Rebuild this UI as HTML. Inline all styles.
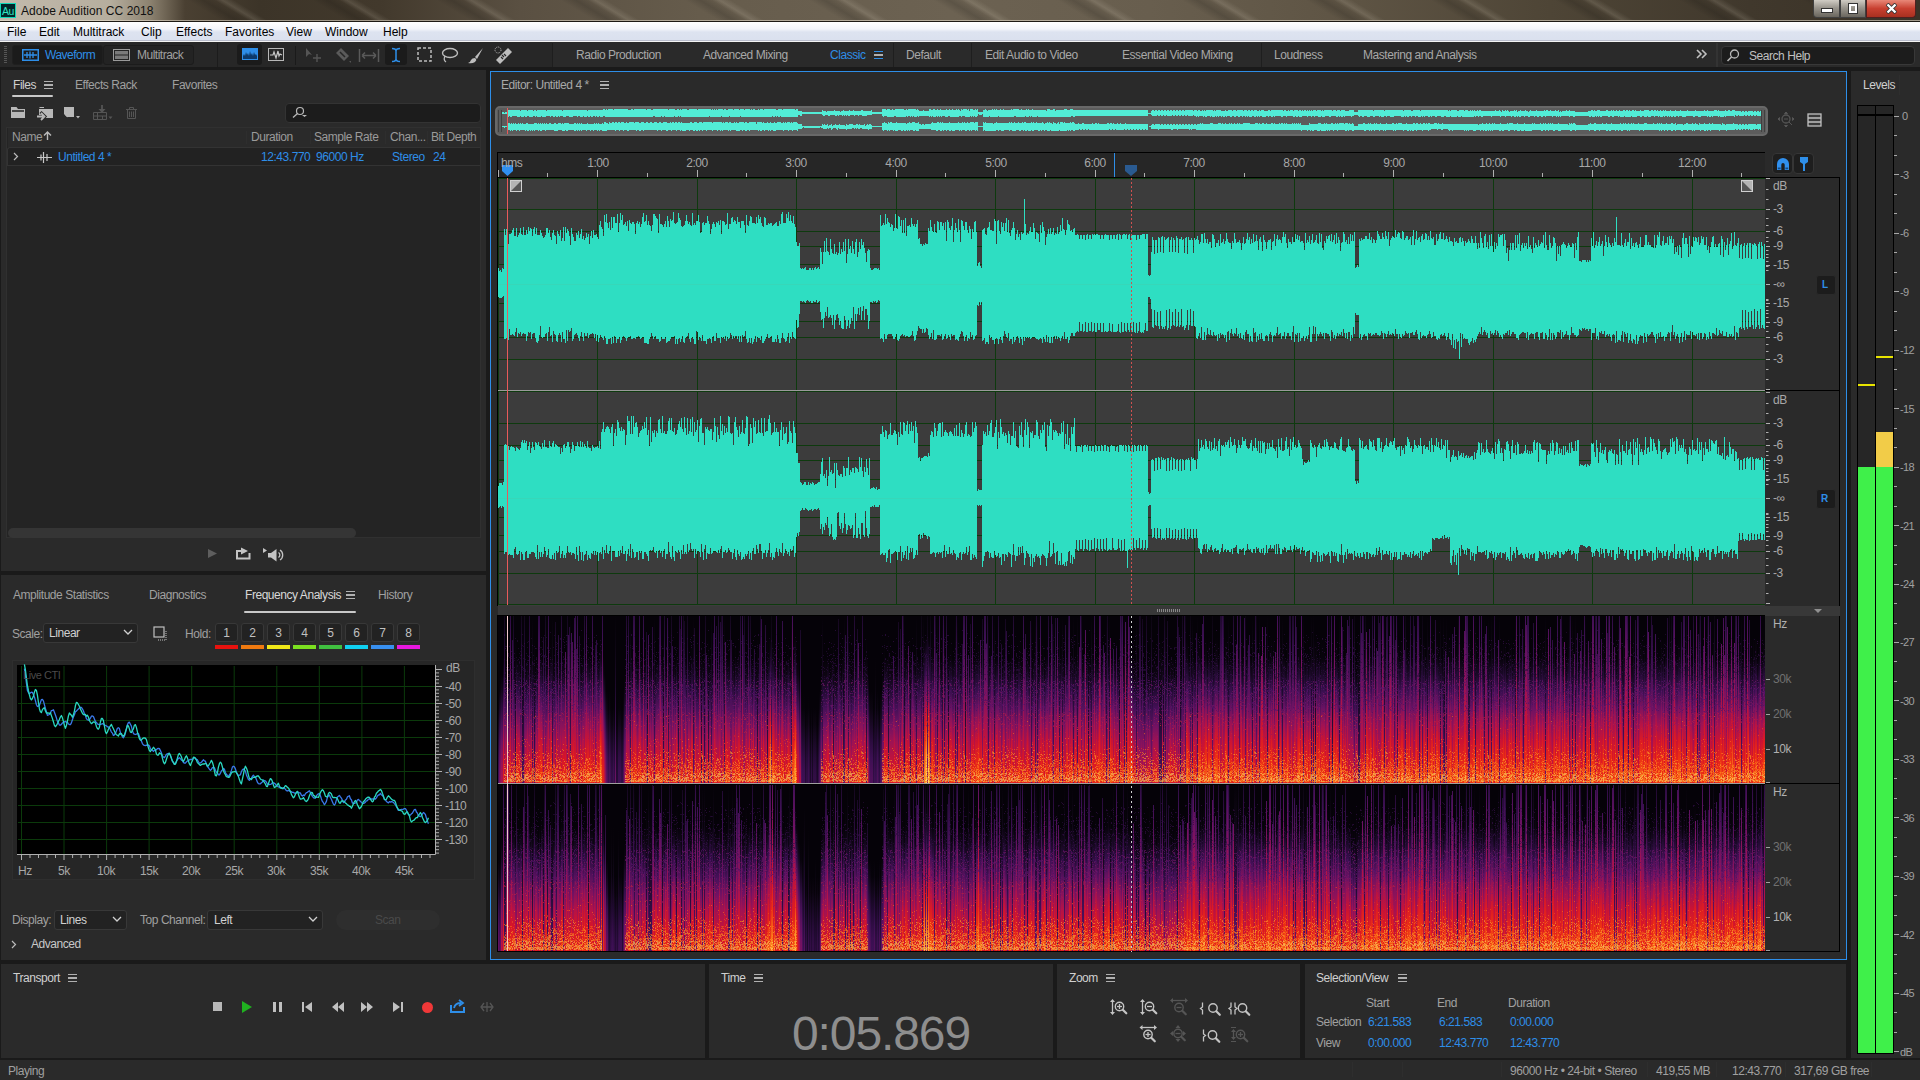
<!DOCTYPE html>
<html><head><meta charset="utf-8">
<style>
*{box-sizing:border-box;margin:0;padding:0}
html,body{width:1920px;height:1080px;overflow:hidden;background:#1a1a1a;font-family:"Liberation Sans",sans-serif;font-size:12px;color:#a8a8a8}
.a{position:absolute}
.t{position:absolute;white-space:nowrap;letter-spacing:-0.45px;line-height:14px}
.pn{position:absolute;background:#2a2a2a}
.blue{color:#2e8ee8}
.hb{position:absolute;width:9px;height:8px;border-top:1.5px solid #b0b0b0;border-bottom:1.5px solid #b0b0b0}
.hb:after{content:"";position:absolute;left:0;right:0;top:2px;height:1.5px;background:#b0b0b0}
</style></head><body>
<!-- TITLE BAR -->
<div class="a" style="left:0;top:0;width:1920px;height:22px;background:linear-gradient(90deg,#c2baac 0px,#b6ae9e 110px,#8c8270 150px,#4a4032 185px,#3c3428 260px,#42392c 380px,#5a5042 520px,#665c4c 700px,#6c6252 950px,#685e4e 1150px,#5e5444 1350px,#4e4536 1550px,#40382c 1750px,#3a3227 1920px)"></div>
<div class="a" style="left:170px;top:0;width:1640px;height:20px;background:repeating-linear-gradient(31deg,transparent 0px,transparent 26px,rgba(0,0,0,0.15) 34px,rgba(0,0,0,0.04) 40px,rgba(255,245,225,0.12) 44px,transparent 50px,transparent 64px)"></div>
<div class="a" style="left:0;top:20px;width:1920px;height:1px;background:rgba(230,222,205,0.6)"></div>
<div class="a" style="left:0;top:21px;width:1920px;height:1px;background:#1e1a14"></div>
<div class="a" style="left:0;top:3px;width:16px;height:15px;background:#00262a;border:1px solid #10d8b8"></div>
<div class="t" style="left:2px;top:4px;font-size:10.5px;color:#30e4c4;letter-spacing:-0.6px">Au</div>
<div class="t" style="left:21px;top:4px;font-size:12px;color:#101010;letter-spacing:0.05px">Adobe Audition CC 2018</div>
<div class="a" style="left:1813px;top:0;width:27px;height:18px;border:1px solid #404040;border-top:none;border-radius:0 0 0 4px;background:linear-gradient(#d0ccc4,#9a968e 45%,#6a665e)"></div>
<div class="a" style="left:1822px;top:9px;width:10px;height:3px;background:#fff;box-shadow:0 0 0 1px #333"></div>
<div class="a" style="left:1840px;top:0;width:26px;height:18px;border:1px solid #404040;border-top:none;background:linear-gradient(#d0ccc4,#9a968e 45%,#6a665e)"></div>
<div class="a" style="left:1849px;top:4px;width:8px;height:9px;border:2px solid #fff;box-shadow:0 0 0 1px #333"></div>
<div class="a" style="left:1866px;top:0;width:50px;height:18px;border:1px solid #502020;border-top:none;border-radius:0 0 4px 0;background:linear-gradient(#e88878,#c84030 50%,#a83020)"></div>
<svg class="a" style="left:1886px;top:3px" width="11" height="11"><path d="M1 1L10 10M10 1L1 10" stroke="#333" stroke-width="4"/><path d="M1.5 1.5L9.5 9.5M9.5 1.5L1.5 9.5" stroke="#fff" stroke-width="2.4"/></svg>
<!-- MENU BAR -->
<div class="a" style="left:0;top:22px;width:1920px;height:20px;background:linear-gradient(#ffffff 0,#f3f5fa 35%,#dde3f0 50%,#dae0ee 100%)"></div>
<div class="a" style="left:0;top:40px;width:1920px;height:1px;background:#b9bdcc"></div><div class="a" style="left:0;top:41px;width:1920px;height:1px;background:#f4f4f4"></div>
<div class="t" style="top:25px;left:7px;color:#000;letter-spacing:0">File</div>
<div class="t" style="top:25px;left:39px;color:#000;letter-spacing:0">Edit</div>
<div class="t" style="top:25px;left:73px;color:#000;letter-spacing:0">Multitrack</div>
<div class="t" style="top:25px;left:141px;color:#000;letter-spacing:0">Clip</div>
<div class="t" style="top:25px;left:176px;color:#000;letter-spacing:0">Effects</div>
<div class="t" style="top:25px;left:225px;color:#000;letter-spacing:0">Favorites</div>
<div class="t" style="top:25px;left:286px;color:#000;letter-spacing:0">View</div>
<div class="t" style="top:25px;left:325px;color:#000;letter-spacing:0">Window</div>
<div class="t" style="top:25px;left:383px;color:#000;letter-spacing:0">Help</div>
<!-- TOOLBAR -->
<div class="a" style="left:0;top:42px;width:1920px;height:25px;background:#2a2a2a"></div><div class="a" style="left:0;top:42px;width:552px;height:25px;background:#272727"></div>
<div class="a" style="left:4px;top:46px;width:3px;height:18px;background:repeating-linear-gradient(#555 0 1px,transparent 1px 2px)"></div>
<div class="a" style="left:12px;top:45px;width:91px;height:20px;background:#1b1b1b;border:1px solid #1f1f1f;border-radius:3px"></div>
<div class="a" style="left:103px;top:45px;width:91px;height:20px;background:#232323;border:1px solid #1c1c1c;border-radius:3px"></div>
<svg class="a" style="left:22px;top:49px" width="17" height="12"><rect x="0.75" y="0.75" width="15.5" height="10.5" fill="none" stroke="#2e8ee8" stroke-width="1.5"/><path d="M2 6H15M5 3V9M8 2.5V9.5M11 3V9" stroke="#2e8ee8" stroke-width="1.3"/></svg>
<div class="t blue" style="left:45px;top:48px;letter-spacing:-0.5px">Waveform</div>
<svg class="a" style="left:113px;top:49px" width="17" height="12"><rect x="0.5" y="0.5" width="16" height="11" fill="none" stroke="#9a9a9a" stroke-width="1"/><rect x="2" y="2" width="13" height="3.5" fill="#7a7a7a"/><rect x="2" y="6.5" width="13" height="3.5" fill="#7a7a7a"/></svg>
<div class="t" style="left:137px;top:48px;color:#a0a0a0;letter-spacing:-0.5px">Multitrack</div>
<div class="a" style="left:217px;top:43px;width:1px;height:24px;background:#1c1c1c"></div>
<div class="a" style="left:237px;top:44px;width:25px;height:21px;background:#1b1b1b;border-radius:3px"></div>
<svg class="a" style="left:242px;top:48px" width="16" height="12"><rect x="0" y="0" width="16" height="12" fill="#2e8ee8"/><path d="M1 11V8L2 6L3 8L4 4L5 7L6 5L7 8L8 3L9 7L10 5L11 8L12 4L13 7L14 6L15 8V11Z" fill="#0d3a6a"/></svg>
<svg class="a" style="left:268px;top:48px" width="16" height="13"><rect x="0.5" y="0.5" width="15" height="12" fill="none" stroke="#b8b8b8"/><path d="M2 7H5L6 4L8 10L10 3L11 8L12 6L14 7" fill="none" stroke="#c8c8c8" stroke-width="1.2"/></svg>
<div class="a" style="left:295px;top:46px;width:1px;height:19px;background:#1a1a1a"></div>
<svg class="a" style="left:305px;top:47px" width="19" height="16"><path d="M1 1V10L4 7L7 8Z" fill="#555"/><path d="M12 7V15M8 11H16" stroke="#555" stroke-width="1.4"/></svg>
<svg class="a" style="left:334px;top:47px" width="19" height="17"><path d="M2 6L7 1L15 9L10 14Z" fill="#5a5a5a"/><path d="M6 5L11 10" stroke="#262626" stroke-width="1.5"/><path d="M15 14L17 14L17 16Z" fill="#555"/></svg>
<svg class="a" style="left:358px;top:48px" width="22" height="15"><path d="M1.5 1V14M20.5 1V14M4 7.5H18M4 7.5L7 4.5M4 7.5L7 10.5M18 7.5L15 4.5M18 7.5L15 10.5" stroke="#5a5a5a" stroke-width="1.5" fill="none"/></svg>
<div class="a" style="left:385px;top:44px;width:22px;height:21px;background:#1b1b1b;border-radius:3px"></div>
<svg class="a" style="left:390px;top:47px" width="12" height="16"><path d="M2 1.5Q6 1.5 6 4V12Q6 14.5 2 14.5M10 1.5Q6 1.5 6 4V12Q6 14.5 10 14.5" stroke="#2e8ee8" stroke-width="1.5" fill="none"/></svg>
<svg class="a" style="left:417px;top:47px" width="15" height="15"><rect x="1" y="1" width="13" height="13" fill="none" stroke="#bdbdbd" stroke-width="1.5" stroke-dasharray="3 2"/></svg>
<svg class="a" style="left:441px;top:47px" width="18" height="16"><ellipse cx="9" cy="6" rx="7.5" ry="4.5" fill="none" stroke="#bdbdbd" stroke-width="1.4"/><path d="M4 9Q2 13 5 15" stroke="#bdbdbd" stroke-width="1.2" fill="none"/></svg>
<svg class="a" style="left:467px;top:47px" width="18" height="17"><path d="M16 1L8 10L10 12Z" fill="#bdbdbd"/><path d="M8 11Q5 11 4 13Q3 16 1 16Q5 17 8 15Q10 13 9 12Z" fill="#bdbdbd"/></svg>
<svg class="a" style="left:494px;top:46px" width="19" height="19"><path d="M14 2L18 6L6 18L2 14Z" fill="#bdbdbd"/><path d="M8 9L10 11M10 8L12 10M7 11L9 13" stroke="#262626" stroke-width="1.2"/><circle cx="4" cy="4" r="3" fill="none" stroke="#bdbdbd" stroke-dasharray="1 1"/></svg>
<div class="a" style="left:552px;top:43px;width:1px;height:24px;background:#1e1e1e"></div>
<div class="t" style="left:576px;top:48px;color:#a8a8a8">Radio Production</div>
<div class="t" style="left:703px;top:48px;color:#a8a8a8">Advanced Mixing</div>
<div class="t blue" style="left:830px;top:48px">Classic</div>
<div class="hb" style="left:874px;top:51px;border-color:#2e8ee8;width:9px"></div>
<div class="a" style="left:893px;top:43px;width:1px;height:24px;background:#1e1e1e"></div>
<div class="t" style="left:906px;top:48px;color:#a8a8a8">Default</div>
<div class="a" style="left:971px;top:43px;width:1px;height:24px;background:#1e1e1e"></div>
<div class="t" style="left:985px;top:48px;color:#a8a8a8">Edit Audio to Video</div>
<div class="t" style="left:1122px;top:48px;color:#a8a8a8">Essential Video Mixing</div>
<div class="a" style="left:1261px;top:43px;width:1px;height:24px;background:#1e1e1e"></div>
<div class="t" style="left:1274px;top:48px;color:#a8a8a8">Loudness</div>
<div class="t" style="left:1363px;top:48px;color:#a8a8a8">Mastering and Analysis</div>
<svg class="a" style="left:1696px;top:49px" width="12" height="10"><path d="M1 1L5 5L1 9M6 1L10 5L6 9" stroke="#c0c0c0" stroke-width="1.6" fill="none"/></svg>
<div class="a" style="left:1716px;top:43px;width:2px;height:24px;background:#333"></div>
<div class="a" style="left:1721px;top:46px;width:194px;height:19px;background:#1c1c1c;border:1px solid #383838;border-radius:4px"></div>
<svg class="a" style="left:1726px;top:49px" width="14" height="14"><circle cx="8.5" cy="5" r="4" fill="none" stroke="#b8b8b8" stroke-width="1.3"/><path d="M5.5 8L1.5 12" stroke="#b8b8b8" stroke-width="1.6"/></svg>
<div class="t" style="left:1749px;top:49px;color:#c0c0c0">Search Help</div>
<!-- FILES PANEL -->
<div class="pn" style="left:1px;top:70px;width:485px;height:501px"></div>
<div class="t" style="left:13px;top:78px;color:#d0d0d0">Files</div>
<div class="hb" style="left:44px;top:81px"></div>
<div class="a" style="left:12px;top:95px;width:41px;height:2px;background:#c8c8c8;border-radius:1px"></div>
<div class="t" style="left:75px;top:78px;color:#a0a0a0">Effects Rack</div>
<div class="t" style="left:172px;top:78px;color:#a0a0a0">Favorites</div>
<svg class="a" style="left:10px;top:104px" width="140" height="18">
<path d="M1 3H6.5L8 5H15V14H1Z" fill="#b8b8b8"/><path d="M2 7H14" stroke="#2a2a2a" stroke-width="1.6"/>
<path d="M29.5 3.5H34" stroke="#b8b8b8" stroke-width="1"/><rect x="29" y="5" width="14" height="9" fill="#b8b8b8"/><path d="M27 12.5H33M30.5 8L35 12.5L30.5 17" stroke="#2a2a2a" stroke-width="3" fill="none"/><path d="M27 12.5H33M31 9L34.5 12.5L31 16" stroke="#b8b8b8" stroke-width="1.8" fill="none"/>
<path d="M54 3H64V13H57L54 10Z" fill="#b8b8b8"/><path d="M54.5 10.5L57.5 13.5V10.5Z" fill="#b8b8b8"/><path d="M66 12H70L68 14.5Z" fill="#b8b8b8"/>
<path d="M83.5 8.5H96.5V15.5H83.5ZM83.5 12H96.5M87.5 8.5V15.5M92.5 12V15.5" fill="none" stroke="#555" stroke-width="1"/><path d="M92 1V6" stroke="#555" stroke-width="1.8"/><path d="M88.5 5L92 9L95.5 5Z" fill="#555"/><path d="M98.5 12.5H102.5L100.5 15Z" fill="#555"/>
<path d="M116 5.5H127M117.5 6V14.5H125.5V6M119.5 7.5V13M121.5 7.5V13M123.5 7.5V13M119.5 5V3.5H123.5V5" stroke="#555" stroke-width="1" fill="none"/>
</svg>
<div class="a" style="left:285px;top:103px;width:196px;height:20px;background:#1c1c1c;border:1px solid #333;border-radius:4px"></div>
<svg class="a" style="left:290px;top:106px" width="20" height="12"><circle cx="10" cy="5" r="3.5" fill="none" stroke="#b8b8b8" stroke-width="1.2"/><path d="M7.5 7.5L3 11.5" stroke="#b8b8b8" stroke-width="1.3"/><path d="M12 9H17L14.5 11Z" fill="#b8b8b8"/></svg>
<div class="a" style="left:6px;top:127px;width:475px;height:411px;border:1px solid #303030;background:#242424"></div>
<div class="a" style="left:8px;top:128px;width:472px;height:19px;background:#2a2a2a"></div><div class="t" style="left:12px;top:130px;color:#9a9a9a">Name</div>
<svg class="a" style="left:43px;top:131px" width="9" height="10"><path d="M4.5 9V1M1 4.5L4.5 1L8 4.5" stroke="#bbb" stroke-width="1.4" fill="none"/></svg>
<div class="a" style="left:246px;top:131px;width:1px;height:13px;background:#2e2e2e"></div>
<div class="a" style="left:310px;top:131px;width:1px;height:13px;background:#2e2e2e"></div>
<div class="a" style="left:385px;top:131px;width:1px;height:13px;background:#2e2e2e"></div>
<div class="a" style="left:427px;top:131px;width:1px;height:13px;background:#2e2e2e"></div>
<div class="t" style="left:251px;top:130px;color:#9a9a9a">Duration</div>
<div class="t" style="left:314px;top:130px;color:#9a9a9a">Sample Rate</div>
<div class="t" style="left:390px;top:130px;color:#9a9a9a">Chan...</div>
<div class="t" style="left:431px;top:130px;color:#9a9a9a">Bit Depth</div>
<div class="a" style="left:7px;top:147px;width:473px;height:19px;background:#222222;border-top:1px solid #333;border-bottom:1px solid #333;border-left:1px solid #333;border-radius:3px 0 0 0"></div>
<svg class="a" style="left:13px;top:152px" width="6" height="9"><path d="M1 1L4.5 4.5L1 8" stroke="#bbb" stroke-width="1.2" fill="none"/></svg>
<svg class="a" style="left:37px;top:151px" width="15" height="12"><path d="M0 6.5H15M4 3.5V9.5M6.5 1V12M10 3V10" stroke="#c8c8c8" stroke-width="1.2"/></svg>
<div class="t blue" style="left:58px;top:150px">Untitled 4 *</div>
<div class="t blue" style="left:261px;top:150px">12:43.770</div>
<div class="t blue" style="left:316px;top:150px">96000 Hz</div>
<div class="t blue" style="left:392px;top:150px">Stereo</div>
<div class="t blue" style="left:433px;top:150px">24</div>
<div class="a" style="left:8px;top:528px;width:348px;height:10px;background:#353535;border-radius:5px"></div>
<svg class="a" style="left:205px;top:545px" width="85" height="20"><path d="M3 4L12 8.5L3 13Z" fill="#5e5e5e"/><path d="M32 5V13.5H44.5V8" fill="none" stroke="#c4c4c4" stroke-width="2"/><path d="M31 6H36" stroke="#c4c4c4" stroke-width="2"/><path d="M36 2.5V9.5L43 6Z" fill="#c4c4c4"/><path d="M58 3V8L62 5.5Z" fill="#c4c4c4"/><path d="M63 8H66L71.5 4V16.5L66 12.5H63Z" fill="#c4c4c4"/><path d="M73.5 7.5A3 3 0 0 1 73.5 12.5M75 5A6 6 0 0 1 75 15" fill="none" stroke="#c4c4c4" stroke-width="1.3"/></svg>
<!-- FREQUENCY ANALYSIS PANEL -->
<div class="pn" style="left:1px;top:575px;width:485px;height:385px"></div>
<div class="t" style="left:13px;top:588px;color:#a0a0a0">Amplitude Statistics</div>
<div class="t" style="left:149px;top:588px;color:#a0a0a0">Diagnostics</div>
<div class="t" style="left:245px;top:588px;color:#d8d8d8">Frequency Analysis</div>
<div class="hb" style="left:346px;top:591px"></div>
<div class="t" style="left:378px;top:588px;color:#a0a0a0">History</div>
<div class="a" style="left:244px;top:611px;width:112px;height:2px;background:#c8c8c8;border-radius:1px"></div>
<div class="t" style="left:12px;top:627px;color:#a0a0a0">Scale:</div>
<div class="a" style="left:43px;top:623px;width:95px;height:20px;background:#222222;border:1px solid #383838;border-radius:3px"></div>
<div class="t" style="left:49px;top:626px;color:#d0d0d0">Linear</div>
<svg class="a" style="left:123px;top:629px" width="10" height="7"><path d="M1 1L5 5L9 1" stroke="#d0d0d0" stroke-width="1.3" fill="none"/></svg>
<svg class="a" style="left:153px;top:626px" width="16" height="16"><rect x="1" y="1" width="10" height="10" fill="none" stroke="#c0c0c0" stroke-width="1.2"/><path d="M13 5V14H4" stroke="#c0c0c0" stroke-dasharray="1 1" fill="none"/></svg>
<div class="t" style="left:185px;top:627px;color:#a0a0a0">Hold:</div>
<div class="a" style="left:215px;top:623px;width:23px;height:19px;background:#222222;border:1px solid #383838;border-radius:3px"></div><div class="t" style="left:215px;top:626px;width:23px;text-align:center;color:#c0c0c0;letter-spacing:0">1</div><div class="a" style="left:215px;top:645px;width:23px;height:4px;background:#e8120e"></div><div class="a" style="left:241px;top:623px;width:23px;height:19px;background:#222222;border:1px solid #383838;border-radius:3px"></div><div class="t" style="left:241px;top:626px;width:23px;text-align:center;color:#c0c0c0;letter-spacing:0">2</div><div class="a" style="left:241px;top:645px;width:23px;height:4px;background:#f07a10"></div><div class="a" style="left:267px;top:623px;width:23px;height:19px;background:#222222;border:1px solid #383838;border-radius:3px"></div><div class="t" style="left:267px;top:626px;width:23px;text-align:center;color:#c0c0c0;letter-spacing:0">3</div><div class="a" style="left:267px;top:645px;width:23px;height:4px;background:#f0e818"></div><div class="a" style="left:293px;top:623px;width:23px;height:19px;background:#222222;border:1px solid #383838;border-radius:3px"></div><div class="t" style="left:293px;top:626px;width:23px;text-align:center;color:#c0c0c0;letter-spacing:0">4</div><div class="a" style="left:293px;top:645px;width:23px;height:4px;background:#7ce020"></div><div class="a" style="left:319px;top:623px;width:23px;height:19px;background:#222222;border:1px solid #383838;border-radius:3px"></div><div class="t" style="left:319px;top:626px;width:23px;text-align:center;color:#c0c0c0;letter-spacing:0">5</div><div class="a" style="left:319px;top:645px;width:23px;height:4px;background:#40c040"></div><div class="a" style="left:345px;top:623px;width:23px;height:19px;background:#222222;border:1px solid #383838;border-radius:3px"></div><div class="t" style="left:345px;top:626px;width:23px;text-align:center;color:#c0c0c0;letter-spacing:0">6</div><div class="a" style="left:345px;top:645px;width:23px;height:4px;background:#10d0f0"></div><div class="a" style="left:371px;top:623px;width:23px;height:19px;background:#222222;border:1px solid #383838;border-radius:3px"></div><div class="t" style="left:371px;top:626px;width:23px;text-align:center;color:#c0c0c0;letter-spacing:0">7</div><div class="a" style="left:371px;top:645px;width:23px;height:4px;background:#3890f0"></div><div class="a" style="left:397px;top:623px;width:23px;height:19px;background:#222222;border:1px solid #383838;border-radius:3px"></div><div class="t" style="left:397px;top:626px;width:23px;text-align:center;color:#c0c0c0;letter-spacing:0">8</div><div class="a" style="left:397px;top:645px;width:23px;height:4px;background:#e818e0"></div>
<div class="a" style="left:12px;top:660px;width:463px;height:220px;border:1px solid #2e2e2e;background:#262626"></div>
<div class="a" style="left:17px;top:665px;width:418px;height:189px;background:#000"></div>
<svg class="a" style="left:0;top:0" width="490" height="960"><path d="M21.5 666V854M64.0 666V854M106.6 666V854M149.1 666V854M191.7 666V854M234.2 666V854M276.8 666V854M319.3 666V854M361.9 666V854M404.4 666V854M18 686.5H435M18 703.5H435M18 720.5H435M18 737.5H435M18 754.5H435M18 771.5H435M18 788.5H435M18 805.5H435M18 822.5H435M18 839.5H435" stroke="#0b3a0b" stroke-width="1" fill="none"/><path d="M435.5 665V854.5H17M435 669.5h7M435 672.9h4M435 676.3h4M435 679.7h4M435 683.1h4M435 686.5h7M435 689.9h4M435 693.3h4M435 696.7h4M435 700.1h4M435 703.5h7M435 706.9h4M435 710.3h4M435 713.7h4M435 717.1h4M435 720.5h7M435 723.9h4M435 727.3h4M435 730.7h4M435 734.1h4M435 737.5h7M435 740.9h4M435 744.3h4M435 747.7h4M435 751.1h4M435 754.5h7M435 757.9h4M435 761.3h4M435 764.7h4M435 768.1h4M435 771.5h7M435 774.9h4M435 778.3h4M435 781.7h4M435 785.1h4M435 788.5h7M435 791.9h4M435 795.3h4M435 798.7h4M435 802.1h4M435 805.5h7M435 808.9h4M435 812.3h4M435 815.7h4M435 819.1h4M435 822.5h7M435 825.9h4M435 829.3h4M435 832.7h4M435 836.1h4M435 839.5h7M435 842.9h4M435 846.3h4M435 849.7h4M435 853.1h4M21.5 854v6M30.0 854v4M38.5 854v4M47.0 854v4M55.5 854v4M64.0 854v6M72.6 854v4M81.1 854v4M89.6 854v4M98.1 854v4M106.6 854v6M115.1 854v4M123.6 854v4M132.1 854v4M140.6 854v4M149.1 854v6M157.7 854v4M166.2 854v4M174.7 854v4M183.2 854v4M191.7 854v6M200.2 854v4M208.7 854v4M217.2 854v4M225.7 854v4M234.2 854v6M242.8 854v4M251.3 854v4M259.8 854v4M268.3 854v4M276.8 854v6M285.3 854v4M293.8 854v4M302.3 854v4M310.8 854v4M319.3 854v6M327.9 854v4M336.4 854v4M344.9 854v4M353.4 854v4M361.9 854v6M370.4 854v4M378.9 854v4M387.4 854v4M395.9 854v4M404.4 854v6M413.0 854v4M421.5 854v4M430.0 854v4" stroke="#b0b0b0" stroke-width="1" fill="none"/><path d="M24.4 668.7L25.4 674.5L26.4 682.9L27.4 690.4L28.4 692.5L29.4 693.9L30.4 692.9L31.4 692.2L32.4 692.4L33.4 694.5L34.4 696.9L35.4 700.5L36.4 704.5L37.4 706.5L38.4 706.2L39.4 705.2L40.4 702.5L41.4 699.6L42.4 699.4L43.4 700.8L44.4 704.6L45.4 708.5L46.4 711.7L47.4 715.4L48.4 714.9L49.4 714.5L50.4 713.3L51.4 710.6L52.4 710.3L53.4 709.8L54.4 712.2L55.4 715.0L56.4 717.8L57.4 721.4L58.4 722.9L59.4 725.0L60.4 725.1L61.4 724.4L62.4 723.0L63.4 722.3L64.4 721.8L65.4 721.3L66.4 722.4L67.4 722.0L68.4 724.0L69.4 724.5L70.4 724.7L71.4 722.9L72.4 719.7L73.4 717.0L74.4 714.8L75.4 711.7L76.4 711.1L77.4 709.9L78.4 709.1L79.4 707.9L80.4 707.4L81.4 707.5L82.4 708.9L83.4 710.7L84.4 713.8L85.4 715.6L86.4 718.6L87.4 719.7L88.4 720.3L89.4 719.5L90.4 718.3L91.4 716.2L92.4 716.0L93.4 716.6L94.4 719.1L95.4 721.5L96.4 722.4L97.4 723.9L98.4 724.5L99.4 724.3L100.4 724.3L101.4 724.1L102.4 723.7L103.4 723.8L104.4 725.0L105.4 725.3L106.4 725.8L107.4 726.8L108.4 726.9L109.4 727.8L110.4 729.7L111.4 732.1L112.4 733.1L113.4 735.5L114.4 734.9L115.4 733.4L116.4 730.9L117.4 728.3L118.4 727.7L119.4 728.6L120.4 732.6L121.4 734.5L122.4 736.7L123.4 737.7L124.4 736.2L125.4 733.2L126.4 728.6L127.4 724.7L128.4 722.6L129.4 722.2L130.4 724.2L131.4 726.1L132.4 730.6L133.4 733.4L134.4 734.2L135.4 734.5L136.4 734.1L137.4 733.6L138.4 733.6L139.4 736.3L140.4 739.0L141.4 741.0L142.4 743.6L143.4 744.9L144.4 745.4L145.4 745.6L146.4 745.0L147.4 745.7L148.4 745.0L149.4 745.8L150.4 748.8L151.4 749.7L152.4 750.3L153.4 751.4L154.4 750.3L155.4 750.2L156.4 749.7L157.4 748.6L158.4 748.3L159.4 748.6L160.4 750.6L161.4 752.7L162.4 755.9L163.4 757.0L164.4 757.7L165.4 756.1L166.4 754.4L167.4 753.8L168.4 753.4L169.4 753.7L170.4 755.5L171.4 758.4L172.4 761.3L173.4 762.6L174.4 764.0L175.4 763.4L176.4 761.4L177.4 759.6L178.4 758.5L179.4 757.7L180.4 758.7L181.4 760.1L182.4 760.5L183.4 762.4L184.4 763.1L185.4 763.1L186.4 761.8L187.4 761.0L188.4 760.5L189.4 759.9L190.4 759.4L191.4 759.5L192.4 759.2L193.4 758.6L194.4 757.7L195.4 758.3L196.4 759.5L197.4 759.7L198.4 761.9L199.4 763.1L200.4 762.9L201.4 762.3L202.4 761.0L203.4 759.8L204.4 760.9L205.4 761.2L206.4 763.9L207.4 766.5L208.4 767.7L209.4 769.1L210.4 770.2L211.4 769.4L212.4 767.7L213.4 767.3L214.4 767.8L215.4 770.3L216.4 772.1L217.4 772.8L218.4 774.8L219.4 774.9L220.4 773.2L221.4 771.0L222.4 769.9L223.4 768.7L224.4 769.2L225.4 772.5L226.4 774.1L227.4 775.5L228.4 776.7L229.4 774.9L230.4 773.3L231.4 770.4L232.4 767.1L233.4 766.2L234.4 766.9L235.4 768.9L236.4 772.2L237.4 774.1L238.4 775.8L239.4 775.1L240.4 774.8L241.4 771.7L242.4 769.7L243.4 768.9L244.4 769.9L245.4 771.2L246.4 774.9L247.4 777.3L248.4 779.5L249.4 780.3L250.4 779.0L251.4 778.4L252.4 776.4L253.4 775.2L254.4 776.7L255.4 777.0L256.4 779.6L257.4 782.2L258.4 783.6L259.4 783.8L260.4 783.8L261.4 782.7L262.4 781.9L263.4 780.0L264.4 780.7L265.4 780.9L266.4 782.2L267.4 784.1L268.4 784.4L269.4 784.5L270.4 784.4L271.4 784.0L272.4 782.7L273.4 782.9L274.4 783.2L275.4 784.1L276.4 785.5L277.4 786.1L278.4 786.9L279.4 787.1L280.4 788.0L281.4 787.6L282.4 788.1L283.4 788.6L284.4 788.1L285.4 789.3L286.4 790.6L287.4 791.0L288.4 790.4L289.4 790.8L290.4 791.8L291.4 791.7L292.4 792.4L293.4 792.3L294.4 793.2L295.4 793.1L296.4 792.9L297.4 791.5L298.4 792.4L299.4 792.8L300.4 793.0L301.4 795.3L302.4 796.1L303.4 795.0L304.4 795.7L305.4 793.8L306.4 792.6L307.4 792.3L308.4 791.5L309.4 790.8L310.4 792.6L311.4 794.7L312.4 796.4L313.4 797.6L314.4 798.2L315.4 798.1L316.4 795.5L317.4 794.8L318.4 793.8L319.4 793.5L320.4 795.7L321.4 798.9L322.4 801.4L323.4 802.7L324.4 804.7L325.4 803.3L326.4 801.4L327.4 797.4L328.4 795.8L329.4 795.0L330.4 797.4L331.4 799.2L332.4 801.7L333.4 804.1L334.4 805.1L335.4 803.5L336.4 799.9L337.4 797.0L338.4 796.3L339.4 795.4L340.4 796.9L341.4 798.1L342.4 800.2L343.4 802.6L344.4 802.1L345.4 800.0L346.4 799.3L347.4 796.9L348.4 796.3L349.4 795.7L350.4 798.7L351.4 799.7L352.4 803.0L353.4 803.5L354.4 803.4L355.4 803.0L356.4 802.3L357.4 800.0L358.4 799.4L359.4 800.5L360.4 801.3L361.4 802.4L362.4 803.4L363.4 803.4L364.4 803.1L365.4 802.2L366.4 800.9L367.4 800.6L368.4 799.1L369.4 799.1L370.4 798.6L371.4 799.1L372.4 798.8L373.4 799.2L374.4 798.6L375.4 799.1L376.4 797.9L377.4 796.0L378.4 795.0L379.4 794.8L380.4 793.4L381.4 794.9L382.4 795.3L383.4 796.8L384.4 799.0L385.4 799.9L386.4 801.3L387.4 802.3L388.4 802.9L389.4 801.6L390.4 802.1L391.4 801.7L392.4 801.9L393.4 802.3L394.4 803.6L395.4 804.8L396.4 806.7L397.4 808.2L398.4 810.4L399.4 810.2L400.4 810.0L401.4 809.3L402.4 809.7L403.4 809.1L404.4 808.7L405.4 808.7L406.4 810.2L407.4 812.3L408.4 814.3L409.4 814.8L410.4 815.2L411.4 813.8L412.4 813.1L413.4 811.3L414.4 809.6L415.4 809.3L416.4 812.0L417.4 813.2L418.4 815.4L419.4 816.1L420.4 816.6L421.4 815.6L422.4 814.0L423.4 812.5L424.4 813.3L425.4 814.5L426.4 818.0L427.4 821.0L428.4 823.7" stroke="#3a78e8" stroke-width="1.3" fill="none" stroke-linejoin="round"/><path d="M24.4 664.4L25.4 669.8L26.4 677.8L27.4 685.5L28.4 690.5L29.4 694.9L30.4 698.7L31.4 699.9L32.4 698.5L33.4 696.3L34.4 692.2L35.4 689.5L36.4 690.5L37.4 695.2L38.4 702.2L39.4 708.7L40.4 711.7L41.4 712.5L42.4 709.6L43.4 708.4L44.4 707.7L45.4 710.7L46.4 713.0L47.4 712.9L48.4 713.0L49.4 713.3L50.4 712.8L51.4 715.6L52.4 718.4L53.4 721.7L54.4 725.3L55.4 726.7L56.4 725.5L57.4 723.6L58.4 721.4L59.4 719.5L60.4 717.0L61.4 715.5L62.4 717.8L63.4 721.4L64.4 725.2L65.4 728.3L66.4 725.5L67.4 721.1L68.4 716.0L69.4 713.0L70.4 714.2L71.4 715.2L72.4 717.2L73.4 714.8L74.4 711.1L75.4 705.8L76.4 702.4L77.4 702.9L78.4 704.5L79.4 706.3L80.4 709.0L81.4 711.1L82.4 713.1L83.4 714.6L84.4 714.7L85.4 714.4L86.4 716.2L87.4 715.3L88.4 717.0L89.4 720.5L90.4 722.3L91.4 723.6L92.4 722.9L93.4 721.8L94.4 722.1L95.4 722.9L96.4 726.4L97.4 728.6L98.4 729.1L99.4 727.2L100.4 722.0L101.4 718.5L102.4 718.5L103.4 720.6L104.4 725.8L105.4 731.6L106.4 733.6L107.4 732.0L108.4 729.3L109.4 727.3L110.4 725.8L111.4 724.4L112.4 726.8L113.4 728.7L114.4 730.9L115.4 733.3L116.4 734.7L117.4 735.3L118.4 736.1L119.4 733.7L120.4 734.1L121.4 733.5L122.4 735.5L123.4 736.1L124.4 734.9L125.4 731.9L126.4 729.0L127.4 725.5L128.4 725.9L129.4 728.9L130.4 732.1L131.4 732.5L132.4 730.4L133.4 728.9L134.4 725.2L135.4 724.6L136.4 727.4L137.4 731.8L138.4 735.5L139.4 738.6L140.4 740.1L141.4 740.2L142.4 738.6L143.4 738.0L144.4 737.9L145.4 738.2L146.4 739.7L147.4 743.5L148.4 747.8L149.4 750.5L150.4 751.5L151.4 750.0L152.4 749.0L153.4 747.2L154.4 748.4L155.4 749.8L156.4 753.8L157.4 755.1L158.4 755.0L159.4 752.9L160.4 753.6L161.4 753.8L162.4 758.1L163.4 761.9L164.4 763.8L165.4 762.5L166.4 759.3L167.4 756.2L168.4 754.3L169.4 753.3L170.4 755.3L171.4 758.2L172.4 760.9L173.4 762.4L174.4 764.4L175.4 764.2L176.4 761.5L177.4 758.1L178.4 754.5L179.4 753.5L180.4 754.8L181.4 756.8L182.4 760.2L183.4 761.4L184.4 759.7L185.4 757.2L186.4 755.8L187.4 757.9L188.4 761.0L189.4 763.9L190.4 765.5L191.4 762.8L192.4 760.8L193.4 757.2L194.4 757.3L195.4 758.3L196.4 759.9L197.4 762.6L198.4 763.6L199.4 764.5L200.4 765.4L201.4 764.6L202.4 764.1L203.4 764.0L204.4 764.0L205.4 763.3L206.4 764.1L207.4 766.2L208.4 765.8L209.4 764.0L210.4 762.5L211.4 760.4L212.4 762.3L213.4 765.6L214.4 771.2L215.4 775.5L216.4 775.9L217.4 772.6L218.4 767.1L219.4 763.7L220.4 762.2L221.4 763.4L222.4 767.0L223.4 770.5L224.4 773.0L225.4 774.6L226.4 776.7L227.4 776.9L228.4 777.3L229.4 777.1L230.4 775.1L231.4 773.0L232.4 772.0L233.4 771.8L234.4 771.6L235.4 771.4L236.4 772.6L237.4 774.3L238.4 776.4L239.4 779.5L240.4 782.4L241.4 783.9L242.4 779.2L243.4 774.7L244.4 769.1L245.4 766.2L246.4 768.1L247.4 770.7L248.4 775.1L249.4 778.5L250.4 778.7L251.4 779.6L252.4 778.0L253.4 777.5L254.4 777.1L255.4 777.5L256.4 776.3L257.4 775.9L258.4 776.0L259.4 777.3L260.4 778.9L261.4 779.7L262.4 779.8L263.4 781.2L264.4 782.3L265.4 784.0L266.4 786.3L267.4 786.6L268.4 783.6L269.4 780.7L270.4 778.6L271.4 779.3L272.4 781.5L273.4 785.0L274.4 787.5L275.4 787.0L276.4 786.1L277.4 784.7L278.4 783.2L279.4 786.0L280.4 787.7L281.4 788.2L282.4 788.7L283.4 787.9L284.4 787.2L285.4 785.7L286.4 786.2L287.4 787.3L288.4 788.0L289.4 789.7L290.4 791.3L291.4 794.4L292.4 796.2L293.4 797.8L294.4 796.8L295.4 794.2L296.4 792.4L297.4 791.4L298.4 794.3L299.4 797.2L300.4 799.2L301.4 799.0L302.4 798.7L303.4 797.6L304.4 799.4L305.4 801.0L306.4 801.5L307.4 800.6L308.4 798.8L309.4 795.8L310.4 793.6L311.4 792.5L312.4 792.7L313.4 795.5L314.4 795.7L315.4 797.6L316.4 796.9L317.4 797.2L318.4 797.4L319.4 795.0L320.4 792.6L321.4 790.8L322.4 789.8L323.4 790.8L324.4 793.0L325.4 796.1L326.4 796.8L327.4 796.9L328.4 793.7L329.4 792.3L330.4 792.8L331.4 794.0L332.4 796.7L333.4 797.7L334.4 797.5L335.4 797.6L336.4 797.6L337.4 798.7L338.4 800.9L339.4 803.0L340.4 803.1L341.4 801.0L342.4 801.0L343.4 801.1L344.4 801.5L345.4 803.0L346.4 803.6L347.4 804.8L348.4 805.3L349.4 806.3L350.4 806.4L351.4 808.2L352.4 806.3L353.4 803.7L354.4 801.8L355.4 800.5L356.4 801.7L357.4 804.7L358.4 806.6L359.4 808.7L360.4 807.8L361.4 806.5L362.4 804.2L363.4 801.6L364.4 800.9L365.4 799.3L366.4 798.3L367.4 797.4L368.4 797.1L369.4 797.4L370.4 799.1L371.4 800.7L372.4 801.8L373.4 800.9L374.4 797.2L375.4 796.0L376.4 793.2L377.4 792.3L378.4 791.0L379.4 790.4L380.4 789.5L381.4 790.5L382.4 793.3L383.4 795.9L384.4 799.6L385.4 799.6L386.4 799.3L387.4 797.1L388.4 795.8L389.4 796.7L390.4 797.9L391.4 799.1L392.4 799.9L393.4 800.3L394.4 800.3L395.4 802.1L396.4 805.4L397.4 808.0L398.4 809.4L399.4 810.4L400.4 810.0L401.4 811.0L402.4 811.3L403.4 813.6L404.4 814.3L405.4 813.9L406.4 812.0L407.4 811.9L408.4 814.2L409.4 815.9L410.4 820.2L411.4 822.0L412.4 821.0L413.4 820.3L414.4 819.9L415.4 818.4L416.4 817.6L417.4 817.7L418.4 815.3L419.4 814.1L420.4 812.5L421.4 814.2L422.4 817.5L423.4 819.5L424.4 821.7L425.4 822.6L426.4 821.8L427.4 820.4L428.4 817.7" stroke="#2ad8c0" stroke-width="1.3" fill="none" stroke-linejoin="round"/></svg><div class="t" style="left:23px;top:668px;color:#4a4a4a;font-size:11px">Live CTI</div><div class="t" style="left:446px;top:661px;color:#a8a8a8">dB</div><div class="t" style="left:445px;top:680px;color:#a8a8a8">-40</div><div class="t" style="left:445px;top:697px;color:#a8a8a8">-50</div><div class="t" style="left:445px;top:714px;color:#a8a8a8">-60</div><div class="t" style="left:445px;top:731px;color:#a8a8a8">-70</div><div class="t" style="left:445px;top:748px;color:#a8a8a8">-80</div><div class="t" style="left:445px;top:765px;color:#a8a8a8">-90</div><div class="t" style="left:445px;top:782px;color:#a8a8a8">-100</div><div class="t" style="left:445px;top:799px;color:#a8a8a8">-110</div><div class="t" style="left:445px;top:816px;color:#a8a8a8">-120</div><div class="t" style="left:445px;top:833px;color:#a8a8a8">-130</div><div class="t" style="left:25px;top:864px;width:40px;margin-left:-20px;text-align:center;color:#a8a8a8">Hz</div><div class="t" style="left:64px;top:864px;width:40px;margin-left:-20px;text-align:center;color:#a8a8a8">5k</div><div class="t" style="left:106px;top:864px;width:40px;margin-left:-20px;text-align:center;color:#a8a8a8">10k</div><div class="t" style="left:149px;top:864px;width:40px;margin-left:-20px;text-align:center;color:#a8a8a8">15k</div><div class="t" style="left:191px;top:864px;width:40px;margin-left:-20px;text-align:center;color:#a8a8a8">20k</div><div class="t" style="left:234px;top:864px;width:40px;margin-left:-20px;text-align:center;color:#a8a8a8">25k</div><div class="t" style="left:276px;top:864px;width:40px;margin-left:-20px;text-align:center;color:#a8a8a8">30k</div><div class="t" style="left:319px;top:864px;width:40px;margin-left:-20px;text-align:center;color:#a8a8a8">35k</div><div class="t" style="left:361px;top:864px;width:40px;margin-left:-20px;text-align:center;color:#a8a8a8">40k</div><div class="t" style="left:404px;top:864px;width:40px;margin-left:-20px;text-align:center;color:#a8a8a8">45k</div>
<div class="t" style="left:12px;top:913px;color:#a0a0a0">Display:</div>
<div class="a" style="left:54px;top:910px;width:73px;height:20px;background:#222222;border:1px solid #383838;border-radius:3px"></div>
<div class="t" style="left:60px;top:913px;color:#d0d0d0">Lines</div>
<svg class="a" style="left:112px;top:916px" width="10" height="7"><path d="M1 1L5 5L9 1" stroke="#d0d0d0" stroke-width="1.3" fill="none"/></svg>
<div class="t" style="left:140px;top:913px;color:#a0a0a0">Top Channel:</div>
<div class="a" style="left:207px;top:910px;width:116px;height:20px;background:#222222;border:1px solid #383838;border-radius:3px"></div>
<div class="t" style="left:214px;top:913px;color:#d0d0d0">Left</div>
<svg class="a" style="left:308px;top:916px" width="10" height="7"><path d="M1 1L5 5L9 1" stroke="#d0d0d0" stroke-width="1.3" fill="none"/></svg>
<div class="a" style="left:336px;top:910px;width:104px;height:20px;background:#2e2e2e;border-radius:10px"></div>
<div class="t" style="left:375px;top:913px;color:#4a4a4a">Scan</div>
<svg class="a" style="left:11px;top:940px" width="6" height="9"><path d="M1 1L4.5 4.5L1 8" stroke="#bbb" stroke-width="1.2" fill="none"/></svg>
<div class="t" style="left:31px;top:937px;color:#c8c8c8">Advanced</div>
<div class="a" style="left:490px;top:71px;width:1357px;height:889px;border:1px solid #2e8ee8;background:#2a2a2a"></div><div class="t" style="left:501px;top:78px;color:#a8a8a8">Editor: Untitled 4 *</div><div class="hb" style="left:600px;top:81px"></div><div class="a" style="left:495px;top:106px;width:1273px;height:30px;background:#5c5c5c;border:2px solid #686868;border-radius:5px"></div><div class="a" style="left:498px;top:110px;width:4px;height:22px;border-left:1px solid #404040;border-right:1px solid #404040"></div><div class="a" style="left:1761px;top:110px;width:4px;height:22px;border-left:1px solid #404040;border-right:1px solid #404040"></div><svg class="a" style="left:0;top:0" width="1920" height="140"><g><path d="M502.5 112.3V114.1M503.5 112.3V114.2M504.5 112.5V114.0M505.5 112.4V114.1M506.5 112.2V114.2M507.5 112.4V114.0M508.5 110.2V116.9M509.5 109.7V115.9M510.5 109.9V116.5M511.5 109.5V116.5M512.5 110.1V116.3M513.5 109.8V116.4M514.5 109.6V116.3M515.5 110.1V116.4M516.5 110.2V116.2M517.5 109.9V116.9M518.5 110.0V116.6M519.5 109.5V116.9M520.5 110.7V116.4M521.5 110.0V116.9M522.5 109.9V116.9M523.5 109.7V116.5M524.5 109.9V116.3M525.5 110.2V116.7M526.5 109.9V116.6M527.5 110.5V116.3M528.5 109.9V116.4M529.5 109.5V116.8M530.5 110.2V116.5M531.5 110.0V116.8M532.5 109.5V116.8M533.5 110.6V116.0M534.5 110.0V116.3M535.5 110.2V116.6M536.5 110.5V116.3M537.5 109.7V116.5M538.5 110.0V116.5M539.5 110.0V116.5M540.5 110.1V116.5M541.5 109.9V116.4M542.5 109.6V116.8M543.5 109.9V116.5M544.5 110.0V116.5M545.5 109.9V116.5M546.5 110.7V116.4M547.5 109.5V116.0M548.5 110.0V116.3M549.5 110.0V116.4M550.5 110.0V116.5M551.5 109.7V116.4M552.5 109.6V116.3M553.5 110.1V116.7M554.5 110.2V116.6M555.5 110.1V116.4M556.5 109.5V116.8M557.5 109.7V116.9M558.5 110.2V116.3M559.5 110.1V116.5M560.5 110.1V116.4M561.5 110.2V116.4M562.5 110.7V116.4M563.5 110.2V116.8M564.5 110.2V116.5M565.5 110.1V116.7M566.5 110.4V115.9M567.5 110.1V116.0M568.5 110.1V116.0M569.5 110.1V116.8M570.5 110.1V116.5M571.5 109.6V116.9M572.5 110.1V116.7M573.5 110.4V116.4M574.5 110.0V116.3M575.5 110.1V116.3M576.5 110.0V116.4M577.5 110.0V116.7M578.5 109.9V116.4M579.5 109.5V116.4M580.5 110.0V116.5M581.5 109.9V116.9M582.5 110.1V116.9M583.5 110.3V116.4M584.5 110.1V116.8M585.5 110.2V116.9M586.5 110.0V116.9M587.5 110.7V116.3M588.5 110.1V116.5M589.5 110.2V116.9M590.5 109.6V116.3M591.5 110.2V116.7M592.5 109.8V116.5M593.5 110.2V116.3M594.5 110.1V116.1M595.5 109.6V116.8M596.5 109.9V116.4M597.5 109.6V116.9M598.5 110.2V116.7M599.5 110.2V116.4M600.5 109.6V116.7M601.5 109.8V116.5M602.5 109.6V116.9M603.5 109.4V116.1M604.5 109.4V116.1M605.5 109.8V116.5M606.5 109.3V116.5M607.5 109.5V116.6M608.5 109.3V116.6M609.5 109.3V116.6M610.5 109.0V116.8M611.5 109.3V116.5M612.5 109.1V116.6M613.5 109.5V116.8M614.5 109.4V116.5M615.5 108.9V116.8M616.5 108.8V117.0M617.5 109.1V116.7M618.5 109.1V116.9M619.5 109.2V116.5M620.5 109.0V116.8M621.5 109.1V116.6M622.5 109.4V116.7M623.5 108.9V116.7M624.5 109.3V116.5M625.5 108.7V116.5M626.5 109.1V116.6M627.5 109.0V116.6M628.5 109.6V116.8M629.5 109.5V116.9M630.5 109.5V117.0M631.5 108.8V116.6M632.5 108.9V116.9M633.5 109.9V116.5M634.5 108.8V116.6M635.5 109.2V116.7M636.5 109.3V116.5M637.5 108.9V117.0M638.5 109.4V116.8M639.5 109.0V116.6M640.5 109.0V116.5M641.5 108.9V116.5M642.5 109.4V116.6M643.5 109.2V116.6M644.5 109.2V116.7M645.5 109.2V117.0M646.5 109.5V116.8M647.5 108.7V116.8M648.5 109.3V116.8M649.5 108.8V116.7M650.5 109.4V116.6M651.5 109.5V116.7M652.5 109.5V116.5M653.5 109.3V116.3M654.5 108.9V116.4M655.5 109.3V116.7M656.5 109.1V116.5M657.5 109.3V117.0M658.5 108.7V116.7M659.5 109.4V116.8M660.5 109.4V116.6M661.5 109.4V116.2M662.5 109.3V116.5M663.5 109.3V116.8M664.5 108.7V116.4M665.5 109.4V116.7M666.5 109.2V116.5M667.5 109.3V116.9M668.5 109.5V116.6M669.5 109.2V116.7M670.5 109.1V116.7M671.5 109.2V116.6M672.5 109.3V116.8M673.5 108.8V116.7M674.5 109.4V116.4M675.5 109.5V116.7M676.5 110.0V116.7M677.5 109.3V116.9M678.5 109.4V116.3M679.5 109.5V116.5M680.5 109.1V116.3M681.5 109.5V116.6M682.5 109.4V116.5M683.5 109.4V116.7M684.5 108.7V116.5M685.5 108.7V116.7M686.5 109.3V116.6M687.5 109.7V116.9M688.5 109.6V116.8M689.5 109.3V116.8M690.5 109.2V116.7M691.5 108.8V116.7M692.5 109.2V116.7M693.5 108.7V116.6M694.5 108.9V116.8M695.5 108.7V117.0M696.5 109.2V116.7M697.5 110.1V116.7M698.5 108.9V116.8M699.5 109.3V116.7M700.5 108.8V116.6M701.5 108.7V116.7M702.5 109.1V116.5M703.5 109.2V116.8M704.5 109.4V116.7M705.5 109.4V116.7M706.5 109.3V116.9M707.5 109.3V116.9M708.5 108.7V116.8M709.5 108.8V116.3M710.5 109.1V116.9M711.5 109.5V116.6M712.5 108.9V116.6M713.5 109.5V117.0M714.5 109.3V116.8M715.5 109.9V116.5M716.5 109.2V116.6M717.5 109.9V116.5M718.5 108.7V116.7M719.5 109.1V116.7M720.5 109.1V117.0M721.5 109.1V116.4M722.5 109.4V116.6M723.5 109.5V116.9M724.5 108.8V116.7M725.5 109.0V116.7M726.5 109.5V117.0M727.5 109.5V116.9M728.5 108.7V116.7M729.5 108.8V116.3M730.5 108.9V116.6M731.5 109.3V116.7M732.5 108.7V116.9M733.5 109.5V116.7M734.5 108.7V116.6M735.5 109.2V116.9M736.5 108.8V116.5M737.5 109.3V116.7M738.5 109.3V116.7M739.5 109.6V116.7M740.5 109.4V116.4M741.5 109.2V116.9M742.5 109.3V116.9M743.5 109.0V116.5M744.5 109.7V117.0M745.5 109.4V116.6M746.5 109.2V116.8M747.5 109.3V116.5M748.5 109.0V116.6M749.5 109.0V116.6M750.5 109.5V116.5M751.5 109.3V116.5M752.5 109.6V116.9M753.5 109.0V116.6M754.5 109.2V116.9M755.5 109.5V116.6M756.5 109.5V116.6M757.5 109.8V116.8M758.5 108.6V116.8M759.5 109.5V116.6M760.5 109.4V116.9M761.5 109.3V116.7M762.5 108.9V116.6M763.5 109.8V116.6M764.5 109.2V116.8M765.5 108.8V116.6M766.5 109.2V116.5M767.5 109.4V116.9M768.5 109.3V117.0M769.5 109.2V116.6M770.5 109.4V116.8M771.5 109.3V116.5M772.5 109.4V116.3M773.5 109.3V116.9M774.5 109.0V116.6M775.5 108.8V116.2M776.5 109.5V116.5M777.5 109.5V116.3M778.5 109.4V116.7M779.5 109.4V116.7M780.5 109.2V116.4M781.5 109.3V116.8M782.5 109.8V116.7M783.5 109.3V116.9M784.5 108.8V116.6M785.5 108.9V116.7M786.5 108.6V116.8M787.5 108.8V116.7M788.5 108.7V116.9M789.5 108.8V116.9M790.5 108.7V116.6M791.5 109.3V116.7M792.5 109.4V116.5M793.5 109.3V116.5M794.5 109.2V116.5M795.5 109.7V116.6M796.5 109.2V116.6M797.5 109.3V116.6M798.5 110.9V115.3M799.5 110.8V115.4M800.5 110.9V115.8M801.5 111.3V115.9M802.5 112.1V114.3M803.5 112.1V114.2M804.5 112.2V114.2M805.5 112.1V114.3M806.5 112.1V114.3M807.5 112.2V114.3M808.5 112.1V114.3M809.5 112.2V114.3M810.5 112.2V114.3M811.5 112.3V114.2M812.5 112.1V114.2M813.5 112.3V114.2M814.5 112.1V114.2M815.5 112.2V114.3M816.5 112.1V114.3M817.5 112.2V114.2M818.5 112.1V114.3M819.5 112.2V114.4M820.5 112.2V114.3M821.5 112.1V114.3M822.5 110.3V115.0M823.5 110.6V115.8M824.5 110.6V115.8M825.5 111.0V115.2M826.5 112.0V115.2M827.5 111.1V115.1M828.5 111.0V115.5M829.5 111.0V115.5M830.5 111.2V115.4M831.5 111.0V115.2M832.5 111.2V115.4M833.5 110.5V115.3M834.5 110.4V115.2M835.5 111.4V115.8M836.5 110.7V115.5M837.5 111.2V115.0M838.5 110.7V115.9M839.5 111.1V115.3M840.5 111.8V115.2M841.5 111.1V115.2M842.5 111.0V115.9M843.5 110.4V115.1M844.5 111.2V115.5M845.5 111.2V115.1M846.5 111.3V115.5M847.5 111.4V115.3M848.5 111.3V115.9M849.5 110.4V115.8M850.5 110.6V114.9M851.5 110.6V115.0M852.5 111.3V115.3M853.5 110.3V115.4M854.5 110.9V115.8M855.5 111.2V115.3M856.5 111.1V115.4M857.5 111.0V115.3M858.5 111.3V115.5M859.5 111.2V115.4M860.5 110.5V115.1M861.5 110.4V115.0M862.5 110.4V116.0M863.5 110.5V115.8M864.5 111.1V115.5M865.5 110.9V115.9M866.5 111.1V116.1M867.5 111.0V114.5M868.5 110.9V115.0M869.5 111.0V115.2M870.5 110.5V114.8M871.5 110.4V115.4M872.5 112.2V114.2M873.5 112.3V114.3M874.5 112.1V114.2M875.5 112.2V114.3M876.5 112.2V114.4M877.5 112.1V114.3M878.5 112.2V114.3M879.5 112.2V114.4M880.5 112.3V114.3M881.5 112.2V114.3M882.5 109.0V116.1M883.5 108.9V116.7M884.5 108.7V116.4M885.5 109.1V116.1M886.5 110.1V116.4M887.5 109.0V116.7M888.5 109.4V116.7M889.5 109.3V116.5M890.5 110.0V116.5M891.5 109.6V116.8M892.5 109.1V116.7M893.5 109.9V116.5M894.5 109.5V116.4M895.5 109.1V116.4M896.5 109.0V116.7M897.5 109.4V116.8M898.5 108.7V116.8M899.5 109.3V116.6M900.5 109.3V116.7M901.5 109.4V116.8M902.5 109.4V116.6M903.5 109.4V116.5M904.5 109.5V116.5M905.5 109.6V116.5M906.5 109.1V116.4M907.5 109.5V116.7M908.5 108.9V116.3M909.5 109.3V116.4M910.5 109.0V116.5M911.5 108.9V116.4M912.5 109.3V116.5M913.5 109.2V116.4M914.5 109.4V116.5M915.5 109.4V116.5M916.5 110.1V116.5M917.5 108.9V116.4M918.5 109.6V116.5M919.5 110.6V116.1M920.5 110.6V115.9M921.5 110.5V116.3M922.5 110.6V116.1M923.5 110.3V116.1M924.5 111.0V116.0M925.5 110.5V115.8M926.5 110.6V116.1M927.5 110.5V116.1M928.5 110.6V116.1M929.5 108.8V116.5M930.5 109.2V116.3M931.5 109.5V116.7M932.5 109.5V116.4M933.5 109.1V116.6M934.5 109.2V116.6M935.5 109.8V116.7M936.5 109.8V116.4M937.5 108.9V116.7M938.5 109.6V116.4M939.5 109.9V116.5M940.5 109.2V116.2M941.5 109.5V116.7M942.5 109.5V116.3M943.5 110.3V116.4M944.5 109.6V116.4M945.5 110.2V116.5M946.5 109.1V116.7M947.5 110.3V116.5M948.5 109.6V116.4M949.5 109.2V116.4M950.5 109.7V116.7M951.5 109.8V116.5M952.5 109.3V116.5M953.5 109.6V116.8M954.5 110.3V116.7M955.5 109.6V116.7M956.5 109.1V116.7M957.5 109.5V116.5M958.5 108.8V116.5M959.5 109.8V116.3M960.5 110.5V116.2M961.5 109.2V116.6M962.5 109.9V116.4M963.5 109.2V116.4M964.5 109.1V116.2M965.5 109.4V116.8M966.5 109.2V116.5M967.5 109.7V116.5M968.5 109.2V116.6M969.5 110.5V116.5M970.5 108.9V116.4M971.5 109.4V116.7M972.5 109.0V116.4M973.5 109.6V116.5M974.5 109.7V116.3M975.5 109.4V116.5M976.5 109.6V116.7M977.5 109.3V116.4M978.5 112.0V114.3M979.5 112.1V114.6M980.5 112.0V114.5M981.5 111.9V114.7M982.5 111.9V114.4M983.5 110.2V116.7M984.5 109.6V116.7M985.5 109.0V117.0M986.5 109.9V116.9M987.5 110.5V116.6M988.5 109.9V116.8M989.5 109.7V116.3M990.5 109.5V116.6M991.5 109.8V116.6M992.5 108.9V116.7M993.5 109.7V116.5M994.5 109.0V116.5M995.5 109.6V116.6M996.5 109.0V117.0M997.5 109.9V117.0M998.5 109.7V116.4M999.5 109.8V116.6M1000.5 109.1V116.7M1001.5 109.8V116.7M1002.5 109.9V116.6M1003.5 109.3V116.7M1004.5 109.8V116.6M1005.5 109.6V116.6M1006.5 110.0V116.7M1007.5 109.9V116.6M1008.5 110.3V116.7M1009.5 110.3V116.5M1010.5 110.0V116.5M1011.5 108.9V116.7M1012.5 109.9V116.8M1013.5 108.9V116.7M1014.5 109.0V116.3M1015.5 109.1V116.3M1016.5 109.3V116.5M1017.5 109.2V116.9M1018.5 109.1V116.6M1019.5 109.8V116.6M1020.5 109.7V116.5M1021.5 108.9V116.5M1022.5 109.7V116.7M1023.5 110.0V116.7M1024.5 109.9V116.7M1025.5 109.9V116.2M1026.5 109.3V116.6M1027.5 109.7V117.0M1028.5 109.3V116.6M1029.5 110.0V116.4M1030.5 110.0V116.8M1031.5 109.6V116.3M1032.5 109.2V116.9M1033.5 109.9V116.6M1034.5 109.9V116.8M1035.5 110.0V116.6M1036.5 109.9V116.7M1037.5 110.2V116.3M1038.5 109.8V116.6M1039.5 109.8V116.7M1040.5 110.0V116.9M1041.5 109.7V116.9M1042.5 109.5V116.7M1043.5 109.5V116.6M1044.5 109.5V116.7M1045.5 109.7V116.7M1046.5 110.7V116.5M1047.5 109.2V116.6M1048.5 109.3V116.8M1049.5 109.0V116.9M1050.5 110.0V116.7M1051.5 109.7V116.6M1052.5 109.8V116.7M1053.5 109.1V116.6M1054.5 109.2V116.6M1055.5 110.5V116.9M1056.5 109.9V116.5M1057.5 109.6V116.7M1058.5 109.7V116.5M1059.5 109.8V116.9M1060.5 109.7V116.6M1061.5 109.7V116.9M1062.5 109.7V116.6M1063.5 109.7V116.6M1064.5 108.9V117.0M1065.5 109.1V116.6M1066.5 108.9V116.8M1067.5 109.8V117.0M1068.5 110.2V116.6M1069.5 110.4V116.7M1070.5 109.2V116.5M1071.5 108.9V116.3M1072.5 109.0V116.2M1073.5 109.8V116.7M1074.5 110.0V117.1M1075.5 110.0V116.3M1076.5 110.1V115.6M1077.5 110.0V116.2M1078.5 110.0V116.3M1079.5 110.3V115.6M1080.5 110.0V116.2M1081.5 110.0V116.3M1082.5 110.3V115.7M1083.5 110.0V116.3M1084.5 110.0V116.1M1085.5 110.3V115.7M1086.5 110.0V116.2M1087.5 110.0V116.2M1088.5 110.3V116.3M1089.5 110.0V116.2M1090.5 110.0V116.2M1091.5 110.3V115.7M1092.5 110.0V116.2M1093.5 110.0V116.3M1094.5 110.3V115.7M1095.5 110.0V116.2M1096.5 110.0V116.3M1097.5 110.3V115.6M1098.5 110.0V116.2M1099.5 110.0V116.3M1100.5 110.3V115.7M1101.5 110.0V116.2M1102.5 110.0V116.2M1103.5 110.3V116.2M1104.5 110.0V116.2M1105.5 110.0V116.3M1106.5 110.3V115.6M1107.5 110.0V116.2M1108.5 110.0V116.3M1109.5 110.3V115.6M1110.5 110.0V116.3M1111.5 110.1V116.2M1112.5 110.3V115.6M1113.5 110.1V116.1M1114.5 110.0V116.3M1115.5 110.3V115.6M1116.5 110.0V116.1M1117.5 110.0V116.3M1118.5 110.0V115.7M1119.5 110.0V116.3M1120.5 110.1V116.3M1121.5 110.3V115.7M1122.5 110.0V116.2M1123.5 110.0V116.2M1124.5 110.3V116.3M1125.5 110.0V116.3M1126.5 110.0V116.2M1127.5 110.3V115.7M1128.5 110.0V116.2M1129.5 110.0V116.3M1130.5 110.0V115.7M1131.5 110.0V116.3M1132.5 110.0V116.2M1133.5 110.3V115.6M1134.5 110.0V116.2M1135.5 110.1V116.2M1136.5 110.3V115.6M1137.5 110.0V116.2M1138.5 110.0V116.3M1139.5 110.3V115.7M1140.5 110.0V116.2M1141.5 110.0V116.2M1142.5 110.3V115.7M1143.5 110.0V116.1M1144.5 110.0V116.2M1145.5 110.3V115.6M1146.5 110.0V116.3M1147.5 110.0V116.2M1148.5 112.6V114.0M1149.5 112.7V114.1M1150.5 112.7V114.0M1151.5 111.1V114.9M1152.5 110.1V116.0M1153.5 110.3V115.9M1154.5 111.1V116.1M1155.5 110.2V115.9M1156.5 110.2V115.9M1157.5 111.2V114.8M1158.5 110.1V116.1M1159.5 110.2V115.9M1160.5 111.2V114.8M1161.5 110.2V115.9M1162.5 110.4V115.9M1163.5 111.2V114.8M1164.5 110.4V116.1M1165.5 110.4V116.1M1166.5 111.2V114.9M1167.5 110.4V116.0M1168.5 110.4V115.9M1169.5 111.1V115.9M1170.5 110.1V115.9M1171.5 110.4V115.9M1172.5 111.2V115.0M1173.5 110.2V115.8M1174.5 110.2V115.9M1175.5 111.1V114.9M1176.5 110.2V116.0M1177.5 110.2V115.8M1178.5 111.2V114.8M1179.5 110.2V115.8M1180.5 110.3V116.1M1181.5 111.2V114.9M1182.5 110.2V115.9M1183.5 110.2V115.9M1184.5 111.2V114.8M1185.5 110.2V115.8M1186.5 110.2V115.9M1187.5 110.3V114.9M1188.5 110.2V116.1M1189.5 110.2V116.1M1190.5 110.3V116.0M1191.5 110.3V115.9M1192.5 110.3V116.1M1193.5 111.2V114.9M1194.5 110.4V116.0M1195.5 110.2V116.0M1196.5 110.3V116.5M1197.5 110.6V116.2M1198.5 110.4V116.5M1199.5 110.4V116.4M1200.5 110.5V116.4M1201.5 110.5V116.4M1202.5 110.3V116.4M1203.5 110.5V116.5M1204.5 110.2V116.3M1205.5 110.5V116.8M1206.5 110.3V116.7M1207.5 110.3V116.3M1208.5 110.4V116.0M1209.5 110.3V116.4M1210.5 110.4V116.7M1211.5 110.4V116.0M1212.5 110.3V116.8M1213.5 110.8V116.6M1214.5 109.9V116.5M1215.5 110.6V116.3M1216.5 110.2V116.7M1217.5 110.4V116.2M1218.5 109.9V116.7M1219.5 110.3V116.0M1220.5 110.1V116.4M1221.5 110.5V116.7M1222.5 110.5V116.3M1223.5 110.5V116.5M1224.5 110.6V116.5M1225.5 110.1V116.4M1226.5 110.6V116.8M1227.5 110.9V116.1M1228.5 110.1V116.3M1229.5 109.9V116.3M1230.5 109.8V116.7M1231.5 110.1V116.7M1232.5 110.6V116.3M1233.5 110.3V116.4M1234.5 109.9V116.8M1235.5 110.3V116.8M1236.5 110.5V116.4M1237.5 110.0V116.4M1238.5 110.4V116.7M1239.5 109.9V116.7M1240.5 110.1V116.3M1241.5 109.9V116.3M1242.5 110.3V116.5M1243.5 110.5V116.3M1244.5 110.3V115.9M1245.5 110.3V116.8M1246.5 109.9V116.3M1247.5 110.9V116.8M1248.5 110.4V116.3M1249.5 110.0V116.8M1250.5 110.5V116.6M1251.5 110.3V116.5M1252.5 110.3V116.3M1253.5 110.7V116.4M1254.5 110.0V116.5M1255.5 110.3V116.9M1256.5 110.3V116.4M1257.5 110.5V116.8M1258.5 110.5V116.4M1259.5 110.3V116.8M1260.5 110.6V116.2M1261.5 110.2V116.2M1262.5 109.9V116.8M1263.5 110.2V116.6M1264.5 110.8V116.6M1265.5 110.5V116.7M1266.5 110.5V116.3M1267.5 110.6V115.9M1268.5 110.4V116.5M1269.5 110.4V116.4M1270.5 110.5V116.3M1271.5 109.9V116.5M1272.5 109.9V116.5M1273.5 110.0V116.3M1274.5 110.1V116.5M1275.5 110.1V116.1M1276.5 109.9V116.4M1277.5 110.3V116.3M1278.5 110.3V116.4M1279.5 110.3V115.9M1280.5 110.3V116.4M1281.5 110.0V116.7M1282.5 110.4V116.5M1283.5 110.8V116.1M1284.5 110.3V116.0M1285.5 110.3V116.4M1286.5 110.6V116.8M1287.5 110.5V116.4M1288.5 110.1V116.4M1289.5 110.6V116.2M1290.5 109.9V116.0M1291.5 110.4V116.4M1292.5 110.4V116.3M1293.5 110.6V116.8M1294.5 109.9V116.7M1295.5 110.0V116.3M1296.5 110.3V116.7M1297.5 110.1V116.9M1298.5 110.6V116.4M1299.5 109.9V116.8M1300.5 110.4V116.6M1301.5 110.5V116.5M1302.5 109.9V116.1M1303.5 110.5V116.3M1304.5 110.0V116.4M1305.5 109.9V116.4M1306.5 110.6V115.9M1307.5 110.0V116.8M1308.5 110.9V116.1M1309.5 110.3V116.1M1310.5 110.6V116.2M1311.5 110.4V116.7M1312.5 110.6V116.3M1313.5 110.4V115.9M1314.5 110.0V116.5M1315.5 110.1V116.3M1316.5 110.8V116.3M1317.5 110.3V116.1M1318.5 110.3V116.6M1319.5 110.3V116.8M1320.5 110.4V116.7M1321.5 110.5V116.0M1322.5 110.0V116.5M1323.5 111.0V116.7M1324.5 109.9V116.8M1325.5 110.4V115.9M1326.5 110.4V116.4M1327.5 110.1V116.4M1328.5 110.3V116.4M1329.5 110.3V116.8M1330.5 110.4V116.6M1331.5 109.9V116.4M1332.5 110.5V116.3M1333.5 110.3V116.3M1334.5 109.9V116.4M1335.5 110.4V116.2M1336.5 110.5V116.7M1337.5 110.3V116.5M1338.5 110.1V116.4M1339.5 110.4V116.8M1340.5 110.6V116.2M1341.5 110.4V116.6M1342.5 110.0V116.5M1343.5 110.0V116.3M1344.5 110.1V116.6M1345.5 110.8V116.4M1346.5 110.5V116.2M1347.5 111.0V116.3M1348.5 110.9V116.4M1349.5 110.3V115.9M1350.5 110.0V116.3M1351.5 110.3V116.7M1352.5 110.3V116.1M1353.5 110.4V116.3M1354.5 112.1V115.0M1355.5 112.1V115.0M1356.5 112.1V115.1M1357.5 112.1V115.1M1358.5 109.7V116.4M1359.5 110.1V116.5M1360.5 110.1V116.4M1361.5 110.3V116.2M1362.5 110.4V116.5M1363.5 110.3V116.7M1364.5 109.9V116.4M1365.5 110.3V116.1M1366.5 110.2V116.4M1367.5 109.9V116.5M1368.5 110.2V116.5M1369.5 110.2V116.6M1370.5 109.7V116.4M1371.5 110.1V116.4M1372.5 110.3V116.3M1373.5 110.6V116.7M1374.5 109.8V116.6M1375.5 110.1V116.4M1376.5 110.3V116.2M1377.5 110.3V116.4M1378.5 110.2V116.3M1379.5 110.2V116.6M1380.5 110.1V116.3M1381.5 110.2V116.5M1382.5 110.2V116.6M1383.5 109.9V116.6M1384.5 110.6V116.4M1385.5 110.1V116.4M1386.5 110.0V116.7M1387.5 109.9V116.4M1388.5 110.1V116.1M1389.5 110.1V116.4M1390.5 110.0V116.6M1391.5 110.3V116.6M1392.5 110.1V116.5M1393.5 109.8V116.7M1394.5 110.3V116.4M1395.5 110.3V116.3M1396.5 109.9V116.4M1397.5 109.9V116.4M1398.5 110.3V116.3M1399.5 109.9V116.4M1400.5 110.3V116.4M1401.5 110.0V116.7M1402.5 110.1V116.7M1403.5 110.5V116.6M1404.5 110.3V116.4M1405.5 110.0V116.6M1406.5 110.1V116.3M1407.5 110.3V116.7M1408.5 110.2V116.5M1409.5 109.8V116.3M1410.5 109.9V116.4M1411.5 110.6V116.5M1412.5 110.5V116.4M1413.5 109.8V116.4M1414.5 110.1V116.4M1415.5 110.1V116.5M1416.5 110.4V116.3M1417.5 110.2V116.4M1418.5 110.3V116.6M1419.5 109.8V116.5M1420.5 110.5V116.7M1421.5 109.9V116.3M1422.5 109.8V116.7M1423.5 110.2V116.3M1424.5 110.2V116.5M1425.5 110.3V116.3M1426.5 110.3V116.4M1427.5 110.2V116.4M1428.5 110.3V116.5M1429.5 110.3V116.7M1430.5 110.2V116.1M1431.5 110.1V116.6M1432.5 110.3V116.4M1433.5 109.8V116.4M1434.5 110.1V116.3M1435.5 110.2V116.6M1436.5 110.3V116.6M1437.5 110.1V116.1M1438.5 110.1V116.4M1439.5 109.8V116.4M1440.5 110.3V116.2M1441.5 110.3V116.5M1442.5 110.2V116.7M1443.5 110.1V116.7M1444.5 110.4V116.4M1445.5 109.9V116.2M1446.5 110.1V116.6M1447.5 110.2V116.7M1448.5 110.5V117.4M1449.5 110.1V116.9M1450.5 110.5V116.4M1451.5 110.4V116.6M1452.5 110.4V117.1M1453.5 110.1V117.3M1454.5 110.4V117.3M1455.5 110.3V116.7M1456.5 110.4V116.8M1457.5 110.5V116.3M1458.5 110.6V116.9M1459.5 110.2V117.2M1460.5 110.3V116.9M1461.5 110.4V116.3M1462.5 110.1V116.7M1463.5 110.1V117.3M1464.5 110.7V116.6M1465.5 110.1V116.7M1466.5 110.3V116.7M1467.5 110.1V116.7M1468.5 110.5V116.8M1469.5 110.5V117.0M1470.5 110.2V116.8M1471.5 110.5V116.6M1472.5 110.4V117.3M1473.5 110.5V116.7M1474.5 110.2V116.4M1475.5 110.8V116.9M1476.5 110.7V116.4M1477.5 109.9V116.4M1478.5 110.8V116.7M1479.5 110.2V116.4M1480.5 110.2V116.3M1481.5 110.9V116.7M1482.5 110.7V116.6M1483.5 110.5V116.1M1484.5 110.9V116.3M1485.5 110.9V116.4M1486.5 110.8V116.2M1487.5 110.8V116.2M1488.5 110.6V116.3M1489.5 111.0V116.3M1490.5 110.9V116.3M1491.5 110.6V116.6M1492.5 110.6V116.2M1493.5 110.8V116.4M1494.5 110.9V116.3M1495.5 110.0V116.3M1496.5 110.5V115.9M1497.5 110.9V116.3M1498.5 110.6V116.3M1499.5 109.8V116.4M1500.5 110.6V116.7M1501.5 111.5V116.4M1502.5 110.0V116.4M1503.5 110.6V116.4M1504.5 110.5V116.3M1505.5 109.9V116.7M1506.5 110.9V116.4M1507.5 110.2V116.4M1508.5 110.5V116.4M1509.5 111.6V116.3M1510.5 110.8V116.3M1511.5 110.9V116.6M1512.5 110.6V116.4M1513.5 110.5V116.3M1514.5 109.9V116.5M1515.5 110.6V116.7M1516.5 110.3V116.2M1517.5 111.7V116.6M1518.5 110.5V116.4M1519.5 110.6V116.7M1520.5 110.0V116.5M1521.5 110.9V116.2M1522.5 110.9V116.4M1523.5 110.7V116.3M1524.5 110.6V116.6M1525.5 110.2V116.4M1526.5 110.5V116.0M1527.5 110.7V116.3M1528.5 111.7V116.5M1529.5 110.6V116.7M1530.5 109.9V116.4M1531.5 110.8V116.4M1532.5 110.7V116.4M1533.5 110.7V116.4M1534.5 110.9V116.6M1535.5 110.9V116.4M1536.5 110.0V116.2M1537.5 110.7V116.5M1538.5 110.6V116.7M1539.5 110.6V116.3M1540.5 110.9V116.4M1541.5 110.6V116.7M1542.5 110.7V116.6M1543.5 110.8V116.3M1544.5 109.9V116.4M1545.5 110.9V116.7M1546.5 110.3V116.3M1547.5 110.2V116.3M1548.5 110.9V116.4M1549.5 110.6V116.2M1550.5 109.9V116.3M1551.5 110.9V116.4M1552.5 111.0V116.7M1553.5 110.8V116.4M1554.5 110.9V116.3M1555.5 110.0V116.3M1556.5 110.8V116.5M1557.5 110.5V116.2M1558.5 109.9V116.7M1559.5 111.5V116.3M1560.5 110.9V116.6M1561.5 111.7V116.2M1562.5 110.8V116.3M1563.5 110.5V116.3M1564.5 111.0V116.2M1565.5 110.8V116.1M1566.5 110.0V116.4M1567.5 110.8V116.3M1568.5 111.0V116.4M1569.5 110.2V116.7M1570.5 110.8V116.0M1571.5 110.8V116.4M1572.5 110.8V116.3M1573.5 110.5V116.6M1574.5 110.6V116.5M1575.5 111.7V116.2M1576.5 111.7V116.1M1577.5 111.8V116.0M1578.5 111.7V116.1M1579.5 111.8V116.0M1580.5 111.8V116.1M1581.5 111.7V116.1M1582.5 111.6V116.2M1583.5 111.7V116.1M1584.5 111.7V116.1M1585.5 111.7V116.0M1586.5 111.7V116.1M1587.5 111.7V116.1M1588.5 110.6V116.3M1589.5 111.3V116.9M1590.5 110.7V116.7M1591.5 110.2V115.8M1592.5 110.4V116.9M1593.5 111.0V117.0M1594.5 110.4V116.9M1595.5 110.5V116.2M1596.5 110.7V116.7M1597.5 110.0V116.3M1598.5 109.9V116.9M1599.5 109.9V116.3M1600.5 110.6V116.7M1601.5 110.9V116.7M1602.5 110.5V116.4M1603.5 110.5V116.1M1604.5 110.5V116.3M1605.5 110.5V116.3M1606.5 110.3V116.4M1607.5 109.9V116.3M1608.5 110.7V116.7M1609.5 110.8V116.7M1610.5 110.6V116.3M1611.5 109.9V116.3M1612.5 110.5V117.0M1613.5 110.1V116.6M1614.5 110.5V116.3M1615.5 110.7V116.3M1616.5 109.8V116.2M1617.5 111.1V116.4M1618.5 110.7V116.8M1619.5 109.9V116.3M1620.5 110.6V116.5M1621.5 110.8V116.5M1622.5 110.5V117.0M1623.5 110.4V116.8M1624.5 110.4V116.3M1625.5 110.6V116.8M1626.5 110.4V116.5M1627.5 109.9V116.7M1628.5 110.8V116.9M1629.5 110.0V116.8M1630.5 110.7V117.0M1631.5 111.2V116.3M1632.5 110.2V116.5M1633.5 110.2V116.8M1634.5 110.5V116.5M1635.5 110.4V116.6M1636.5 110.6V116.7M1637.5 110.5V116.0M1638.5 110.7V116.4M1639.5 111.3V116.4M1640.5 110.4V116.9M1641.5 110.7V116.7M1642.5 110.7V116.3M1643.5 110.6V116.4M1644.5 110.2V116.6M1645.5 110.3V116.6M1646.5 110.4V116.6M1647.5 110.3V116.4M1648.5 109.9V116.7M1649.5 110.5V116.5M1650.5 110.7V116.5M1651.5 109.9V116.0M1652.5 110.2V116.4M1653.5 110.9V116.4M1654.5 109.8V116.6M1655.5 110.0V116.3M1656.5 110.5V116.4M1657.5 110.2V116.4M1658.5 110.8V117.0M1659.5 110.5V116.3M1660.5 110.2V116.7M1661.5 110.5V116.8M1662.5 110.5V116.5M1663.5 110.2V116.4M1664.5 110.5V116.5M1665.5 110.4V116.4M1666.5 110.7V116.4M1667.5 111.0V116.7M1668.5 110.6V116.4M1669.5 110.6V116.8M1670.5 110.1V116.4M1671.5 110.5V116.8M1672.5 111.1V116.5M1673.5 110.5V116.3M1674.5 110.6V116.5M1675.5 110.2V116.8M1676.5 110.7V116.0M1677.5 110.8V116.4M1678.5 110.8V116.5M1679.5 110.6V116.4M1680.5 109.9V116.4M1681.5 110.7V116.2M1682.5 110.5V117.0M1683.5 110.5V116.8M1684.5 110.8V116.8M1685.5 110.5V116.9M1686.5 110.5V116.4M1687.5 110.2V116.3M1688.5 110.7V116.3M1689.5 110.5V116.4M1690.5 110.9V116.3M1691.5 110.8V116.4M1692.5 110.7V115.9M1693.5 110.5V116.5M1694.5 110.7V116.5M1695.5 110.0V116.2M1696.5 111.1V116.1M1697.5 110.6V116.3M1698.5 110.7V116.8M1699.5 110.5V116.8M1700.5 110.8V116.6M1701.5 110.5V116.3M1702.5 110.5V116.3M1703.5 111.4V116.3M1704.5 110.2V116.4M1705.5 111.0V116.3M1706.5 110.5V116.4M1707.5 110.1V116.9M1708.5 110.6V116.3M1709.5 110.8V116.9M1710.5 110.5V116.8M1711.5 110.7V116.4M1712.5 110.5V116.9M1713.5 110.7V116.3M1714.5 110.0V116.3M1715.5 110.0V116.4M1716.5 110.1V116.3M1717.5 110.7V116.4M1718.5 109.9V116.8M1719.5 110.8V116.3M1720.5 111.4V116.7M1721.5 110.5V116.8M1722.5 111.4V116.5M1723.5 111.3V116.6M1724.5 110.6V116.2M1725.5 110.3V117.0M1726.5 110.7V116.4M1727.5 110.7V115.9M1728.5 110.0V116.1M1729.5 110.3V116.4M1730.5 110.5V116.4M1731.5 110.6V116.3M1732.5 110.0V116.2M1733.5 110.1V115.8M1734.5 110.0V116.9M1735.5 110.5V114.8M1736.5 110.7V115.8M1737.5 110.7V115.8M1738.5 110.6V114.9M1739.5 110.6V115.8M1740.5 110.6V115.9M1741.5 111.5V116.0M1742.5 110.6V115.9M1743.5 110.7V116.1M1744.5 111.6V114.9M1745.5 110.5V115.9M1746.5 110.8V116.1M1747.5 111.6V114.8M1748.5 110.5V116.1M1749.5 110.7V115.8M1750.5 110.5V114.8M1751.5 110.7V115.9M1752.5 110.6V116.0M1753.5 111.6V114.9M1754.5 110.6V115.8M1755.5 110.7V115.9M1756.5 111.5V114.9M1757.5 110.7V115.8M1758.5 110.7V115.9M1759.5 111.5V116.0M1760.5 110.7V115.8" stroke="#52ecd6" stroke-width="1" shape-rendering="crispEdges"/><path d="M502.5 125.8V127.3M503.5 125.7V127.4M504.5 125.8V127.5M505.5 125.9V127.4M506.5 125.7V127.3M507.5 125.8V127.4M508.5 123.1V130.3M509.5 123.3V130.3M510.5 123.9V130.7M511.5 123.4V130.0M512.5 123.5V130.5M513.5 123.3V130.3M514.5 123.6V130.3M515.5 123.2V130.2M516.5 123.6V130.8M517.5 123.7V130.2M518.5 123.4V130.3M519.5 123.6V130.8M520.5 123.2V130.3M521.5 123.7V129.8M522.5 123.4V130.4M523.5 123.5V130.4M524.5 123.6V130.3M525.5 123.5V130.6M526.5 123.2V130.3M527.5 123.4V130.7M528.5 123.5V130.7M529.5 123.6V130.3M530.5 123.6V130.5M531.5 123.8V130.3M532.5 123.5V130.5M533.5 123.7V130.2M534.5 123.1V130.8M535.5 123.4V130.2M536.5 123.1V130.3M537.5 123.5V130.3M538.5 123.3V130.7M539.5 123.6V130.2M540.5 123.2V130.5M541.5 123.5V130.8M542.5 123.2V129.8M543.5 123.5V130.4M544.5 123.1V130.0M545.5 123.5V130.7M546.5 123.1V130.1M547.5 123.7V130.3M548.5 123.8V130.2M549.5 123.1V130.3M550.5 123.3V130.2M551.5 123.9V129.9M552.5 123.6V130.2M553.5 123.5V130.2M554.5 123.2V130.7M555.5 123.3V130.7M556.5 123.6V130.7M557.5 123.8V130.6M558.5 123.2V130.4M559.5 123.3V130.3M560.5 123.4V130.4M561.5 123.5V130.3M562.5 123.4V130.7M563.5 123.6V130.8M564.5 123.2V130.6M565.5 123.2V130.3M566.5 123.4V130.7M567.5 123.4V130.7M568.5 123.3V130.2M569.5 123.9V130.4M570.5 123.6V130.3M571.5 123.5V130.3M572.5 123.6V130.4M573.5 123.9V130.4M574.5 123.2V130.6M575.5 123.1V130.8M576.5 123.8V130.2M577.5 123.3V130.5M578.5 123.6V130.3M579.5 123.2V130.8M580.5 123.5V130.4M581.5 123.2V130.8M582.5 123.9V130.2M583.5 123.5V130.3M584.5 123.5V130.4M585.5 123.6V129.9M586.5 123.6V130.6M587.5 123.4V130.2M588.5 123.6V130.4M589.5 123.7V130.2M590.5 124.0V130.5M591.5 123.5V130.3M592.5 124.0V130.4M593.5 123.5V130.6M594.5 123.2V130.2M595.5 123.6V130.4M596.5 123.1V130.2M597.5 123.6V130.5M598.5 123.3V130.4M599.5 123.5V130.7M600.5 123.5V130.4M601.5 123.9V130.1M602.5 123.1V130.8M603.5 123.6V130.8M604.5 122.4V130.8M605.5 122.3V130.7M606.5 122.5V130.7M607.5 122.7V130.1M608.5 123.5V130.2M609.5 122.0V130.3M610.5 123.4V130.2M611.5 122.6V130.4M612.5 122.2V130.1M613.5 122.4V130.1M614.5 122.5V130.1M615.5 122.1V130.6M616.5 122.0V130.3M617.5 122.6V130.3M618.5 121.6V130.1M619.5 121.5V130.6M620.5 122.6V130.1M621.5 122.4V130.3M622.5 121.7V129.8M623.5 122.3V130.6M624.5 123.0V130.2M625.5 123.2V130.1M626.5 121.7V130.3M627.5 122.7V130.6M628.5 122.7V130.5M629.5 121.9V130.3M630.5 122.4V130.2M631.5 122.3V130.1M632.5 122.0V130.4M633.5 121.6V130.4M634.5 122.9V130.1M635.5 121.8V130.1M636.5 122.0V130.5M637.5 121.9V130.2M638.5 122.4V130.2M639.5 122.7V130.5M640.5 122.7V130.6M641.5 122.4V130.3M642.5 121.5V130.2M643.5 122.4V130.7M644.5 123.0V130.2M645.5 123.1V130.3M646.5 122.2V130.3M647.5 122.4V130.1M648.5 122.7V130.3M649.5 122.6V130.4M650.5 121.6V130.2M651.5 122.4V130.4M652.5 122.6V130.4M653.5 122.7V130.1M654.5 122.4V130.2M655.5 122.4V129.7M656.5 121.6V130.4M657.5 122.5V130.8M658.5 122.8V130.1M659.5 122.0V130.3M660.5 122.2V130.1M661.5 122.9V130.6M662.5 123.1V130.2M663.5 122.3V130.2M664.5 121.6V130.2M665.5 121.5V130.4M666.5 122.4V130.8M667.5 122.7V130.7M668.5 122.7V130.0M669.5 122.5V130.3M670.5 122.3V130.1M671.5 122.5V130.7M672.5 122.0V130.1M673.5 121.8V130.3M674.5 122.5V130.4M675.5 122.3V129.8M676.5 121.7V130.6M677.5 122.7V130.1M678.5 121.8V130.3M679.5 122.4V130.2M680.5 122.6V130.8M681.5 122.4V130.2M682.5 122.8V130.7M683.5 122.8V130.6M684.5 123.4V130.6M685.5 122.7V130.8M686.5 123.0V130.1M687.5 122.7V130.3M688.5 123.2V130.0M689.5 122.6V130.8M690.5 121.9V130.1M691.5 122.3V130.3M692.5 122.7V130.4M693.5 122.5V130.5M694.5 121.9V130.8M695.5 122.0V130.2M696.5 121.6V130.6M697.5 122.5V130.8M698.5 122.6V130.2M699.5 122.4V130.8M700.5 121.5V130.2M701.5 121.8V130.3M702.5 122.7V130.8M703.5 121.7V130.3M704.5 121.7V130.1M705.5 121.6V130.3M706.5 122.4V130.5M707.5 121.7V130.4M708.5 122.0V130.4M709.5 121.6V130.3M710.5 121.6V130.3M711.5 121.9V130.2M712.5 122.7V130.7M713.5 122.2V130.2M714.5 122.4V130.4M715.5 121.7V130.2M716.5 121.8V130.4M717.5 122.4V130.8M718.5 122.1V130.1M719.5 122.0V129.9M720.5 122.2V130.5M721.5 121.7V130.2M722.5 122.7V130.6M723.5 122.3V129.6M724.5 123.2V130.1M725.5 122.2V130.2M726.5 122.3V129.7M727.5 122.2V130.1M728.5 123.0V130.6M729.5 122.1V130.2M730.5 121.6V130.6M731.5 122.6V130.1M732.5 122.5V130.2M733.5 123.0V130.2M734.5 122.1V130.3M735.5 122.5V130.1M736.5 121.6V130.6M737.5 122.6V130.5M738.5 122.5V130.5M739.5 121.6V130.6M740.5 121.6V129.9M741.5 122.4V130.3M742.5 122.3V130.5M743.5 122.0V130.0M744.5 122.8V130.3M745.5 122.2V130.7M746.5 121.5V130.6M747.5 122.5V130.1M748.5 122.8V129.7M749.5 122.0V130.5M750.5 121.9V130.2M751.5 121.5V130.2M752.5 122.4V130.4M753.5 122.3V130.1M754.5 122.4V130.3M755.5 122.3V129.9M756.5 123.5V130.1M757.5 122.3V130.1M758.5 121.7V130.7M759.5 122.0V130.3M760.5 121.8V130.6M761.5 122.3V130.5M762.5 122.9V130.3M763.5 122.4V130.4M764.5 123.0V130.6M765.5 122.5V129.9M766.5 123.0V130.3M767.5 122.2V130.2M768.5 122.6V130.6M769.5 122.8V130.3M770.5 122.4V130.7M771.5 123.4V130.2M772.5 122.6V130.1M773.5 122.8V130.7M774.5 122.4V130.7M775.5 123.4V130.8M776.5 122.9V130.1M777.5 121.8V129.7M778.5 121.6V130.3M779.5 122.4V130.3M780.5 122.2V130.4M781.5 122.7V130.4M782.5 122.5V130.2M783.5 121.8V130.6M784.5 122.5V130.3M785.5 122.3V130.3M786.5 122.7V130.2M787.5 122.4V130.1M788.5 122.2V130.7M789.5 122.4V129.6M790.5 122.6V130.1M791.5 122.4V129.9M792.5 122.5V130.8M793.5 121.7V130.3M794.5 122.2V130.1M795.5 122.2V130.2M796.5 122.3V130.1M797.5 122.5V130.7M798.5 124.3V129.1M799.5 124.3V129.0M800.5 123.9V128.9M801.5 124.4V128.9M802.5 125.9V127.5M803.5 125.8V127.4M804.5 125.8V127.5M805.5 125.9V127.5M806.5 125.9V127.5M807.5 126.0V127.5M808.5 125.8V127.6M809.5 126.0V127.6M810.5 125.9V127.5M811.5 125.8V127.6M812.5 125.8V127.5M813.5 125.8V127.6M814.5 125.9V127.5M815.5 125.9V127.6M816.5 125.8V127.6M817.5 125.9V127.6M818.5 125.9V127.5M819.5 125.9V127.5M820.5 125.8V127.4M821.5 125.8V127.5M822.5 124.0V128.4M823.5 125.1V128.5M824.5 124.0V129.0M825.5 125.0V128.9M826.5 125.1V128.9M827.5 124.4V128.1M828.5 126.2V128.7M829.5 124.9V128.4M830.5 124.5V128.4M831.5 124.4V129.5M832.5 125.5V128.7M833.5 124.8V128.4M834.5 124.8V128.2M835.5 124.1V128.4M836.5 125.0V129.3M837.5 125.2V129.5M838.5 124.6V128.4M839.5 124.3V128.8M840.5 124.5V128.6M841.5 124.6V128.7M842.5 124.5V129.2M843.5 125.0V128.7M844.5 125.4V129.0M845.5 125.8V128.5M846.5 124.2V129.5M847.5 125.2V128.7M848.5 125.3V128.7M849.5 124.1V128.5M850.5 124.1V129.4M851.5 124.3V128.5M852.5 124.3V128.4M853.5 125.2V128.4M854.5 124.6V128.7M855.5 125.0V128.1M856.5 124.2V129.1M857.5 124.1V128.4M858.5 124.8V128.9M859.5 124.2V129.2M860.5 125.3V128.4M861.5 125.4V128.4M862.5 125.2V128.7M863.5 125.1V129.4M864.5 124.1V128.5M865.5 126.1V128.5M866.5 124.6V129.1M867.5 124.0V128.9M868.5 125.3V129.6M869.5 124.2V128.5M870.5 124.2V128.6M871.5 124.5V128.5M872.5 126.2V127.4M873.5 126.2V127.3M874.5 126.2V127.4M875.5 126.1V127.3M876.5 126.2V127.3M877.5 126.2V127.3M878.5 126.1V127.4M879.5 126.2V127.4M880.5 126.1V127.3M881.5 126.2V127.4M882.5 122.6V130.2M883.5 122.7V130.5M884.5 122.3V130.3M885.5 123.1V130.3M886.5 122.5V130.4M887.5 123.5V130.5M888.5 122.3V130.4M889.5 122.9V130.9M890.5 121.9V129.8M891.5 122.0V130.2M892.5 122.9V130.1M893.5 122.5V130.5M894.5 122.9V130.3M895.5 122.6V130.8M896.5 122.4V130.5M897.5 122.7V130.8M898.5 122.8V130.3M899.5 122.7V129.9M900.5 122.6V130.3M901.5 122.6V130.7M902.5 123.1V130.9M903.5 123.3V130.3M904.5 122.6V130.7M905.5 122.7V130.5M906.5 123.5V130.4M907.5 122.8V130.7M908.5 122.7V130.2M909.5 121.9V130.5M910.5 122.8V130.3M911.5 122.7V130.4M912.5 121.9V130.2M913.5 122.1V131.0M914.5 122.0V130.8M915.5 122.8V130.3M916.5 122.5V130.7M917.5 122.5V130.7M918.5 121.9V130.5M919.5 124.1V129.1M920.5 124.2V129.1M921.5 124.6V129.4M922.5 124.3V129.4M923.5 124.2V129.2M924.5 124.5V129.1M925.5 124.2V129.3M926.5 124.3V129.4M927.5 123.9V129.1M928.5 124.1V129.3M929.5 124.2V129.1M930.5 124.0V129.1M931.5 122.9V130.3M932.5 122.1V130.3M933.5 122.8V130.3M934.5 123.4V130.4M935.5 123.2V130.2M936.5 122.7V130.8M937.5 122.2V130.8M938.5 121.9V130.3M939.5 122.7V130.4M940.5 122.1V130.6M941.5 122.8V130.8M942.5 122.2V130.4M943.5 122.8V130.8M944.5 122.6V130.1M945.5 122.6V130.2M946.5 122.7V130.5M947.5 122.7V130.4M948.5 122.9V130.3M949.5 122.2V130.6M950.5 122.6V130.7M951.5 122.5V130.3M952.5 122.6V130.7M953.5 122.9V130.6M954.5 122.9V130.8M955.5 123.3V130.3M956.5 122.9V130.4M957.5 122.5V130.4M958.5 122.0V130.4M959.5 123.0V130.7M960.5 122.9V130.4M961.5 123.0V130.6M962.5 122.1V130.3M963.5 122.7V130.2M964.5 122.2V130.3M965.5 123.0V130.6M966.5 122.8V130.8M967.5 122.0V130.4M968.5 122.5V130.2M969.5 122.7V130.5M970.5 122.3V130.3M971.5 122.1V130.8M972.5 122.4V130.4M973.5 122.0V130.3M974.5 122.7V130.3M975.5 122.3V130.7M976.5 122.1V130.4M977.5 122.2V130.5M978.5 126.3V127.2M979.5 126.3V127.3M980.5 126.4V127.3M981.5 126.4V127.3M982.5 126.4V127.3M983.5 122.1V130.8M984.5 122.5V129.9M985.5 121.9V130.6M986.5 122.7V130.9M987.5 123.0V130.8M988.5 123.4V130.5M989.5 122.8V130.5M990.5 122.5V130.9M991.5 122.9V130.5M992.5 122.5V130.9M993.5 123.5V130.5M994.5 123.1V131.1M995.5 122.7V130.5M996.5 122.2V130.4M997.5 122.9V129.9M998.5 122.8V131.2M999.5 122.6V130.4M1000.5 123.3V130.2M1001.5 122.5V130.5M1002.5 122.8V130.7M1003.5 122.9V131.0M1004.5 122.7V130.2M1005.5 122.5V129.7M1006.5 122.5V130.4M1007.5 122.5V130.2M1008.5 122.8V130.2M1009.5 121.8V130.5M1010.5 122.9V130.3M1011.5 121.7V129.7M1012.5 122.5V130.7M1013.5 122.6V130.6M1014.5 122.3V131.1M1015.5 123.0V131.3M1016.5 122.9V130.2M1017.5 122.7V130.3M1018.5 121.9V130.2M1019.5 122.6V131.0M1020.5 122.8V130.6M1021.5 122.7V130.4M1022.5 122.3V130.4M1023.5 122.5V130.8M1024.5 122.3V130.2M1025.5 122.2V130.6M1026.5 123.3V130.6M1027.5 122.5V129.7M1028.5 122.5V130.5M1029.5 123.0V131.1M1030.5 123.0V130.5M1031.5 122.4V130.3M1032.5 122.5V131.1M1033.5 122.2V130.6M1034.5 122.9V130.1M1035.5 122.6V129.9M1036.5 122.0V129.6M1037.5 122.9V130.2M1038.5 122.8V131.1M1039.5 122.6V130.6M1040.5 122.8V129.7M1041.5 122.6V131.0M1042.5 121.9V130.3M1043.5 123.0V129.8M1044.5 123.6V130.5M1045.5 122.9V130.4M1046.5 122.7V130.4M1047.5 122.1V131.0M1048.5 122.7V131.1M1049.5 122.1V130.5M1050.5 122.7V130.4M1051.5 122.7V130.5M1052.5 123.5V131.3M1053.5 122.1V130.7M1054.5 122.5V131.2M1055.5 122.8V130.5M1056.5 123.8V130.9M1057.5 122.6V131.1M1058.5 122.0V130.6M1059.5 123.8V130.3M1060.5 121.7V130.6M1061.5 121.9V130.5M1062.5 122.0V131.1M1063.5 122.5V130.5M1064.5 121.7V131.3M1065.5 122.5V130.6M1066.5 122.6V131.2M1067.5 123.0V130.3M1068.5 122.7V130.6M1069.5 122.8V130.4M1070.5 122.0V131.1M1071.5 122.5V130.4M1072.5 121.9V130.4M1073.5 121.9V130.6M1074.5 122.5V131.1M1075.5 123.5V130.2M1076.5 123.5V129.5M1077.5 123.5V130.1M1078.5 123.4V130.0M1079.5 123.8V129.4M1080.5 123.5V130.1M1081.5 123.5V130.2M1082.5 123.4V129.4M1083.5 123.4V130.0M1084.5 123.5V130.1M1085.5 123.8V129.4M1086.5 123.5V130.2M1087.5 123.5V130.2M1088.5 123.8V129.4M1089.5 123.5V130.0M1090.5 123.5V130.2M1091.5 123.8V130.1M1092.5 123.4V130.1M1093.5 123.5V130.1M1094.5 123.5V129.5M1095.5 123.4V130.1M1096.5 123.4V130.0M1097.5 123.8V130.2M1098.5 123.4V130.1M1099.5 123.5V130.0M1100.5 123.9V130.0M1101.5 123.5V130.1M1102.5 123.5V130.1M1103.5 123.5V130.2M1104.5 123.5V130.1M1105.5 123.5V130.2M1106.5 123.8V130.2M1107.5 123.4V130.1M1108.5 123.4V130.0M1109.5 123.8V129.4M1110.5 123.4V130.1M1111.5 123.4V130.0M1112.5 123.9V129.4M1113.5 123.4V130.0M1114.5 123.5V130.1M1115.5 123.5V129.4M1116.5 123.5V130.2M1117.5 123.4V130.0M1118.5 123.8V129.5M1119.5 123.5V130.2M1120.5 123.4V130.1M1121.5 123.8V129.5M1122.5 123.5V130.2M1123.5 123.5V130.2M1124.5 123.8V129.4M1125.5 123.4V130.1M1126.5 123.5V130.0M1127.5 123.8V129.4M1128.5 123.5V130.0M1129.5 123.5V130.2M1130.5 123.8V129.4M1131.5 123.5V130.0M1132.5 123.5V130.1M1133.5 123.8V129.4M1134.5 123.5V130.1M1135.5 123.5V130.2M1136.5 123.8V129.4M1137.5 123.5V130.1M1138.5 123.5V130.2M1139.5 123.5V129.4M1140.5 123.5V130.1M1141.5 123.5V130.2M1142.5 123.8V129.4M1143.5 123.5V130.0M1144.5 123.5V130.0M1145.5 123.8V129.4M1146.5 123.5V130.1M1147.5 123.5V130.0M1148.5 126.5V127.2M1149.5 126.4V127.2M1150.5 126.4V127.3M1151.5 125.0V128.7M1152.5 124.2V129.3M1153.5 124.4V129.3M1154.5 125.0V128.8M1155.5 124.3V129.4M1156.5 124.4V129.4M1157.5 124.3V128.7M1158.5 124.4V129.5M1159.5 124.2V129.4M1160.5 125.0V128.8M1161.5 124.2V129.4M1162.5 124.4V129.3M1163.5 125.0V128.8M1164.5 124.2V129.3M1165.5 124.3V129.4M1166.5 125.1V128.8M1167.5 124.2V129.4M1168.5 124.3V129.4M1169.5 125.0V129.3M1170.5 124.2V129.3M1171.5 124.2V129.5M1172.5 125.0V129.5M1173.5 124.2V129.4M1174.5 124.3V129.4M1175.5 125.0V128.8M1176.5 124.3V129.3M1177.5 124.3V129.5M1178.5 125.0V128.8M1179.5 124.4V129.4M1180.5 124.4V129.4M1181.5 125.0V128.8M1182.5 124.2V129.4M1183.5 124.4V129.4M1184.5 125.0V128.8M1185.5 124.2V129.4M1186.5 124.2V129.4M1187.5 125.0V128.8M1188.5 124.3V129.4M1189.5 124.2V129.5M1190.5 125.0V129.4M1191.5 124.3V129.5M1192.5 124.3V129.4M1193.5 125.0V128.8M1194.5 124.4V129.4M1195.5 124.4V129.4M1196.5 125.1V129.5M1197.5 124.2V129.5M1198.5 123.6V130.0M1199.5 124.1V130.4M1200.5 123.1V130.1M1201.5 123.5V130.4M1202.5 123.1V130.0M1203.5 123.8V130.0M1204.5 123.7V130.2M1205.5 124.0V129.9M1206.5 124.0V130.0M1207.5 123.5V130.3M1208.5 124.0V130.4M1209.5 123.5V129.9M1210.5 122.9V130.4M1211.5 123.2V130.0M1212.5 123.2V130.3M1213.5 124.0V129.7M1214.5 123.6V130.1M1215.5 124.3V130.0M1216.5 123.6V130.1M1217.5 123.6V130.3M1218.5 123.2V130.3M1219.5 123.4V129.9M1220.5 123.2V130.1M1221.5 123.5V130.1M1222.5 123.4V129.9M1223.5 123.9V130.0M1224.5 123.6V130.1M1225.5 123.2V130.1M1226.5 123.5V130.1M1227.5 123.5V129.9M1228.5 123.8V130.0M1229.5 123.3V130.4M1230.5 123.5V130.0M1231.5 122.9V130.1M1232.5 123.8V130.0M1233.5 123.8V130.1M1234.5 123.2V130.3M1235.5 123.8V129.8M1236.5 123.5V130.3M1237.5 123.0V130.0M1238.5 123.7V130.3M1239.5 123.0V130.0M1240.5 123.5V130.0M1241.5 123.6V129.9M1242.5 123.7V130.1M1243.5 123.3V130.0M1244.5 123.0V130.1M1245.5 122.9V130.1M1246.5 123.0V130.1M1247.5 122.9V129.9M1248.5 123.2V130.1M1249.5 123.1V130.1M1250.5 123.6V130.1M1251.5 123.6V129.9M1252.5 123.7V130.1M1253.5 123.6V130.0M1254.5 123.5V130.0M1255.5 123.1V130.4M1256.5 123.4V130.0M1257.5 123.4V130.1M1258.5 123.7V130.1M1259.5 123.4V130.3M1260.5 123.5V130.3M1261.5 123.7V130.1M1262.5 123.2V129.9M1263.5 123.4V130.1M1264.5 123.7V130.1M1265.5 123.8V130.1M1266.5 123.1V129.8M1267.5 124.2V130.1M1268.5 123.7V130.1M1269.5 123.8V129.9M1270.5 123.7V129.8M1271.5 123.0V130.4M1272.5 123.2V130.4M1273.5 123.6V130.2M1274.5 123.1V130.1M1275.5 123.7V130.1M1276.5 123.7V130.4M1277.5 123.6V130.3M1278.5 123.5V130.3M1279.5 123.2V129.6M1280.5 124.1V129.9M1281.5 123.4V129.8M1282.5 123.4V130.0M1283.5 123.7V130.3M1284.5 123.2V130.1M1285.5 124.3V130.4M1286.5 123.0V129.7M1287.5 124.0V130.2M1288.5 123.5V130.3M1289.5 123.8V130.0M1290.5 123.6V130.1M1291.5 123.6V129.9M1292.5 123.2V130.0M1293.5 123.9V130.4M1294.5 123.2V130.3M1295.5 123.6V130.0M1296.5 122.9V130.1M1297.5 123.8V130.4M1298.5 122.9V130.3M1299.5 123.7V130.4M1300.5 122.9V130.0M1301.5 124.5V130.5M1302.5 124.5V130.1M1303.5 124.5V130.3M1304.5 124.5V130.1M1305.5 124.5V130.4M1306.5 124.6V130.1M1307.5 124.5V130.5M1308.5 124.5V130.4M1309.5 123.0V130.3M1310.5 123.5V130.5M1311.5 123.5V130.4M1312.5 123.7V130.8M1313.5 123.5V130.8M1314.5 124.0V130.3M1315.5 123.6V130.4M1316.5 123.6V130.4M1317.5 123.5V130.8M1318.5 122.9V130.6M1319.5 122.9V130.5M1320.5 123.0V130.3M1321.5 124.0V130.9M1322.5 123.5V130.5M1323.5 124.1V130.9M1324.5 123.0V130.8M1325.5 123.5V130.9M1326.5 123.3V130.3M1327.5 123.7V130.5M1328.5 123.5V129.8M1329.5 123.8V130.5M1330.5 123.5V130.3M1331.5 123.1V130.3M1332.5 123.1V130.4M1333.5 123.8V130.7M1334.5 123.7V130.2M1335.5 123.3V130.3M1336.5 123.7V130.3M1337.5 123.3V130.5M1338.5 123.5V130.4M1339.5 123.4V130.4M1340.5 122.9V130.4M1341.5 123.1V130.2M1342.5 123.1V130.2M1343.5 123.0V130.4M1344.5 123.5V130.3M1345.5 123.3V130.7M1346.5 123.0V130.8M1347.5 123.4V130.4M1348.5 123.8V130.7M1349.5 123.1V130.3M1350.5 123.5V130.0M1351.5 123.6V130.2M1352.5 123.2V130.9M1353.5 123.8V130.6M1354.5 125.8V130.3M1355.5 125.8V130.2M1356.5 125.9V130.2M1357.5 125.7V130.2M1358.5 124.2V130.2M1359.5 124.1V130.4M1360.5 123.6V130.3M1361.5 123.7V130.4M1362.5 123.5V130.4M1363.5 123.4V129.9M1364.5 123.0V130.7M1365.5 123.5V130.7M1366.5 123.6V130.3M1367.5 123.7V130.3M1368.5 123.4V130.4M1369.5 123.6V130.7M1370.5 123.4V130.4M1371.5 123.5V130.6M1372.5 123.6V130.4M1373.5 123.7V130.4M1374.5 123.1V130.5M1375.5 123.7V129.9M1376.5 122.9V130.4M1377.5 123.5V130.3M1378.5 124.2V130.3M1379.5 124.2V130.7M1380.5 123.0V130.3M1381.5 123.7V130.3M1382.5 123.7V130.4M1383.5 123.8V130.8M1384.5 123.6V130.2M1385.5 124.0V130.7M1386.5 123.4V130.3M1387.5 123.6V130.4M1388.5 123.6V129.9M1389.5 123.9V130.2M1390.5 123.7V130.1M1391.5 123.5V130.4M1392.5 123.4V130.4M1393.5 123.4V130.8M1394.5 123.6V130.2M1395.5 123.6V130.7M1396.5 123.0V130.0M1397.5 123.6V130.4M1398.5 123.4V130.4M1399.5 123.4V130.3M1400.5 123.4V130.4M1401.5 122.9V130.4M1402.5 123.5V130.3M1403.5 123.6V130.8M1404.5 123.7V130.2M1405.5 123.5V130.3M1406.5 123.4V130.4M1407.5 123.5V130.5M1408.5 123.5V130.7M1409.5 123.6V130.4M1410.5 123.6V130.5M1411.5 124.0V130.2M1412.5 123.6V130.5M1413.5 123.4V130.7M1414.5 123.4V130.4M1415.5 123.7V129.9M1416.5 123.4V130.6M1417.5 123.2V130.4M1418.5 123.7V130.2M1419.5 124.0V130.2M1420.5 123.4V130.3M1421.5 123.5V130.3M1422.5 123.6V130.5M1423.5 122.9V130.3M1424.5 123.4V130.4M1425.5 124.2V130.2M1426.5 123.1V130.2M1427.5 123.5V130.2M1428.5 123.4V130.5M1429.5 123.4V130.3M1430.5 123.5V129.5M1431.5 124.0V129.3M1432.5 123.7V129.3M1433.5 123.8V129.3M1434.5 123.1V129.4M1435.5 123.0V129.4M1436.5 123.0V129.4M1437.5 123.7V129.5M1438.5 123.2V129.3M1439.5 123.5V129.4M1440.5 123.9V129.3M1441.5 123.6V129.5M1442.5 123.4V129.5M1443.5 123.6V129.4M1444.5 123.5V129.3M1445.5 123.6V129.4M1446.5 123.6V129.3M1447.5 123.5V129.3M1448.5 124.4V130.4M1449.5 124.2V130.5M1450.5 124.2V130.1M1451.5 124.0V130.1M1452.5 124.3V130.5M1453.5 123.7V130.4M1454.5 124.2V129.7M1455.5 123.8V129.9M1456.5 124.2V130.4M1457.5 124.4V130.1M1458.5 123.8V130.1M1459.5 124.1V130.3M1460.5 124.1V130.2M1461.5 124.0V130.4M1462.5 123.8V130.3M1463.5 124.1V130.2M1464.5 123.7V130.6M1465.5 123.9V130.2M1466.5 124.1V131.0M1467.5 123.7V130.2M1468.5 124.2V130.7M1469.5 124.1V130.2M1470.5 123.7V130.4M1471.5 124.1V130.1M1472.5 123.7V130.4M1473.5 124.0V130.5M1474.5 124.4V130.8M1475.5 124.0V131.0M1476.5 123.8V130.4M1477.5 123.6V130.3M1478.5 124.5V130.4M1479.5 123.7V130.2M1480.5 123.8V130.7M1481.5 123.7V130.0M1482.5 123.4V130.4M1483.5 123.7V130.5M1484.5 123.6V130.1M1485.5 123.7V130.6M1486.5 123.1V130.8M1487.5 123.7V130.4M1488.5 123.5V130.6M1489.5 123.4V130.3M1490.5 123.8V130.6M1491.5 123.8V130.2M1492.5 123.1V130.5M1493.5 124.0V130.4M1494.5 123.4V129.9M1495.5 123.6V130.1M1496.5 123.8V130.2M1497.5 123.8V130.4M1498.5 123.7V130.2M1499.5 123.9V130.8M1500.5 123.0V130.6M1501.5 123.9V130.3M1502.5 123.8V130.6M1503.5 124.0V130.5M1504.5 124.0V130.2M1505.5 123.9V130.2M1506.5 124.0V130.3M1507.5 123.3V130.2M1508.5 123.8V130.7M1509.5 123.0V130.6M1510.5 123.4V130.3M1511.5 123.1V130.4M1512.5 123.4V130.3M1513.5 123.9V130.3M1514.5 123.7V130.8M1515.5 124.0V130.2M1516.5 124.0V129.9M1517.5 123.2V130.6M1518.5 124.0V130.5M1519.5 123.8V130.6M1520.5 124.0V130.3M1521.5 123.7V130.6M1522.5 123.8V130.6M1523.5 123.7V130.6M1524.5 123.1V130.3M1525.5 123.7V130.5M1526.5 123.7V130.6M1527.5 123.7V130.6M1528.5 123.8V130.8M1529.5 123.9V130.5M1530.5 123.7V130.8M1531.5 123.7V130.7M1532.5 123.3V130.2M1533.5 123.9V130.2M1534.5 123.3V130.4M1535.5 124.0V130.2M1536.5 123.9V130.4M1537.5 123.6V130.3M1538.5 124.1V130.3M1539.5 123.9V130.4M1540.5 123.4V130.2M1541.5 123.8V130.7M1542.5 123.9V130.6M1543.5 123.1V130.2M1544.5 124.0V130.4M1545.5 123.1V130.7M1546.5 123.9V130.3M1547.5 123.7V130.3M1548.5 123.3V130.6M1549.5 123.9V130.3M1550.5 123.1V130.2M1551.5 124.0V130.3M1552.5 123.2V130.4M1553.5 123.6V130.7M1554.5 123.7V130.6M1555.5 123.9V130.3M1556.5 123.7V130.4M1557.5 123.9V130.3M1558.5 123.4V130.5M1559.5 124.0V130.8M1560.5 123.9V130.7M1561.5 123.7V130.4M1562.5 123.6V130.2M1563.5 123.9V130.3M1564.5 124.0V130.4M1565.5 123.9V130.3M1566.5 123.5V130.3M1567.5 123.9V130.0M1568.5 124.5V130.0M1569.5 123.2V130.4M1570.5 123.8V130.7M1571.5 123.4V130.7M1572.5 123.8V130.2M1573.5 123.1V130.1M1574.5 123.2V130.2M1575.5 123.8V130.7M1576.5 124.8V129.9M1577.5 124.8V129.9M1578.5 124.7V129.9M1579.5 124.7V130.0M1580.5 124.6V129.8M1581.5 124.8V129.9M1582.5 124.6V130.0M1583.5 124.7V129.9M1584.5 124.7V129.9M1585.5 124.6V129.8M1586.5 124.6V129.8M1587.5 124.7V129.8M1588.5 124.0V130.4M1589.5 123.8V130.5M1590.5 123.3V130.2M1591.5 123.9V130.4M1592.5 123.7V130.3M1593.5 123.6V130.3M1594.5 123.0V130.7M1595.5 123.2V130.8M1596.5 124.4V130.2M1597.5 123.8V130.1M1598.5 124.0V130.4M1599.5 124.0V130.7M1600.5 123.9V130.2M1601.5 123.8V130.1M1602.5 123.3V130.4M1603.5 124.2V130.3M1604.5 123.6V129.6M1605.5 123.8V130.1M1606.5 123.2V130.5M1607.5 123.9V130.7M1608.5 123.5V130.3M1609.5 123.9V130.8M1610.5 123.9V130.8M1611.5 123.2V130.2M1612.5 123.8V130.3M1613.5 123.7V130.3M1614.5 123.5V130.3M1615.5 123.9V130.5M1616.5 124.0V130.2M1617.5 123.8V130.4M1618.5 123.7V130.5M1619.5 123.6V130.1M1620.5 123.4V130.3M1621.5 123.6V130.8M1622.5 123.9V130.6M1623.5 123.3V130.3M1624.5 123.8V130.2M1625.5 123.4V130.3M1626.5 123.8V130.4M1627.5 123.8V130.7M1628.5 123.3V130.3M1629.5 123.7V130.8M1630.5 123.6V129.6M1631.5 123.4V130.3M1632.5 124.1V130.1M1633.5 123.4V130.4M1634.5 123.6V130.4M1635.5 123.9V130.1M1636.5 123.7V130.3M1637.5 123.8V130.3M1638.5 123.1V130.4M1639.5 123.8V130.6M1640.5 123.7V129.8M1641.5 123.9V130.1M1642.5 124.0V130.2M1643.5 123.9V130.6M1644.5 123.1V129.6M1645.5 123.0V130.2M1646.5 123.4V130.4M1647.5 123.9V130.4M1648.5 123.7V130.4M1649.5 123.9V130.3M1650.5 123.7V130.4M1651.5 123.8V129.6M1652.5 123.9V130.1M1653.5 122.9V130.1M1654.5 124.1V129.9M1655.5 123.7V130.1M1656.5 123.8V130.2M1657.5 123.1V130.2M1658.5 123.6V130.3M1659.5 123.0V130.7M1660.5 123.8V130.1M1661.5 123.1V130.6M1662.5 123.9V130.2M1663.5 123.7V130.2M1664.5 123.6V130.8M1665.5 124.2V130.2M1666.5 123.1V129.8M1667.5 124.0V130.7M1668.5 123.9V130.1M1669.5 123.6V130.4M1670.5 124.0V130.3M1671.5 123.4V130.7M1672.5 123.1V130.7M1673.5 123.7V130.4M1674.5 123.6V130.4M1675.5 123.2V130.8M1676.5 124.6V130.3M1677.5 123.8V130.3M1678.5 123.7V129.9M1679.5 123.8V130.4M1680.5 123.8V130.2M1681.5 123.7V130.5M1682.5 123.6V130.5M1683.5 124.6V130.3M1684.5 123.5V130.3M1685.5 123.5V130.3M1686.5 123.3V130.2M1687.5 123.2V130.5M1688.5 123.7V130.4M1689.5 123.9V130.3M1690.5 123.9V129.9M1691.5 123.9V130.2M1692.5 123.1V130.8M1693.5 123.8V130.2M1694.5 124.0V130.5M1695.5 123.0V130.2M1696.5 124.0V130.3M1697.5 123.6V130.2M1698.5 124.5V130.3M1699.5 123.1V130.1M1700.5 123.9V130.5M1701.5 124.0V130.1M1702.5 124.0V130.3M1703.5 124.3V130.3M1704.5 123.2V130.7M1705.5 123.7V130.7M1706.5 123.9V130.2M1707.5 124.0V130.6M1708.5 123.7V130.1M1709.5 123.1V130.2M1710.5 123.5V130.6M1711.5 123.9V130.3M1712.5 123.3V130.1M1713.5 124.0V130.2M1714.5 123.8V130.0M1715.5 123.8V130.1M1716.5 123.9V130.3M1717.5 123.7V130.3M1718.5 124.4V130.2M1719.5 123.7V130.7M1720.5 124.0V130.1M1721.5 124.6V130.2M1722.5 123.1V129.9M1723.5 123.7V130.1M1724.5 124.0V130.2M1725.5 124.7V130.3M1726.5 123.8V130.8M1727.5 123.7V130.4M1728.5 124.3V130.3M1729.5 123.9V130.4M1730.5 123.8V130.2M1731.5 124.3V130.3M1732.5 124.3V130.1M1733.5 123.3V130.3M1734.5 124.3V129.5M1735.5 124.4V129.1M1736.5 124.3V129.5M1737.5 124.2V129.5M1738.5 125.0V129.1M1739.5 124.2V129.5M1740.5 124.3V129.5M1741.5 124.9V129.1M1742.5 124.3V129.5M1743.5 124.2V129.4M1744.5 125.0V129.1M1745.5 124.4V129.5M1746.5 124.2V129.4M1747.5 125.1V129.1M1748.5 124.3V129.5M1749.5 124.2V129.4M1750.5 124.2V129.5M1751.5 124.2V129.5M1752.5 124.3V129.6M1753.5 124.2V129.1M1754.5 124.2V129.5M1755.5 124.3V129.4M1756.5 125.0V129.1M1757.5 124.4V129.4M1758.5 124.3V129.5M1759.5 124.2V129.1M1760.5 124.3V129.5" stroke="#52ecd6" stroke-width="1" shape-rendering="crispEdges"/></g><path d="M507.5 108V134" stroke="#e85858" stroke-width="1"/></svg><svg class="a" style="left:1777px;top:111px" width="20" height="18"><circle cx="9" cy="8" r="4" fill="none" stroke="#555" stroke-width="1.3"/><path d="M7 8H11M12 11L15 14M9 1L7.5 2.5H10.5ZM9 16L7.5 14.5H10.5ZM1 8L2.5 6.5V9.5ZM17 8L15.5 6.5V9.5Z" stroke="#555" fill="#555"/></svg><svg class="a" style="left:1807px;top:113px" width="16" height="15"><rect x="1" y="1" width="13" height="12" fill="#3a3a3a" stroke="#c0c0c0" stroke-width="1.3"/><path d="M1 5H14M1 9H14" stroke="#c0c0c0" stroke-width="1.3"/></svg><div class="a" style="left:497px;top:152px;width:1268px;height:26px;background:#262626;border-top:1px solid #000;border-left:1px solid #000"></div><svg class="a" style="left:0;top:0" width="1920" height="180"><path d="M498.5 170V177M547.5 173V177M597.5 170V177M647.5 173V177M697.5 170V177M746.5 173V177M796.5 170V177M846.5 173V177M896.5 170V177M945.5 173V177M995.5 170V177M1045.5 173V177M1095.5 170V177M1144.5 173V177M1194.5 170V177M1244.5 173V177M1294.5 170V177M1343.5 173V177M1393.5 170V177M1443.5 173V177M1493.5 170V177M1542.5 173V177M1592.5 170V177M1642.5 173V177M1692.5 170V177M1741.5 173V177" stroke="#b0b0b0" stroke-width="1"/><path d="M1114.5 153V177" stroke="#2e8ee8"/><path d="M502 165H513V171L507.5 176L502 171Z" fill="#3090f0"/><path d="M1125 165H1137V171L1131 176L1125 171Z" fill="#2a5a90"/></svg><div class="t" style="left:501px;top:156px;color:#a8a8a8">hms</div><div class="t" style="left:598px;top:156px;width:40px;margin-left:-20px;text-align:center;color:#a8a8a8">1:00</div><div class="t" style="left:697px;top:156px;width:40px;margin-left:-20px;text-align:center;color:#a8a8a8">2:00</div><div class="t" style="left:796px;top:156px;width:40px;margin-left:-20px;text-align:center;color:#a8a8a8">3:00</div><div class="t" style="left:896px;top:156px;width:40px;margin-left:-20px;text-align:center;color:#a8a8a8">4:00</div><div class="t" style="left:996px;top:156px;width:40px;margin-left:-20px;text-align:center;color:#a8a8a8">5:00</div><div class="t" style="left:1095px;top:156px;width:40px;margin-left:-20px;text-align:center;color:#a8a8a8">6:00</div><div class="t" style="left:1194px;top:156px;width:40px;margin-left:-20px;text-align:center;color:#a8a8a8">7:00</div><div class="t" style="left:1294px;top:156px;width:40px;margin-left:-20px;text-align:center;color:#a8a8a8">8:00</div><div class="t" style="left:1394px;top:156px;width:40px;margin-left:-20px;text-align:center;color:#a8a8a8">9:00</div><div class="t" style="left:1493px;top:156px;width:40px;margin-left:-20px;text-align:center;color:#a8a8a8">10:00</div><div class="t" style="left:1592px;top:156px;width:40px;margin-left:-20px;text-align:center;color:#a8a8a8">11:00</div><div class="t" style="left:1692px;top:156px;width:40px;margin-left:-20px;text-align:center;color:#a8a8a8">12:00</div><div class="a" style="left:1772px;top:153px;width:21px;height:21px;background:#1e1e1e;border:1px solid #353535;border-radius:4px"></div><div class="a" style="left:1793px;top:153px;width:21px;height:21px;background:#1e1e1e;border:1px solid #353535;border-radius:4px"></div><svg class="a" style="left:1776px;top:157px" width="14" height="14"><path d="M1 13V7A6 6 0 0 1 13 7V13H8.7V7.8A1.7 1.7 0 0 0 5.3 7.8V13Z" fill="#3090ee"/><path d="M1.8 10.5H4.6V12.3H1.8ZM9.4 10.5H12.2V12.3H9.4Z" fill="#164a80"/></svg><svg class="a" style="left:1798px;top:156px" width="12" height="16"><path d="M2 1H10V6L7 8V15H5V8L2 6Z" fill="#2e8ee8"/></svg><div class="a" style="left:497px;top:177px;width:1269px;height:429px;background:#3c3c3c;border-top:1px solid #000;border-left:1px solid #000;border-right:1px solid #000"></div><svg class="a" style="left:0;top:0" width="1920" height="620"><path d="M498 209.5H1765M498 231.5H1765M498 246.5H1765M498 264.5H1765M498 303.5H1765M498 321.5H1765M498 337.5H1765M498 359.5H1765M498 391.5H1765M498 423.5H1765M498 445.5H1765M498 460.5H1765M498 479.5H1765M498 517.5H1765M498 535.5H1765M498 551.5H1765M498 573.5H1765M498 604.5H1765M498 178.5H1765M498.5 178V605M597.5 178V605M697.5 178V605M796.5 178V605M896.5 178V605M995.5 178V605M1095.5 178V605M1194.5 178V605M1294.5 178V605M1393.5 178V605M1493.5 178V605M1592.5 178V605M1692.5 178V605" stroke="#0e3a0e" stroke-width="1" fill="none"/><path d="M498.5 268V297M499.5 271V298M500.5 270V298M501.5 272V298M502.5 268V297M503.5 269V296M504.5 229V339M505.5 235V339M506.5 229V338M507.5 235V333M508.5 244V340M509.5 234V329M510.5 234V335M511.5 233V335M512.5 230V334M513.5 228V335M514.5 236V336M515.5 236V332M516.5 228V328M517.5 237V337M518.5 235V333M519.5 233V334M520.5 228V332M521.5 234V336M522.5 235V334M523.5 227V333M524.5 235V334M525.5 235V334M526.5 230V341M527.5 234V336M528.5 227V332M529.5 231V333M530.5 228V332M531.5 229V339M532.5 236V334M533.5 229V333M534.5 227V333M535.5 234V338M536.5 228V342M537.5 235V343M538.5 235V341M539.5 235V335M540.5 230V326M541.5 233V337M542.5 236V338M543.5 238V337M544.5 237V337M545.5 235V334M546.5 228V333M547.5 228V341M548.5 233V332M549.5 230V327M550.5 237V336M551.5 240V335M552.5 233V342M553.5 230V331M554.5 235V334M555.5 236V335M556.5 244V341M557.5 231V342M558.5 234V335M559.5 236V333M560.5 230V335M561.5 241V342M562.5 238V332M563.5 227V339M564.5 241V339M565.5 227V343M566.5 233V330M567.5 229V341M568.5 231V330M569.5 236V332M570.5 245V331M571.5 228V328M572.5 234V341M573.5 237V339M574.5 241V335M575.5 241V334M576.5 233V333M577.5 235V335M578.5 231V338M579.5 238V341M580.5 234V336M581.5 229V332M582.5 239V337M583.5 236V341M584.5 240V333M585.5 238V336M586.5 233V336M587.5 237V333M588.5 234V338M589.5 244V335M590.5 236V334M591.5 231V334M592.5 238V333M593.5 230V334M594.5 235V338M595.5 235V334M596.5 234V341M597.5 237V335M598.5 239V342M599.5 225V338M600.5 221V335M601.5 227V337M602.5 229V338M603.5 236V340M604.5 215V336M605.5 222V338M606.5 214V344M607.5 223V344M608.5 228V339M609.5 222V339M610.5 230V338M611.5 217V344M612.5 228V337M613.5 217V343M614.5 217V336M615.5 223V337M616.5 223V343M617.5 214V339M618.5 232V339M619.5 223V337M620.5 213V343M621.5 220V340M622.5 215V337M623.5 225V336M624.5 224V337M625.5 222V338M626.5 226V341M627.5 221V338M628.5 231V337M629.5 220V337M630.5 223V336M631.5 224V339M632.5 222V339M633.5 222V338M634.5 224V338M635.5 234V339M636.5 223V337M637.5 221V337M638.5 224V336M639.5 222V337M640.5 227V339M641.5 224V338M642.5 217V337M643.5 213V337M644.5 222V343M645.5 221V343M646.5 215V343M647.5 225V344M648.5 221V344M649.5 225V339M650.5 226V337M651.5 231V333M652.5 225V336M653.5 214V339M654.5 214V337M655.5 216V336M656.5 218V339M657.5 219V339M658.5 233V339M659.5 214V342M660.5 224V341M661.5 224V337M662.5 225V339M663.5 227V339M664.5 224V339M665.5 221V337M666.5 227V343M667.5 216V342M668.5 221V341M669.5 227V341M670.5 219V339M671.5 221V337M672.5 220V337M673.5 212V337M674.5 223V336M675.5 224V344M676.5 223V339M677.5 222V344M678.5 213V339M679.5 218V338M680.5 220V342M681.5 226V339M682.5 227V336M683.5 226V342M684.5 225V343M685.5 221V338M686.5 215V337M687.5 221V336M688.5 224V333M689.5 222V339M690.5 225V342M691.5 226V338M692.5 213V337M693.5 225V339M694.5 223V344M695.5 225V344M696.5 221V331M697.5 221V332M698.5 215V340M699.5 222V337M700.5 233V338M701.5 232V341M702.5 223V335M703.5 222V341M704.5 225V341M705.5 223V341M706.5 223V344M707.5 216V339M708.5 221V339M709.5 224V338M710.5 234V339M711.5 229V343M712.5 224V337M713.5 222V336M714.5 224V341M715.5 227V341M716.5 222V333M717.5 223V338M718.5 221V338M719.5 225V338M720.5 220V343M721.5 234V337M722.5 221V338M723.5 221V337M724.5 222V339M725.5 225V336M726.5 224V341M727.5 213V337M728.5 229V339M729.5 224V338M730.5 224V333M731.5 218V335M732.5 217V339M733.5 222V336M734.5 220V338M735.5 221V336M736.5 224V336M737.5 217V339M738.5 222V336M739.5 222V342M740.5 228V336M741.5 221V342M742.5 221V335M743.5 221V337M744.5 225V336M745.5 233V331M746.5 215V339M747.5 225V343M748.5 226V342M749.5 221V338M750.5 216V343M751.5 217V338M752.5 223V344M753.5 223V342M754.5 223V339M755.5 224V336M756.5 217V342M757.5 223V337M758.5 215V338M759.5 219V338M760.5 217V340M761.5 223V336M762.5 226V343M763.5 227V343M764.5 217V341M765.5 218V339M766.5 225V337M767.5 225V334M768.5 223V338M769.5 224V338M770.5 223V337M771.5 223V336M772.5 226V342M773.5 225V342M774.5 224V342M775.5 223V339M776.5 222V342M777.5 226V335M778.5 226V339M779.5 221V343M780.5 224V343M781.5 214V338M782.5 212V333M783.5 223V338M784.5 223V339M785.5 223V342M786.5 214V341M787.5 218V337M788.5 212V333M789.5 221V343M790.5 215V337M791.5 221V339M792.5 223V332M793.5 216V337M794.5 224V338M795.5 227V339M796.5 242V320M797.5 246V328M798.5 246V327M799.5 243V314M800.5 268V301M801.5 269V301M802.5 268V302M803.5 269V301M804.5 268V302M805.5 267V303M806.5 270V301M807.5 270V300M808.5 270V301M809.5 268V302M810.5 268V301M811.5 270V303M812.5 268V303M813.5 270V301M814.5 268V302M815.5 267V302M816.5 269V300M817.5 268V303M818.5 267V302M819.5 269V301M820.5 248V312M821.5 252V320M822.5 264V319M823.5 252V328M824.5 241V318M825.5 252V312M826.5 238V316M827.5 251V307M828.5 252V318M829.5 255V317M830.5 239V315M831.5 249V318M832.5 253V325M833.5 254V315M834.5 244V329M835.5 254V320M836.5 252V315M837.5 255V314M838.5 253V318M839.5 242V325M840.5 254V321M841.5 249V328M842.5 252V329M843.5 242V329M844.5 251V316M845.5 239V320M846.5 263V329M847.5 254V326M848.5 239V320M849.5 249V328M850.5 246V324M851.5 253V318M852.5 241V321M853.5 249V307M854.5 254V329M855.5 242V314M856.5 239V321M857.5 257V314M858.5 252V308M859.5 242V315M860.5 249V307M861.5 239V320M862.5 245V311M863.5 242V306M864.5 248V320M865.5 253V309M866.5 262V309M867.5 251V315M868.5 249V329M869.5 250V321M870.5 268V302M871.5 270V302M872.5 270V303M873.5 269V301M874.5 268V302M875.5 268V301M876.5 268V303M877.5 269V302M878.5 268V300M879.5 270V301M880.5 215V339M881.5 226V338M882.5 225V339M883.5 223V342M884.5 225V334M885.5 214V339M886.5 224V339M887.5 218V335M888.5 222V334M889.5 223V334M890.5 227V334M891.5 224V334M892.5 225V336M893.5 231V339M894.5 228V339M895.5 214V337M896.5 228V334M897.5 229V340M898.5 216V341M899.5 217V339M900.5 226V336M901.5 220V335M902.5 233V334M903.5 220V336M904.5 233V335M905.5 218V337M906.5 236V336M907.5 226V336M908.5 226V337M909.5 225V337M910.5 227V336M911.5 218V335M912.5 224V331M913.5 226V336M914.5 224V341M915.5 227V340M916.5 224V335M917.5 220V331M918.5 239V326M919.5 238V328M920.5 244V329M921.5 244V329M922.5 246V333M923.5 244V329M924.5 245V333M925.5 243V332M926.5 244V328M927.5 244V329M928.5 228V335M929.5 231V339M930.5 220V337M931.5 227V333M932.5 231V339M933.5 232V330M934.5 224V340M935.5 232V340M936.5 233V339M937.5 221V335M938.5 222V335M939.5 230V335M940.5 222V336M941.5 222V334M942.5 226V340M943.5 223V339M944.5 230V336M945.5 222V334M946.5 241V339M947.5 220V338M948.5 222V335M949.5 228V337M950.5 230V340M951.5 226V334M952.5 218V336M953.5 242V335M954.5 230V335M955.5 223V340M956.5 228V339M957.5 232V340M958.5 219V341M959.5 230V337M960.5 242V334M961.5 220V331M962.5 221V332M963.5 226V336M964.5 230V341M965.5 222V337M966.5 222V335M967.5 230V341M968.5 233V338M969.5 226V339M970.5 229V332M971.5 239V337M972.5 229V335M973.5 232V340M974.5 222V339M975.5 221V336M976.5 232V335M977.5 266V305M978.5 263V306M979.5 262V302M980.5 266V305M981.5 268V302M982.5 230V341M983.5 229V340M984.5 228V338M985.5 234V344M986.5 235V342M987.5 228V342M988.5 227V344M989.5 222V335M990.5 230V338M991.5 230V337M992.5 231V340M993.5 231V340M994.5 219V344M995.5 221V339M996.5 244V338M997.5 221V339M998.5 220V344M999.5 231V339M1000.5 234V337M1001.5 222V340M1002.5 227V343M1003.5 223V336M1004.5 231V331M1005.5 223V334M1006.5 218V337M1007.5 232V338M1008.5 220V333M1009.5 233V341M1010.5 236V339M1011.5 230V339M1012.5 228V344M1013.5 222V337M1014.5 228V342M1015.5 240V340M1016.5 234V337M1017.5 230V336M1018.5 237V338M1019.5 234V343M1020.5 240V337M1021.5 232V339M1022.5 234V345M1023.5 233V337M1024.5 199V341M1025.5 224V337M1026.5 235V338M1027.5 233V337M1028.5 234V338M1029.5 231V337M1030.5 227V339M1031.5 232V338M1032.5 232V337M1033.5 223V337M1034.5 228V337M1035.5 239V338M1036.5 232V339M1037.5 233V339M1038.5 234V340M1039.5 242V339M1040.5 225V338M1041.5 233V339M1042.5 222V343M1043.5 227V337M1044.5 231V339M1045.5 245V342M1046.5 237V335M1047.5 234V342M1048.5 229V337M1049.5 234V343M1050.5 228V343M1051.5 234V337M1052.5 232V343M1053.5 228V337M1054.5 235V336M1055.5 233V339M1056.5 234V336M1057.5 227V339M1058.5 234V337M1059.5 232V338M1060.5 225V341M1061.5 231V338M1062.5 218V336M1063.5 229V339M1064.5 230V332M1065.5 235V339M1066.5 230V339M1067.5 220V337M1068.5 224V343M1069.5 225V340M1070.5 231V336M1071.5 230V333M1072.5 232V333M1073.5 229V336M1074.5 228V336M1075.5 235V333M1076.5 235V332M1077.5 234V331M1078.5 235V332M1079.5 239V322M1080.5 235V331M1081.5 235V331M1082.5 239V324M1083.5 235V332M1084.5 235V331M1085.5 240V322M1086.5 235V332M1087.5 234V332M1088.5 239V323M1089.5 235V331M1090.5 235V331M1091.5 239V322M1092.5 234V332M1093.5 235V331M1094.5 234V323M1095.5 235V332M1096.5 234V332M1097.5 234V323M1098.5 235V330M1099.5 235V330M1100.5 239V323M1101.5 235V332M1102.5 235V332M1103.5 239V323M1104.5 235V332M1105.5 234V331M1106.5 235V332M1107.5 235V332M1108.5 235V331M1109.5 240V323M1110.5 235V331M1111.5 235V332M1112.5 239V324M1113.5 235V332M1114.5 235V332M1115.5 239V332M1116.5 235V332M1117.5 234V331M1118.5 240V324M1119.5 234V332M1120.5 235V333M1121.5 239V322M1122.5 235V332M1123.5 234V332M1124.5 234V323M1125.5 235V331M1126.5 234V332M1127.5 239V323M1128.5 235V330M1129.5 234V332M1130.5 240V323M1131.5 234V332M1132.5 235V332M1133.5 235V322M1134.5 235V332M1135.5 235V333M1136.5 240V323M1137.5 235V333M1138.5 235V331M1139.5 239V322M1140.5 235V332M1141.5 235V333M1142.5 234V332M1143.5 234V333M1144.5 234V330M1145.5 239V323M1146.5 234V331M1147.5 234V331M1148.5 275V297M1149.5 276V297M1150.5 275V299M1151.5 252V309M1152.5 237V327M1153.5 240V328M1154.5 254V310M1155.5 240V325M1156.5 240V326M1157.5 253V312M1158.5 237V326M1159.5 238V329M1160.5 252V311M1161.5 237V326M1162.5 236V329M1163.5 253V327M1164.5 237V329M1165.5 240V326M1166.5 239V310M1167.5 238V330M1168.5 237V328M1169.5 252V309M1170.5 240V329M1171.5 237V326M1172.5 252V312M1173.5 238V325M1174.5 240V326M1175.5 252V309M1176.5 236V327M1177.5 238V326M1178.5 253V312M1179.5 239V327M1180.5 239V325M1181.5 237V309M1182.5 240V327M1183.5 239V326M1184.5 253V330M1185.5 238V328M1186.5 237V325M1187.5 254V310M1188.5 237V330M1189.5 240V325M1190.5 240V309M1191.5 238V326M1192.5 240V326M1193.5 253V311M1194.5 238V326M1195.5 240V327M1196.5 239V338M1197.5 236V339M1198.5 240V336M1199.5 244V333M1200.5 242V338M1201.5 234V327M1202.5 234V340M1203.5 243V340M1204.5 233V332M1205.5 239V340M1206.5 243V335M1207.5 239V328M1208.5 244V334M1209.5 242V335M1210.5 242V330M1211.5 248V335M1212.5 234V336M1213.5 235V332M1214.5 239V335M1215.5 247V336M1216.5 243V335M1217.5 243V341M1218.5 240V334M1219.5 246V338M1220.5 234V333M1221.5 243V335M1222.5 242V334M1223.5 239V335M1224.5 244V338M1225.5 241V335M1226.5 233V342M1227.5 239V332M1228.5 242V331M1229.5 243V340M1230.5 243V333M1231.5 249V329M1232.5 241V334M1233.5 243V336M1234.5 233V333M1235.5 239V334M1236.5 243V328M1237.5 242V336M1238.5 242V334M1239.5 240V338M1240.5 243V333M1241.5 250V338M1242.5 243V339M1243.5 237V335M1244.5 244V340M1245.5 243V332M1246.5 239V330M1247.5 233V334M1248.5 240V334M1249.5 237V342M1250.5 244V336M1251.5 239V341M1252.5 243V342M1253.5 234V328M1254.5 242V333M1255.5 241V332M1256.5 235V342M1257.5 241V336M1258.5 250V340M1259.5 239V334M1260.5 237V339M1261.5 242V333M1262.5 251V339M1263.5 235V341M1264.5 240V341M1265.5 242V336M1266.5 249V335M1267.5 242V336M1268.5 240V341M1269.5 240V334M1270.5 239V332M1271.5 250V335M1272.5 242V342M1273.5 241V336M1274.5 234V335M1275.5 246V336M1276.5 239V333M1277.5 235V327M1278.5 240V335M1279.5 239V334M1280.5 240V333M1281.5 243V339M1282.5 237V336M1283.5 232V336M1284.5 237V332M1285.5 234V339M1286.5 243V336M1287.5 248V333M1288.5 239V333M1289.5 242V336M1290.5 242V336M1291.5 244V340M1292.5 237V332M1293.5 242V326M1294.5 242V342M1295.5 234V334M1296.5 239V335M1297.5 235V333M1298.5 240V342M1299.5 236V333M1300.5 242V341M1301.5 241V338M1302.5 241V338M1303.5 243V336M1304.5 250V341M1305.5 233V338M1306.5 243V336M1307.5 240V339M1308.5 242V335M1309.5 236V327M1310.5 244V342M1311.5 240V342M1312.5 234V334M1313.5 243V326M1314.5 242V334M1315.5 240V327M1316.5 235V341M1317.5 243V334M1318.5 244V336M1319.5 233V334M1320.5 242V332M1321.5 234V334M1322.5 248V336M1323.5 250V333M1324.5 241V339M1325.5 243V333M1326.5 236V333M1327.5 239V334M1328.5 236V334M1329.5 235V336M1330.5 241V341M1331.5 234V330M1332.5 242V332M1333.5 240V338M1334.5 235V335M1335.5 244V339M1336.5 233V336M1337.5 243V333M1338.5 237V336M1339.5 240V334M1340.5 251V335M1341.5 243V332M1342.5 242V336M1343.5 232V329M1344.5 234V333M1345.5 242V338M1346.5 240V333M1347.5 244V339M1348.5 237V332M1349.5 244V332M1350.5 234V341M1351.5 241V335M1352.5 235V338M1353.5 241V327M1354.5 232V334M1355.5 268V313M1356.5 267V315M1357.5 265V315M1358.5 267V315M1359.5 239V338M1360.5 241V334M1361.5 238V340M1362.5 240V337M1363.5 239V335M1364.5 239V334M1365.5 236V336M1366.5 236V336M1367.5 239V340M1368.5 239V333M1369.5 233V334M1370.5 240V333M1371.5 237V336M1372.5 243V335M1373.5 239V334M1374.5 240V335M1375.5 243V333M1376.5 240V333M1377.5 231V335M1378.5 234V335M1379.5 236V336M1380.5 239V335M1381.5 239V331M1382.5 233V333M1383.5 237V339M1384.5 239V333M1385.5 231V334M1386.5 236V337M1387.5 239V334M1388.5 232V331M1389.5 246V335M1390.5 240V334M1391.5 238V335M1392.5 236V333M1393.5 237V334M1394.5 238V336M1395.5 230V329M1396.5 237V334M1397.5 234V334M1398.5 232V339M1399.5 233V334M1400.5 238V337M1401.5 239V338M1402.5 231V334M1403.5 232V336M1404.5 240V335M1405.5 238V331M1406.5 236V333M1407.5 236V334M1408.5 240V333M1409.5 239V338M1410.5 237V333M1411.5 245V333M1412.5 236V332M1413.5 230V335M1414.5 245V335M1415.5 239V332M1416.5 231V330M1417.5 240V334M1418.5 238V339M1419.5 237V340M1420.5 242V332M1421.5 236V338M1422.5 234V336M1423.5 240V335M1424.5 239V336M1425.5 233V336M1426.5 234V338M1427.5 240V335M1428.5 236V334M1429.5 240V331M1430.5 231V334M1431.5 238V338M1432.5 239V337M1433.5 237V332M1434.5 245V336M1435.5 245V336M1436.5 234V339M1437.5 241V340M1438.5 239V338M1439.5 234V339M1440.5 232V335M1441.5 239V334M1442.5 239V336M1443.5 233V335M1444.5 240V333M1445.5 239V336M1446.5 236V340M1447.5 239V337M1448.5 242V333M1449.5 237V339M1450.5 241V340M1451.5 241V345M1452.5 242V334M1453.5 246V348M1454.5 238V340M1455.5 242V349M1456.5 241V339M1457.5 243V342M1458.5 243V341M1459.5 238V359M1460.5 237V333M1461.5 242V347M1462.5 238V334M1463.5 241V339M1464.5 246V338M1465.5 241V339M1466.5 243V339M1467.5 242V339M1468.5 239V343M1469.5 241V345M1470.5 243V342M1471.5 236V341M1472.5 239V338M1473.5 243V343M1474.5 243V340M1475.5 236V342M1476.5 243V339M1477.5 249V336M1478.5 243V334M1479.5 248V332M1480.5 232V334M1481.5 238V327M1482.5 243V335M1483.5 248V332M1484.5 236V330M1485.5 234V332M1486.5 247V335M1487.5 242V333M1488.5 249V338M1489.5 235V338M1490.5 246V331M1491.5 234V334M1492.5 246V333M1493.5 252V335M1494.5 242V333M1495.5 249V330M1496.5 243V335M1497.5 246V331M1498.5 234V333M1499.5 237V337M1500.5 235V335M1501.5 235V337M1502.5 234V339M1503.5 246V334M1504.5 234V335M1505.5 240V333M1506.5 253V333M1507.5 248V331M1508.5 261V335M1509.5 250V330M1510.5 243V336M1511.5 250V334M1512.5 243V332M1513.5 243V332M1514.5 250V334M1515.5 235V334M1516.5 248V338M1517.5 235V338M1518.5 244V340M1519.5 233V335M1520.5 251V334M1521.5 245V333M1522.5 243V332M1523.5 248V332M1524.5 243V333M1525.5 246V333M1526.5 243V338M1527.5 249V332M1528.5 236V340M1529.5 247V335M1530.5 245V334M1531.5 249V333M1532.5 253V334M1533.5 237V334M1534.5 248V339M1535.5 243V333M1536.5 245V332M1537.5 247V332M1538.5 240V337M1539.5 246V340M1540.5 244V333M1541.5 242V333M1542.5 243V332M1543.5 235V339M1544.5 248V339M1545.5 232V333M1546.5 245V335M1547.5 250V340M1548.5 250V337M1549.5 235V329M1550.5 243V340M1551.5 248V333M1552.5 246V340M1553.5 237V333M1554.5 238V335M1555.5 243V339M1556.5 261V337M1557.5 246V332M1558.5 254V332M1559.5 246V333M1560.5 256V330M1561.5 245V339M1562.5 244V332M1563.5 242V337M1564.5 244V335M1565.5 245V334M1566.5 248V331M1567.5 246V335M1568.5 243V335M1569.5 245V340M1570.5 247V335M1571.5 247V327M1572.5 243V333M1573.5 244V333M1574.5 258V335M1575.5 243V335M1576.5 250V337M1577.5 237V336M1578.5 232V335M1579.5 261V329M1580.5 261V330M1581.5 262V331M1582.5 260V328M1583.5 260V329M1584.5 260V328M1585.5 260V330M1586.5 262V329M1587.5 260V329M1588.5 262V331M1589.5 260V329M1590.5 261V329M1591.5 238V340M1592.5 246V333M1593.5 232V333M1594.5 248V333M1595.5 245V328M1596.5 241V339M1597.5 246V336M1598.5 242V340M1599.5 237V332M1600.5 246V333M1601.5 244V331M1602.5 241V334M1603.5 256V334M1604.5 246V331M1605.5 235V337M1606.5 242V335M1607.5 247V334M1608.5 237V336M1609.5 243V334M1610.5 245V337M1611.5 247V341M1612.5 243V335M1613.5 246V334M1614.5 238V335M1615.5 242V343M1616.5 217V331M1617.5 245V342M1618.5 245V340M1619.5 245V340M1620.5 246V341M1621.5 233V335M1622.5 245V331M1623.5 247V342M1624.5 243V332M1625.5 239V334M1626.5 246V337M1627.5 242V333M1628.5 242V343M1629.5 233V340M1630.5 249V334M1631.5 238V341M1632.5 246V343M1633.5 243V339M1634.5 247V340M1635.5 243V344M1636.5 242V335M1637.5 245V344M1638.5 248V341M1639.5 244V337M1640.5 237V335M1641.5 247V336M1642.5 247V336M1643.5 247V343M1644.5 245V333M1645.5 235V337M1646.5 235V342M1647.5 245V334M1648.5 242V336M1649.5 245V335M1650.5 245V334M1651.5 247V332M1652.5 247V332M1653.5 248V335M1654.5 235V337M1655.5 248V343M1656.5 245V334M1657.5 235V339M1658.5 237V333M1659.5 232V337M1660.5 245V332M1661.5 246V337M1662.5 241V337M1663.5 236V336M1664.5 245V341M1665.5 243V337M1666.5 243V337M1667.5 237V334M1668.5 245V332M1669.5 236V333M1670.5 239V341M1671.5 236V332M1672.5 243V325M1673.5 239V335M1674.5 254V332M1675.5 247V339M1676.5 252V336M1677.5 246V334M1678.5 255V337M1679.5 245V343M1680.5 247V337M1681.5 258V333M1682.5 238V342M1683.5 233V337M1684.5 244V331M1685.5 238V340M1686.5 238V334M1687.5 244V335M1688.5 257V335M1689.5 236V335M1690.5 254V331M1691.5 246V339M1692.5 247V332M1693.5 237V335M1694.5 241V335M1695.5 237V336M1696.5 238V334M1697.5 242V339M1698.5 237V333M1699.5 245V340M1700.5 243V333M1701.5 236V333M1702.5 239V339M1703.5 237V337M1704.5 245V333M1705.5 245V334M1706.5 237V340M1707.5 250V337M1708.5 246V339M1709.5 253V332M1710.5 247V336M1711.5 242V339M1712.5 237V333M1713.5 236V333M1714.5 247V334M1715.5 244V335M1716.5 247V328M1717.5 247V336M1718.5 244V335M1719.5 243V330M1720.5 255V333M1721.5 236V334M1722.5 239V331M1723.5 257V336M1724.5 242V336M1725.5 250V336M1726.5 245V332M1727.5 238V337M1728.5 255V337M1729.5 244V334M1730.5 241V336M1731.5 233V334M1732.5 249V337M1733.5 246V336M1734.5 232V326M1735.5 245V340M1736.5 246V332M1737.5 243V333M1738.5 238V337M1739.5 258V328M1740.5 245V327M1741.5 244V329M1742.5 259V310M1743.5 246V328M1744.5 243V330M1745.5 258V310M1746.5 245V327M1747.5 243V329M1748.5 258V312M1749.5 243V327M1750.5 243V327M1751.5 259V311M1752.5 244V325M1753.5 245V329M1754.5 243V309M1755.5 244V329M1756.5 246V327M1757.5 259V311M1758.5 244V325M1759.5 242V329M1760.5 258V309M1761.5 242V328M1762.5 246V325M1763.5 259V328M1764.5 244V329" stroke="#2edec2" stroke-width="1" shape-rendering="crispEdges"/><path d="M498.5 486V508M499.5 483V507M500.5 483V506M501.5 483V508M502.5 485V506M503.5 482V507M504.5 445V554M505.5 444V552M506.5 445V552M507.5 446V555M508.5 446V555M509.5 450V554M510.5 447V555M511.5 446V555M512.5 447V555M513.5 447V558M514.5 448V549M515.5 451V547M516.5 447V554M517.5 448V555M518.5 449V554M519.5 450V551M520.5 448V560M521.5 442V552M522.5 440V554M523.5 443V560M524.5 440V560M525.5 443V552M526.5 441V551M527.5 450V558M528.5 446V558M529.5 442V554M530.5 453V554M531.5 448V552M532.5 442V552M533.5 447V552M534.5 450V553M535.5 442V557M536.5 443V559M537.5 445V545M538.5 442V559M539.5 446V552M540.5 447V557M541.5 449V552M542.5 443V557M543.5 447V554M544.5 440V547M545.5 447V551M546.5 447V557M547.5 448V555M548.5 448V549M549.5 441V558M550.5 446V559M551.5 447V559M552.5 443V555M553.5 441V559M554.5 447V553M555.5 444V560M556.5 445V551M557.5 446V553M558.5 447V552M559.5 447V546M560.5 454V558M561.5 448V554M562.5 452V551M563.5 445V558M564.5 444V555M565.5 448V558M566.5 446V553M567.5 442V546M568.5 442V552M569.5 447V553M570.5 453V552M571.5 449V555M572.5 442V553M573.5 445V553M574.5 451V554M575.5 446V559M576.5 446V547M577.5 442V555M578.5 446V561M579.5 447V546M580.5 441V552M581.5 447V560M582.5 442V552M583.5 447V561M584.5 444V555M585.5 446V554M586.5 448V551M587.5 441V560M588.5 447V555M589.5 448V558M590.5 448V559M591.5 451V553M592.5 445V554M593.5 447V551M594.5 448V555M595.5 447V551M596.5 447V555M597.5 446V552M598.5 448V561M599.5 441V553M600.5 449V552M601.5 432V554M602.5 429V547M603.5 422V559M604.5 432V550M605.5 429V553M606.5 427V545M607.5 426V553M608.5 427V554M609.5 429V551M610.5 433V546M611.5 427V561M612.5 424V551M613.5 446V551M614.5 433V551M615.5 429V557M616.5 436V557M617.5 420V557M618.5 422V551M619.5 428V556M620.5 431V550M621.5 427V553M622.5 431V546M623.5 429V554M624.5 430V554M625.5 445V551M626.5 435V561M627.5 416V554M628.5 421V549M629.5 421V556M630.5 434V544M631.5 416V558M632.5 434V549M633.5 416V552M634.5 427V558M635.5 423V557M636.5 422V552M637.5 427V552M638.5 437V560M639.5 433V551M640.5 431V553M641.5 430V551M642.5 426V559M643.5 429V559M644.5 422V552M645.5 428V552M646.5 417V554M647.5 435V556M648.5 430V561M649.5 446V551M650.5 417V550M651.5 442V551M652.5 431V550M653.5 433V547M654.5 430V552M655.5 437V553M656.5 431V551M657.5 433V558M658.5 420V551M659.5 419V550M660.5 429V553M661.5 433V551M662.5 416V557M663.5 433V551M664.5 431V549M665.5 434V559M666.5 434V554M667.5 431V554M668.5 421V542M669.5 418V552M670.5 430V557M671.5 418V559M672.5 431V546M673.5 432V557M674.5 428V561M675.5 435V551M676.5 434V552M677.5 430V553M678.5 424V550M679.5 421V552M680.5 427V559M681.5 418V550M682.5 429V554M683.5 432V545M684.5 417V554M685.5 428V552M686.5 435V554M687.5 418V544M688.5 434V552M689.5 431V550M690.5 419V543M691.5 432V549M692.5 417V551M693.5 436V549M694.5 422V558M695.5 432V549M696.5 430V554M697.5 420V551M698.5 442V551M699.5 426V552M700.5 419V557M701.5 418V544M702.5 433V552M703.5 433V560M704.5 445V549M705.5 427V545M706.5 429V559M707.5 427V553M708.5 430V554M709.5 431V554M710.5 429V548M711.5 429V554M712.5 440V553M713.5 432V551M714.5 418V551M715.5 426V551M716.5 442V552M717.5 427V553M718.5 435V550M719.5 439V553M720.5 416V549M721.5 431V546M722.5 424V558M723.5 435V552M724.5 426V552M725.5 433V550M726.5 428V553M727.5 432V552M728.5 416V548M729.5 417V550M730.5 433V552M731.5 434V552M732.5 433V559M733.5 445V553M734.5 422V549M735.5 417V557M736.5 427V560M737.5 430V550M738.5 437V554M739.5 426V556M740.5 434V552M741.5 432V560M742.5 420V559M743.5 433V557M744.5 434V559M745.5 428V554M746.5 416V556M747.5 417V554M748.5 446V551M749.5 444V559M750.5 424V553M751.5 428V560M752.5 443V551M753.5 418V548M754.5 427V554M755.5 421V554M756.5 434V545M757.5 433V549M758.5 420V553M759.5 432V544M760.5 433V544M761.5 418V551M762.5 433V559M763.5 436V553M764.5 418V553M765.5 432V550M766.5 431V557M767.5 431V553M768.5 419V550M769.5 415V543M770.5 423V557M771.5 435V553M772.5 433V560M773.5 432V557M774.5 422V558M775.5 432V552M776.5 428V548M777.5 432V552M778.5 432V556M779.5 446V549M780.5 430V552M781.5 422V553M782.5 440V543M783.5 427V556M784.5 434V553M785.5 433V549M786.5 427V551M787.5 444V554M788.5 442V552M789.5 421V556M790.5 431V549M791.5 433V551M792.5 443V550M793.5 421V546M794.5 427V557M795.5 433V553M796.5 453V537M797.5 453V533M798.5 463V536M799.5 463V532M800.5 482V511M801.5 483V510M802.5 485V508M803.5 484V510M804.5 482V510M805.5 482V508M806.5 485V509M807.5 485V510M808.5 482V511M809.5 485V510M810.5 483V510M811.5 484V509M812.5 482V511M813.5 483V510M814.5 485V509M815.5 484V509M816.5 484V510M817.5 483V509M818.5 482V508M819.5 482V510M820.5 474V529M821.5 462V524M822.5 458V534M823.5 476V527M824.5 474V530M825.5 478V523M826.5 470V525M827.5 486V517M828.5 476V528M829.5 457V536M830.5 472V534M831.5 470V524M832.5 474V537M833.5 473V540M834.5 463V539M835.5 488V540M836.5 463V537M837.5 470V513M838.5 475V512M839.5 476V526M840.5 474V529M841.5 474V523M842.5 477V533M843.5 466V528M844.5 468V513M845.5 476V524M846.5 468V534M847.5 468V530M848.5 457V525M849.5 475V526M850.5 470V529M851.5 472V528M852.5 468V525M853.5 468V538M854.5 473V535M855.5 467V513M856.5 468V538M857.5 469V538M858.5 472V528M859.5 457V534M860.5 467V539M861.5 458V523M862.5 471V523M863.5 477V535M864.5 467V537M865.5 472V511M866.5 459V528M867.5 468V536M868.5 475V538M869.5 458V534M870.5 489V507M871.5 488V507M872.5 488V506M873.5 487V507M874.5 488V505M875.5 489V507M876.5 487V507M877.5 490V507M878.5 489V507M879.5 489V505M880.5 434V555M881.5 434V554M882.5 426V553M883.5 432V555M884.5 437V555M885.5 430V553M886.5 431V562M887.5 439V558M888.5 435V550M889.5 434V549M890.5 423V563M891.5 435V554M892.5 435V554M893.5 433V553M894.5 430V552M895.5 431V551M896.5 434V552M897.5 445V560M898.5 432V552M899.5 437V552M900.5 422V546M901.5 434V561M902.5 435V552M903.5 422V558M904.5 423V555M905.5 431V551M906.5 425V559M907.5 421V546M908.5 434V560M909.5 424V553M910.5 431V548M911.5 422V552M912.5 431V548M913.5 426V559M914.5 443V558M915.5 421V555M916.5 427V550M917.5 433V555M918.5 458V535M919.5 457V534M920.5 461V539M921.5 458V535M922.5 458V538M923.5 457V533M924.5 456V535M925.5 456V535M926.5 456V536M927.5 457V539M928.5 453V536M929.5 456V537M930.5 435V554M931.5 431V554M932.5 432V553M933.5 437V552M934.5 423V553M935.5 428V557M936.5 436V553M937.5 431V552M938.5 424V554M939.5 423V552M940.5 423V553M941.5 437V552M942.5 422V558M943.5 436V551M944.5 432V545M945.5 430V557M946.5 432V551M947.5 433V554M948.5 436V554M949.5 432V547M950.5 431V554M951.5 432V553M952.5 434V555M953.5 436V550M954.5 428V553M955.5 436V554M956.5 425V560M957.5 436V557M958.5 436V558M959.5 423V553M960.5 437V552M961.5 430V560M962.5 433V554M963.5 437V552M964.5 434V554M965.5 425V553M966.5 422V547M967.5 436V555M968.5 434V552M969.5 435V546M970.5 437V560M971.5 436V560M972.5 422V554M973.5 432V558M974.5 428V555M975.5 422V557M976.5 426V559M977.5 491V505M978.5 489V506M979.5 490V505M980.5 490V506M981.5 490V505M982.5 445V567M983.5 431V561M984.5 434V556M985.5 432V552M986.5 436V552M987.5 425V551M988.5 435V552M989.5 431V558M990.5 423V553M991.5 420V557M992.5 437V558M993.5 437V558M994.5 433V551M995.5 427V555M996.5 420V557M997.5 449V556M998.5 432V553M999.5 438V558M1000.5 419V557M1001.5 427V565M1002.5 434V554M1003.5 432V554M1004.5 436V561M1005.5 433V554M1006.5 435V555M1007.5 443V557M1008.5 431V552M1009.5 434V553M1010.5 445V554M1011.5 436V567M1012.5 436V555M1013.5 422V544M1014.5 438V555M1015.5 431V561M1016.5 446V556M1017.5 447V556M1018.5 448V547M1019.5 426V555M1020.5 435V547M1021.5 422V553M1022.5 437V546M1023.5 447V553M1024.5 430V565M1025.5 419V558M1026.5 435V551M1027.5 422V553M1028.5 427V554M1029.5 448V557M1030.5 432V566M1031.5 433V554M1032.5 431V567M1033.5 438V558M1034.5 435V562M1035.5 435V556M1036.5 420V554M1037.5 422V557M1038.5 436V556M1039.5 439V558M1040.5 430V565M1041.5 433V556M1042.5 425V554M1043.5 430V555M1044.5 422V556M1045.5 447V558M1046.5 451V566M1047.5 425V558M1048.5 436V553M1049.5 426V541M1050.5 419V557M1051.5 422V556M1052.5 440V554M1053.5 430V543M1054.5 432V553M1055.5 430V564M1056.5 431V552M1057.5 433V551M1058.5 436V565M1059.5 433V561M1060.5 434V565M1061.5 423V553M1062.5 432V565M1063.5 421V564M1064.5 449V566M1065.5 434V562M1066.5 444V566M1067.5 424V561M1068.5 445V552M1069.5 438V551M1070.5 451V563M1071.5 427V555M1072.5 434V564M1073.5 427V557M1074.5 418V559M1075.5 446V549M1076.5 452V540M1077.5 446V550M1078.5 446V551M1079.5 446V540M1080.5 447V549M1081.5 445V549M1082.5 452V540M1083.5 446V551M1084.5 445V549M1085.5 445V539M1086.5 447V549M1087.5 445V550M1088.5 451V540M1089.5 446V551M1090.5 446V550M1091.5 451V540M1092.5 446V549M1093.5 446V549M1094.5 452V538M1095.5 445V551M1096.5 446V548M1097.5 451V539M1098.5 446V549M1099.5 446V551M1100.5 451V539M1101.5 445V549M1102.5 446V551M1103.5 451V539M1104.5 445V549M1105.5 445V550M1106.5 451V538M1107.5 446V551M1108.5 447V550M1109.5 452V549M1110.5 446V550M1111.5 445V550M1112.5 446V538M1113.5 446V548M1114.5 446V550M1115.5 451V550M1116.5 447V550M1117.5 446V549M1118.5 452V539M1119.5 445V548M1120.5 445V551M1121.5 445V540M1122.5 446V551M1123.5 445V550M1124.5 451V539M1125.5 445V551M1126.5 446V551M1127.5 452V568M1128.5 445V550M1129.5 446V549M1130.5 451V550M1131.5 446V549M1132.5 445V550M1133.5 452V538M1134.5 445V548M1135.5 446V550M1136.5 451V540M1137.5 446V548M1138.5 445V548M1139.5 451V538M1140.5 445V549M1141.5 446V548M1142.5 451V540M1143.5 446V550M1144.5 445V548M1145.5 451V540M1146.5 445V550M1147.5 446V548M1148.5 492V506M1149.5 494V505M1150.5 493V505M1151.5 460V529M1152.5 459V538M1153.5 460V537M1154.5 471V528M1155.5 458V538M1156.5 458V539M1157.5 470V528M1158.5 457V538M1159.5 458V538M1160.5 469V529M1161.5 457V540M1162.5 460V538M1163.5 458V539M1164.5 460V538M1165.5 459V540M1166.5 471V528M1167.5 458V538M1168.5 458V538M1169.5 471V528M1170.5 460V539M1171.5 457V538M1172.5 470V530M1173.5 458V539M1174.5 459V538M1175.5 469V529M1176.5 460V540M1177.5 459V538M1178.5 471V530M1179.5 460V540M1180.5 459V538M1181.5 471V529M1182.5 459V539M1183.5 460V539M1184.5 470V528M1185.5 460V539M1186.5 459V540M1187.5 460V529M1188.5 458V539M1189.5 460V537M1190.5 471V529M1191.5 457V538M1192.5 459V539M1193.5 458V529M1194.5 460V538M1195.5 460V538M1196.5 469V529M1197.5 459V538M1198.5 439V548M1199.5 451V549M1200.5 448V553M1201.5 440V554M1202.5 447V549M1203.5 445V545M1204.5 449V544M1205.5 439V549M1206.5 441V544M1207.5 447V552M1208.5 449V549M1209.5 441V550M1210.5 451V547M1211.5 442V545M1212.5 450V550M1213.5 448V552M1214.5 438V549M1215.5 449V548M1216.5 446V551M1217.5 451V550M1218.5 441V550M1219.5 439V554M1220.5 456V552M1221.5 445V548M1222.5 446V544M1223.5 445V552M1224.5 447V550M1225.5 442V549M1226.5 445V552M1227.5 442V550M1228.5 440V550M1229.5 448V552M1230.5 437V552M1231.5 442V549M1232.5 446V554M1233.5 445V548M1234.5 439V548M1235.5 445V547M1236.5 453V545M1237.5 448V553M1238.5 440V554M1239.5 445V549M1240.5 448V549M1241.5 445V550M1242.5 437V549M1243.5 441V548M1244.5 441V555M1245.5 439V551M1246.5 446V550M1247.5 448V544M1248.5 449V549M1249.5 448V550M1250.5 443V549M1251.5 440V552M1252.5 451V553M1253.5 446V549M1254.5 448V549M1255.5 438V553M1256.5 448V547M1257.5 451V549M1258.5 441V548M1259.5 453V552M1260.5 441V553M1261.5 453V549M1262.5 441V553M1263.5 443V548M1264.5 442V555M1265.5 454V553M1266.5 449V545M1267.5 443V553M1268.5 449V549M1269.5 443V548M1270.5 447V545M1271.5 447V549M1272.5 440V548M1273.5 448V549M1274.5 449V545M1275.5 451V554M1276.5 447V544M1277.5 458V554M1278.5 439V544M1279.5 447V548M1280.5 450V554M1281.5 438V554M1282.5 451V549M1283.5 451V550M1284.5 450V547M1285.5 441V548M1286.5 437V552M1287.5 449V550M1288.5 447V550M1289.5 456V550M1290.5 439V546M1291.5 450V550M1292.5 442V552M1293.5 437V549M1294.5 447V545M1295.5 445V550M1296.5 448V547M1297.5 447V549M1298.5 440V549M1299.5 443V548M1300.5 446V554M1301.5 448V550M1302.5 459V547M1303.5 465V551M1304.5 462V550M1305.5 463V556M1306.5 463V552M1307.5 462V551M1308.5 460V551M1309.5 462V550M1310.5 440V562M1311.5 443V559M1312.5 447V552M1313.5 448V553M1314.5 445V555M1315.5 447V555M1316.5 457V551M1317.5 447V562M1318.5 445V552M1319.5 443V556M1320.5 448V562M1321.5 449V555M1322.5 446V561M1323.5 447V553M1324.5 440V554M1325.5 447V556M1326.5 439V555M1327.5 442V554M1328.5 446V552M1329.5 450V556M1330.5 447V563M1331.5 446V551M1332.5 448V552M1333.5 448V556M1334.5 442V552M1335.5 443V556M1336.5 448V553M1337.5 449V561M1338.5 450V562M1339.5 446V554M1340.5 439V555M1341.5 437V544M1342.5 450V555M1343.5 451V563M1344.5 451V555M1345.5 452V552M1346.5 448V559M1347.5 447V549M1348.5 439V554M1349.5 446V553M1350.5 447V554M1351.5 450V553M1352.5 451V554M1353.5 449V560M1354.5 450V551M1355.5 481V556M1356.5 484V557M1357.5 481V553M1358.5 483V556M1359.5 438V558M1360.5 440V553M1361.5 448V557M1362.5 441V557M1363.5 449V552M1364.5 447V554M1365.5 446V559M1366.5 445V552M1367.5 449V552M1368.5 450V559M1369.5 439V553M1370.5 441V554M1371.5 442V557M1372.5 447V555M1373.5 440V554M1374.5 446V557M1375.5 450V555M1376.5 451V548M1377.5 438V555M1378.5 438V551M1379.5 438V547M1380.5 448V553M1381.5 442V560M1382.5 452V550M1383.5 449V555M1384.5 446V554M1385.5 445V554M1386.5 438V551M1387.5 446V554M1388.5 447V555M1389.5 443V551M1390.5 441V560M1391.5 442V553M1392.5 445V560M1393.5 441V557M1394.5 438V552M1395.5 448V557M1396.5 450V552M1397.5 447V560M1398.5 447V559M1399.5 446V559M1400.5 456V552M1401.5 446V560M1402.5 450V555M1403.5 448V555M1404.5 454V552M1405.5 445V554M1406.5 446V554M1407.5 437V557M1408.5 439V555M1409.5 442V557M1410.5 448V552M1411.5 446V558M1412.5 452V554M1413.5 449V551M1414.5 440V556M1415.5 445V555M1416.5 446V554M1417.5 448V556M1418.5 445V553M1419.5 446V558M1420.5 438V551M1421.5 446V560M1422.5 454V551M1423.5 446V556M1424.5 445V553M1425.5 449V552M1426.5 447V553M1427.5 447V554M1428.5 450V552M1429.5 441V552M1430.5 452V549M1431.5 438V551M1432.5 445V538M1433.5 452V539M1434.5 445V540M1435.5 446V538M1436.5 438V538M1437.5 447V538M1438.5 442V539M1439.5 448V539M1440.5 450V538M1441.5 439V538M1442.5 449V536M1443.5 445V539M1444.5 446V535M1445.5 440V538M1446.5 458V538M1447.5 440V537M1448.5 450V539M1449.5 450V537M1450.5 462V563M1451.5 457V565M1452.5 455V556M1453.5 450V550M1454.5 457V562M1455.5 456V555M1456.5 457V565M1457.5 460V553M1458.5 451V575M1459.5 456V548M1460.5 455V556M1461.5 453V545M1462.5 457V549M1463.5 453V550M1464.5 458V554M1465.5 456V550M1466.5 455V555M1467.5 458V548M1468.5 456V549M1469.5 458V549M1470.5 457V560M1471.5 456V552M1472.5 456V556M1473.5 460V553M1474.5 452V561M1475.5 459V554M1476.5 453V554M1477.5 450V546M1478.5 442V552M1479.5 443V552M1480.5 455V552M1481.5 443V553M1482.5 452V552M1483.5 449V552M1484.5 453V551M1485.5 452V555M1486.5 440V550M1487.5 449V559M1488.5 452V558M1489.5 453V552M1490.5 454V553M1491.5 451V551M1492.5 448V554M1493.5 453V558M1494.5 459V552M1495.5 442V560M1496.5 454V557M1497.5 444V553M1498.5 439V555M1499.5 441V553M1500.5 453V552M1501.5 448V558M1502.5 453V553M1503.5 461V553M1504.5 449V554M1505.5 450V552M1506.5 442V560M1507.5 441V557M1508.5 444V559M1509.5 451V561M1510.5 459V547M1511.5 446V561M1512.5 440V555M1513.5 453V551M1514.5 453V553M1515.5 445V558M1516.5 455V547M1517.5 442V550M1518.5 444V555M1519.5 454V555M1520.5 454V554M1521.5 453V553M1522.5 454V555M1523.5 453V558M1524.5 451V559M1525.5 445V554M1526.5 453V557M1527.5 450V558M1528.5 454V553M1529.5 451V559M1530.5 454V555M1531.5 451V554M1532.5 453V558M1533.5 442V554M1534.5 440V553M1535.5 450V561M1536.5 443V561M1537.5 442V561M1538.5 462V558M1539.5 443V551M1540.5 444V552M1541.5 449V553M1542.5 450V555M1543.5 450V552M1544.5 450V554M1545.5 450V559M1546.5 464V551M1547.5 455V554M1548.5 451V559M1549.5 454V552M1550.5 443V558M1551.5 451V555M1552.5 440V555M1553.5 443V553M1554.5 455V557M1555.5 451V554M1556.5 442V555M1557.5 443V551M1558.5 454V552M1559.5 448V558M1560.5 453V558M1561.5 449V552M1562.5 455V554M1563.5 446V555M1564.5 455V554M1565.5 446V551M1566.5 452V552M1567.5 450V551M1568.5 453V549M1569.5 443V551M1570.5 453V550M1571.5 442V555M1572.5 448V554M1573.5 451V551M1574.5 451V553M1575.5 441V559M1576.5 451V554M1577.5 440V561M1578.5 440V553M1579.5 466V547M1580.5 464V545M1581.5 465V545M1582.5 465V545M1583.5 466V546M1584.5 465V546M1585.5 464V547M1586.5 467V548M1587.5 464V547M1588.5 465V546M1589.5 466V546M1590.5 464V547M1591.5 443V552M1592.5 444V557M1593.5 443V553M1594.5 452V556M1595.5 457V551M1596.5 440V549M1597.5 448V551M1598.5 463V552M1599.5 452V557M1600.5 443V548M1601.5 453V554M1602.5 450V549M1603.5 454V553M1604.5 450V558M1605.5 447V549M1606.5 460V549M1607.5 463V553M1608.5 452V556M1609.5 450V553M1610.5 451V550M1611.5 449V557M1612.5 453V550M1613.5 454V550M1614.5 450V560M1615.5 465V560M1616.5 454V554M1617.5 455V558M1618.5 464V547M1619.5 439V554M1620.5 452V549M1621.5 465V550M1622.5 445V549M1623.5 451V551M1624.5 451V556M1625.5 453V553M1626.5 441V550M1627.5 455V559M1628.5 450V560M1629.5 449V550M1630.5 442V554M1631.5 454V554M1632.5 465V551M1633.5 439V551M1634.5 455V559M1635.5 442V561M1636.5 448V550M1637.5 438V550M1638.5 465V560M1639.5 444V559M1640.5 452V550M1641.5 449V556M1642.5 452V556M1643.5 455V549M1644.5 450V550M1645.5 437V550M1646.5 454V553M1647.5 448V556M1648.5 447V552M1649.5 452V553M1650.5 437V551M1651.5 439V551M1652.5 451V561M1653.5 439V553M1654.5 443V560M1655.5 447V560M1656.5 450V547M1657.5 454V558M1658.5 439V550M1659.5 441V553M1660.5 451V551M1661.5 459V553M1662.5 452V558M1663.5 450V551M1664.5 449V556M1665.5 448V556M1666.5 452V552M1667.5 455V550M1668.5 453V560M1669.5 452V556M1670.5 439V553M1671.5 447V551M1672.5 438V552M1673.5 442V558M1674.5 441V544M1675.5 454V559M1676.5 437V559M1677.5 439V554M1678.5 451V551M1679.5 445V558M1680.5 448V554M1681.5 445V551M1682.5 448V553M1683.5 439V560M1684.5 452V554M1685.5 449V548M1686.5 454V557M1687.5 464V561M1688.5 455V551M1689.5 447V557M1690.5 449V560M1691.5 455V546M1692.5 440V551M1693.5 450V552M1694.5 449V561M1695.5 451V557M1696.5 450V560M1697.5 438V561M1698.5 454V557M1699.5 442V549M1700.5 450V553M1701.5 442V551M1702.5 461V550M1703.5 448V553M1704.5 455V548M1705.5 442V552M1706.5 449V557M1707.5 449V550M1708.5 452V550M1709.5 439V560M1710.5 451V560M1711.5 440V552M1712.5 441V549M1713.5 443V549M1714.5 444V554M1715.5 441V557M1716.5 440V554M1717.5 454V546M1718.5 447V553M1719.5 455V553M1720.5 455V551M1721.5 456V551M1722.5 453V559M1723.5 459V551M1724.5 437V554M1725.5 460V552M1726.5 456V554M1727.5 455V552M1728.5 457V557M1729.5 442V552M1730.5 447V550M1731.5 454V549M1732.5 449V558M1733.5 449V551M1734.5 461V550M1735.5 451V554M1736.5 452V554M1737.5 459V559M1738.5 458V541M1739.5 470V533M1740.5 460V540M1741.5 460V540M1742.5 470V533M1743.5 459V539M1744.5 458V541M1745.5 469V539M1746.5 458V540M1747.5 457V540M1748.5 459V534M1749.5 458V541M1750.5 457V540M1751.5 470V533M1752.5 457V540M1753.5 459V540M1754.5 470V534M1755.5 459V540M1756.5 458V540M1757.5 459V534M1758.5 458V539M1759.5 460V539M1760.5 460V533M1761.5 457V540M1762.5 458V540M1763.5 470V534M1764.5 458V540" stroke="#2edec2" stroke-width="1" shape-rendering="crispEdges"/><path d="M498 284.5H1765M498 498.5H1765" stroke="#3ad6b8" stroke-width="1" opacity="0.8"/><path d="M498 390.5H1765" stroke="#9a9a9a" stroke-width="1"/><path d="M507.5 178V605" stroke="#e85a5a" stroke-width="1"/><path d="M1131.5 178V605" stroke="#d05050" stroke-width="1" stroke-dasharray="2 2"/></svg><svg class="a" style="left:510px;top:180px" width="12" height="12"><rect x="0.5" y="0.5" width="11" height="11" fill="#b4b4b4" stroke="#d0d0d0"/><path d="M1 11L11 1V11Z" fill="#555"/></svg><svg class="a" style="left:1741px;top:180px" width="12" height="12"><rect x="0.5" y="0.5" width="11" height="11" fill="#b4b4b4" stroke="#d0d0d0"/><path d="M1 1L11 11H1Z" fill="#555"/></svg><div class="a" style="left:1765px;top:177px;width:75px;height:429px;background:#2a2a2a;border:1px solid #000;border-left:none;border-bottom:none"></div><div class="a" style="left:1765px;top:390px;width:75px;height:1px;background:#000"></div><div class="t" style="left:1773px;top:179px;color:#a8a8a8">dB</div><div class="t" style="left:1773px;top:202px;color:#a8a8a8">-3</div><div class="t" style="left:1773px;top:224px;color:#a8a8a8">-6</div><div class="t" style="left:1773px;top:239px;color:#a8a8a8">-9</div><div class="t" style="left:1773px;top:258px;color:#a8a8a8">-15</div><div class="t" style="left:1773px;top:277px;color:#a8a8a8">-∞</div><div class="t" style="left:1773px;top:296px;color:#a8a8a8">-15</div><div class="t" style="left:1773px;top:315px;color:#a8a8a8">-9</div><div class="t" style="left:1773px;top:330px;color:#a8a8a8">-6</div><div class="t" style="left:1773px;top:352px;color:#a8a8a8">-3</div><div class="t" style="left:1773px;top:393px;color:#a8a8a8">dB</div><div class="t" style="left:1773px;top:416px;color:#a8a8a8">-3</div><div class="t" style="left:1773px;top:438px;color:#a8a8a8">-6</div><div class="t" style="left:1773px;top:453px;color:#a8a8a8">-9</div><div class="t" style="left:1773px;top:472px;color:#a8a8a8">-15</div><div class="t" style="left:1773px;top:491px;color:#a8a8a8">-∞</div><div class="t" style="left:1773px;top:510px;color:#a8a8a8">-15</div><div class="t" style="left:1773px;top:529px;color:#a8a8a8">-9</div><div class="t" style="left:1773px;top:544px;color:#a8a8a8">-6</div><div class="t" style="left:1773px;top:566px;color:#a8a8a8">-3</div><svg class="a" style="left:0;top:0" width="1920" height="960"><path d="M1766 209.5h4M1766 231.5h4M1766 246.5h4M1766 265.5h4M1766 284.5h4M1766 303.5h4M1766 322.5h4M1766 337.5h4M1766 359.5h4M1766 423.5h4M1766 445.5h4M1766 460.5h4M1766 479.5h4M1766 498.5h4M1766 517.5h4M1766 536.5h4M1766 551.5h4M1766 573.5h4M1766 189.5h2.5M1766 199.5h2.5M1766 218.5h2.5M1766 225.5h2.5M1766 237.5h2.5M1766 241.5h2.5M1766 250.5h2.5M1766 254.5h2.5M1766 257.5h2.5M1766 261.5h2.5M1766 266.5h2.5M1766 270.5h2.5M1766 299.5h2.5M1766 300.5h2.5M1766 306.5h2.5M1766 310.5h2.5M1766 313.5h2.5M1766 317.5h2.5M1766 326.5h2.5M1766 331.5h2.5M1766 344.5h2.5M1766 351.5h2.5M1766 369.5h2.5M1766 379.5h2.5M1766 178.5h4M1766 389.5h4M1766 403.5h2.5M1766 413.5h2.5M1766 432.5h2.5M1766 439.5h2.5M1766 451.5h2.5M1766 455.5h2.5M1766 464.5h2.5M1766 468.5h2.5M1766 471.5h2.5M1766 475.5h2.5M1766 480.5h2.5M1766 484.5h2.5M1766 513.5h2.5M1766 514.5h2.5M1766 520.5h2.5M1766 524.5h2.5M1766 527.5h2.5M1766 531.5h2.5M1766 540.5h2.5M1766 545.5h2.5M1766 558.5h2.5M1766 565.5h2.5M1766 583.5h2.5M1766 593.5h2.5M1766 392.5h4M1766 603.5h4" stroke="#b0b0b0" stroke-width="1"/></svg><div class="a" style="left:1816px;top:275px;width:20px;height:20px;background:#1c1c1c;border:1px solid #2a2a2a;border-radius:3px"></div><div class="t blue" style="left:1822px;top:278px;font-size:10px;font-weight:bold;letter-spacing:0">L</div><div class="a" style="left:1816px;top:489px;width:20px;height:20px;background:#1c1c1c;border:1px solid #2a2a2a;border-radius:3px"></div><div class="t blue" style="left:1821px;top:492px;font-size:10px;font-weight:bold;letter-spacing:0">R</div><div class="a" style="left:498px;top:606px;width:1342px;height:10px;background:#383838"></div><div class="a" style="left:1157px;top:609px;width:23px;height:3px;background:repeating-linear-gradient(90deg,#888 0 1px,transparent 1px 2px)"></div><svg class="a" style="left:1814px;top:609px" width="8" height="5"><path d="M0 0H8L4 4Z" fill="#909090"/></svg><svg class="a" style="left:0;top:0" width="1920" height="960" shape-rendering="crispEdges"><defs><linearGradient id="gah0" gradientUnits="userSpaceOnUse" x1="0" y1="783" x2="0" y2="616"><stop offset="0.00" stop-color="#1d092b"/><stop offset="0.03" stop-color="#1c092a"/><stop offset="0.08" stop-color="#1a0927"/><stop offset="0.15" stop-color="#15081f"/><stop offset="0.25" stop-color="#0c0511"/><stop offset="0.35" stop-color="#050208"/><stop offset="0.45" stop-color="#050208"/><stop offset="0.55" stop-color="#050208"/><stop offset="0.65" stop-color="#050208"/><stop offset="0.75" stop-color="#050208"/><stop offset="0.87" stop-color="#050208"/><stop offset="1.00" stop-color="#050208"/></linearGradient><linearGradient id="gah1" gradientUnits="userSpaceOnUse" x1="0" y1="783" x2="0" y2="616"><stop offset="0.00" stop-color="#270b38"/><stop offset="0.03" stop-color="#260b37"/><stop offset="0.08" stop-color="#220a33"/><stop offset="0.15" stop-color="#1c092a"/><stop offset="0.25" stop-color="#110719"/><stop offset="0.35" stop-color="#08030b"/><stop offset="0.45" stop-color="#050208"/><stop offset="0.55" stop-color="#050208"/><stop offset="0.65" stop-color="#050208"/><stop offset="0.75" stop-color="#050208"/><stop offset="0.87" stop-color="#050208"/><stop offset="1.00" stop-color="#050208"/></linearGradient><linearGradient id="gah2" gradientUnits="userSpaceOnUse" x1="0" y1="783" x2="0" y2="616"><stop offset="0.00" stop-color="#320e46"/><stop offset="0.03" stop-color="#320e45"/><stop offset="0.08" stop-color="#2e0d41"/><stop offset="0.15" stop-color="#260b37"/><stop offset="0.25" stop-color="#190825"/><stop offset="0.35" stop-color="#0c0511"/><stop offset="0.45" stop-color="#050208"/><stop offset="0.55" stop-color="#050208"/><stop offset="0.65" stop-color="#050208"/><stop offset="0.75" stop-color="#050208"/><stop offset="0.87" stop-color="#050208"/><stop offset="1.00" stop-color="#050208"/></linearGradient><linearGradient id="gah3" gradientUnits="userSpaceOnUse" x1="0" y1="783" x2="0" y2="616"><stop offset="0.00" stop-color="#3e1054"/><stop offset="0.03" stop-color="#3d1053"/><stop offset="0.08" stop-color="#3a0f4f"/><stop offset="0.15" stop-color="#310d45"/><stop offset="0.25" stop-color="#210a31"/><stop offset="0.35" stop-color="#12071b"/><stop offset="0.45" stop-color="#06030a"/><stop offset="0.55" stop-color="#050208"/><stop offset="0.65" stop-color="#050208"/><stop offset="0.75" stop-color="#050208"/><stop offset="0.87" stop-color="#050208"/><stop offset="1.00" stop-color="#050208"/></linearGradient><linearGradient id="gah4" gradientUnits="userSpaceOnUse" x1="0" y1="783" x2="0" y2="616"><stop offset="0.00" stop-color="#50115a"/><stop offset="0.03" stop-color="#4f115a"/><stop offset="0.08" stop-color="#491058"/><stop offset="0.15" stop-color="#3d1053"/><stop offset="0.25" stop-color="#2c0c3f"/><stop offset="0.35" stop-color="#1a0926"/><stop offset="0.45" stop-color="#0b0510"/><stop offset="0.55" stop-color="#050208"/><stop offset="0.65" stop-color="#050208"/><stop offset="0.75" stop-color="#050208"/><stop offset="0.87" stop-color="#050208"/><stop offset="1.00" stop-color="#050208"/></linearGradient><linearGradient id="gah5" gradientUnits="userSpaceOnUse" x1="0" y1="783" x2="0" y2="616"><stop offset="0.00" stop-color="#631260"/><stop offset="0.03" stop-color="#621160"/><stop offset="0.08" stop-color="#5c115e"/><stop offset="0.15" stop-color="#4f115a"/><stop offset="0.25" stop-color="#380f4d"/><stop offset="0.35" stop-color="#220a32"/><stop offset="0.45" stop-color="#100718"/><stop offset="0.55" stop-color="#050208"/><stop offset="0.65" stop-color="#050208"/><stop offset="0.75" stop-color="#050208"/><stop offset="0.87" stop-color="#050208"/><stop offset="1.00" stop-color="#050208"/></linearGradient><linearGradient id="gah6" gradientUnits="userSpaceOnUse" x1="0" y1="783" x2="0" y2="616"><stop offset="0.00" stop-color="#781261"/><stop offset="0.03" stop-color="#761261"/><stop offset="0.08" stop-color="#6e1264"/><stop offset="0.15" stop-color="#611160"/><stop offset="0.25" stop-color="#471057"/><stop offset="0.35" stop-color="#2e0d40"/><stop offset="0.45" stop-color="#180823"/><stop offset="0.55" stop-color="#08030c"/><stop offset="0.65" stop-color="#050208"/><stop offset="0.75" stop-color="#050208"/><stop offset="0.87" stop-color="#050208"/><stop offset="1.00" stop-color="#050208"/></linearGradient><linearGradient id="gah7" gradientUnits="userSpaceOnUse" x1="0" y1="783" x2="0" y2="616"><stop offset="0.00" stop-color="#911258"/><stop offset="0.03" stop-color="#8f1259"/><stop offset="0.08" stop-color="#87125c"/><stop offset="0.15" stop-color="#761261"/><stop offset="0.25" stop-color="#59115d"/><stop offset="0.35" stop-color="#390f4e"/><stop offset="0.45" stop-color="#1f0a2f"/><stop offset="0.55" stop-color="#0d0512"/><stop offset="0.65" stop-color="#050208"/><stop offset="0.75" stop-color="#050208"/><stop offset="0.87" stop-color="#050208"/><stop offset="1.00" stop-color="#050208"/></linearGradient><linearGradient id="gah8" gradientUnits="userSpaceOnUse" x1="0" y1="783" x2="0" y2="616"><stop offset="0.00" stop-color="#aa1250"/><stop offset="0.03" stop-color="#a81251"/><stop offset="0.08" stop-color="#a01253"/><stop offset="0.15" stop-color="#8f1259"/><stop offset="0.25" stop-color="#6b1263"/><stop offset="0.35" stop-color="#491058"/><stop offset="0.45" stop-color="#2a0c3d"/><stop offset="0.55" stop-color="#13071c"/><stop offset="0.65" stop-color="#050208"/><stop offset="0.75" stop-color="#050208"/><stop offset="0.87" stop-color="#050208"/><stop offset="1.00" stop-color="#050208"/></linearGradient><linearGradient id="gah9" gradientUnits="userSpaceOnUse" x1="0" y1="783" x2="0" y2="616"><stop offset="0.00" stop-color="#c1133c"/><stop offset="0.03" stop-color="#bf133e"/><stop offset="0.08" stop-color="#b81344"/><stop offset="0.15" stop-color="#a81251"/><stop offset="0.25" stop-color="#84125d"/><stop offset="0.35" stop-color="#5b115e"/><stop offset="0.45" stop-color="#360e4a"/><stop offset="0.55" stop-color="#1b0928"/><stop offset="0.65" stop-color="#08030c"/><stop offset="0.75" stop-color="#050208"/><stop offset="0.87" stop-color="#050208"/><stop offset="1.00" stop-color="#050208"/></linearGradient><linearGradient id="gah10" gradientUnits="userSpaceOnUse" x1="0" y1="783" x2="0" y2="616"><stop offset="0.00" stop-color="#d71428"/><stop offset="0.03" stop-color="#d5142a"/><stop offset="0.08" stop-color="#ce1430"/><stop offset="0.15" stop-color="#be133e"/><stop offset="0.25" stop-color="#9d1254"/><stop offset="0.35" stop-color="#6e1264"/><stop offset="0.45" stop-color="#441056"/><stop offset="0.55" stop-color="#230b34"/><stop offset="0.65" stop-color="#0d0512"/><stop offset="0.75" stop-color="#050208"/><stop offset="0.87" stop-color="#050208"/><stop offset="1.00" stop-color="#050208"/></linearGradient><linearGradient id="gah11" gradientUnits="userSpaceOnUse" x1="0" y1="783" x2="0" y2="616"><stop offset="0.00" stop-color="#e2231d"/><stop offset="0.03" stop-color="#e2221e"/><stop offset="0.08" stop-color="#de1d21"/><stop offset="0.15" stop-color="#d5142a"/><stop offset="0.25" stop-color="#b41247"/><stop offset="0.35" stop-color="#86125c"/><stop offset="0.45" stop-color="#56115c"/><stop offset="0.55" stop-color="#2f0d42"/><stop offset="0.65" stop-color="#13071c"/><stop offset="0.75" stop-color="#050208"/><stop offset="0.87" stop-color="#050208"/><stop offset="1.00" stop-color="#050208"/></linearGradient><linearGradient id="gah12" gradientUnits="userSpaceOnUse" x1="0" y1="783" x2="0" y2="616"><stop offset="0.00" stop-color="#ee3212"/><stop offset="0.03" stop-color="#ed3113"/><stop offset="0.08" stop-color="#ea2c16"/><stop offset="0.15" stop-color="#e1221e"/><stop offset="0.25" stop-color="#cb1333"/><stop offset="0.35" stop-color="#9f1254"/><stop offset="0.45" stop-color="#691262"/><stop offset="0.55" stop-color="#3a0f50"/><stop offset="0.65" stop-color="#1b0928"/><stop offset="0.75" stop-color="#07030b"/><stop offset="0.87" stop-color="#050208"/><stop offset="1.00" stop-color="#050208"/></linearGradient><linearGradient id="gah13" gradientUnits="userSpaceOnUse" x1="0" y1="783" x2="0" y2="616"><stop offset="0.00" stop-color="#f55a18"/><stop offset="0.03" stop-color="#f45718"/><stop offset="0.08" stop-color="#f24b16"/><stop offset="0.15" stop-color="#ed3113"/><stop offset="0.25" stop-color="#dc1b23"/><stop offset="0.35" stop-color="#b71344"/><stop offset="0.45" stop-color="#80125e"/><stop offset="0.55" stop-color="#4b1158"/><stop offset="0.65" stop-color="#240b34"/><stop offset="0.75" stop-color="#0c0511"/><stop offset="0.87" stop-color="#050208"/><stop offset="1.00" stop-color="#050208"/></linearGradient><linearGradient id="gah14" gradientUnits="userSpaceOnUse" x1="0" y1="783" x2="0" y2="616"><stop offset="0.00" stop-color="#fc821e"/><stop offset="0.03" stop-color="#fb7f1e"/><stop offset="0.08" stop-color="#f9731c"/><stop offset="0.15" stop-color="#f45617"/><stop offset="0.25" stop-color="#e82a18"/><stop offset="0.35" stop-color="#cd1430"/><stop offset="0.45" stop-color="#991256"/><stop offset="0.55" stop-color="#5d115e"/><stop offset="0.65" stop-color="#2f0d42"/><stop offset="0.75" stop-color="#110719"/><stop offset="0.87" stop-color="#050208"/><stop offset="1.00" stop-color="#050208"/></linearGradient><linearGradient id="gah15" gradientUnits="userSpaceOnUse" x1="0" y1="783" x2="0" y2="616"><stop offset="0.00" stop-color="#feaf41"/><stop offset="0.03" stop-color="#fdac3e"/><stop offset="0.08" stop-color="#fd9e33"/><stop offset="0.15" stop-color="#fb7e1d"/><stop offset="0.25" stop-color="#f14415"/><stop offset="0.35" stop-color="#de1d22"/><stop offset="0.45" stop-color="#b1124a"/><stop offset="0.55" stop-color="#701263"/><stop offset="0.65" stop-color="#3b0f50"/><stop offset="0.75" stop-color="#190825"/><stop offset="0.87" stop-color="#050208"/><stop offset="1.00" stop-color="#050208"/></linearGradient><linearGradient id="gah16" gradientUnits="userSpaceOnUse" x1="0" y1="783" x2="0" y2="616"><stop offset="0.00" stop-color="#ffdc64"/><stop offset="0.03" stop-color="#ffd961"/><stop offset="0.08" stop-color="#fecb56"/><stop offset="0.15" stop-color="#fdab3e"/><stop offset="0.25" stop-color="#f86c1b"/><stop offset="0.35" stop-color="#e92c17"/><stop offset="0.45" stop-color="#c71336"/><stop offset="0.55" stop-color="#89125b"/><stop offset="0.65" stop-color="#4b1158"/><stop offset="0.75" stop-color="#210a31"/><stop offset="0.87" stop-color="#060209"/><stop offset="1.00" stop-color="#050208"/></linearGradient><linearGradient id="gah17" gradientUnits="userSpaceOnUse" x1="0" y1="783" x2="0" y2="616"><stop offset="0.00" stop-color="#ffdc64"/><stop offset="0.03" stop-color="#ffdc64"/><stop offset="0.08" stop-color="#ffdc64"/><stop offset="0.15" stop-color="#ffd861"/><stop offset="0.25" stop-color="#fd972e"/><stop offset="0.35" stop-color="#f24915"/><stop offset="0.45" stop-color="#db1925"/><stop offset="0.55" stop-color="#a21253"/><stop offset="0.65" stop-color="#5e115f"/><stop offset="0.75" stop-color="#2c0c3f"/><stop offset="0.87" stop-color="#0a040f"/><stop offset="1.00" stop-color="#050208"/></linearGradient><linearGradient id="gas0" gradientUnits="userSpaceOnUse" x1="0" y1="783" x2="0" y2="616"><stop offset="0.00" stop-color="#1d092b"/><stop offset="0.03" stop-color="#1b0928"/><stop offset="0.08" stop-color="#170822"/><stop offset="0.15" stop-color="#12071a"/><stop offset="0.25" stop-color="#0c0511"/><stop offset="0.35" stop-color="#07030b"/><stop offset="0.45" stop-color="#050208"/><stop offset="0.55" stop-color="#050208"/><stop offset="0.65" stop-color="#050208"/><stop offset="0.75" stop-color="#050208"/><stop offset="0.87" stop-color="#050208"/><stop offset="1.00" stop-color="#050208"/></linearGradient><linearGradient id="gas1" gradientUnits="userSpaceOnUse" x1="0" y1="783" x2="0" y2="616"><stop offset="0.00" stop-color="#2c0c3f"/><stop offset="0.03" stop-color="#290c3a"/><stop offset="0.08" stop-color="#230b34"/><stop offset="0.15" stop-color="#1d092b"/><stop offset="0.25" stop-color="#15081f"/><stop offset="0.35" stop-color="#0e0614"/><stop offset="0.45" stop-color="#09040e"/><stop offset="0.55" stop-color="#050208"/><stop offset="0.65" stop-color="#050208"/><stop offset="0.75" stop-color="#050208"/><stop offset="0.87" stop-color="#050208"/><stop offset="1.00" stop-color="#050208"/></linearGradient><linearGradient id="gas2" gradientUnits="userSpaceOnUse" x1="0" y1="783" x2="0" y2="616"><stop offset="0.00" stop-color="#3d1053"/><stop offset="0.03" stop-color="#390f4f"/><stop offset="0.08" stop-color="#340e48"/><stop offset="0.15" stop-color="#2c0c3e"/><stop offset="0.25" stop-color="#200a30"/><stop offset="0.35" stop-color="#190824"/><stop offset="0.45" stop-color="#110719"/><stop offset="0.55" stop-color="#0b0510"/><stop offset="0.65" stop-color="#07030a"/><stop offset="0.75" stop-color="#050208"/><stop offset="0.87" stop-color="#050208"/><stop offset="1.00" stop-color="#050208"/></linearGradient><linearGradient id="gas3" gradientUnits="userSpaceOnUse" x1="0" y1="783" x2="0" y2="616"><stop offset="0.00" stop-color="#57115c"/><stop offset="0.03" stop-color="#52115b"/><stop offset="0.08" stop-color="#481057"/><stop offset="0.15" stop-color="#3c1052"/><stop offset="0.25" stop-color="#310d44"/><stop offset="0.35" stop-color="#250b36"/><stop offset="0.45" stop-color="#1c092a"/><stop offset="0.55" stop-color="#14071e"/><stop offset="0.65" stop-color="#0d0613"/><stop offset="0.75" stop-color="#09040d"/><stop offset="0.87" stop-color="#050208"/><stop offset="1.00" stop-color="#050208"/></linearGradient><linearGradient id="gas4" gradientUnits="userSpaceOnUse" x1="0" y1="783" x2="0" y2="616"><stop offset="0.00" stop-color="#731262"/><stop offset="0.03" stop-color="#6c1263"/><stop offset="0.08" stop-color="#631260"/><stop offset="0.15" stop-color="#56115c"/><stop offset="0.25" stop-color="#441056"/><stop offset="0.35" stop-color="#360e4b"/><stop offset="0.45" stop-color="#2b0c3d"/><stop offset="0.55" stop-color="#1f0a2f"/><stop offset="0.65" stop-color="#180823"/><stop offset="0.75" stop-color="#100718"/><stop offset="0.87" stop-color="#0a040f"/><stop offset="1.00" stop-color="#050208"/></linearGradient><linearGradient id="gas5" gradientUnits="userSpaceOnUse" x1="0" y1="783" x2="0" y2="616"><stop offset="0.00" stop-color="#981256"/><stop offset="0.03" stop-color="#901259"/><stop offset="0.08" stop-color="#84125d"/><stop offset="0.15" stop-color="#721263"/><stop offset="0.25" stop-color="#5f115f"/><stop offset="0.35" stop-color="#4c1159"/><stop offset="0.45" stop-color="#3b0f51"/><stop offset="0.55" stop-color="#300d43"/><stop offset="0.65" stop-color="#240b35"/><stop offset="0.75" stop-color="#1b0929"/><stop offset="0.87" stop-color="#12071b"/><stop offset="1.00" stop-color="#0b0510"/></linearGradient><linearGradient id="gas6" gradientUnits="userSpaceOnUse" x1="0" y1="783" x2="0" y2="616"><stop offset="0.00" stop-color="#ba1341"/><stop offset="0.03" stop-color="#b41247"/><stop offset="0.08" stop-color="#a81251"/><stop offset="0.15" stop-color="#971256"/><stop offset="0.25" stop-color="#7e125f"/><stop offset="0.35" stop-color="#671262"/><stop offset="0.45" stop-color="#55115c"/><stop offset="0.55" stop-color="#421055"/><stop offset="0.65" stop-color="#350e49"/><stop offset="0.75" stop-color="#2a0c3b"/><stop offset="0.87" stop-color="#1d092c"/><stop offset="1.00" stop-color="#13071c"/></linearGradient><linearGradient id="gas7" gradientUnits="userSpaceOnUse" x1="0" y1="783" x2="0" y2="616"><stop offset="0.00" stop-color="#d91726"/><stop offset="0.03" stop-color="#d4142a"/><stop offset="0.08" stop-color="#c91334"/><stop offset="0.15" stop-color="#b91342"/><stop offset="0.25" stop-color="#a21253"/><stop offset="0.35" stop-color="#89125b"/><stop offset="0.45" stop-color="#701263"/><stop offset="0.55" stop-color="#5d115e"/><stop offset="0.65" stop-color="#4b1158"/><stop offset="0.75" stop-color="#3a0f50"/><stop offset="0.87" stop-color="#2c0c3f"/><stop offset="1.00" stop-color="#1e0a2d"/></linearGradient><linearGradient id="gas8" gradientUnits="userSpaceOnUse" x1="0" y1="783" x2="0" y2="616"><stop offset="0.00" stop-color="#ea2d16"/><stop offset="0.03" stop-color="#e62819"/><stop offset="0.08" stop-color="#e1211f"/><stop offset="0.15" stop-color="#d91626"/><stop offset="0.25" stop-color="#c41339"/><stop offset="0.35" stop-color="#ad124d"/><stop offset="0.45" stop-color="#941257"/><stop offset="0.55" stop-color="#7b1260"/><stop offset="0.65" stop-color="#651261"/><stop offset="0.75" stop-color="#53115b"/><stop offset="0.87" stop-color="#3d1053"/><stop offset="1.00" stop-color="#2e0d41"/></linearGradient><linearGradient id="gas9" gradientUnits="userSpaceOnUse" x1="0" y1="783" x2="0" y2="616"><stop offset="0.00" stop-color="#f65e19"/><stop offset="0.03" stop-color="#f45217"/><stop offset="0.08" stop-color="#f03e14"/><stop offset="0.15" stop-color="#e92c17"/><stop offset="0.25" stop-color="#de1d22"/><stop offset="0.35" stop-color="#ce1430"/><stop offset="0.45" stop-color="#b71344"/><stop offset="0.55" stop-color="#a01253"/><stop offset="0.65" stop-color="#87125c"/><stop offset="0.75" stop-color="#6e1264"/><stop offset="0.87" stop-color="#58115d"/><stop offset="1.00" stop-color="#401055"/></linearGradient><linearGradient id="gas10" gradientUnits="userSpaceOnUse" x1="0" y1="783" x2="0" y2="616"><stop offset="0.00" stop-color="#fd9b31"/><stop offset="0.03" stop-color="#fc8d27"/><stop offset="0.08" stop-color="#fa781c"/><stop offset="0.15" stop-color="#f55c18"/><stop offset="0.25" stop-color="#ee3412"/><stop offset="0.35" stop-color="#e3241d"/><stop offset="0.45" stop-color="#d81527"/><stop offset="0.55" stop-color="#c2133b"/><stop offset="0.65" stop-color="#ab124f"/><stop offset="0.75" stop-color="#921258"/><stop offset="0.87" stop-color="#741262"/><stop offset="1.00" stop-color="#5b115e"/></linearGradient><linearGradient id="gas11" gradientUnits="userSpaceOnUse" x1="0" y1="783" x2="0" y2="616"><stop offset="0.00" stop-color="#ffdc64"/><stop offset="0.03" stop-color="#ffce5a"/><stop offset="0.08" stop-color="#feb848"/><stop offset="0.15" stop-color="#fd9930"/><stop offset="0.25" stop-color="#f86e1b"/><stop offset="0.35" stop-color="#f24615"/><stop offset="0.45" stop-color="#e82a18"/><stop offset="0.55" stop-color="#dd1c22"/><stop offset="0.65" stop-color="#cc1432"/><stop offset="0.75" stop-color="#b51246"/><stop offset="0.87" stop-color="#981256"/><stop offset="1.00" stop-color="#781261"/></linearGradient><linearGradient id="gbh0" gradientUnits="userSpaceOnUse" x1="0" y1="951" x2="0" y2="785"><stop offset="0.00" stop-color="#1d092b"/><stop offset="0.03" stop-color="#1c092a"/><stop offset="0.08" stop-color="#1a0927"/><stop offset="0.15" stop-color="#15081f"/><stop offset="0.25" stop-color="#0c0511"/><stop offset="0.35" stop-color="#050208"/><stop offset="0.45" stop-color="#050208"/><stop offset="0.55" stop-color="#050208"/><stop offset="0.65" stop-color="#050208"/><stop offset="0.75" stop-color="#050208"/><stop offset="0.87" stop-color="#050208"/><stop offset="1.00" stop-color="#050208"/></linearGradient><linearGradient id="gbh1" gradientUnits="userSpaceOnUse" x1="0" y1="951" x2="0" y2="785"><stop offset="0.00" stop-color="#270b38"/><stop offset="0.03" stop-color="#260b37"/><stop offset="0.08" stop-color="#220a33"/><stop offset="0.15" stop-color="#1c092a"/><stop offset="0.25" stop-color="#110719"/><stop offset="0.35" stop-color="#08030b"/><stop offset="0.45" stop-color="#050208"/><stop offset="0.55" stop-color="#050208"/><stop offset="0.65" stop-color="#050208"/><stop offset="0.75" stop-color="#050208"/><stop offset="0.87" stop-color="#050208"/><stop offset="1.00" stop-color="#050208"/></linearGradient><linearGradient id="gbh2" gradientUnits="userSpaceOnUse" x1="0" y1="951" x2="0" y2="785"><stop offset="0.00" stop-color="#320e46"/><stop offset="0.03" stop-color="#320e45"/><stop offset="0.08" stop-color="#2e0d41"/><stop offset="0.15" stop-color="#260b37"/><stop offset="0.25" stop-color="#190825"/><stop offset="0.35" stop-color="#0c0511"/><stop offset="0.45" stop-color="#050208"/><stop offset="0.55" stop-color="#050208"/><stop offset="0.65" stop-color="#050208"/><stop offset="0.75" stop-color="#050208"/><stop offset="0.87" stop-color="#050208"/><stop offset="1.00" stop-color="#050208"/></linearGradient><linearGradient id="gbh3" gradientUnits="userSpaceOnUse" x1="0" y1="951" x2="0" y2="785"><stop offset="0.00" stop-color="#3e1054"/><stop offset="0.03" stop-color="#3d1053"/><stop offset="0.08" stop-color="#3a0f4f"/><stop offset="0.15" stop-color="#310d45"/><stop offset="0.25" stop-color="#210a31"/><stop offset="0.35" stop-color="#12071b"/><stop offset="0.45" stop-color="#06030a"/><stop offset="0.55" stop-color="#050208"/><stop offset="0.65" stop-color="#050208"/><stop offset="0.75" stop-color="#050208"/><stop offset="0.87" stop-color="#050208"/><stop offset="1.00" stop-color="#050208"/></linearGradient><linearGradient id="gbh4" gradientUnits="userSpaceOnUse" x1="0" y1="951" x2="0" y2="785"><stop offset="0.00" stop-color="#50115a"/><stop offset="0.03" stop-color="#4f115a"/><stop offset="0.08" stop-color="#491058"/><stop offset="0.15" stop-color="#3d1053"/><stop offset="0.25" stop-color="#2c0c3f"/><stop offset="0.35" stop-color="#1a0926"/><stop offset="0.45" stop-color="#0b0510"/><stop offset="0.55" stop-color="#050208"/><stop offset="0.65" stop-color="#050208"/><stop offset="0.75" stop-color="#050208"/><stop offset="0.87" stop-color="#050208"/><stop offset="1.00" stop-color="#050208"/></linearGradient><linearGradient id="gbh5" gradientUnits="userSpaceOnUse" x1="0" y1="951" x2="0" y2="785"><stop offset="0.00" stop-color="#631260"/><stop offset="0.03" stop-color="#621160"/><stop offset="0.08" stop-color="#5c115e"/><stop offset="0.15" stop-color="#4f115a"/><stop offset="0.25" stop-color="#380f4d"/><stop offset="0.35" stop-color="#220a32"/><stop offset="0.45" stop-color="#100718"/><stop offset="0.55" stop-color="#050208"/><stop offset="0.65" stop-color="#050208"/><stop offset="0.75" stop-color="#050208"/><stop offset="0.87" stop-color="#050208"/><stop offset="1.00" stop-color="#050208"/></linearGradient><linearGradient id="gbh6" gradientUnits="userSpaceOnUse" x1="0" y1="951" x2="0" y2="785"><stop offset="0.00" stop-color="#781261"/><stop offset="0.03" stop-color="#761261"/><stop offset="0.08" stop-color="#6e1264"/><stop offset="0.15" stop-color="#611160"/><stop offset="0.25" stop-color="#471057"/><stop offset="0.35" stop-color="#2e0d40"/><stop offset="0.45" stop-color="#180823"/><stop offset="0.55" stop-color="#08030c"/><stop offset="0.65" stop-color="#050208"/><stop offset="0.75" stop-color="#050208"/><stop offset="0.87" stop-color="#050208"/><stop offset="1.00" stop-color="#050208"/></linearGradient><linearGradient id="gbh7" gradientUnits="userSpaceOnUse" x1="0" y1="951" x2="0" y2="785"><stop offset="0.00" stop-color="#911258"/><stop offset="0.03" stop-color="#8f1259"/><stop offset="0.08" stop-color="#87125c"/><stop offset="0.15" stop-color="#761261"/><stop offset="0.25" stop-color="#59115d"/><stop offset="0.35" stop-color="#390f4e"/><stop offset="0.45" stop-color="#1f0a2f"/><stop offset="0.55" stop-color="#0d0512"/><stop offset="0.65" stop-color="#050208"/><stop offset="0.75" stop-color="#050208"/><stop offset="0.87" stop-color="#050208"/><stop offset="1.00" stop-color="#050208"/></linearGradient><linearGradient id="gbh8" gradientUnits="userSpaceOnUse" x1="0" y1="951" x2="0" y2="785"><stop offset="0.00" stop-color="#aa1250"/><stop offset="0.03" stop-color="#a81251"/><stop offset="0.08" stop-color="#a01253"/><stop offset="0.15" stop-color="#8f1259"/><stop offset="0.25" stop-color="#6b1263"/><stop offset="0.35" stop-color="#491058"/><stop offset="0.45" stop-color="#2a0c3d"/><stop offset="0.55" stop-color="#13071c"/><stop offset="0.65" stop-color="#050208"/><stop offset="0.75" stop-color="#050208"/><stop offset="0.87" stop-color="#050208"/><stop offset="1.00" stop-color="#050208"/></linearGradient><linearGradient id="gbh9" gradientUnits="userSpaceOnUse" x1="0" y1="951" x2="0" y2="785"><stop offset="0.00" stop-color="#c1133c"/><stop offset="0.03" stop-color="#bf133e"/><stop offset="0.08" stop-color="#b81344"/><stop offset="0.15" stop-color="#a81251"/><stop offset="0.25" stop-color="#84125d"/><stop offset="0.35" stop-color="#5b115e"/><stop offset="0.45" stop-color="#360e4a"/><stop offset="0.55" stop-color="#1b0928"/><stop offset="0.65" stop-color="#08030c"/><stop offset="0.75" stop-color="#050208"/><stop offset="0.87" stop-color="#050208"/><stop offset="1.00" stop-color="#050208"/></linearGradient><linearGradient id="gbh10" gradientUnits="userSpaceOnUse" x1="0" y1="951" x2="0" y2="785"><stop offset="0.00" stop-color="#d71428"/><stop offset="0.03" stop-color="#d5142a"/><stop offset="0.08" stop-color="#ce1430"/><stop offset="0.15" stop-color="#be133e"/><stop offset="0.25" stop-color="#9d1254"/><stop offset="0.35" stop-color="#6e1264"/><stop offset="0.45" stop-color="#441056"/><stop offset="0.55" stop-color="#230b34"/><stop offset="0.65" stop-color="#0d0512"/><stop offset="0.75" stop-color="#050208"/><stop offset="0.87" stop-color="#050208"/><stop offset="1.00" stop-color="#050208"/></linearGradient><linearGradient id="gbh11" gradientUnits="userSpaceOnUse" x1="0" y1="951" x2="0" y2="785"><stop offset="0.00" stop-color="#e2231d"/><stop offset="0.03" stop-color="#e2221e"/><stop offset="0.08" stop-color="#de1d21"/><stop offset="0.15" stop-color="#d5142a"/><stop offset="0.25" stop-color="#b41247"/><stop offset="0.35" stop-color="#86125c"/><stop offset="0.45" stop-color="#56115c"/><stop offset="0.55" stop-color="#2f0d42"/><stop offset="0.65" stop-color="#13071c"/><stop offset="0.75" stop-color="#050208"/><stop offset="0.87" stop-color="#050208"/><stop offset="1.00" stop-color="#050208"/></linearGradient><linearGradient id="gbh12" gradientUnits="userSpaceOnUse" x1="0" y1="951" x2="0" y2="785"><stop offset="0.00" stop-color="#ee3212"/><stop offset="0.03" stop-color="#ed3113"/><stop offset="0.08" stop-color="#ea2c16"/><stop offset="0.15" stop-color="#e1221e"/><stop offset="0.25" stop-color="#cb1333"/><stop offset="0.35" stop-color="#9f1254"/><stop offset="0.45" stop-color="#691262"/><stop offset="0.55" stop-color="#3a0f50"/><stop offset="0.65" stop-color="#1b0928"/><stop offset="0.75" stop-color="#07030b"/><stop offset="0.87" stop-color="#050208"/><stop offset="1.00" stop-color="#050208"/></linearGradient><linearGradient id="gbh13" gradientUnits="userSpaceOnUse" x1="0" y1="951" x2="0" y2="785"><stop offset="0.00" stop-color="#f55a18"/><stop offset="0.03" stop-color="#f45718"/><stop offset="0.08" stop-color="#f24b16"/><stop offset="0.15" stop-color="#ed3113"/><stop offset="0.25" stop-color="#dc1b23"/><stop offset="0.35" stop-color="#b71344"/><stop offset="0.45" stop-color="#80125e"/><stop offset="0.55" stop-color="#4b1158"/><stop offset="0.65" stop-color="#240b34"/><stop offset="0.75" stop-color="#0c0511"/><stop offset="0.87" stop-color="#050208"/><stop offset="1.00" stop-color="#050208"/></linearGradient><linearGradient id="gbh14" gradientUnits="userSpaceOnUse" x1="0" y1="951" x2="0" y2="785"><stop offset="0.00" stop-color="#fc821e"/><stop offset="0.03" stop-color="#fb7f1e"/><stop offset="0.08" stop-color="#f9731c"/><stop offset="0.15" stop-color="#f45617"/><stop offset="0.25" stop-color="#e82a18"/><stop offset="0.35" stop-color="#cd1430"/><stop offset="0.45" stop-color="#991256"/><stop offset="0.55" stop-color="#5d115e"/><stop offset="0.65" stop-color="#2f0d42"/><stop offset="0.75" stop-color="#110719"/><stop offset="0.87" stop-color="#050208"/><stop offset="1.00" stop-color="#050208"/></linearGradient><linearGradient id="gbh15" gradientUnits="userSpaceOnUse" x1="0" y1="951" x2="0" y2="785"><stop offset="0.00" stop-color="#feaf41"/><stop offset="0.03" stop-color="#fdac3e"/><stop offset="0.08" stop-color="#fd9e33"/><stop offset="0.15" stop-color="#fb7e1d"/><stop offset="0.25" stop-color="#f14415"/><stop offset="0.35" stop-color="#de1d22"/><stop offset="0.45" stop-color="#b1124a"/><stop offset="0.55" stop-color="#701263"/><stop offset="0.65" stop-color="#3b0f50"/><stop offset="0.75" stop-color="#190825"/><stop offset="0.87" stop-color="#050208"/><stop offset="1.00" stop-color="#050208"/></linearGradient><linearGradient id="gbh16" gradientUnits="userSpaceOnUse" x1="0" y1="951" x2="0" y2="785"><stop offset="0.00" stop-color="#ffdc64"/><stop offset="0.03" stop-color="#ffd961"/><stop offset="0.08" stop-color="#fecb56"/><stop offset="0.15" stop-color="#fdab3e"/><stop offset="0.25" stop-color="#f86c1b"/><stop offset="0.35" stop-color="#e92c17"/><stop offset="0.45" stop-color="#c71336"/><stop offset="0.55" stop-color="#89125b"/><stop offset="0.65" stop-color="#4b1158"/><stop offset="0.75" stop-color="#210a31"/><stop offset="0.87" stop-color="#060209"/><stop offset="1.00" stop-color="#050208"/></linearGradient><linearGradient id="gbh17" gradientUnits="userSpaceOnUse" x1="0" y1="951" x2="0" y2="785"><stop offset="0.00" stop-color="#ffdc64"/><stop offset="0.03" stop-color="#ffdc64"/><stop offset="0.08" stop-color="#ffdc64"/><stop offset="0.15" stop-color="#ffd861"/><stop offset="0.25" stop-color="#fd972e"/><stop offset="0.35" stop-color="#f24915"/><stop offset="0.45" stop-color="#db1925"/><stop offset="0.55" stop-color="#a21253"/><stop offset="0.65" stop-color="#5e115f"/><stop offset="0.75" stop-color="#2c0c3f"/><stop offset="0.87" stop-color="#0a040f"/><stop offset="1.00" stop-color="#050208"/></linearGradient><linearGradient id="gbs0" gradientUnits="userSpaceOnUse" x1="0" y1="951" x2="0" y2="785"><stop offset="0.00" stop-color="#1d092b"/><stop offset="0.03" stop-color="#1b0928"/><stop offset="0.08" stop-color="#170822"/><stop offset="0.15" stop-color="#12071a"/><stop offset="0.25" stop-color="#0c0511"/><stop offset="0.35" stop-color="#07030b"/><stop offset="0.45" stop-color="#050208"/><stop offset="0.55" stop-color="#050208"/><stop offset="0.65" stop-color="#050208"/><stop offset="0.75" stop-color="#050208"/><stop offset="0.87" stop-color="#050208"/><stop offset="1.00" stop-color="#050208"/></linearGradient><linearGradient id="gbs1" gradientUnits="userSpaceOnUse" x1="0" y1="951" x2="0" y2="785"><stop offset="0.00" stop-color="#2c0c3f"/><stop offset="0.03" stop-color="#290c3a"/><stop offset="0.08" stop-color="#230b34"/><stop offset="0.15" stop-color="#1d092b"/><stop offset="0.25" stop-color="#15081f"/><stop offset="0.35" stop-color="#0e0614"/><stop offset="0.45" stop-color="#09040e"/><stop offset="0.55" stop-color="#050208"/><stop offset="0.65" stop-color="#050208"/><stop offset="0.75" stop-color="#050208"/><stop offset="0.87" stop-color="#050208"/><stop offset="1.00" stop-color="#050208"/></linearGradient><linearGradient id="gbs2" gradientUnits="userSpaceOnUse" x1="0" y1="951" x2="0" y2="785"><stop offset="0.00" stop-color="#3d1053"/><stop offset="0.03" stop-color="#390f4f"/><stop offset="0.08" stop-color="#340e48"/><stop offset="0.15" stop-color="#2c0c3e"/><stop offset="0.25" stop-color="#200a30"/><stop offset="0.35" stop-color="#190824"/><stop offset="0.45" stop-color="#110719"/><stop offset="0.55" stop-color="#0b0510"/><stop offset="0.65" stop-color="#07030a"/><stop offset="0.75" stop-color="#050208"/><stop offset="0.87" stop-color="#050208"/><stop offset="1.00" stop-color="#050208"/></linearGradient><linearGradient id="gbs3" gradientUnits="userSpaceOnUse" x1="0" y1="951" x2="0" y2="785"><stop offset="0.00" stop-color="#57115c"/><stop offset="0.03" stop-color="#52115b"/><stop offset="0.08" stop-color="#481057"/><stop offset="0.15" stop-color="#3c1052"/><stop offset="0.25" stop-color="#310d44"/><stop offset="0.35" stop-color="#250b36"/><stop offset="0.45" stop-color="#1c092a"/><stop offset="0.55" stop-color="#14071e"/><stop offset="0.65" stop-color="#0d0613"/><stop offset="0.75" stop-color="#09040d"/><stop offset="0.87" stop-color="#050208"/><stop offset="1.00" stop-color="#050208"/></linearGradient><linearGradient id="gbs4" gradientUnits="userSpaceOnUse" x1="0" y1="951" x2="0" y2="785"><stop offset="0.00" stop-color="#731262"/><stop offset="0.03" stop-color="#6c1263"/><stop offset="0.08" stop-color="#631260"/><stop offset="0.15" stop-color="#56115c"/><stop offset="0.25" stop-color="#441056"/><stop offset="0.35" stop-color="#360e4b"/><stop offset="0.45" stop-color="#2b0c3d"/><stop offset="0.55" stop-color="#1f0a2f"/><stop offset="0.65" stop-color="#180823"/><stop offset="0.75" stop-color="#100718"/><stop offset="0.87" stop-color="#0a040f"/><stop offset="1.00" stop-color="#050208"/></linearGradient><linearGradient id="gbs5" gradientUnits="userSpaceOnUse" x1="0" y1="951" x2="0" y2="785"><stop offset="0.00" stop-color="#981256"/><stop offset="0.03" stop-color="#901259"/><stop offset="0.08" stop-color="#84125d"/><stop offset="0.15" stop-color="#721263"/><stop offset="0.25" stop-color="#5f115f"/><stop offset="0.35" stop-color="#4c1159"/><stop offset="0.45" stop-color="#3b0f51"/><stop offset="0.55" stop-color="#300d43"/><stop offset="0.65" stop-color="#240b35"/><stop offset="0.75" stop-color="#1b0929"/><stop offset="0.87" stop-color="#12071b"/><stop offset="1.00" stop-color="#0b0510"/></linearGradient><linearGradient id="gbs6" gradientUnits="userSpaceOnUse" x1="0" y1="951" x2="0" y2="785"><stop offset="0.00" stop-color="#ba1341"/><stop offset="0.03" stop-color="#b41247"/><stop offset="0.08" stop-color="#a81251"/><stop offset="0.15" stop-color="#971256"/><stop offset="0.25" stop-color="#7e125f"/><stop offset="0.35" stop-color="#671262"/><stop offset="0.45" stop-color="#55115c"/><stop offset="0.55" stop-color="#421055"/><stop offset="0.65" stop-color="#350e49"/><stop offset="0.75" stop-color="#2a0c3b"/><stop offset="0.87" stop-color="#1d092c"/><stop offset="1.00" stop-color="#13071c"/></linearGradient><linearGradient id="gbs7" gradientUnits="userSpaceOnUse" x1="0" y1="951" x2="0" y2="785"><stop offset="0.00" stop-color="#d91726"/><stop offset="0.03" stop-color="#d4142a"/><stop offset="0.08" stop-color="#c91334"/><stop offset="0.15" stop-color="#b91342"/><stop offset="0.25" stop-color="#a21253"/><stop offset="0.35" stop-color="#89125b"/><stop offset="0.45" stop-color="#701263"/><stop offset="0.55" stop-color="#5d115e"/><stop offset="0.65" stop-color="#4b1158"/><stop offset="0.75" stop-color="#3a0f50"/><stop offset="0.87" stop-color="#2c0c3f"/><stop offset="1.00" stop-color="#1e0a2d"/></linearGradient><linearGradient id="gbs8" gradientUnits="userSpaceOnUse" x1="0" y1="951" x2="0" y2="785"><stop offset="0.00" stop-color="#ea2d16"/><stop offset="0.03" stop-color="#e62819"/><stop offset="0.08" stop-color="#e1211f"/><stop offset="0.15" stop-color="#d91626"/><stop offset="0.25" stop-color="#c41339"/><stop offset="0.35" stop-color="#ad124d"/><stop offset="0.45" stop-color="#941257"/><stop offset="0.55" stop-color="#7b1260"/><stop offset="0.65" stop-color="#651261"/><stop offset="0.75" stop-color="#53115b"/><stop offset="0.87" stop-color="#3d1053"/><stop offset="1.00" stop-color="#2e0d41"/></linearGradient><linearGradient id="gbs9" gradientUnits="userSpaceOnUse" x1="0" y1="951" x2="0" y2="785"><stop offset="0.00" stop-color="#f65e19"/><stop offset="0.03" stop-color="#f45217"/><stop offset="0.08" stop-color="#f03e14"/><stop offset="0.15" stop-color="#e92c17"/><stop offset="0.25" stop-color="#de1d22"/><stop offset="0.35" stop-color="#ce1430"/><stop offset="0.45" stop-color="#b71344"/><stop offset="0.55" stop-color="#a01253"/><stop offset="0.65" stop-color="#87125c"/><stop offset="0.75" stop-color="#6e1264"/><stop offset="0.87" stop-color="#58115d"/><stop offset="1.00" stop-color="#401055"/></linearGradient><linearGradient id="gbs10" gradientUnits="userSpaceOnUse" x1="0" y1="951" x2="0" y2="785"><stop offset="0.00" stop-color="#fd9b31"/><stop offset="0.03" stop-color="#fc8d27"/><stop offset="0.08" stop-color="#fa781c"/><stop offset="0.15" stop-color="#f55c18"/><stop offset="0.25" stop-color="#ee3412"/><stop offset="0.35" stop-color="#e3241d"/><stop offset="0.45" stop-color="#d81527"/><stop offset="0.55" stop-color="#c2133b"/><stop offset="0.65" stop-color="#ab124f"/><stop offset="0.75" stop-color="#921258"/><stop offset="0.87" stop-color="#741262"/><stop offset="1.00" stop-color="#5b115e"/></linearGradient><linearGradient id="gbs11" gradientUnits="userSpaceOnUse" x1="0" y1="951" x2="0" y2="785"><stop offset="0.00" stop-color="#ffdc64"/><stop offset="0.03" stop-color="#ffce5a"/><stop offset="0.08" stop-color="#feb848"/><stop offset="0.15" stop-color="#fd9930"/><stop offset="0.25" stop-color="#f86e1b"/><stop offset="0.35" stop-color="#f24615"/><stop offset="0.45" stop-color="#e82a18"/><stop offset="0.55" stop-color="#dd1c22"/><stop offset="0.65" stop-color="#cc1432"/><stop offset="0.75" stop-color="#b51246"/><stop offset="0.87" stop-color="#981256"/><stop offset="1.00" stop-color="#781261"/></linearGradient><pattern id="spa" patternUnits="userSpaceOnUse" x="498" y="693" width="131" height="90"><path fill="#f05020" d="M3 79h1v1h-1zM15 67h1v1h-1zM55 71h1v1h-1zM75 76h1v1h-1zM118 75h1v1h-1zM123 68h1v1h-1zM66 75h1v1h-1zM15 75h1v1h-1zM104 72h1v1h-1zM36 61h1v1h-1zM121 79h1v1h-1zM79 73h1v1h-1zM25 50h1v1h-1zM18 77h1v1h-1zM83 72h1v1h-1zM120 78h1v1h-1zM7 32h1v1h-1zM101 74h1v1h-1zM100 70h1v1h-1zM102 56h1v1h-1zM114 65h1v1h-1zM11 75h1v1h-1zM39 73h1v1h-1zM127 72h1v1h-1zM50 63h1v1h-1zM65 76h1v1h-1zM100 54h1v1h-1zM55 78h1v1h-1zM98 63h1v1h-1zM47 79h1v1h-1zM88 71h1v1h-1zM47 77h1v1h-1zM111 52h1v1h-1zM4 75h1v1h-1zM3 79h1v1h-1zM5 71h1v1h-1zM16 46h1v1h-1zM60 64h1v1h-1zM48 58h1v1h-1zM85 75h1v1h-1zM34 79h1v1h-1zM31 52h1v1h-1zM65 79h1v1h-1zM39 76h1v1h-1zM11 73h1v1h-1zM106 71h1v1h-1zM74 75h1v1h-1zM18 73h1v1h-1zM78 71h1v1h-1zM7 65h1v1h-1zM119 74h1v1h-1zM98 73h1v1h-1zM101 78h1v1h-1zM33 43h1v1h-1zM86 70h1v1h-1zM16 76h1v1h-1zM30 71h1v1h-1zM83 71h1v1h-1zM108 75h1v1h-1zM77 75h1v1h-1zM99 71h1v1h-1zM51 75h1v1h-1zM46 76h1v1h-1zM80 68h1v1h-1zM130 69h1v1h-1zM3 62h1v1h-1zM98 49h1v1h-1zM53 65h1v1h-1zM77 79h1v1h-1zM22 72h1v1h-1zM113 76h1v1h-1zM72 61h1v1h-1zM15 70h1v1h-1zM6 71h1v1h-1zM98 64h1v1h-1zM5 69h1v1h-1zM98 79h1v1h-1zM39 63h1v1h-1zM91 78h1v1h-1zM72 61h1v1h-1zM128 66h1v1h-1zM61 70h1v1h-1zM11 78h1v1h-1zM85 35h1v1h-1zM51 74h1v1h-1zM7 78h1v1h-1zM81 68h1v1h-1zM17 75h1v1h-1zM55 74h1v1h-1zM90 69h1v1h-1zM33 40h1v1h-1zM20 74h1v1h-1zM15 66h1v1h-1zM121 75h1v1h-1zM41 52h1v1h-1zM27 48h1v1h-1zM51 73h1v1h-1zM79 69h1v1h-1zM130 73h1v1h-1zM111 69h1v1h-1zM50 78h1v1h-1zM68 52h1v1h-1zM95 74h1v1h-1zM69 78h1v1h-1zM20 71h1v1h-1zM38 77h1v1h-1zM38 78h1v1h-1zM79 77h1v1h-1zM121 68h1v1h-1zM121 56h1v1h-1zM103 79h1v1h-1zM3 75h1v1h-1zM93 67h1v1h-1zM53 74h1v1h-1zM89 67h1v1h-1zM81 79h1v1h-1zM82 71h1v1h-1zM89 72h1v1h-1zM99 77h1v1h-1zM76 76h1v1h-1zM94 79h1v1h-1zM107 54h1v1h-1zM113 47h1v1h-1zM105 78h1v1h-1zM34 68h1v1h-1zM85 56h1v1h-1zM56 52h1v1h-1zM0 76h1v1h-1zM17 78h1v1h-1zM40 74h1v1h-1zM80 79h1v1h-1zM81 42h1v1h-1zM46 79h1v1h-1zM82 78h1v1h-1zM7 71h1v1h-1zM33 72h1v1h-1zM68 68h1v1h-1zM26 78h1v1h-1zM96 69h1v1h-1zM12 69h1v1h-1zM125 79h1v1h-1zM9 78h1v1h-1zM125 56h1v1h-1zM51 64h1v1h-1zM19 78h1v1h-1zM70 72h1v1h-1zM116 75h1v1h-1zM121 78h1v1h-1zM18 66h1v1h-1zM78 74h1v1h-1zM105 75h1v1h-1zM106 77h1v1h-1zM114 66h1v1h-1zM45 67h1v1h-1zM15 79h1v1h-1zM63 69h1v1h-1zM115 64h1v1h-1zM114 74h1v1h-1zM55 78h1v1h-1zM107 66h1v1h-1zM60 79h1v1h-1zM116 55h1v1h-1zM103 76h1v1h-1zM65 76h1v1h-1zM70 79h1v1h-1zM124 75h1v1h-1zM10 72h1v1h-1zM80 65h1v1h-1zM57 75h1v1h-1zM50 72h1v1h-1zM68 76h1v1h-1zM41 57h1v1h-1zM53 79h1v1h-1zM36 77h1v1h-1zM23 72h1v1h-1zM36 76h1v1h-1zM24 78h1v1h-1zM3 65h1v1h-1zM55 79h1v1h-1zM27 72h1v1h-1zM84 62h1v1h-1zM16 74h1v1h-1zM54 59h1v1h-1zM112 69h1v1h-1zM33 66h1v1h-1zM122 79h1v1h-1zM119 79h1v1h-1zM80 77h1v1h-1zM43 69h1v1h-1zM91 70h1v1h-1zM107 78h1v1h-1zM119 62h1v1h-1zM129 67h1v1h-1zM17 74h1v1h-1zM98 75h1v1h-1zM68 79h1v1h-1zM98 57h1v1h-1zM55 77h1v1h-1zM80 72h1v1h-1zM66 77h1v1h-1zM5 65h1v1h-1zM21 52h1v1h-1zM105 68h1v1h-1zM54 72h1v1h-1zM101 77h1v1h-1zM86 77h1v1h-1zM81 74h1v1h-1zM52 79h1v1h-1zM115 61h1v1h-1zM92 62h1v1h-1zM106 77h1v1h-1zM108 66h1v1h-1zM9 79h1v1h-1zM85 69h1v1h-1zM125 56h1v1h-1zM20 50h1v1h-1zM72 63h1v1h-1zM31 59h1v1h-1zM62 73h1v1h-1zM36 77h1v1h-1zM63 65h1v1h-1zM85 70h1v1h-1zM129 76h1v1h-1zM15 60h1v1h-1zM81 66h1v1h-1zM68 79h1v1h-1zM60 69h1v1h-1zM51 78h1v1h-1zM123 75h1v1h-1zM10 77h1v1h-1zM25 61h1v1h-1zM45 63h1v1h-1zM101 70h1v1h-1zM40 74h1v1h-1zM17 77h1v1h-1zM9 72h1v1h-1zM5 68h1v1h-1zM118 75h1v1h-1zM101 60h1v1h-1zM4 75h1v1h-1zM56 71h1v1h-1zM55 70h1v1h-1zM74 68h1v1h-1zM128 70h1v1h-1zM120 72h1v1h-1zM46 62h1v1h-1zM106 75h1v1h-1zM21 58h1v1h-1zM109 43h1v1h-1zM25 65h1v1h-1zM66 73h1v1h-1zM89 78h1v1h-1zM53 54h1v1h-1zM100 78h1v1h-1zM128 62h1v1h-1zM101 77h1v1h-1zM48 71h1v1h-1zM107 65h1v1h-1zM113 54h1v1h-1zM100 76h1v1h-1zM66 73h1v1h-1zM11 73h1v1h-1zM128 74h1v1h-1zM35 74h1v1h-1zM35 77h1v1h-1zM86 72h1v1h-1zM31 71h1v1h-1zM121 78h1v1h-1zM50 65h1v1h-1zM26 75h1v1h-1zM94 79h1v1h-1zM11 75h1v1h-1zM19 78h1v1h-1zM38 76h1v1h-1zM33 70h1v1h-1zM121 72h1v1h-1zM86 59h1v1h-1zM40 64h1v1h-1zM37 72h1v1h-1zM108 76h1v1h-1zM20 67h1v1h-1zM5 60h1v1h-1zM99 62h1v1h-1zM104 69h1v1h-1zM18 54h1v1h-1zM106 79h1v1h-1zM64 61h1v1h-1zM118 72h1v1h-1zM76 73h1v1h-1zM93 76h1v1h-1zM32 74h1v1h-1zM63 61h1v1h-1z"/><path fill="#ffb030" d="M36 84h1v1h-1zM28 81h1v1h-1zM87 70h1v1h-1zM15 88h1v1h-1zM102 74h1v1h-1zM45 88h1v1h-1zM12 88h1v1h-1zM97 82h1v1h-1zM97 87h1v1h-1zM61 71h1v1h-1zM127 79h1v1h-1zM97 74h1v1h-1zM76 87h1v1h-1zM62 88h1v1h-1zM115 85h1v1h-1zM81 78h1v1h-1zM78 87h1v1h-1zM58 74h1v1h-1zM66 86h1v1h-1zM124 80h1v1h-1zM45 73h1v1h-1zM19 83h1v1h-1zM38 84h1v1h-1zM121 88h1v1h-1zM3 80h1v1h-1zM89 82h1v1h-1zM24 78h1v1h-1zM73 79h1v1h-1zM59 74h1v1h-1zM4 79h1v1h-1zM58 66h1v1h-1zM98 85h1v1h-1zM34 75h1v1h-1zM83 66h1v1h-1zM63 83h1v1h-1zM95 62h1v1h-1zM123 76h1v1h-1zM98 81h1v1h-1zM71 78h1v1h-1zM95 71h1v1h-1zM36 88h1v1h-1zM81 61h1v1h-1zM111 83h1v1h-1zM58 83h1v1h-1zM61 78h1v1h-1zM130 86h1v1h-1zM130 76h1v1h-1zM77 80h1v1h-1zM49 72h1v1h-1zM17 82h1v1h-1zM28 87h1v1h-1zM75 82h1v1h-1zM33 84h1v1h-1zM89 78h1v1h-1zM91 88h1v1h-1zM57 87h1v1h-1zM98 86h1v1h-1zM123 70h1v1h-1zM20 85h1v1h-1zM30 87h1v1h-1zM1 70h1v1h-1zM87 78h1v1h-1zM34 76h1v1h-1zM28 84h1v1h-1zM68 88h1v1h-1zM5 73h1v1h-1zM30 83h1v1h-1zM54 76h1v1h-1zM123 85h1v1h-1zM61 75h1v1h-1zM109 75h1v1h-1zM15 77h1v1h-1zM35 84h1v1h-1zM79 82h1v1h-1zM46 85h1v1h-1zM36 78h1v1h-1zM29 85h1v1h-1zM121 74h1v1h-1zM56 78h1v1h-1zM86 81h1v1h-1zM0 85h1v1h-1zM18 84h1v1h-1zM51 88h1v1h-1zM31 67h1v1h-1zM49 74h1v1h-1zM47 71h1v1h-1zM123 65h1v1h-1zM69 77h1v1h-1zM98 83h1v1h-1zM65 72h1v1h-1zM47 86h1v1h-1zM103 72h1v1h-1zM88 83h1v1h-1zM81 87h1v1h-1zM115 81h1v1h-1zM106 79h1v1h-1zM67 86h1v1h-1zM93 87h1v1h-1zM79 73h1v1h-1zM5 87h1v1h-1zM105 87h1v1h-1zM38 67h1v1h-1zM87 86h1v1h-1zM74 84h1v1h-1zM61 81h1v1h-1zM18 67h1v1h-1zM85 80h1v1h-1zM22 75h1v1h-1zM21 86h1v1h-1zM52 86h1v1h-1zM20 65h1v1h-1zM58 87h1v1h-1zM101 85h1v1h-1zM58 67h1v1h-1zM1 81h1v1h-1zM39 76h1v1h-1zM0 88h1v1h-1zM106 69h1v1h-1zM116 64h1v1h-1zM68 87h1v1h-1zM73 63h1v1h-1zM123 86h1v1h-1zM84 82h1v1h-1zM16 66h1v1h-1zM34 84h1v1h-1zM46 72h1v1h-1zM31 76h1v1h-1zM130 70h1v1h-1zM32 85h1v1h-1zM38 88h1v1h-1zM34 78h1v1h-1zM116 87h1v1h-1zM13 73h1v1h-1zM122 75h1v1h-1zM127 68h1v1h-1zM66 68h1v1h-1zM39 77h1v1h-1zM102 60h1v1h-1zM110 72h1v1h-1zM52 74h1v1h-1zM92 76h1v1h-1zM32 88h1v1h-1zM6 75h1v1h-1zM128 88h1v1h-1zM43 72h1v1h-1zM11 82h1v1h-1zM10 84h1v1h-1zM112 73h1v1h-1zM83 61h1v1h-1zM86 87h1v1h-1zM27 85h1v1h-1zM68 81h1v1h-1zM119 85h1v1h-1zM20 87h1v1h-1zM125 63h1v1h-1zM123 76h1v1h-1zM65 82h1v1h-1zM26 64h1v1h-1zM129 86h1v1h-1zM19 77h1v1h-1zM88 66h1v1h-1zM54 79h1v1h-1zM76 68h1v1h-1zM71 78h1v1h-1zM127 70h1v1h-1zM8 88h1v1h-1zM27 73h1v1h-1zM126 80h1v1h-1zM2 80h1v1h-1zM70 81h1v1h-1zM87 69h1v1h-1zM54 80h1v1h-1zM48 73h1v1h-1zM76 66h1v1h-1zM116 83h1v1h-1zM88 81h1v1h-1zM113 82h1v1h-1zM122 65h1v1h-1zM96 78h1v1h-1zM27 85h1v1h-1zM120 86h1v1h-1zM27 86h1v1h-1zM86 76h1v1h-1zM96 79h1v1h-1zM13 82h1v1h-1zM104 74h1v1h-1zM48 85h1v1h-1zM0 77h1v1h-1zM63 81h1v1h-1zM39 85h1v1h-1zM78 79h1v1h-1zM85 83h1v1h-1zM95 74h1v1h-1zM49 73h1v1h-1zM77 88h1v1h-1zM97 80h1v1h-1zM9 74h1v1h-1zM52 86h1v1h-1zM125 85h1v1h-1zM70 65h1v1h-1zM48 79h1v1h-1zM115 62h1v1h-1zM22 84h1v1h-1zM105 77h1v1h-1zM115 79h1v1h-1zM120 78h1v1h-1zM115 76h1v1h-1zM12 76h1v1h-1zM22 61h1v1h-1zM57 79h1v1h-1zM19 80h1v1h-1zM49 87h1v1h-1zM80 88h1v1h-1zM57 88h1v1h-1zM127 70h1v1h-1zM123 85h1v1h-1zM76 86h1v1h-1zM42 88h1v1h-1zM128 68h1v1h-1zM15 80h1v1h-1zM89 82h1v1h-1zM11 76h1v1h-1zM9 69h1v1h-1zM37 80h1v1h-1zM123 86h1v1h-1zM113 87h1v1h-1zM45 86h1v1h-1zM38 75h1v1h-1zM94 82h1v1h-1zM74 67h1v1h-1zM83 88h1v1h-1zM42 67h1v1h-1zM104 84h1v1h-1zM87 80h1v1h-1zM101 63h1v1h-1zM27 66h1v1h-1zM76 70h1v1h-1zM115 87h1v1h-1zM73 65h1v1h-1zM106 78h1v1h-1zM102 65h1v1h-1zM114 76h1v1h-1zM62 85h1v1h-1zM11 80h1v1h-1zM29 73h1v1h-1zM8 82h1v1h-1zM62 79h1v1h-1zM114 81h1v1h-1zM46 79h1v1h-1zM89 66h1v1h-1zM104 77h1v1h-1zM7 82h1v1h-1zM31 69h1v1h-1zM48 81h1v1h-1zM110 70h1v1h-1zM24 85h1v1h-1zM99 82h1v1h-1zM108 74h1v1h-1zM10 68h1v1h-1zM73 74h1v1h-1zM3 72h1v1h-1zM41 76h1v1h-1zM22 75h1v1h-1zM22 77h1v1h-1zM11 85h1v1h-1zM61 75h1v1h-1zM121 86h1v1h-1zM18 81h1v1h-1zM51 88h1v1h-1zM1 77h1v1h-1zM77 87h1v1h-1zM101 80h1v1h-1zM19 73h1v1h-1zM36 85h1v1h-1zM95 82h1v1h-1zM58 77h1v1h-1zM68 76h1v1h-1zM33 79h1v1h-1zM9 65h1v1h-1zM61 74h1v1h-1zM42 85h1v1h-1zM59 73h1v1h-1zM126 84h1v1h-1zM35 85h1v1h-1zM46 67h1v1h-1zM16 72h1v1h-1zM38 83h1v1h-1zM62 58h1v1h-1zM46 87h1v1h-1zM102 77h1v1h-1zM113 74h1v1h-1zM78 60h1v1h-1zM83 79h1v1h-1zM36 75h1v1h-1zM10 59h1v1h-1zM82 79h1v1h-1zM96 86h1v1h-1zM114 82h1v1h-1zM39 72h1v1h-1zM98 74h1v1h-1zM7 84h1v1h-1zM60 77h1v1h-1zM57 81h1v1h-1zM77 80h1v1h-1zM87 78h1v1h-1zM4 85h1v1h-1zM68 86h1v1h-1zM98 82h1v1h-1zM27 83h1v1h-1zM27 81h1v1h-1zM122 61h1v1h-1zM116 73h1v1h-1zM91 65h1v1h-1zM58 77h1v1h-1zM45 79h1v1h-1zM90 68h1v1h-1zM124 86h1v1h-1zM61 78h1v1h-1zM92 75h1v1h-1zM89 84h1v1h-1zM114 71h1v1h-1zM21 84h1v1h-1zM18 72h1v1h-1zM107 88h1v1h-1zM92 88h1v1h-1zM15 85h1v1h-1zM84 65h1v1h-1zM114 85h1v1h-1zM29 85h1v1h-1zM65 82h1v1h-1zM96 88h1v1h-1zM85 78h1v1h-1zM93 78h1v1h-1zM129 67h1v1h-1zM108 85h1v1h-1zM9 86h1v1h-1zM69 77h1v1h-1zM108 59h1v1h-1zM12 83h1v1h-1zM86 73h1v1h-1zM113 65h1v1h-1zM110 80h1v1h-1zM118 67h1v1h-1zM6 81h1v1h-1zM16 80h1v1h-1zM50 88h1v1h-1zM118 70h1v1h-1zM8 77h1v1h-1zM15 73h1v1h-1zM98 79h1v1h-1zM94 86h1v1h-1zM73 64h1v1h-1zM18 63h1v1h-1zM107 72h1v1h-1zM10 79h1v1h-1zM85 83h1v1h-1zM85 81h1v1h-1zM14 85h1v1h-1zM100 80h1v1h-1zM66 80h1v1h-1zM43 80h1v1h-1zM9 68h1v1h-1zM124 78h1v1h-1zM60 69h1v1h-1zM4 88h1v1h-1zM94 82h1v1h-1zM40 85h1v1h-1zM90 74h1v1h-1zM89 76h1v1h-1zM14 84h1v1h-1zM47 88h1v1h-1zM29 88h1v1h-1zM116 77h1v1h-1zM28 77h1v1h-1zM102 78h1v1h-1zM125 77h1v1h-1zM59 67h1v1h-1zM99 75h1v1h-1zM75 87h1v1h-1zM59 61h1v1h-1zM45 64h1v1h-1zM82 87h1v1h-1zM98 72h1v1h-1zM34 79h1v1h-1zM78 81h1v1h-1zM110 74h1v1h-1zM10 85h1v1h-1zM14 88h1v1h-1zM39 85h1v1h-1zM99 75h1v1h-1zM74 73h1v1h-1zM99 79h1v1h-1zM107 87h1v1h-1zM57 78h1v1h-1zM61 68h1v1h-1zM21 88h1v1h-1zM68 70h1v1h-1zM26 84h1v1h-1zM89 78h1v1h-1zM3 81h1v1h-1zM9 88h1v1h-1zM98 62h1v1h-1zM103 87h1v1h-1zM6 88h1v1h-1zM18 88h1v1h-1zM90 79h1v1h-1zM56 84h1v1h-1zM92 76h1v1h-1zM123 87h1v1h-1zM106 77h1v1h-1zM101 77h1v1h-1zM47 74h1v1h-1zM29 78h1v1h-1zM0 79h1v1h-1zM11 72h1v1h-1zM50 60h1v1h-1zM98 68h1v1h-1zM81 87h1v1h-1zM9 85h1v1h-1zM120 83h1v1h-1zM3 75h1v1h-1zM19 88h1v1h-1zM100 84h1v1h-1zM51 83h1v1h-1zM36 85h1v1h-1zM89 87h1v1h-1zM129 70h1v1h-1zM103 64h1v1h-1zM80 72h1v1h-1zM55 83h1v1h-1zM8 87h1v1h-1zM35 76h1v1h-1zM49 62h1v1h-1zM87 70h1v1h-1zM40 78h1v1h-1zM70 84h1v1h-1zM102 59h1v1h-1zM57 87h1v1h-1zM36 77h1v1h-1zM99 70h1v1h-1zM123 73h1v1h-1zM24 64h1v1h-1zM16 81h1v1h-1zM123 77h1v1h-1zM119 77h1v1h-1zM37 80h1v1h-1zM11 66h1v1h-1zM66 74h1v1h-1zM20 78h1v1h-1zM99 88h1v1h-1zM114 84h1v1h-1zM23 75h1v1h-1zM97 74h1v1h-1zM6 88h1v1h-1zM44 88h1v1h-1zM53 70h1v1h-1zM90 86h1v1h-1zM80 88h1v1h-1zM42 81h1v1h-1zM9 81h1v1h-1zM46 87h1v1h-1zM87 76h1v1h-1zM52 70h1v1h-1zM10 87h1v1h-1zM82 82h1v1h-1zM19 61h1v1h-1zM15 87h1v1h-1zM14 80h1v1h-1zM113 88h1v1h-1zM16 74h1v1h-1zM64 86h1v1h-1zM50 79h1v1h-1zM33 86h1v1h-1zM48 77h1v1h-1zM3 77h1v1h-1zM32 79h1v1h-1zM68 70h1v1h-1zM49 69h1v1h-1zM38 65h1v1h-1zM10 71h1v1h-1zM78 83h1v1h-1zM27 61h1v1h-1zM69 60h1v1h-1zM16 86h1v1h-1zM115 78h1v1h-1zM100 77h1v1h-1zM21 71h1v1h-1zM124 63h1v1h-1zM128 68h1v1h-1zM57 78h1v1h-1zM20 87h1v1h-1zM26 76h1v1h-1zM99 84h1v1h-1zM93 88h1v1h-1zM130 74h1v1h-1zM56 74h1v1h-1zM49 88h1v1h-1zM95 88h1v1h-1zM19 75h1v1h-1zM31 73h1v1h-1zM23 82h1v1h-1zM122 82h1v1h-1zM55 85h1v1h-1zM58 83h1v1h-1zM5 83h1v1h-1zM6 88h1v1h-1zM129 73h1v1h-1zM42 82h1v1h-1zM54 85h1v1h-1zM37 70h1v1h-1zM2 76h1v1h-1zM91 82h1v1h-1zM15 83h1v1h-1zM125 85h1v1h-1zM90 78h1v1h-1zM31 62h1v1h-1zM75 75h1v1h-1zM128 78h1v1h-1zM128 83h1v1h-1zM106 87h1v1h-1zM32 85h1v1h-1zM75 76h1v1h-1zM24 86h1v1h-1zM83 82h1v1h-1zM47 86h1v1h-1zM104 70h1v1h-1zM25 78h1v1h-1zM70 76h1v1h-1zM78 87h1v1h-1zM77 79h1v1h-1zM104 88h1v1h-1zM69 72h1v1h-1zM27 72h1v1h-1zM67 87h1v1h-1zM118 75h1v1h-1zM108 87h1v1h-1zM77 87h1v1h-1zM7 75h1v1h-1zM110 70h1v1h-1zM68 73h1v1h-1zM115 86h1v1h-1zM5 87h1v1h-1zM114 59h1v1h-1zM38 78h1v1h-1zM71 83h1v1h-1zM48 84h1v1h-1zM49 66h1v1h-1zM91 71h1v1h-1zM93 80h1v1h-1z"/><path fill="#ffd050" d="M37 88h1v1h-1zM54 88h1v1h-1zM95 84h1v1h-1zM125 83h1v1h-1zM127 88h1v1h-1zM10 87h1v1h-1zM28 85h1v1h-1zM56 85h1v1h-1zM122 84h1v1h-1zM119 87h1v1h-1zM29 85h1v1h-1zM111 80h1v1h-1zM34 86h1v1h-1zM74 86h1v1h-1zM102 86h1v1h-1zM73 87h1v1h-1zM42 88h1v1h-1zM97 81h1v1h-1zM58 82h1v1h-1zM101 80h1v1h-1zM118 84h1v1h-1zM27 82h1v1h-1zM70 81h1v1h-1zM107 84h1v1h-1zM127 84h1v1h-1zM104 84h1v1h-1zM99 88h1v1h-1zM61 83h1v1h-1zM126 85h1v1h-1zM79 80h1v1h-1zM118 87h1v1h-1zM50 86h1v1h-1zM124 86h1v1h-1zM121 85h1v1h-1zM94 84h1v1h-1zM3 87h1v1h-1zM21 82h1v1h-1zM128 80h1v1h-1zM117 85h1v1h-1zM47 87h1v1h-1zM90 80h1v1h-1zM73 87h1v1h-1zM12 85h1v1h-1zM72 87h1v1h-1zM0 82h1v1h-1zM78 81h1v1h-1zM29 82h1v1h-1zM85 88h1v1h-1zM77 81h1v1h-1zM90 81h1v1h-1zM60 81h1v1h-1zM32 87h1v1h-1zM85 84h1v1h-1zM107 83h1v1h-1zM110 85h1v1h-1zM7 82h1v1h-1zM57 82h1v1h-1zM105 81h1v1h-1zM5 85h1v1h-1zM104 83h1v1h-1zM73 85h1v1h-1zM110 88h1v1h-1zM117 86h1v1h-1zM130 84h1v1h-1zM62 81h1v1h-1zM71 87h1v1h-1zM34 83h1v1h-1zM19 85h1v1h-1zM130 81h1v1h-1zM57 88h1v1h-1zM77 80h1v1h-1zM83 81h1v1h-1zM56 85h1v1h-1zM82 85h1v1h-1zM93 80h1v1h-1zM0 88h1v1h-1zM73 84h1v1h-1zM47 86h1v1h-1zM127 88h1v1h-1zM92 86h1v1h-1zM121 83h1v1h-1zM2 84h1v1h-1zM55 81h1v1h-1zM0 80h1v1h-1zM36 86h1v1h-1zM54 85h1v1h-1zM9 87h1v1h-1zM119 80h1v1h-1zM7 87h1v1h-1zM31 86h1v1h-1zM5 82h1v1h-1zM5 86h1v1h-1zM89 81h1v1h-1zM100 84h1v1h-1zM3 88h1v1h-1zM83 82h1v1h-1zM3 85h1v1h-1zM13 81h1v1h-1zM14 86h1v1h-1zM14 82h1v1h-1zM90 82h1v1h-1zM16 88h1v1h-1zM76 85h1v1h-1zM23 80h1v1h-1zM111 87h1v1h-1zM94 85h1v1h-1zM43 85h1v1h-1zM119 83h1v1h-1zM73 85h1v1h-1zM108 86h1v1h-1zM29 86h1v1h-1zM54 88h1v1h-1zM118 85h1v1h-1zM89 83h1v1h-1zM86 83h1v1h-1zM23 80h1v1h-1zM126 85h1v1h-1zM10 87h1v1h-1zM72 81h1v1h-1zM95 83h1v1h-1zM63 88h1v1h-1zM123 84h1v1h-1zM20 86h1v1h-1zM112 85h1v1h-1zM2 81h1v1h-1zM121 81h1v1h-1zM79 87h1v1h-1zM129 87h1v1h-1zM123 83h1v1h-1zM48 83h1v1h-1zM27 86h1v1h-1zM103 86h1v1h-1zM61 81h1v1h-1zM114 87h1v1h-1zM73 88h1v1h-1zM32 87h1v1h-1zM53 81h1v1h-1zM38 82h1v1h-1zM38 88h1v1h-1zM56 86h1v1h-1zM126 83h1v1h-1zM42 84h1v1h-1zM61 85h1v1h-1zM117 81h1v1h-1zM98 87h1v1h-1zM35 87h1v1h-1zM24 87h1v1h-1zM82 83h1v1h-1zM17 86h1v1h-1zM118 81h1v1h-1zM108 87h1v1h-1zM52 87h1v1h-1zM6 81h1v1h-1zM125 86h1v1h-1zM126 81h1v1h-1zM49 88h1v1h-1zM122 88h1v1h-1zM2 86h1v1h-1zM58 86h1v1h-1zM44 83h1v1h-1zM53 88h1v1h-1zM18 88h1v1h-1zM77 84h1v1h-1zM111 84h1v1h-1zM11 86h1v1h-1zM121 87h1v1h-1zM109 86h1v1h-1zM15 85h1v1h-1zM84 86h1v1h-1zM29 82h1v1h-1zM104 87h1v1h-1zM89 82h1v1h-1zM41 82h1v1h-1zM126 88h1v1h-1zM57 84h1v1h-1zM39 82h1v1h-1zM81 83h1v1h-1zM105 80h1v1h-1zM121 85h1v1h-1zM69 82h1v1h-1zM96 83h1v1h-1zM76 84h1v1h-1zM32 83h1v1h-1zM37 83h1v1h-1zM127 83h1v1h-1zM81 87h1v1h-1zM112 87h1v1h-1zM10 88h1v1h-1zM62 84h1v1h-1zM93 87h1v1h-1zM29 81h1v1h-1zM18 80h1v1h-1zM90 83h1v1h-1zM23 84h1v1h-1zM98 81h1v1h-1zM39 88h1v1h-1zM14 88h1v1h-1zM21 87h1v1h-1zM124 87h1v1h-1zM106 87h1v1h-1zM40 88h1v1h-1zM37 81h1v1h-1zM123 88h1v1h-1zM111 85h1v1h-1zM22 88h1v1h-1zM14 88h1v1h-1zM65 84h1v1h-1zM80 87h1v1h-1zM27 82h1v1h-1zM59 87h1v1h-1zM0 83h1v1h-1zM130 88h1v1h-1zM2 82h1v1h-1zM70 82h1v1h-1zM109 88h1v1h-1zM54 87h1v1h-1zM94 80h1v1h-1zM95 88h1v1h-1zM103 85h1v1h-1zM92 85h1v1h-1zM5 86h1v1h-1zM98 87h1v1h-1zM127 88h1v1h-1zM128 86h1v1h-1zM107 80h1v1h-1zM40 82h1v1h-1zM43 85h1v1h-1zM31 87h1v1h-1zM18 82h1v1h-1zM86 82h1v1h-1zM117 83h1v1h-1zM75 86h1v1h-1zM30 86h1v1h-1zM53 88h1v1h-1zM23 83h1v1h-1zM91 87h1v1h-1zM81 84h1v1h-1zM91 80h1v1h-1zM6 85h1v1h-1zM68 88h1v1h-1zM119 82h1v1h-1zM12 85h1v1h-1zM86 83h1v1h-1zM8 80h1v1h-1zM8 88h1v1h-1zM119 83h1v1h-1zM10 86h1v1h-1zM90 80h1v1h-1zM47 84h1v1h-1zM76 83h1v1h-1zM73 82h1v1h-1zM81 87h1v1h-1zM39 80h1v1h-1zM69 83h1v1h-1zM31 88h1v1h-1zM82 85h1v1h-1zM41 83h1v1h-1zM123 87h1v1h-1zM61 87h1v1h-1zM89 87h1v1h-1zM11 88h1v1h-1zM120 85h1v1h-1zM54 85h1v1h-1zM26 86h1v1h-1zM49 84h1v1h-1zM89 86h1v1h-1zM57 82h1v1h-1zM91 82h1v1h-1zM112 86h1v1h-1zM70 80h1v1h-1zM75 80h1v1h-1zM24 87h1v1h-1zM64 83h1v1h-1zM114 88h1v1h-1zM120 83h1v1h-1zM7 86h1v1h-1zM104 80h1v1h-1zM54 84h1v1h-1zM111 88h1v1h-1zM46 83h1v1h-1zM119 86h1v1h-1zM77 81h1v1h-1zM106 86h1v1h-1zM127 86h1v1h-1zM111 86h1v1h-1z"/><path fill="#ff9020" d="M105 71h1v1h-1zM123 83h1v1h-1zM85 79h1v1h-1zM30 73h1v1h-1zM89 72h1v1h-1zM49 88h1v1h-1zM83 66h1v1h-1zM88 85h1v1h-1zM108 87h1v1h-1zM62 87h1v1h-1zM93 71h1v1h-1zM76 84h1v1h-1zM46 78h1v1h-1zM1 88h1v1h-1zM82 74h1v1h-1zM109 67h1v1h-1zM79 75h1v1h-1zM86 72h1v1h-1zM100 87h1v1h-1zM107 85h1v1h-1zM110 70h1v1h-1zM65 82h1v1h-1zM78 81h1v1h-1zM81 87h1v1h-1zM51 86h1v1h-1zM34 80h1v1h-1zM41 71h1v1h-1zM118 82h1v1h-1zM76 81h1v1h-1zM41 83h1v1h-1zM4 67h1v1h-1zM51 79h1v1h-1zM100 88h1v1h-1zM30 68h1v1h-1zM55 73h1v1h-1zM20 62h1v1h-1zM14 84h1v1h-1zM48 84h1v1h-1zM4 86h1v1h-1zM81 87h1v1h-1zM86 82h1v1h-1zM83 77h1v1h-1zM21 82h1v1h-1zM4 85h1v1h-1zM92 83h1v1h-1zM73 70h1v1h-1zM46 86h1v1h-1zM73 80h1v1h-1zM68 86h1v1h-1zM72 86h1v1h-1zM129 87h1v1h-1zM12 79h1v1h-1zM23 76h1v1h-1zM125 79h1v1h-1zM18 81h1v1h-1zM114 85h1v1h-1zM89 87h1v1h-1zM20 81h1v1h-1zM0 86h1v1h-1zM112 81h1v1h-1zM113 80h1v1h-1zM0 78h1v1h-1zM11 76h1v1h-1zM59 85h1v1h-1zM33 85h1v1h-1zM18 65h1v1h-1zM62 86h1v1h-1zM72 60h1v1h-1zM48 80h1v1h-1zM43 79h1v1h-1zM120 78h1v1h-1zM85 76h1v1h-1zM60 81h1v1h-1zM88 77h1v1h-1zM5 79h1v1h-1zM73 78h1v1h-1zM71 79h1v1h-1zM33 85h1v1h-1zM57 60h1v1h-1zM89 88h1v1h-1zM112 80h1v1h-1zM43 79h1v1h-1zM67 80h1v1h-1zM130 84h1v1h-1zM34 66h1v1h-1zM129 88h1v1h-1zM63 84h1v1h-1zM2 81h1v1h-1zM117 87h1v1h-1zM6 82h1v1h-1zM51 80h1v1h-1zM108 76h1v1h-1zM7 88h1v1h-1zM105 88h1v1h-1zM26 82h1v1h-1zM67 82h1v1h-1zM45 60h1v1h-1zM50 76h1v1h-1zM56 78h1v1h-1zM32 67h1v1h-1zM13 86h1v1h-1zM20 81h1v1h-1zM69 88h1v1h-1zM76 66h1v1h-1zM51 77h1v1h-1zM93 78h1v1h-1zM95 62h1v1h-1zM129 82h1v1h-1zM78 86h1v1h-1zM69 86h1v1h-1zM99 75h1v1h-1zM11 85h1v1h-1zM68 70h1v1h-1zM82 88h1v1h-1zM72 80h1v1h-1zM115 69h1v1h-1zM103 87h1v1h-1zM128 83h1v1h-1zM21 67h1v1h-1zM28 78h1v1h-1zM47 80h1v1h-1zM100 82h1v1h-1zM78 85h1v1h-1zM16 76h1v1h-1zM10 63h1v1h-1zM74 80h1v1h-1zM50 86h1v1h-1zM109 72h1v1h-1zM45 86h1v1h-1zM98 86h1v1h-1zM41 88h1v1h-1zM69 88h1v1h-1zM79 78h1v1h-1zM54 85h1v1h-1zM100 86h1v1h-1zM123 86h1v1h-1zM114 86h1v1h-1zM48 83h1v1h-1zM99 82h1v1h-1zM107 83h1v1h-1zM92 77h1v1h-1zM27 86h1v1h-1zM70 75h1v1h-1zM51 85h1v1h-1zM49 86h1v1h-1zM86 85h1v1h-1zM121 67h1v1h-1zM47 61h1v1h-1zM52 83h1v1h-1zM10 84h1v1h-1zM45 81h1v1h-1zM80 76h1v1h-1zM126 80h1v1h-1zM37 69h1v1h-1zM114 69h1v1h-1zM43 74h1v1h-1zM24 88h1v1h-1zM38 85h1v1h-1zM30 88h1v1h-1zM72 84h1v1h-1zM122 67h1v1h-1zM31 61h1v1h-1zM0 79h1v1h-1zM113 77h1v1h-1zM122 80h1v1h-1zM77 84h1v1h-1zM79 86h1v1h-1zM93 75h1v1h-1zM40 80h1v1h-1zM105 85h1v1h-1zM110 80h1v1h-1zM34 78h1v1h-1zM25 87h1v1h-1zM109 78h1v1h-1zM97 72h1v1h-1zM14 80h1v1h-1zM69 71h1v1h-1zM126 80h1v1h-1zM44 83h1v1h-1zM123 81h1v1h-1zM117 84h1v1h-1zM62 74h1v1h-1zM76 79h1v1h-1zM26 81h1v1h-1zM39 88h1v1h-1zM1 85h1v1h-1zM59 86h1v1h-1zM59 72h1v1h-1zM65 88h1v1h-1zM120 75h1v1h-1zM98 81h1v1h-1zM111 85h1v1h-1zM58 86h1v1h-1zM123 60h1v1h-1zM49 81h1v1h-1zM23 70h1v1h-1zM57 77h1v1h-1zM101 59h1v1h-1zM68 80h1v1h-1zM9 88h1v1h-1zM111 66h1v1h-1zM82 80h1v1h-1zM17 87h1v1h-1zM54 77h1v1h-1zM118 76h1v1h-1zM66 84h1v1h-1zM128 75h1v1h-1zM99 77h1v1h-1zM68 73h1v1h-1zM39 63h1v1h-1zM68 83h1v1h-1zM75 76h1v1h-1zM54 88h1v1h-1zM72 83h1v1h-1zM87 79h1v1h-1zM48 85h1v1h-1zM111 81h1v1h-1zM17 59h1v1h-1zM34 77h1v1h-1zM31 73h1v1h-1zM36 88h1v1h-1zM23 72h1v1h-1zM78 84h1v1h-1zM122 73h1v1h-1zM14 86h1v1h-1zM17 84h1v1h-1zM68 83h1v1h-1zM63 75h1v1h-1zM22 65h1v1h-1zM64 83h1v1h-1zM20 82h1v1h-1zM23 84h1v1h-1zM91 75h1v1h-1zM79 80h1v1h-1zM78 86h1v1h-1zM11 84h1v1h-1zM85 85h1v1h-1zM11 87h1v1h-1zM50 78h1v1h-1zM99 80h1v1h-1zM85 84h1v1h-1zM34 84h1v1h-1zM62 88h1v1h-1zM68 85h1v1h-1zM30 85h1v1h-1zM58 85h1v1h-1zM28 75h1v1h-1zM54 88h1v1h-1zM0 67h1v1h-1zM2 84h1v1h-1zM63 81h1v1h-1zM100 86h1v1h-1zM21 69h1v1h-1zM5 86h1v1h-1zM89 69h1v1h-1zM121 60h1v1h-1zM23 81h1v1h-1zM119 86h1v1h-1zM2 82h1v1h-1zM34 87h1v1h-1zM109 85h1v1h-1zM15 78h1v1h-1zM69 87h1v1h-1zM58 83h1v1h-1zM34 80h1v1h-1zM63 81h1v1h-1zM25 86h1v1h-1zM54 76h1v1h-1zM39 59h1v1h-1zM95 81h1v1h-1zM40 76h1v1h-1zM28 80h1v1h-1zM120 75h1v1h-1zM65 88h1v1h-1zM74 79h1v1h-1zM49 79h1v1h-1zM28 70h1v1h-1zM109 82h1v1h-1zM78 86h1v1h-1zM50 80h1v1h-1zM102 74h1v1h-1zM107 82h1v1h-1zM94 88h1v1h-1zM94 83h1v1h-1zM35 82h1v1h-1zM52 75h1v1h-1zM39 76h1v1h-1zM70 87h1v1h-1zM16 61h1v1h-1zM15 79h1v1h-1zM80 79h1v1h-1zM105 81h1v1h-1zM45 64h1v1h-1zM107 74h1v1h-1zM41 88h1v1h-1zM78 74h1v1h-1zM53 87h1v1h-1zM35 58h1v1h-1zM68 78h1v1h-1zM45 82h1v1h-1zM120 59h1v1h-1zM110 72h1v1h-1zM41 85h1v1h-1zM89 82h1v1h-1zM14 70h1v1h-1zM56 87h1v1h-1zM47 78h1v1h-1zM10 79h1v1h-1zM127 73h1v1h-1zM106 85h1v1h-1zM49 79h1v1h-1zM122 68h1v1h-1zM120 61h1v1h-1zM36 64h1v1h-1zM51 69h1v1h-1zM11 57h1v1h-1zM43 88h1v1h-1zM88 87h1v1h-1zM61 66h1v1h-1zM110 77h1v1h-1zM124 81h1v1h-1zM89 86h1v1h-1zM99 77h1v1h-1zM13 70h1v1h-1zM105 82h1v1h-1zM108 76h1v1h-1zM63 78h1v1h-1zM116 73h1v1h-1zM48 83h1v1h-1zM72 70h1v1h-1zM34 83h1v1h-1zM43 84h1v1h-1zM49 75h1v1h-1zM85 85h1v1h-1zM6 71h1v1h-1zM126 73h1v1h-1zM50 88h1v1h-1zM52 66h1v1h-1zM98 87h1v1h-1zM64 88h1v1h-1zM43 86h1v1h-1zM15 84h1v1h-1zM121 64h1v1h-1zM32 70h1v1h-1zM116 63h1v1h-1zM5 87h1v1h-1zM26 83h1v1h-1zM96 81h1v1h-1zM130 71h1v1h-1zM101 80h1v1h-1zM130 81h1v1h-1zM16 70h1v1h-1zM103 81h1v1h-1zM24 85h1v1h-1zM76 88h1v1h-1zM17 85h1v1h-1zM91 81h1v1h-1zM122 84h1v1h-1zM44 84h1v1h-1zM118 87h1v1h-1zM35 68h1v1h-1zM109 88h1v1h-1zM84 74h1v1h-1zM125 88h1v1h-1zM46 72h1v1h-1zM98 73h1v1h-1zM88 65h1v1h-1zM83 72h1v1h-1zM79 70h1v1h-1zM129 76h1v1h-1zM91 83h1v1h-1zM21 73h1v1h-1zM62 75h1v1h-1zM72 58h1v1h-1zM26 74h1v1h-1zM126 65h1v1h-1zM20 82h1v1h-1zM26 83h1v1h-1zM100 85h1v1h-1zM36 82h1v1h-1zM126 81h1v1h-1zM5 80h1v1h-1zM22 86h1v1h-1zM71 87h1v1h-1zM31 70h1v1h-1zM25 81h1v1h-1zM103 65h1v1h-1zM85 77h1v1h-1zM31 75h1v1h-1zM57 65h1v1h-1zM56 72h1v1h-1zM98 88h1v1h-1zM15 87h1v1h-1zM104 77h1v1h-1zM74 73h1v1h-1zM53 87h1v1h-1zM104 80h1v1h-1zM33 78h1v1h-1zM50 69h1v1h-1zM6 61h1v1h-1zM33 81h1v1h-1zM10 80h1v1h-1zM6 66h1v1h-1zM99 83h1v1h-1zM24 85h1v1h-1zM18 82h1v1h-1zM112 78h1v1h-1zM119 88h1v1h-1zM69 70h1v1h-1zM37 59h1v1h-1zM16 82h1v1h-1zM103 86h1v1h-1zM29 70h1v1h-1zM33 88h1v1h-1zM97 86h1v1h-1zM5 83h1v1h-1zM27 82h1v1h-1zM43 71h1v1h-1zM81 86h1v1h-1zM97 75h1v1h-1zM51 86h1v1h-1zM32 87h1v1h-1zM13 86h1v1h-1zM63 82h1v1h-1zM125 85h1v1h-1zM42 84h1v1h-1zM107 87h1v1h-1zM59 69h1v1h-1zM94 79h1v1h-1zM81 88h1v1h-1zM15 60h1v1h-1zM118 85h1v1h-1zM34 81h1v1h-1zM118 72h1v1h-1zM80 77h1v1h-1zM112 87h1v1h-1zM7 79h1v1h-1zM108 87h1v1h-1zM14 76h1v1h-1zM103 60h1v1h-1zM66 75h1v1h-1zM104 77h1v1h-1zM124 85h1v1h-1zM10 68h1v1h-1zM34 78h1v1h-1zM41 88h1v1h-1zM123 86h1v1h-1zM107 85h1v1h-1zM110 77h1v1h-1zM126 81h1v1h-1zM65 57h1v1h-1zM59 85h1v1h-1zM88 67h1v1h-1zM83 64h1v1h-1zM127 82h1v1h-1zM26 85h1v1h-1zM51 77h1v1h-1zM38 60h1v1h-1zM20 74h1v1h-1zM105 77h1v1h-1zM73 62h1v1h-1zM22 88h1v1h-1zM115 84h1v1h-1zM5 82h1v1h-1zM98 77h1v1h-1zM66 86h1v1h-1zM43 74h1v1h-1zM66 81h1v1h-1zM87 87h1v1h-1zM53 83h1v1h-1zM2 77h1v1h-1zM113 78h1v1h-1zM87 86h1v1h-1zM119 78h1v1h-1zM93 86h1v1h-1zM63 75h1v1h-1zM39 83h1v1h-1zM30 72h1v1h-1zM59 78h1v1h-1zM66 76h1v1h-1zM77 78h1v1h-1zM118 88h1v1h-1zM29 79h1v1h-1zM37 81h1v1h-1zM129 84h1v1h-1zM121 82h1v1h-1zM24 67h1v1h-1zM53 83h1v1h-1zM65 80h1v1h-1zM42 73h1v1h-1zM117 76h1v1h-1zM46 78h1v1h-1zM128 75h1v1h-1zM6 73h1v1h-1zM80 69h1v1h-1zM96 67h1v1h-1zM69 84h1v1h-1zM3 84h1v1h-1zM39 70h1v1h-1zM69 87h1v1h-1zM130 88h1v1h-1zM27 83h1v1h-1zM30 78h1v1h-1zM12 79h1v1h-1zM30 71h1v1h-1zM73 86h1v1h-1zM121 84h1v1h-1zM111 88h1v1h-1zM78 83h1v1h-1zM5 64h1v1h-1zM103 81h1v1h-1zM37 79h1v1h-1zM75 69h1v1h-1zM117 87h1v1h-1zM41 85h1v1h-1zM87 86h1v1h-1zM15 66h1v1h-1zM31 87h1v1h-1zM29 80h1v1h-1zM60 88h1v1h-1zM47 75h1v1h-1zM0 82h1v1h-1zM127 79h1v1h-1zM10 88h1v1h-1zM20 80h1v1h-1zM84 78h1v1h-1zM119 73h1v1h-1zM126 83h1v1h-1zM106 84h1v1h-1zM7 84h1v1h-1zM13 81h1v1h-1zM17 64h1v1h-1zM55 88h1v1h-1zM115 86h1v1h-1zM102 86h1v1h-1zM103 72h1v1h-1zM69 77h1v1h-1zM120 83h1v1h-1zM41 84h1v1h-1zM116 83h1v1h-1zM19 85h1v1h-1zM53 88h1v1h-1zM99 87h1v1h-1zM16 85h1v1h-1zM39 76h1v1h-1zM68 86h1v1h-1zM15 66h1v1h-1zM98 62h1v1h-1z"/><path fill="#d02030" d="M30 51h1v1h-1zM96 54h1v1h-1zM48 51h1v1h-1zM26 52h1v1h-1zM117 46h1v1h-1zM34 47h1v1h-1zM10 50h1v1h-1zM69 56h1v1h-1zM50 54h1v1h-1zM123 48h1v1h-1zM85 46h1v1h-1zM84 56h1v1h-1zM115 39h1v1h-1zM121 36h1v1h-1zM12 44h1v1h-1zM23 53h1v1h-1zM30 57h1v1h-1zM36 40h1v1h-1zM48 54h1v1h-1zM100 50h1v1h-1zM92 53h1v1h-1zM71 53h1v1h-1zM76 48h1v1h-1zM37 43h1v1h-1zM111 52h1v1h-1zM22 48h1v1h-1zM60 52h1v1h-1zM20 45h1v1h-1zM105 43h1v1h-1zM105 42h1v1h-1zM47 43h1v1h-1zM99 56h1v1h-1zM69 57h1v1h-1zM66 37h1v1h-1zM51 46h1v1h-1z"/><path fill="#ff7018" d="M100 77h1v1h-1zM91 66h1v1h-1zM94 70h1v1h-1zM123 56h1v1h-1zM78 87h1v1h-1zM75 63h1v1h-1zM7 87h1v1h-1zM50 65h1v1h-1zM49 70h1v1h-1zM71 87h1v1h-1zM28 80h1v1h-1zM31 82h1v1h-1zM47 81h1v1h-1zM128 78h1v1h-1zM108 71h1v1h-1zM9 54h1v1h-1zM113 77h1v1h-1zM78 78h1v1h-1zM61 82h1v1h-1zM81 86h1v1h-1zM78 84h1v1h-1zM101 84h1v1h-1zM99 70h1v1h-1zM23 79h1v1h-1zM87 60h1v1h-1zM85 86h1v1h-1zM30 84h1v1h-1zM58 81h1v1h-1zM99 82h1v1h-1zM109 79h1v1h-1zM44 79h1v1h-1zM61 88h1v1h-1zM57 76h1v1h-1zM125 81h1v1h-1zM62 68h1v1h-1zM87 55h1v1h-1zM18 76h1v1h-1zM73 77h1v1h-1zM14 79h1v1h-1zM63 65h1v1h-1zM51 84h1v1h-1zM76 87h1v1h-1zM2 83h1v1h-1zM54 88h1v1h-1zM130 74h1v1h-1zM42 79h1v1h-1zM128 78h1v1h-1zM122 40h1v1h-1zM126 54h1v1h-1zM25 72h1v1h-1zM5 77h1v1h-1zM69 77h1v1h-1zM13 74h1v1h-1zM45 80h1v1h-1zM66 85h1v1h-1zM125 76h1v1h-1zM68 81h1v1h-1zM89 85h1v1h-1zM71 66h1v1h-1zM12 87h1v1h-1zM11 64h1v1h-1zM46 85h1v1h-1zM65 51h1v1h-1zM7 81h1v1h-1zM92 80h1v1h-1zM41 63h1v1h-1zM80 81h1v1h-1zM112 61h1v1h-1zM2 84h1v1h-1zM35 88h1v1h-1zM10 51h1v1h-1zM31 72h1v1h-1zM118 79h1v1h-1zM108 71h1v1h-1zM30 84h1v1h-1zM27 53h1v1h-1zM33 68h1v1h-1zM78 66h1v1h-1zM129 67h1v1h-1zM4 74h1v1h-1zM87 67h1v1h-1zM14 69h1v1h-1zM108 83h1v1h-1zM21 87h1v1h-1zM11 88h1v1h-1zM87 74h1v1h-1zM126 69h1v1h-1zM124 87h1v1h-1zM77 80h1v1h-1zM86 74h1v1h-1zM15 87h1v1h-1zM103 74h1v1h-1zM101 71h1v1h-1zM130 67h1v1h-1zM88 80h1v1h-1zM58 78h1v1h-1zM38 83h1v1h-1zM110 69h1v1h-1zM55 83h1v1h-1zM39 85h1v1h-1zM123 79h1v1h-1zM2 80h1v1h-1zM124 78h1v1h-1zM130 77h1v1h-1zM110 72h1v1h-1zM12 80h1v1h-1zM80 84h1v1h-1zM108 80h1v1h-1zM36 64h1v1h-1zM117 63h1v1h-1zM5 28h1v1h-1zM16 73h1v1h-1zM86 82h1v1h-1zM40 81h1v1h-1zM70 68h1v1h-1zM67 70h1v1h-1zM98 88h1v1h-1zM7 86h1v1h-1zM99 86h1v1h-1zM91 88h1v1h-1zM100 75h1v1h-1zM128 76h1v1h-1zM124 85h1v1h-1zM2 88h1v1h-1zM30 82h1v1h-1zM95 69h1v1h-1zM23 88h1v1h-1zM42 83h1v1h-1zM81 76h1v1h-1zM1 87h1v1h-1zM98 86h1v1h-1zM94 83h1v1h-1zM112 79h1v1h-1zM29 65h1v1h-1zM95 87h1v1h-1zM55 36h1v1h-1zM22 58h1v1h-1zM15 86h1v1h-1zM79 86h1v1h-1zM106 81h1v1h-1zM112 74h1v1h-1zM63 87h1v1h-1zM48 79h1v1h-1zM15 74h1v1h-1zM121 73h1v1h-1zM112 77h1v1h-1zM37 67h1v1h-1zM102 86h1v1h-1zM34 83h1v1h-1zM107 82h1v1h-1zM60 79h1v1h-1zM106 78h1v1h-1zM1 80h1v1h-1zM118 79h1v1h-1zM43 86h1v1h-1zM62 80h1v1h-1zM46 73h1v1h-1zM68 82h1v1h-1zM47 77h1v1h-1zM119 76h1v1h-1zM75 71h1v1h-1zM85 85h1v1h-1zM111 76h1v1h-1zM119 82h1v1h-1zM35 71h1v1h-1zM103 80h1v1h-1zM96 57h1v1h-1zM123 67h1v1h-1zM49 63h1v1h-1zM22 85h1v1h-1zM78 87h1v1h-1zM125 84h1v1h-1zM91 70h1v1h-1zM101 58h1v1h-1zM78 77h1v1h-1zM17 80h1v1h-1zM58 81h1v1h-1zM102 76h1v1h-1zM77 88h1v1h-1zM25 86h1v1h-1zM12 74h1v1h-1zM1 74h1v1h-1zM4 59h1v1h-1zM56 73h1v1h-1zM98 84h1v1h-1zM58 78h1v1h-1zM122 73h1v1h-1zM65 78h1v1h-1zM62 82h1v1h-1zM116 83h1v1h-1zM95 50h1v1h-1zM2 79h1v1h-1zM85 85h1v1h-1zM115 78h1v1h-1zM40 85h1v1h-1zM36 62h1v1h-1zM113 86h1v1h-1zM33 82h1v1h-1zM71 84h1v1h-1zM23 80h1v1h-1zM126 77h1v1h-1zM3 76h1v1h-1zM109 81h1v1h-1zM44 84h1v1h-1zM2 88h1v1h-1zM81 84h1v1h-1zM23 78h1v1h-1zM49 82h1v1h-1zM43 45h1v1h-1zM44 60h1v1h-1zM102 65h1v1h-1zM75 85h1v1h-1zM28 77h1v1h-1zM96 85h1v1h-1zM83 76h1v1h-1zM124 79h1v1h-1zM107 78h1v1h-1zM35 77h1v1h-1zM54 75h1v1h-1zM9 88h1v1h-1zM5 88h1v1h-1zM12 57h1v1h-1zM108 78h1v1h-1zM35 83h1v1h-1zM42 84h1v1h-1zM119 85h1v1h-1zM125 87h1v1h-1zM26 66h1v1h-1zM53 55h1v1h-1zM93 79h1v1h-1zM53 48h1v1h-1zM87 76h1v1h-1zM16 74h1v1h-1zM64 85h1v1h-1zM79 80h1v1h-1zM1 87h1v1h-1zM120 64h1v1h-1zM127 68h1v1h-1zM15 83h1v1h-1zM84 86h1v1h-1zM90 88h1v1h-1zM118 59h1v1h-1zM69 84h1v1h-1zM85 88h1v1h-1zM22 76h1v1h-1zM121 85h1v1h-1zM128 60h1v1h-1zM38 80h1v1h-1zM12 82h1v1h-1zM93 79h1v1h-1zM117 79h1v1h-1zM117 87h1v1h-1zM117 61h1v1h-1zM64 85h1v1h-1zM79 72h1v1h-1zM14 87h1v1h-1zM7 79h1v1h-1zM44 51h1v1h-1zM95 60h1v1h-1zM18 61h1v1h-1zM30 85h1v1h-1zM118 86h1v1h-1zM105 73h1v1h-1zM6 82h1v1h-1zM59 46h1v1h-1zM112 84h1v1h-1zM40 73h1v1h-1zM55 72h1v1h-1zM91 83h1v1h-1zM1 76h1v1h-1zM27 88h1v1h-1zM26 76h1v1h-1zM43 80h1v1h-1zM2 57h1v1h-1zM105 59h1v1h-1zM118 75h1v1h-1zM37 86h1v1h-1zM41 71h1v1h-1zM124 76h1v1h-1zM39 85h1v1h-1zM55 84h1v1h-1zM94 58h1v1h-1zM37 69h1v1h-1zM10 85h1v1h-1zM76 67h1v1h-1zM65 88h1v1h-1zM89 86h1v1h-1zM2 71h1v1h-1zM17 73h1v1h-1zM123 88h1v1h-1zM28 66h1v1h-1zM14 74h1v1h-1zM49 67h1v1h-1zM53 88h1v1h-1zM58 81h1v1h-1zM113 74h1v1h-1zM79 74h1v1h-1zM104 69h1v1h-1zM75 63h1v1h-1zM105 76h1v1h-1zM36 77h1v1h-1zM87 73h1v1h-1zM54 82h1v1h-1zM26 46h1v1h-1zM89 80h1v1h-1zM44 85h1v1h-1zM68 77h1v1h-1zM23 66h1v1h-1zM66 80h1v1h-1zM83 88h1v1h-1zM110 58h1v1h-1zM46 78h1v1h-1zM55 83h1v1h-1zM113 77h1v1h-1zM80 61h1v1h-1zM60 88h1v1h-1zM103 75h1v1h-1zM122 84h1v1h-1zM47 88h1v1h-1zM67 44h1v1h-1zM90 82h1v1h-1zM2 73h1v1h-1zM99 69h1v1h-1zM96 86h1v1h-1zM28 63h1v1h-1zM34 88h1v1h-1zM7 78h1v1h-1zM15 61h1v1h-1zM110 87h1v1h-1zM130 67h1v1h-1zM3 86h1v1h-1zM62 78h1v1h-1zM34 56h1v1h-1zM31 77h1v1h-1zM17 88h1v1h-1zM73 69h1v1h-1zM9 63h1v1h-1zM126 88h1v1h-1zM93 79h1v1h-1zM62 84h1v1h-1zM36 80h1v1h-1zM117 67h1v1h-1zM49 79h1v1h-1zM36 75h1v1h-1zM10 84h1v1h-1zM69 79h1v1h-1zM38 83h1v1h-1zM103 86h1v1h-1zM116 83h1v1h-1zM59 77h1v1h-1zM121 83h1v1h-1zM65 88h1v1h-1zM59 57h1v1h-1zM108 78h1v1h-1zM29 62h1v1h-1zM117 79h1v1h-1zM77 82h1v1h-1zM111 62h1v1h-1zM58 66h1v1h-1zM74 80h1v1h-1zM103 76h1v1h-1zM29 65h1v1h-1zM46 81h1v1h-1zM31 81h1v1h-1zM124 88h1v1h-1zM34 85h1v1h-1zM83 75h1v1h-1zM106 76h1v1h-1zM126 85h1v1h-1zM23 72h1v1h-1zM92 77h1v1h-1zM17 67h1v1h-1zM82 70h1v1h-1zM100 82h1v1h-1zM39 72h1v1h-1zM129 64h1v1h-1zM63 87h1v1h-1zM47 71h1v1h-1zM24 85h1v1h-1zM87 86h1v1h-1zM37 23h1v1h-1zM16 79h1v1h-1zM107 74h1v1h-1zM19 83h1v1h-1zM101 87h1v1h-1zM65 66h1v1h-1zM2 85h1v1h-1zM63 75h1v1h-1zM115 68h1v1h-1zM86 79h1v1h-1zM34 86h1v1h-1zM48 85h1v1h-1zM17 73h1v1h-1zM80 86h1v1h-1zM31 81h1v1h-1zM3 76h1v1h-1zM9 79h1v1h-1zM23 74h1v1h-1zM15 88h1v1h-1zM64 80h1v1h-1zM8 77h1v1h-1zM37 85h1v1h-1zM37 74h1v1h-1zM58 56h1v1h-1zM25 87h1v1h-1zM72 62h1v1h-1zM46 76h1v1h-1zM46 45h1v1h-1zM114 88h1v1h-1zM105 82h1v1h-1zM49 81h1v1h-1zM104 88h1v1h-1zM39 80h1v1h-1zM90 71h1v1h-1zM2 82h1v1h-1zM117 87h1v1h-1zM37 88h1v1h-1zM66 88h1v1h-1zM129 81h1v1h-1zM51 79h1v1h-1zM12 79h1v1h-1zM75 85h1v1h-1zM1 79h1v1h-1zM69 85h1v1h-1zM119 84h1v1h-1zM75 73h1v1h-1zM102 76h1v1h-1zM102 62h1v1h-1zM126 80h1v1h-1zM60 71h1v1h-1zM73 83h1v1h-1zM63 79h1v1h-1zM51 62h1v1h-1zM128 88h1v1h-1zM22 69h1v1h-1zM56 86h1v1h-1zM26 87h1v1h-1zM85 83h1v1h-1zM28 88h1v1h-1zM119 86h1v1h-1zM117 88h1v1h-1zM129 83h1v1h-1zM54 85h1v1h-1zM83 66h1v1h-1zM111 65h1v1h-1zM82 56h1v1h-1zM73 83h1v1h-1zM110 76h1v1h-1zM20 84h1v1h-1zM75 70h1v1h-1zM39 88h1v1h-1zM6 87h1v1h-1zM27 79h1v1h-1zM73 84h1v1h-1zM98 85h1v1h-1zM97 56h1v1h-1zM19 88h1v1h-1zM53 68h1v1h-1zM98 87h1v1h-1zM39 87h1v1h-1zM32 79h1v1h-1zM26 71h1v1h-1zM92 88h1v1h-1zM114 85h1v1h-1zM35 79h1v1h-1zM56 76h1v1h-1zM126 79h1v1h-1zM80 82h1v1h-1zM87 79h1v1h-1zM47 67h1v1h-1zM15 88h1v1h-1zM77 70h1v1h-1zM72 77h1v1h-1zM28 71h1v1h-1zM31 83h1v1h-1zM37 80h1v1h-1zM111 85h1v1h-1zM57 82h1v1h-1zM78 60h1v1h-1zM121 72h1v1h-1zM20 81h1v1h-1zM65 85h1v1h-1zM37 82h1v1h-1zM81 64h1v1h-1zM105 85h1v1h-1zM78 69h1v1h-1zM115 53h1v1h-1zM88 81h1v1h-1zM114 81h1v1h-1zM41 80h1v1h-1zM93 85h1v1h-1zM61 73h1v1h-1zM81 70h1v1h-1zM53 69h1v1h-1zM110 82h1v1h-1zM116 62h1v1h-1zM97 84h1v1h-1zM85 82h1v1h-1zM1 75h1v1h-1zM21 68h1v1h-1zM9 73h1v1h-1zM101 79h1v1h-1zM35 79h1v1h-1zM112 81h1v1h-1zM107 70h1v1h-1zM86 87h1v1h-1zM128 84h1v1h-1zM8 76h1v1h-1zM0 86h1v1h-1zM9 87h1v1h-1zM64 82h1v1h-1zM62 79h1v1h-1zM117 57h1v1h-1zM25 77h1v1h-1zM109 68h1v1h-1zM70 88h1v1h-1zM35 87h1v1h-1zM104 86h1v1h-1zM70 87h1v1h-1zM36 75h1v1h-1zM34 59h1v1h-1zM97 85h1v1h-1zM86 73h1v1h-1zM28 78h1v1h-1zM11 74h1v1h-1zM128 82h1v1h-1zM100 75h1v1h-1zM71 75h1v1h-1zM84 87h1v1h-1zM63 81h1v1h-1zM3 82h1v1h-1zM39 87h1v1h-1zM21 74h1v1h-1zM104 74h1v1h-1zM124 75h1v1h-1zM15 74h1v1h-1zM100 77h1v1h-1zM113 75h1v1h-1zM62 86h1v1h-1zM82 78h1v1h-1zM17 81h1v1h-1zM74 83h1v1h-1zM120 82h1v1h-1zM77 75h1v1h-1zM126 75h1v1h-1zM5 82h1v1h-1zM72 51h1v1h-1zM64 56h1v1h-1zM68 80h1v1h-1zM102 53h1v1h-1zM51 82h1v1h-1zM41 76h1v1h-1zM33 79h1v1h-1zM109 81h1v1h-1zM57 75h1v1h-1zM100 81h1v1h-1zM51 62h1v1h-1zM119 71h1v1h-1zM33 87h1v1h-1zM82 77h1v1h-1zM45 65h1v1h-1zM44 82h1v1h-1zM31 61h1v1h-1zM46 79h1v1h-1zM17 87h1v1h-1zM1 55h1v1h-1zM30 73h1v1h-1zM99 83h1v1h-1zM44 73h1v1h-1zM22 85h1v1h-1zM70 82h1v1h-1zM114 62h1v1h-1zM92 86h1v1h-1zM95 78h1v1h-1zM112 86h1v1h-1zM57 81h1v1h-1zM97 79h1v1h-1zM10 80h1v1h-1zM118 79h1v1h-1zM52 70h1v1h-1zM76 86h1v1h-1zM11 80h1v1h-1zM81 88h1v1h-1zM44 87h1v1h-1z"/><path fill="#ffe070" d="M53 85h1v1h-1zM38 80h1v1h-1zM65 80h1v1h-1zM96 82h1v1h-1zM66 81h1v1h-1zM63 87h1v1h-1zM12 86h1v1h-1zM14 84h1v1h-1zM9 87h1v1h-1zM32 83h1v1h-1zM112 86h1v1h-1zM91 86h1v1h-1zM19 81h1v1h-1zM91 81h1v1h-1zM71 83h1v1h-1zM68 88h1v1h-1zM87 84h1v1h-1zM17 84h1v1h-1zM12 87h1v1h-1zM28 84h1v1h-1zM25 86h1v1h-1zM5 83h1v1h-1zM118 86h1v1h-1zM90 81h1v1h-1zM91 85h1v1h-1zM2 88h1v1h-1zM13 84h1v1h-1zM77 85h1v1h-1zM13 86h1v1h-1zM46 88h1v1h-1zM126 86h1v1h-1zM44 87h1v1h-1zM52 86h1v1h-1zM50 85h1v1h-1zM13 87h1v1h-1zM69 82h1v1h-1zM110 86h1v1h-1zM122 84h1v1h-1zM83 86h1v1h-1zM50 86h1v1h-1zM102 80h1v1h-1zM46 86h1v1h-1zM48 87h1v1h-1zM3 83h1v1h-1zM42 86h1v1h-1zM65 83h1v1h-1zM123 84h1v1h-1zM120 85h1v1h-1zM126 86h1v1h-1zM109 86h1v1h-1zM115 84h1v1h-1zM110 86h1v1h-1zM85 82h1v1h-1zM73 87h1v1h-1zM114 87h1v1h-1zM23 81h1v1h-1zM57 82h1v1h-1zM57 82h1v1h-1zM122 87h1v1h-1zM114 87h1v1h-1zM89 86h1v1h-1zM17 81h1v1h-1zM34 87h1v1h-1zM32 87h1v1h-1zM62 82h1v1h-1zM17 85h1v1h-1zM60 87h1v1h-1zM63 87h1v1h-1zM66 84h1v1h-1zM86 83h1v1h-1zM29 84h1v1h-1zM53 83h1v1h-1zM30 84h1v1h-1zM68 88h1v1h-1zM91 87h1v1h-1zM70 80h1v1h-1zM46 85h1v1h-1zM11 82h1v1h-1zM44 85h1v1h-1zM19 87h1v1h-1zM51 88h1v1h-1zM90 87h1v1h-1zM92 80h1v1h-1zM98 83h1v1h-1zM81 84h1v1h-1zM23 87h1v1h-1zM123 84h1v1h-1zM21 87h1v1h-1zM0 80h1v1h-1zM123 83h1v1h-1zM92 80h1v1h-1zM103 83h1v1h-1zM23 85h1v1h-1zM89 80h1v1h-1zM89 83h1v1h-1zM57 86h1v1h-1zM113 88h1v1h-1zM30 80h1v1h-1zM80 87h1v1h-1zM50 84h1v1h-1zM51 87h1v1h-1zM14 83h1v1h-1zM4 87h1v1h-1zM105 81h1v1h-1zM58 82h1v1h-1zM96 85h1v1h-1zM83 88h1v1h-1zM78 84h1v1h-1zM123 84h1v1h-1zM104 81h1v1h-1zM1 87h1v1h-1zM77 88h1v1h-1zM13 83h1v1h-1zM86 88h1v1h-1zM66 87h1v1h-1zM59 84h1v1h-1zM76 84h1v1h-1zM82 88h1v1h-1zM83 82h1v1h-1zM110 83h1v1h-1zM62 85h1v1h-1zM99 84h1v1h-1zM128 88h1v1h-1zM122 87h1v1h-1zM91 81h1v1h-1zM27 82h1v1h-1zM76 80h1v1h-1zM95 86h1v1h-1zM116 87h1v1h-1zM35 87h1v1h-1zM9 88h1v1h-1zM45 85h1v1h-1zM7 88h1v1h-1zM74 84h1v1h-1zM69 83h1v1h-1zM72 82h1v1h-1zM57 87h1v1h-1zM13 80h1v1h-1zM19 84h1v1h-1zM12 86h1v1h-1zM110 81h1v1h-1zM114 86h1v1h-1zM66 88h1v1h-1zM92 88h1v1h-1zM26 85h1v1h-1zM93 85h1v1h-1zM122 80h1v1h-1zM87 88h1v1h-1zM46 86h1v1h-1zM50 80h1v1h-1zM118 88h1v1h-1zM100 84h1v1h-1zM114 80h1v1h-1zM39 85h1v1h-1zM59 80h1v1h-1zM28 82h1v1h-1zM18 81h1v1h-1zM2 87h1v1h-1zM102 84h1v1h-1zM120 86h1v1h-1zM126 87h1v1h-1zM94 80h1v1h-1zM9 82h1v1h-1zM60 87h1v1h-1zM29 84h1v1h-1zM109 81h1v1h-1zM124 81h1v1h-1zM121 85h1v1h-1zM97 88h1v1h-1zM109 88h1v1h-1zM13 88h1v1h-1zM57 84h1v1h-1zM124 84h1v1h-1zM21 83h1v1h-1zM119 88h1v1h-1zM66 83h1v1h-1zM15 83h1v1h-1zM37 87h1v1h-1zM23 82h1v1h-1zM105 88h1v1h-1zM105 83h1v1h-1zM20 86h1v1h-1zM27 84h1v1h-1zM47 85h1v1h-1zM105 83h1v1h-1zM42 83h1v1h-1zM113 84h1v1h-1zM19 88h1v1h-1zM76 87h1v1h-1zM79 80h1v1h-1zM31 83h1v1h-1zM49 86h1v1h-1zM73 83h1v1h-1zM119 80h1v1h-1zM26 87h1v1h-1zM53 86h1v1h-1zM104 88h1v1h-1zM105 83h1v1h-1zM57 85h1v1h-1zM113 87h1v1h-1zM50 82h1v1h-1zM39 88h1v1h-1zM48 87h1v1h-1zM27 83h1v1h-1zM48 87h1v1h-1zM64 82h1v1h-1zM37 88h1v1h-1zM47 80h1v1h-1zM39 81h1v1h-1zM55 87h1v1h-1zM85 88h1v1h-1zM93 83h1v1h-1zM58 84h1v1h-1zM4 88h1v1h-1zM5 83h1v1h-1zM77 88h1v1h-1zM55 86h1v1h-1zM115 80h1v1h-1zM79 80h1v1h-1zM124 87h1v1h-1zM73 86h1v1h-1zM127 82h1v1h-1zM88 82h1v1h-1zM120 87h1v1h-1zM125 88h1v1h-1zM6 87h1v1h-1zM57 85h1v1h-1zM114 82h1v1h-1zM67 88h1v1h-1zM114 86h1v1h-1zM130 86h1v1h-1zM54 88h1v1h-1zM53 86h1v1h-1zM83 80h1v1h-1zM104 87h1v1h-1zM102 87h1v1h-1zM15 87h1v1h-1zM58 81h1v1h-1zM31 88h1v1h-1zM121 81h1v1h-1zM100 88h1v1h-1zM94 84h1v1h-1zM85 88h1v1h-1zM44 84h1v1h-1zM32 82h1v1h-1zM24 86h1v1h-1zM99 82h1v1h-1zM100 85h1v1h-1zM14 82h1v1h-1zM116 88h1v1h-1zM121 82h1v1h-1zM19 80h1v1h-1zM110 87h1v1h-1zM94 85h1v1h-1zM50 83h1v1h-1zM73 88h1v1h-1zM103 88h1v1h-1zM80 87h1v1h-1zM20 80h1v1h-1zM32 83h1v1h-1zM23 87h1v1h-1zM87 83h1v1h-1zM72 80h1v1h-1zM126 85h1v1h-1zM46 82h1v1h-1zM72 84h1v1h-1zM57 88h1v1h-1zM118 85h1v1h-1zM86 87h1v1h-1zM127 86h1v1h-1zM126 87h1v1h-1zM55 85h1v1h-1zM108 80h1v1h-1zM93 86h1v1h-1zM118 80h1v1h-1z"/><path fill="#e83020" d="M11 54h1v1h-1zM92 36h1v1h-1zM82 52h1v1h-1zM10 49h1v1h-1zM68 56h1v1h-1zM29 49h1v1h-1zM60 53h1v1h-1zM126 56h1v1h-1zM18 41h1v1h-1zM40 49h1v1h-1zM119 55h1v1h-1zM113 50h1v1h-1zM94 47h1v1h-1zM101 47h1v1h-1zM34 33h1v1h-1zM94 56h1v1h-1zM130 47h1v1h-1zM104 48h1v1h-1zM28 46h1v1h-1zM86 55h1v1h-1zM111 53h1v1h-1zM24 47h1v1h-1zM112 56h1v1h-1zM121 46h1v1h-1zM18 57h1v1h-1z"/></pattern><pattern id="spb" patternUnits="userSpaceOnUse" x="498" y="861" width="131" height="90"><path fill="#ff7018" d="M23 88h1v1h-1zM93 83h1v1h-1zM8 86h1v1h-1zM2 44h1v1h-1zM6 75h1v1h-1zM79 84h1v1h-1zM16 82h1v1h-1zM114 75h1v1h-1zM10 86h1v1h-1zM1 88h1v1h-1zM17 87h1v1h-1zM42 83h1v1h-1zM80 88h1v1h-1zM75 72h1v1h-1zM68 88h1v1h-1zM7 79h1v1h-1zM116 79h1v1h-1zM41 65h1v1h-1zM85 68h1v1h-1zM34 87h1v1h-1zM125 86h1v1h-1zM125 83h1v1h-1zM91 83h1v1h-1zM103 77h1v1h-1zM13 56h1v1h-1zM96 76h1v1h-1zM90 83h1v1h-1zM91 60h1v1h-1zM39 77h1v1h-1zM40 81h1v1h-1zM128 86h1v1h-1zM94 86h1v1h-1zM29 79h1v1h-1zM30 86h1v1h-1zM57 84h1v1h-1zM103 58h1v1h-1zM83 86h1v1h-1zM74 87h1v1h-1zM35 84h1v1h-1zM128 85h1v1h-1zM96 75h1v1h-1zM103 88h1v1h-1zM96 86h1v1h-1zM20 72h1v1h-1zM107 88h1v1h-1zM24 79h1v1h-1zM70 65h1v1h-1zM35 86h1v1h-1zM24 84h1v1h-1zM23 88h1v1h-1zM1 57h1v1h-1zM110 82h1v1h-1zM118 80h1v1h-1zM109 56h1v1h-1zM103 65h1v1h-1zM130 88h1v1h-1zM26 69h1v1h-1zM26 75h1v1h-1zM58 69h1v1h-1zM95 79h1v1h-1zM8 88h1v1h-1zM86 65h1v1h-1zM58 81h1v1h-1zM111 87h1v1h-1zM129 77h1v1h-1zM75 88h1v1h-1zM41 66h1v1h-1zM112 60h1v1h-1zM127 74h1v1h-1zM57 83h1v1h-1zM65 86h1v1h-1zM77 61h1v1h-1zM46 74h1v1h-1zM130 85h1v1h-1zM32 88h1v1h-1zM53 86h1v1h-1zM67 77h1v1h-1zM26 78h1v1h-1zM61 79h1v1h-1zM103 88h1v1h-1zM32 77h1v1h-1zM129 73h1v1h-1zM58 84h1v1h-1zM12 73h1v1h-1zM51 84h1v1h-1zM29 87h1v1h-1zM81 70h1v1h-1zM32 63h1v1h-1zM49 60h1v1h-1zM71 73h1v1h-1zM109 88h1v1h-1zM33 71h1v1h-1zM38 87h1v1h-1zM46 69h1v1h-1zM34 70h1v1h-1zM9 60h1v1h-1zM32 63h1v1h-1zM34 73h1v1h-1zM129 69h1v1h-1zM84 69h1v1h-1zM73 84h1v1h-1zM74 66h1v1h-1zM54 77h1v1h-1zM92 75h1v1h-1zM75 64h1v1h-1zM38 86h1v1h-1zM98 73h1v1h-1zM19 61h1v1h-1zM89 87h1v1h-1zM91 80h1v1h-1zM76 69h1v1h-1zM74 86h1v1h-1zM49 73h1v1h-1zM29 75h1v1h-1zM50 86h1v1h-1zM116 85h1v1h-1zM121 60h1v1h-1zM92 77h1v1h-1zM121 80h1v1h-1zM18 77h1v1h-1zM23 65h1v1h-1zM28 56h1v1h-1zM103 84h1v1h-1zM39 87h1v1h-1zM22 76h1v1h-1zM129 58h1v1h-1zM89 49h1v1h-1zM81 65h1v1h-1zM3 82h1v1h-1zM25 69h1v1h-1zM118 75h1v1h-1zM56 73h1v1h-1zM123 71h1v1h-1zM117 85h1v1h-1zM20 82h1v1h-1zM130 66h1v1h-1zM87 84h1v1h-1zM130 56h1v1h-1zM19 88h1v1h-1zM57 69h1v1h-1zM75 83h1v1h-1zM94 51h1v1h-1zM56 88h1v1h-1zM4 74h1v1h-1zM57 81h1v1h-1zM128 86h1v1h-1zM38 82h1v1h-1zM64 82h1v1h-1zM45 78h1v1h-1zM108 74h1v1h-1zM13 88h1v1h-1zM71 57h1v1h-1zM45 85h1v1h-1zM80 81h1v1h-1zM71 79h1v1h-1zM83 56h1v1h-1zM36 69h1v1h-1zM106 84h1v1h-1zM98 76h1v1h-1zM126 73h1v1h-1zM102 73h1v1h-1zM121 88h1v1h-1zM20 79h1v1h-1zM120 72h1v1h-1zM20 72h1v1h-1zM69 86h1v1h-1zM16 79h1v1h-1zM92 72h1v1h-1zM70 82h1v1h-1zM106 83h1v1h-1zM50 74h1v1h-1zM33 67h1v1h-1zM1 72h1v1h-1zM124 47h1v1h-1zM75 79h1v1h-1zM56 81h1v1h-1zM23 87h1v1h-1zM34 82h1v1h-1zM11 88h1v1h-1zM51 84h1v1h-1zM84 83h1v1h-1zM123 85h1v1h-1zM42 87h1v1h-1zM81 71h1v1h-1zM78 81h1v1h-1zM54 85h1v1h-1zM35 78h1v1h-1zM25 85h1v1h-1zM89 77h1v1h-1zM20 67h1v1h-1zM63 75h1v1h-1zM87 75h1v1h-1zM67 64h1v1h-1zM3 74h1v1h-1zM50 81h1v1h-1zM63 83h1v1h-1zM4 68h1v1h-1zM61 87h1v1h-1zM25 85h1v1h-1zM111 88h1v1h-1zM84 77h1v1h-1zM102 81h1v1h-1zM78 85h1v1h-1zM114 85h1v1h-1zM95 82h1v1h-1zM89 66h1v1h-1zM12 88h1v1h-1zM74 79h1v1h-1zM16 81h1v1h-1zM52 77h1v1h-1zM96 80h1v1h-1zM130 85h1v1h-1zM65 80h1v1h-1zM125 83h1v1h-1zM16 87h1v1h-1zM121 87h1v1h-1zM9 69h1v1h-1zM17 80h1v1h-1zM36 86h1v1h-1zM66 86h1v1h-1zM112 60h1v1h-1zM30 84h1v1h-1zM9 61h1v1h-1zM38 73h1v1h-1zM46 39h1v1h-1zM12 80h1v1h-1zM62 65h1v1h-1zM123 78h1v1h-1zM0 61h1v1h-1zM40 83h1v1h-1zM41 87h1v1h-1zM95 78h1v1h-1zM117 85h1v1h-1zM74 86h1v1h-1zM101 76h1v1h-1zM86 69h1v1h-1zM126 88h1v1h-1zM6 85h1v1h-1zM73 86h1v1h-1zM14 88h1v1h-1zM28 40h1v1h-1zM78 85h1v1h-1zM83 83h1v1h-1zM83 72h1v1h-1zM82 88h1v1h-1zM123 81h1v1h-1zM0 74h1v1h-1zM35 70h1v1h-1zM39 88h1v1h-1zM62 80h1v1h-1zM109 57h1v1h-1zM11 78h1v1h-1zM1 82h1v1h-1zM90 81h1v1h-1zM70 85h1v1h-1zM104 88h1v1h-1zM47 87h1v1h-1zM2 79h1v1h-1zM53 88h1v1h-1zM108 69h1v1h-1zM107 88h1v1h-1zM103 84h1v1h-1zM120 79h1v1h-1zM61 80h1v1h-1zM8 86h1v1h-1zM52 86h1v1h-1zM83 88h1v1h-1zM99 72h1v1h-1zM46 87h1v1h-1zM73 72h1v1h-1zM27 88h1v1h-1zM89 79h1v1h-1zM24 64h1v1h-1zM28 66h1v1h-1zM5 67h1v1h-1zM66 79h1v1h-1zM3 86h1v1h-1zM45 73h1v1h-1zM121 76h1v1h-1zM64 85h1v1h-1zM110 88h1v1h-1zM72 59h1v1h-1zM95 73h1v1h-1zM101 83h1v1h-1zM34 67h1v1h-1zM22 54h1v1h-1zM13 88h1v1h-1zM120 80h1v1h-1zM49 75h1v1h-1zM110 88h1v1h-1zM94 67h1v1h-1zM127 83h1v1h-1zM29 82h1v1h-1zM93 83h1v1h-1zM98 83h1v1h-1zM49 59h1v1h-1zM33 64h1v1h-1zM102 84h1v1h-1zM108 54h1v1h-1zM67 71h1v1h-1zM19 76h1v1h-1zM105 45h1v1h-1zM9 88h1v1h-1zM41 68h1v1h-1zM81 78h1v1h-1zM88 87h1v1h-1zM16 84h1v1h-1zM66 56h1v1h-1zM107 77h1v1h-1zM93 65h1v1h-1zM60 81h1v1h-1zM96 65h1v1h-1zM62 84h1v1h-1zM29 81h1v1h-1zM114 82h1v1h-1zM67 77h1v1h-1zM126 85h1v1h-1zM9 73h1v1h-1zM23 78h1v1h-1zM113 88h1v1h-1zM20 66h1v1h-1zM125 81h1v1h-1zM70 78h1v1h-1zM83 71h1v1h-1zM121 73h1v1h-1zM114 81h1v1h-1zM120 88h1v1h-1zM123 68h1v1h-1zM50 74h1v1h-1zM16 84h1v1h-1zM98 79h1v1h-1zM75 73h1v1h-1zM23 82h1v1h-1zM15 80h1v1h-1zM26 62h1v1h-1zM2 75h1v1h-1zM49 80h1v1h-1zM29 77h1v1h-1zM125 77h1v1h-1zM104 79h1v1h-1zM62 86h1v1h-1zM19 82h1v1h-1zM90 77h1v1h-1zM90 78h1v1h-1zM124 76h1v1h-1zM23 74h1v1h-1zM127 80h1v1h-1zM121 83h1v1h-1zM28 76h1v1h-1zM61 78h1v1h-1zM30 46h1v1h-1zM45 77h1v1h-1zM69 80h1v1h-1zM121 75h1v1h-1zM130 88h1v1h-1zM88 81h1v1h-1zM86 66h1v1h-1zM109 86h1v1h-1zM48 84h1v1h-1zM114 84h1v1h-1zM33 76h1v1h-1zM18 87h1v1h-1zM92 67h1v1h-1zM104 87h1v1h-1zM69 75h1v1h-1zM24 85h1v1h-1zM97 64h1v1h-1zM91 70h1v1h-1zM8 86h1v1h-1zM62 81h1v1h-1zM84 88h1v1h-1zM51 67h1v1h-1zM96 78h1v1h-1zM124 86h1v1h-1zM125 55h1v1h-1zM31 79h1v1h-1zM20 74h1v1h-1zM114 82h1v1h-1zM50 88h1v1h-1zM80 87h1v1h-1zM126 71h1v1h-1zM52 57h1v1h-1zM9 87h1v1h-1zM69 86h1v1h-1zM89 63h1v1h-1zM79 85h1v1h-1zM124 78h1v1h-1zM45 87h1v1h-1zM16 50h1v1h-1zM63 80h1v1h-1zM90 86h1v1h-1zM29 78h1v1h-1zM87 86h1v1h-1zM129 76h1v1h-1zM78 68h1v1h-1zM121 86h1v1h-1zM88 86h1v1h-1zM47 88h1v1h-1zM124 50h1v1h-1zM57 86h1v1h-1zM75 72h1v1h-1zM29 87h1v1h-1zM13 65h1v1h-1zM9 85h1v1h-1zM50 71h1v1h-1zM60 61h1v1h-1zM48 56h1v1h-1zM28 81h1v1h-1zM11 87h1v1h-1zM37 84h1v1h-1zM56 69h1v1h-1zM78 88h1v1h-1zM65 82h1v1h-1zM88 82h1v1h-1zM98 81h1v1h-1zM54 82h1v1h-1zM113 86h1v1h-1zM105 64h1v1h-1zM125 85h1v1h-1zM114 88h1v1h-1zM128 80h1v1h-1zM84 77h1v1h-1zM45 71h1v1h-1zM111 78h1v1h-1zM88 66h1v1h-1zM3 80h1v1h-1zM29 80h1v1h-1zM46 81h1v1h-1zM108 86h1v1h-1zM73 87h1v1h-1zM125 74h1v1h-1zM20 67h1v1h-1zM26 78h1v1h-1zM5 85h1v1h-1zM120 85h1v1h-1zM109 78h1v1h-1zM47 88h1v1h-1zM92 73h1v1h-1zM74 58h1v1h-1zM109 56h1v1h-1zM19 76h1v1h-1zM119 54h1v1h-1zM8 87h1v1h-1zM106 81h1v1h-1zM46 81h1v1h-1zM89 80h1v1h-1zM122 63h1v1h-1zM29 73h1v1h-1zM31 57h1v1h-1zM35 85h1v1h-1zM48 65h1v1h-1zM79 72h1v1h-1zM69 66h1v1h-1zM125 67h1v1h-1zM36 67h1v1h-1zM79 80h1v1h-1zM70 61h1v1h-1zM3 85h1v1h-1zM130 59h1v1h-1zM46 85h1v1h-1zM31 68h1v1h-1zM108 78h1v1h-1zM2 85h1v1h-1zM117 70h1v1h-1zM80 70h1v1h-1zM102 83h1v1h-1zM73 84h1v1h-1zM75 59h1v1h-1zM97 63h1v1h-1zM5 83h1v1h-1zM104 74h1v1h-1zM56 67h1v1h-1zM20 69h1v1h-1zM95 72h1v1h-1zM21 51h1v1h-1zM57 69h1v1h-1zM103 85h1v1h-1zM61 87h1v1h-1zM105 81h1v1h-1zM39 66h1v1h-1zM105 87h1v1h-1zM90 73h1v1h-1zM11 67h1v1h-1zM23 64h1v1h-1zM106 88h1v1h-1zM12 86h1v1h-1zM74 82h1v1h-1zM7 76h1v1h-1zM107 82h1v1h-1zM72 82h1v1h-1zM36 59h1v1h-1zM115 86h1v1h-1zM80 78h1v1h-1zM97 72h1v1h-1zM30 49h1v1h-1zM91 76h1v1h-1zM64 84h1v1h-1zM45 79h1v1h-1zM71 49h1v1h-1zM21 73h1v1h-1zM85 69h1v1h-1zM108 82h1v1h-1zM121 57h1v1h-1zM73 87h1v1h-1zM15 85h1v1h-1zM50 83h1v1h-1zM10 85h1v1h-1zM45 79h1v1h-1zM120 78h1v1h-1zM124 77h1v1h-1zM27 77h1v1h-1zM35 79h1v1h-1zM77 88h1v1h-1zM51 83h1v1h-1zM118 70h1v1h-1zM74 74h1v1h-1zM61 81h1v1h-1zM84 87h1v1h-1zM32 65h1v1h-1zM115 82h1v1h-1zM105 71h1v1h-1zM78 76h1v1h-1zM76 69h1v1h-1zM54 57h1v1h-1zM54 85h1v1h-1zM78 86h1v1h-1zM73 84h1v1h-1zM4 73h1v1h-1zM33 87h1v1h-1zM37 88h1v1h-1zM26 61h1v1h-1zM23 74h1v1h-1zM109 74h1v1h-1zM114 74h1v1h-1zM17 81h1v1h-1zM57 70h1v1h-1zM39 82h1v1h-1zM126 88h1v1h-1zM60 74h1v1h-1zM98 78h1v1h-1zM113 88h1v1h-1zM46 87h1v1h-1zM66 75h1v1h-1zM9 71h1v1h-1zM63 64h1v1h-1zM106 81h1v1h-1zM46 54h1v1h-1zM61 83h1v1h-1zM64 88h1v1h-1zM43 87h1v1h-1zM96 72h1v1h-1zM21 39h1v1h-1zM119 50h1v1h-1zM91 73h1v1h-1zM29 74h1v1h-1zM75 83h1v1h-1zM58 52h1v1h-1zM27 78h1v1h-1zM106 84h1v1h-1zM124 83h1v1h-1zM55 83h1v1h-1zM97 57h1v1h-1zM110 87h1v1h-1zM125 65h1v1h-1zM52 63h1v1h-1zM61 85h1v1h-1zM122 81h1v1h-1zM71 74h1v1h-1zM102 74h1v1h-1zM100 78h1v1h-1zM0 76h1v1h-1zM37 83h1v1h-1zM23 50h1v1h-1zM22 73h1v1h-1zM40 85h1v1h-1zM17 74h1v1h-1zM20 80h1v1h-1zM117 75h1v1h-1zM68 80h1v1h-1zM51 76h1v1h-1zM5 76h1v1h-1zM62 86h1v1h-1zM53 81h1v1h-1zM82 44h1v1h-1zM5 66h1v1h-1zM39 84h1v1h-1zM115 85h1v1h-1zM12 65h1v1h-1zM8 88h1v1h-1zM15 74h1v1h-1zM101 66h1v1h-1zM27 79h1v1h-1zM40 87h1v1h-1zM1 69h1v1h-1zM60 82h1v1h-1zM50 42h1v1h-1zM29 71h1v1h-1zM50 84h1v1h-1zM96 79h1v1h-1zM83 74h1v1h-1zM125 87h1v1h-1zM40 88h1v1h-1zM102 83h1v1h-1zM130 62h1v1h-1zM71 79h1v1h-1zM107 88h1v1h-1zM117 68h1v1h-1zM51 88h1v1h-1zM51 78h1v1h-1zM9 79h1v1h-1zM86 86h1v1h-1zM75 84h1v1h-1zM7 76h1v1h-1zM82 64h1v1h-1zM1 60h1v1h-1zM67 81h1v1h-1zM55 86h1v1h-1zM12 74h1v1h-1zM9 84h1v1h-1zM101 71h1v1h-1zM83 79h1v1h-1zM106 86h1v1h-1zM75 85h1v1h-1zM14 86h1v1h-1zM103 88h1v1h-1zM52 68h1v1h-1zM72 56h1v1h-1zM42 78h1v1h-1zM63 70h1v1h-1zM27 72h1v1h-1zM92 77h1v1h-1zM58 84h1v1h-1zM97 78h1v1h-1zM2 54h1v1h-1zM49 78h1v1h-1z"/><path fill="#ff9020" d="M9 83h1v1h-1zM116 82h1v1h-1zM113 67h1v1h-1zM77 83h1v1h-1zM36 71h1v1h-1zM112 79h1v1h-1zM113 83h1v1h-1zM62 86h1v1h-1zM75 67h1v1h-1zM42 78h1v1h-1zM91 74h1v1h-1zM50 84h1v1h-1zM52 87h1v1h-1zM19 69h1v1h-1zM4 88h1v1h-1zM64 84h1v1h-1zM127 86h1v1h-1zM29 69h1v1h-1zM121 82h1v1h-1zM119 83h1v1h-1zM115 75h1v1h-1zM77 88h1v1h-1zM86 82h1v1h-1zM42 79h1v1h-1zM109 86h1v1h-1zM119 87h1v1h-1zM130 75h1v1h-1zM95 79h1v1h-1zM129 77h1v1h-1zM40 80h1v1h-1zM67 84h1v1h-1zM51 79h1v1h-1zM91 84h1v1h-1zM31 76h1v1h-1zM115 68h1v1h-1zM44 70h1v1h-1zM89 79h1v1h-1zM125 80h1v1h-1zM67 80h1v1h-1zM3 83h1v1h-1zM126 75h1v1h-1zM16 75h1v1h-1zM130 79h1v1h-1zM42 73h1v1h-1zM76 87h1v1h-1zM80 84h1v1h-1zM98 86h1v1h-1zM100 76h1v1h-1zM4 78h1v1h-1zM88 78h1v1h-1zM93 86h1v1h-1zM26 88h1v1h-1zM71 74h1v1h-1zM129 72h1v1h-1zM75 74h1v1h-1zM90 81h1v1h-1zM87 78h1v1h-1zM125 65h1v1h-1zM82 77h1v1h-1zM52 76h1v1h-1zM51 84h1v1h-1zM5 87h1v1h-1zM107 86h1v1h-1zM21 81h1v1h-1zM4 88h1v1h-1zM57 72h1v1h-1zM11 86h1v1h-1zM84 71h1v1h-1zM125 74h1v1h-1zM51 75h1v1h-1zM105 77h1v1h-1zM16 78h1v1h-1zM0 78h1v1h-1zM21 86h1v1h-1zM46 87h1v1h-1zM0 67h1v1h-1zM92 88h1v1h-1zM12 85h1v1h-1zM71 70h1v1h-1zM43 59h1v1h-1zM17 86h1v1h-1zM110 82h1v1h-1zM56 68h1v1h-1zM2 71h1v1h-1zM31 83h1v1h-1zM32 70h1v1h-1zM33 85h1v1h-1zM48 88h1v1h-1zM9 80h1v1h-1zM21 68h1v1h-1zM1 85h1v1h-1zM64 88h1v1h-1zM111 85h1v1h-1zM87 79h1v1h-1zM65 87h1v1h-1zM31 88h1v1h-1zM100 70h1v1h-1zM51 82h1v1h-1zM67 58h1v1h-1zM7 74h1v1h-1zM18 83h1v1h-1zM19 62h1v1h-1zM105 88h1v1h-1zM80 87h1v1h-1zM103 86h1v1h-1zM2 81h1v1h-1zM29 80h1v1h-1zM29 83h1v1h-1zM124 78h1v1h-1zM17 85h1v1h-1zM87 80h1v1h-1zM78 76h1v1h-1zM30 78h1v1h-1zM61 77h1v1h-1zM36 87h1v1h-1zM40 85h1v1h-1zM55 83h1v1h-1zM72 76h1v1h-1zM41 62h1v1h-1zM101 61h1v1h-1zM53 69h1v1h-1zM90 88h1v1h-1zM104 83h1v1h-1zM90 88h1v1h-1zM67 81h1v1h-1zM99 79h1v1h-1zM72 87h1v1h-1zM16 75h1v1h-1zM71 75h1v1h-1zM38 86h1v1h-1zM43 76h1v1h-1zM63 68h1v1h-1zM39 85h1v1h-1zM76 68h1v1h-1zM98 66h1v1h-1zM15 81h1v1h-1zM94 77h1v1h-1zM0 71h1v1h-1zM49 76h1v1h-1zM74 76h1v1h-1zM16 80h1v1h-1zM8 77h1v1h-1zM76 81h1v1h-1zM64 79h1v1h-1zM116 77h1v1h-1zM114 74h1v1h-1zM39 88h1v1h-1zM6 79h1v1h-1zM67 88h1v1h-1zM88 75h1v1h-1zM65 76h1v1h-1zM115 74h1v1h-1zM1 65h1v1h-1zM74 80h1v1h-1zM68 84h1v1h-1zM34 81h1v1h-1zM109 88h1v1h-1zM6 79h1v1h-1zM14 77h1v1h-1zM14 79h1v1h-1zM94 84h1v1h-1zM16 87h1v1h-1zM103 85h1v1h-1zM41 87h1v1h-1zM18 74h1v1h-1zM118 76h1v1h-1zM129 87h1v1h-1zM37 78h1v1h-1zM59 82h1v1h-1zM63 59h1v1h-1zM21 62h1v1h-1zM20 81h1v1h-1zM44 71h1v1h-1zM21 76h1v1h-1zM51 79h1v1h-1zM106 81h1v1h-1zM87 70h1v1h-1zM80 68h1v1h-1zM29 71h1v1h-1zM42 84h1v1h-1zM45 60h1v1h-1zM43 76h1v1h-1zM43 85h1v1h-1zM4 83h1v1h-1zM72 87h1v1h-1zM9 67h1v1h-1zM59 72h1v1h-1zM105 70h1v1h-1zM9 66h1v1h-1zM23 65h1v1h-1zM35 70h1v1h-1zM68 85h1v1h-1zM123 88h1v1h-1zM27 83h1v1h-1zM111 60h1v1h-1zM91 88h1v1h-1zM130 87h1v1h-1zM113 75h1v1h-1zM60 86h1v1h-1zM72 79h1v1h-1zM52 71h1v1h-1zM90 75h1v1h-1zM16 82h1v1h-1zM16 88h1v1h-1zM82 85h1v1h-1zM60 82h1v1h-1zM41 71h1v1h-1zM11 83h1v1h-1zM5 80h1v1h-1zM56 87h1v1h-1zM108 84h1v1h-1zM106 76h1v1h-1zM63 85h1v1h-1zM3 82h1v1h-1zM28 85h1v1h-1zM51 77h1v1h-1zM109 75h1v1h-1zM54 82h1v1h-1zM7 88h1v1h-1zM0 78h1v1h-1zM105 74h1v1h-1zM100 82h1v1h-1zM72 79h1v1h-1zM47 76h1v1h-1zM30 80h1v1h-1zM106 83h1v1h-1zM114 60h1v1h-1zM89 87h1v1h-1zM99 78h1v1h-1zM12 81h1v1h-1zM68 80h1v1h-1zM80 75h1v1h-1zM40 67h1v1h-1zM8 84h1v1h-1zM121 77h1v1h-1zM2 80h1v1h-1zM111 87h1v1h-1zM129 78h1v1h-1zM78 82h1v1h-1zM34 72h1v1h-1zM100 87h1v1h-1zM125 85h1v1h-1zM58 72h1v1h-1zM84 79h1v1h-1zM5 75h1v1h-1zM60 88h1v1h-1zM15 77h1v1h-1zM111 86h1v1h-1zM71 62h1v1h-1zM42 86h1v1h-1zM88 86h1v1h-1zM74 82h1v1h-1zM77 73h1v1h-1zM28 81h1v1h-1zM24 74h1v1h-1zM107 79h1v1h-1zM6 87h1v1h-1zM36 70h1v1h-1zM61 64h1v1h-1zM92 65h1v1h-1zM16 86h1v1h-1zM5 84h1v1h-1zM90 73h1v1h-1zM61 79h1v1h-1zM109 79h1v1h-1zM101 78h1v1h-1zM38 72h1v1h-1zM6 63h1v1h-1zM14 70h1v1h-1zM2 80h1v1h-1zM84 81h1v1h-1zM87 79h1v1h-1zM23 85h1v1h-1zM83 72h1v1h-1zM106 85h1v1h-1zM22 80h1v1h-1zM4 83h1v1h-1zM124 64h1v1h-1zM5 82h1v1h-1zM110 76h1v1h-1zM60 85h1v1h-1zM55 73h1v1h-1zM47 83h1v1h-1zM109 77h1v1h-1zM15 79h1v1h-1zM50 76h1v1h-1zM115 74h1v1h-1zM8 84h1v1h-1zM77 64h1v1h-1zM83 80h1v1h-1zM122 82h1v1h-1zM15 75h1v1h-1zM45 83h1v1h-1zM31 78h1v1h-1zM42 74h1v1h-1zM42 81h1v1h-1zM87 83h1v1h-1zM120 88h1v1h-1zM110 86h1v1h-1zM103 79h1v1h-1zM17 59h1v1h-1zM70 80h1v1h-1zM12 74h1v1h-1zM83 83h1v1h-1zM33 88h1v1h-1zM80 60h1v1h-1zM9 83h1v1h-1zM116 76h1v1h-1zM57 83h1v1h-1zM54 85h1v1h-1zM51 83h1v1h-1zM18 74h1v1h-1zM7 74h1v1h-1zM110 86h1v1h-1zM25 83h1v1h-1zM33 86h1v1h-1zM79 83h1v1h-1zM94 88h1v1h-1zM23 80h1v1h-1zM49 81h1v1h-1zM90 75h1v1h-1zM72 77h1v1h-1zM126 78h1v1h-1zM51 81h1v1h-1zM10 84h1v1h-1zM75 86h1v1h-1zM97 85h1v1h-1zM86 74h1v1h-1zM18 84h1v1h-1zM69 59h1v1h-1zM118 73h1v1h-1zM5 77h1v1h-1zM128 75h1v1h-1zM48 64h1v1h-1zM93 73h1v1h-1zM65 81h1v1h-1zM23 82h1v1h-1zM3 84h1v1h-1zM32 82h1v1h-1zM74 84h1v1h-1zM128 86h1v1h-1zM110 88h1v1h-1zM122 58h1v1h-1zM21 61h1v1h-1zM105 87h1v1h-1zM30 80h1v1h-1zM108 81h1v1h-1zM27 75h1v1h-1zM124 79h1v1h-1zM66 82h1v1h-1zM82 88h1v1h-1zM46 86h1v1h-1zM116 86h1v1h-1zM89 83h1v1h-1zM6 78h1v1h-1zM35 87h1v1h-1zM12 86h1v1h-1zM100 80h1v1h-1zM95 86h1v1h-1zM80 68h1v1h-1zM95 86h1v1h-1zM119 76h1v1h-1zM83 78h1v1h-1zM53 60h1v1h-1zM116 72h1v1h-1zM59 73h1v1h-1zM94 70h1v1h-1zM59 64h1v1h-1zM127 87h1v1h-1zM19 87h1v1h-1zM92 73h1v1h-1zM117 66h1v1h-1zM2 58h1v1h-1zM114 83h1v1h-1zM106 76h1v1h-1zM18 84h1v1h-1zM38 84h1v1h-1zM13 86h1v1h-1zM14 87h1v1h-1zM50 83h1v1h-1zM28 73h1v1h-1zM23 88h1v1h-1zM30 86h1v1h-1zM95 87h1v1h-1zM48 64h1v1h-1zM103 82h1v1h-1zM85 88h1v1h-1zM42 78h1v1h-1zM18 70h1v1h-1zM86 73h1v1h-1zM7 76h1v1h-1zM121 85h1v1h-1zM107 81h1v1h-1zM57 87h1v1h-1zM76 79h1v1h-1zM114 59h1v1h-1zM111 78h1v1h-1zM97 77h1v1h-1zM69 75h1v1h-1zM45 86h1v1h-1zM116 77h1v1h-1zM128 61h1v1h-1zM12 86h1v1h-1zM40 76h1v1h-1zM64 70h1v1h-1zM118 86h1v1h-1zM2 65h1v1h-1zM28 80h1v1h-1zM108 87h1v1h-1zM99 83h1v1h-1zM51 88h1v1h-1zM74 73h1v1h-1zM120 78h1v1h-1zM107 63h1v1h-1zM18 86h1v1h-1zM49 87h1v1h-1zM130 71h1v1h-1zM109 88h1v1h-1zM39 86h1v1h-1zM120 88h1v1h-1zM75 73h1v1h-1zM122 77h1v1h-1zM98 76h1v1h-1zM78 79h1v1h-1zM41 88h1v1h-1zM83 87h1v1h-1zM101 87h1v1h-1zM26 82h1v1h-1zM115 83h1v1h-1zM86 68h1v1h-1zM33 66h1v1h-1zM94 86h1v1h-1zM32 69h1v1h-1zM0 75h1v1h-1zM51 78h1v1h-1zM12 78h1v1h-1zM53 86h1v1h-1zM80 76h1v1h-1zM78 76h1v1h-1zM100 76h1v1h-1zM7 87h1v1h-1zM6 76h1v1h-1zM87 82h1v1h-1zM7 85h1v1h-1zM3 85h1v1h-1zM74 84h1v1h-1zM70 84h1v1h-1zM24 82h1v1h-1zM59 88h1v1h-1zM94 84h1v1h-1zM105 86h1v1h-1zM60 80h1v1h-1zM107 79h1v1h-1zM40 86h1v1h-1zM118 63h1v1h-1zM78 79h1v1h-1zM72 80h1v1h-1zM115 72h1v1h-1zM81 81h1v1h-1zM66 80h1v1h-1zM110 88h1v1h-1zM36 88h1v1h-1zM69 85h1v1h-1zM61 70h1v1h-1zM11 84h1v1h-1zM72 65h1v1h-1zM52 88h1v1h-1zM120 80h1v1h-1zM63 74h1v1h-1zM118 88h1v1h-1zM80 81h1v1h-1zM128 80h1v1h-1zM102 76h1v1h-1zM82 83h1v1h-1zM90 87h1v1h-1zM96 78h1v1h-1zM0 80h1v1h-1zM16 87h1v1h-1zM72 72h1v1h-1zM17 73h1v1h-1zM94 83h1v1h-1zM19 79h1v1h-1zM53 83h1v1h-1zM87 87h1v1h-1zM76 85h1v1h-1zM118 88h1v1h-1zM105 85h1v1h-1zM77 87h1v1h-1zM99 87h1v1h-1zM24 88h1v1h-1zM91 75h1v1h-1zM11 77h1v1h-1zM107 71h1v1h-1zM46 78h1v1h-1zM72 81h1v1h-1zM17 87h1v1h-1zM55 88h1v1h-1zM128 75h1v1h-1zM17 83h1v1h-1zM87 69h1v1h-1zM85 67h1v1h-1zM29 58h1v1h-1zM30 79h1v1h-1zM42 78h1v1h-1zM80 86h1v1h-1zM90 75h1v1h-1zM62 85h1v1h-1zM32 87h1v1h-1zM44 79h1v1h-1zM31 84h1v1h-1zM64 76h1v1h-1zM53 79h1v1h-1zM87 75h1v1h-1zM113 87h1v1h-1zM101 74h1v1h-1zM87 83h1v1h-1zM58 79h1v1h-1zM79 65h1v1h-1zM6 82h1v1h-1zM21 82h1v1h-1zM72 86h1v1h-1zM41 88h1v1h-1zM3 86h1v1h-1zM116 88h1v1h-1zM95 88h1v1h-1zM38 79h1v1h-1zM31 88h1v1h-1zM125 61h1v1h-1zM10 84h1v1h-1zM130 71h1v1h-1zM93 80h1v1h-1zM114 70h1v1h-1zM125 79h1v1h-1zM86 69h1v1h-1zM120 62h1v1h-1zM15 75h1v1h-1zM74 74h1v1h-1zM41 58h1v1h-1zM22 85h1v1h-1zM98 72h1v1h-1zM61 79h1v1h-1zM26 87h1v1h-1zM128 72h1v1h-1zM7 74h1v1h-1zM122 87h1v1h-1zM94 74h1v1h-1zM119 71h1v1h-1zM101 86h1v1h-1zM55 70h1v1h-1zM25 84h1v1h-1z"/><path fill="#ffd050" d="M112 81h1v1h-1zM54 80h1v1h-1zM68 83h1v1h-1zM23 88h1v1h-1zM9 80h1v1h-1zM70 80h1v1h-1zM19 84h1v1h-1zM120 85h1v1h-1zM130 82h1v1h-1zM29 81h1v1h-1zM60 86h1v1h-1zM13 85h1v1h-1zM62 84h1v1h-1zM51 86h1v1h-1zM21 86h1v1h-1zM111 83h1v1h-1zM89 86h1v1h-1zM79 87h1v1h-1zM33 88h1v1h-1zM85 81h1v1h-1zM44 88h1v1h-1zM63 85h1v1h-1zM44 86h1v1h-1zM12 87h1v1h-1zM24 82h1v1h-1zM15 85h1v1h-1zM114 85h1v1h-1zM69 82h1v1h-1zM92 87h1v1h-1zM103 80h1v1h-1zM35 87h1v1h-1zM99 87h1v1h-1zM121 82h1v1h-1zM4 82h1v1h-1zM24 85h1v1h-1zM16 86h1v1h-1zM40 86h1v1h-1zM106 88h1v1h-1zM104 87h1v1h-1zM36 86h1v1h-1zM32 87h1v1h-1zM10 83h1v1h-1zM8 80h1v1h-1zM90 86h1v1h-1zM13 83h1v1h-1zM43 88h1v1h-1zM90 83h1v1h-1zM60 80h1v1h-1zM23 84h1v1h-1zM28 81h1v1h-1zM101 80h1v1h-1zM128 83h1v1h-1zM80 85h1v1h-1zM59 88h1v1h-1zM48 85h1v1h-1zM49 87h1v1h-1zM21 82h1v1h-1zM61 80h1v1h-1zM1 88h1v1h-1zM59 86h1v1h-1zM59 85h1v1h-1zM43 88h1v1h-1zM93 86h1v1h-1zM77 84h1v1h-1zM44 87h1v1h-1zM3 88h1v1h-1zM64 85h1v1h-1zM58 85h1v1h-1zM52 86h1v1h-1zM117 82h1v1h-1zM84 87h1v1h-1zM46 80h1v1h-1zM47 84h1v1h-1zM61 85h1v1h-1zM38 87h1v1h-1zM123 86h1v1h-1zM59 87h1v1h-1zM76 87h1v1h-1zM61 88h1v1h-1zM127 80h1v1h-1zM98 85h1v1h-1zM123 81h1v1h-1zM93 83h1v1h-1zM51 82h1v1h-1zM15 85h1v1h-1zM62 84h1v1h-1zM82 80h1v1h-1zM60 85h1v1h-1zM4 87h1v1h-1zM102 87h1v1h-1zM113 85h1v1h-1zM60 88h1v1h-1zM1 88h1v1h-1zM123 87h1v1h-1zM29 86h1v1h-1zM77 88h1v1h-1zM28 82h1v1h-1zM121 87h1v1h-1zM68 86h1v1h-1zM44 81h1v1h-1zM127 88h1v1h-1zM25 88h1v1h-1zM36 80h1v1h-1zM125 81h1v1h-1zM34 87h1v1h-1zM63 80h1v1h-1zM76 88h1v1h-1zM76 88h1v1h-1zM21 84h1v1h-1zM31 84h1v1h-1zM39 86h1v1h-1zM73 85h1v1h-1zM102 88h1v1h-1zM92 88h1v1h-1zM78 84h1v1h-1zM74 86h1v1h-1zM38 82h1v1h-1zM80 88h1v1h-1zM4 80h1v1h-1zM66 87h1v1h-1zM59 85h1v1h-1zM86 85h1v1h-1zM106 86h1v1h-1zM99 80h1v1h-1zM122 80h1v1h-1zM127 82h1v1h-1zM16 84h1v1h-1zM6 86h1v1h-1zM21 82h1v1h-1zM50 87h1v1h-1zM68 81h1v1h-1zM67 80h1v1h-1zM71 87h1v1h-1zM34 80h1v1h-1zM70 83h1v1h-1zM5 88h1v1h-1zM46 83h1v1h-1zM92 85h1v1h-1zM117 86h1v1h-1zM111 83h1v1h-1zM82 86h1v1h-1zM93 87h1v1h-1zM60 87h1v1h-1zM116 82h1v1h-1zM127 87h1v1h-1zM44 80h1v1h-1zM104 86h1v1h-1zM77 88h1v1h-1zM123 88h1v1h-1zM32 86h1v1h-1zM128 86h1v1h-1zM11 88h1v1h-1zM106 80h1v1h-1zM59 83h1v1h-1zM31 80h1v1h-1zM36 83h1v1h-1zM106 86h1v1h-1zM40 87h1v1h-1zM22 86h1v1h-1zM108 86h1v1h-1zM50 81h1v1h-1zM83 87h1v1h-1zM64 86h1v1h-1zM95 88h1v1h-1zM87 80h1v1h-1zM110 81h1v1h-1zM125 81h1v1h-1zM117 82h1v1h-1zM6 88h1v1h-1zM118 82h1v1h-1zM56 88h1v1h-1zM106 88h1v1h-1zM19 83h1v1h-1zM128 83h1v1h-1zM79 86h1v1h-1zM94 88h1v1h-1zM16 83h1v1h-1zM72 84h1v1h-1zM22 87h1v1h-1zM5 81h1v1h-1zM107 85h1v1h-1zM51 82h1v1h-1zM66 86h1v1h-1zM24 88h1v1h-1zM91 84h1v1h-1zM110 88h1v1h-1zM32 88h1v1h-1zM31 88h1v1h-1zM46 86h1v1h-1zM70 86h1v1h-1zM28 80h1v1h-1zM26 88h1v1h-1zM25 85h1v1h-1zM76 81h1v1h-1zM117 88h1v1h-1zM42 88h1v1h-1zM123 86h1v1h-1zM30 82h1v1h-1zM95 88h1v1h-1zM64 85h1v1h-1zM61 88h1v1h-1zM6 86h1v1h-1zM1 87h1v1h-1zM89 84h1v1h-1zM0 82h1v1h-1zM4 81h1v1h-1zM52 88h1v1h-1zM113 85h1v1h-1zM130 84h1v1h-1zM116 87h1v1h-1zM17 82h1v1h-1zM55 83h1v1h-1zM29 82h1v1h-1zM117 87h1v1h-1zM17 82h1v1h-1zM56 88h1v1h-1zM100 85h1v1h-1zM61 88h1v1h-1zM104 84h1v1h-1zM97 86h1v1h-1zM98 86h1v1h-1zM123 80h1v1h-1zM103 87h1v1h-1zM8 81h1v1h-1zM1 85h1v1h-1zM100 88h1v1h-1zM16 82h1v1h-1zM81 88h1v1h-1zM43 88h1v1h-1zM82 88h1v1h-1zM46 86h1v1h-1zM89 81h1v1h-1zM17 80h1v1h-1zM28 85h1v1h-1zM18 84h1v1h-1zM66 85h1v1h-1zM111 88h1v1h-1zM120 86h1v1h-1zM108 80h1v1h-1zM76 85h1v1h-1zM70 88h1v1h-1zM115 82h1v1h-1zM18 86h1v1h-1zM87 85h1v1h-1zM34 83h1v1h-1zM0 87h1v1h-1zM43 88h1v1h-1zM62 86h1v1h-1zM86 87h1v1h-1zM21 83h1v1h-1zM32 87h1v1h-1zM93 85h1v1h-1zM112 83h1v1h-1zM39 87h1v1h-1zM115 80h1v1h-1zM10 81h1v1h-1zM17 81h1v1h-1zM72 87h1v1h-1zM92 86h1v1h-1zM107 83h1v1h-1zM69 88h1v1h-1zM45 88h1v1h-1z"/><path fill="#ffe070" d="M96 88h1v1h-1zM92 83h1v1h-1zM69 84h1v1h-1zM57 85h1v1h-1zM55 86h1v1h-1zM29 86h1v1h-1zM84 87h1v1h-1zM91 86h1v1h-1zM43 80h1v1h-1zM57 86h1v1h-1zM100 81h1v1h-1zM39 88h1v1h-1zM32 81h1v1h-1zM89 85h1v1h-1zM42 86h1v1h-1zM120 83h1v1h-1zM0 83h1v1h-1zM105 88h1v1h-1zM84 88h1v1h-1zM91 82h1v1h-1zM110 88h1v1h-1zM14 80h1v1h-1zM18 84h1v1h-1zM54 86h1v1h-1zM7 85h1v1h-1zM47 81h1v1h-1zM11 87h1v1h-1zM103 83h1v1h-1zM108 85h1v1h-1zM6 83h1v1h-1zM24 88h1v1h-1zM18 84h1v1h-1zM66 87h1v1h-1zM123 85h1v1h-1zM7 82h1v1h-1zM21 83h1v1h-1zM48 80h1v1h-1zM57 86h1v1h-1zM25 86h1v1h-1zM119 88h1v1h-1zM26 83h1v1h-1zM2 88h1v1h-1zM0 84h1v1h-1zM50 88h1v1h-1zM102 85h1v1h-1zM9 88h1v1h-1zM5 81h1v1h-1zM94 87h1v1h-1zM19 88h1v1h-1zM82 84h1v1h-1zM51 81h1v1h-1zM89 85h1v1h-1zM121 84h1v1h-1zM81 87h1v1h-1zM53 88h1v1h-1zM104 87h1v1h-1zM16 83h1v1h-1zM70 80h1v1h-1zM86 80h1v1h-1zM110 80h1v1h-1zM4 88h1v1h-1zM39 80h1v1h-1zM34 86h1v1h-1zM117 82h1v1h-1zM96 88h1v1h-1zM50 84h1v1h-1zM32 81h1v1h-1zM68 86h1v1h-1zM114 80h1v1h-1zM116 82h1v1h-1zM51 83h1v1h-1zM86 87h1v1h-1zM109 85h1v1h-1zM117 82h1v1h-1zM3 83h1v1h-1zM116 85h1v1h-1zM66 81h1v1h-1zM41 88h1v1h-1zM19 81h1v1h-1zM115 81h1v1h-1zM44 86h1v1h-1zM66 86h1v1h-1zM64 80h1v1h-1zM58 88h1v1h-1zM90 88h1v1h-1zM32 84h1v1h-1zM69 87h1v1h-1zM68 88h1v1h-1zM124 87h1v1h-1zM30 81h1v1h-1zM16 87h1v1h-1zM9 88h1v1h-1zM62 87h1v1h-1zM34 86h1v1h-1zM49 88h1v1h-1zM18 85h1v1h-1zM23 87h1v1h-1zM42 80h1v1h-1zM54 88h1v1h-1zM12 87h1v1h-1zM79 85h1v1h-1zM81 84h1v1h-1zM42 81h1v1h-1zM76 87h1v1h-1zM12 81h1v1h-1zM45 84h1v1h-1zM47 87h1v1h-1zM49 88h1v1h-1zM27 87h1v1h-1zM26 83h1v1h-1zM92 84h1v1h-1zM117 87h1v1h-1zM55 84h1v1h-1zM40 87h1v1h-1zM89 87h1v1h-1zM91 81h1v1h-1zM126 82h1v1h-1zM11 88h1v1h-1zM96 81h1v1h-1zM87 85h1v1h-1zM109 81h1v1h-1zM73 84h1v1h-1zM125 86h1v1h-1zM119 83h1v1h-1zM8 84h1v1h-1zM12 87h1v1h-1zM73 80h1v1h-1zM101 82h1v1h-1zM7 86h1v1h-1zM83 87h1v1h-1zM52 88h1v1h-1zM105 86h1v1h-1zM91 81h1v1h-1zM118 82h1v1h-1zM71 86h1v1h-1zM28 82h1v1h-1zM41 83h1v1h-1zM25 88h1v1h-1zM9 82h1v1h-1zM53 88h1v1h-1zM74 83h1v1h-1zM14 83h1v1h-1zM102 84h1v1h-1zM30 87h1v1h-1zM76 80h1v1h-1zM37 86h1v1h-1zM125 88h1v1h-1zM31 87h1v1h-1zM8 87h1v1h-1zM39 82h1v1h-1zM33 86h1v1h-1zM64 80h1v1h-1zM123 86h1v1h-1zM112 87h1v1h-1zM78 87h1v1h-1zM81 86h1v1h-1zM56 85h1v1h-1zM116 86h1v1h-1zM72 88h1v1h-1zM87 87h1v1h-1zM92 81h1v1h-1zM118 86h1v1h-1zM129 84h1v1h-1zM38 86h1v1h-1zM27 84h1v1h-1zM78 85h1v1h-1zM124 87h1v1h-1zM88 85h1v1h-1zM111 84h1v1h-1zM63 88h1v1h-1zM41 87h1v1h-1zM80 88h1v1h-1zM121 87h1v1h-1zM91 81h1v1h-1zM55 86h1v1h-1zM34 88h1v1h-1zM24 82h1v1h-1zM35 83h1v1h-1zM23 88h1v1h-1zM95 86h1v1h-1zM52 88h1v1h-1zM126 88h1v1h-1zM62 80h1v1h-1zM103 86h1v1h-1zM119 86h1v1h-1zM14 83h1v1h-1zM73 85h1v1h-1zM68 86h1v1h-1zM130 83h1v1h-1zM29 85h1v1h-1zM42 80h1v1h-1zM68 85h1v1h-1zM71 83h1v1h-1zM102 87h1v1h-1zM57 84h1v1h-1zM14 82h1v1h-1zM85 86h1v1h-1zM107 87h1v1h-1zM28 83h1v1h-1zM65 87h1v1h-1zM6 88h1v1h-1zM68 86h1v1h-1zM32 86h1v1h-1zM102 80h1v1h-1zM25 80h1v1h-1zM84 88h1v1h-1zM123 85h1v1h-1zM127 88h1v1h-1zM108 88h1v1h-1zM129 86h1v1h-1zM10 86h1v1h-1zM12 81h1v1h-1zM5 88h1v1h-1zM74 87h1v1h-1zM70 87h1v1h-1zM70 85h1v1h-1zM95 84h1v1h-1zM27 80h1v1h-1zM3 84h1v1h-1zM5 82h1v1h-1zM102 82h1v1h-1zM63 88h1v1h-1zM57 84h1v1h-1zM78 87h1v1h-1zM74 82h1v1h-1zM126 86h1v1h-1zM18 83h1v1h-1zM11 88h1v1h-1zM71 84h1v1h-1zM88 84h1v1h-1zM125 85h1v1h-1zM4 83h1v1h-1zM118 84h1v1h-1zM64 88h1v1h-1zM87 87h1v1h-1zM21 83h1v1h-1zM22 80h1v1h-1zM50 82h1v1h-1zM91 81h1v1h-1zM84 88h1v1h-1zM81 88h1v1h-1zM3 87h1v1h-1zM113 83h1v1h-1zM100 88h1v1h-1zM70 80h1v1h-1zM27 85h1v1h-1zM130 80h1v1h-1zM130 83h1v1h-1zM66 81h1v1h-1zM97 85h1v1h-1zM41 82h1v1h-1zM88 87h1v1h-1zM29 86h1v1h-1zM115 84h1v1h-1zM83 84h1v1h-1zM2 84h1v1h-1zM121 82h1v1h-1zM102 86h1v1h-1zM83 84h1v1h-1zM58 83h1v1h-1zM11 84h1v1h-1zM61 86h1v1h-1zM123 87h1v1h-1zM107 81h1v1h-1zM33 88h1v1h-1zM14 87h1v1h-1zM25 83h1v1h-1zM100 88h1v1h-1zM88 88h1v1h-1zM50 82h1v1h-1zM96 82h1v1h-1zM113 88h1v1h-1z"/><path fill="#ffb030" d="M23 78h1v1h-1zM17 84h1v1h-1zM5 85h1v1h-1zM127 76h1v1h-1zM56 76h1v1h-1zM22 74h1v1h-1zM22 80h1v1h-1zM37 84h1v1h-1zM42 68h1v1h-1zM0 88h1v1h-1zM7 81h1v1h-1zM11 81h1v1h-1zM62 72h1v1h-1zM117 86h1v1h-1zM128 84h1v1h-1zM29 63h1v1h-1zM21 78h1v1h-1zM64 85h1v1h-1zM122 78h1v1h-1zM45 80h1v1h-1zM3 87h1v1h-1zM29 88h1v1h-1zM30 86h1v1h-1zM26 74h1v1h-1zM118 73h1v1h-1zM107 86h1v1h-1zM72 74h1v1h-1zM54 88h1v1h-1zM86 71h1v1h-1zM62 69h1v1h-1zM52 88h1v1h-1zM100 73h1v1h-1zM80 88h1v1h-1zM20 84h1v1h-1zM10 82h1v1h-1zM106 76h1v1h-1zM5 76h1v1h-1zM8 64h1v1h-1zM51 76h1v1h-1zM22 83h1v1h-1zM52 85h1v1h-1zM7 84h1v1h-1zM122 78h1v1h-1zM120 65h1v1h-1zM7 64h1v1h-1zM46 86h1v1h-1zM116 70h1v1h-1zM102 84h1v1h-1zM107 78h1v1h-1zM5 75h1v1h-1zM26 79h1v1h-1zM41 87h1v1h-1zM105 78h1v1h-1zM77 85h1v1h-1zM100 73h1v1h-1zM44 75h1v1h-1zM65 74h1v1h-1zM38 86h1v1h-1zM30 65h1v1h-1zM73 74h1v1h-1zM23 88h1v1h-1zM110 87h1v1h-1zM34 87h1v1h-1zM49 85h1v1h-1zM9 83h1v1h-1zM1 86h1v1h-1zM88 85h1v1h-1zM13 83h1v1h-1zM66 81h1v1h-1zM54 58h1v1h-1zM120 87h1v1h-1zM121 82h1v1h-1zM84 71h1v1h-1zM64 74h1v1h-1zM71 78h1v1h-1zM115 74h1v1h-1zM79 71h1v1h-1zM55 69h1v1h-1zM38 75h1v1h-1zM118 83h1v1h-1zM1 79h1v1h-1zM90 88h1v1h-1zM101 65h1v1h-1zM34 74h1v1h-1zM58 88h1v1h-1zM35 80h1v1h-1zM64 79h1v1h-1zM25 83h1v1h-1zM100 75h1v1h-1zM1 79h1v1h-1zM79 69h1v1h-1zM72 77h1v1h-1zM89 81h1v1h-1zM54 81h1v1h-1zM64 66h1v1h-1zM9 71h1v1h-1zM81 88h1v1h-1zM30 88h1v1h-1zM1 83h1v1h-1zM20 77h1v1h-1zM123 74h1v1h-1zM99 83h1v1h-1zM49 88h1v1h-1zM10 65h1v1h-1zM35 88h1v1h-1zM113 60h1v1h-1zM28 62h1v1h-1zM9 86h1v1h-1zM127 77h1v1h-1zM107 85h1v1h-1zM72 85h1v1h-1zM128 73h1v1h-1zM104 86h1v1h-1zM60 72h1v1h-1zM16 77h1v1h-1zM51 66h1v1h-1zM89 82h1v1h-1zM21 80h1v1h-1zM26 66h1v1h-1zM58 83h1v1h-1zM111 73h1v1h-1zM121 73h1v1h-1zM58 79h1v1h-1zM5 84h1v1h-1zM10 78h1v1h-1zM70 87h1v1h-1zM100 71h1v1h-1zM81 79h1v1h-1zM69 77h1v1h-1zM74 84h1v1h-1zM124 76h1v1h-1zM129 74h1v1h-1zM117 85h1v1h-1zM80 63h1v1h-1zM66 73h1v1h-1zM116 66h1v1h-1zM23 88h1v1h-1zM71 85h1v1h-1zM27 72h1v1h-1zM39 61h1v1h-1zM82 72h1v1h-1zM100 81h1v1h-1zM109 81h1v1h-1zM35 83h1v1h-1zM7 83h1v1h-1zM103 69h1v1h-1zM42 83h1v1h-1zM25 79h1v1h-1zM82 84h1v1h-1zM77 82h1v1h-1zM87 87h1v1h-1zM72 62h1v1h-1zM122 88h1v1h-1zM31 72h1v1h-1zM48 78h1v1h-1zM64 84h1v1h-1zM50 86h1v1h-1zM18 77h1v1h-1zM84 88h1v1h-1zM10 83h1v1h-1zM86 75h1v1h-1zM91 85h1v1h-1zM110 78h1v1h-1zM73 84h1v1h-1zM30 82h1v1h-1zM95 74h1v1h-1zM82 86h1v1h-1zM13 71h1v1h-1zM61 63h1v1h-1zM108 88h1v1h-1zM122 81h1v1h-1zM79 71h1v1h-1zM37 88h1v1h-1zM119 83h1v1h-1zM95 78h1v1h-1zM16 83h1v1h-1zM90 84h1v1h-1zM57 59h1v1h-1zM69 83h1v1h-1zM89 86h1v1h-1zM23 79h1v1h-1zM95 74h1v1h-1zM50 77h1v1h-1zM38 86h1v1h-1zM63 77h1v1h-1zM20 86h1v1h-1zM112 83h1v1h-1zM55 71h1v1h-1zM121 70h1v1h-1zM25 58h1v1h-1zM62 86h1v1h-1zM113 71h1v1h-1zM77 78h1v1h-1zM108 78h1v1h-1zM75 77h1v1h-1zM9 88h1v1h-1zM35 81h1v1h-1zM62 84h1v1h-1zM21 77h1v1h-1zM67 76h1v1h-1zM57 87h1v1h-1zM61 73h1v1h-1zM67 78h1v1h-1zM114 62h1v1h-1zM53 84h1v1h-1zM70 87h1v1h-1zM83 83h1v1h-1zM127 83h1v1h-1zM64 66h1v1h-1zM41 74h1v1h-1zM78 81h1v1h-1zM75 83h1v1h-1zM119 74h1v1h-1zM65 86h1v1h-1zM77 88h1v1h-1zM105 81h1v1h-1zM40 74h1v1h-1zM49 81h1v1h-1zM25 63h1v1h-1zM49 88h1v1h-1zM38 86h1v1h-1zM102 88h1v1h-1zM2 66h1v1h-1zM48 83h1v1h-1zM6 87h1v1h-1zM7 86h1v1h-1zM130 74h1v1h-1zM86 87h1v1h-1zM65 87h1v1h-1zM123 81h1v1h-1zM118 82h1v1h-1zM104 88h1v1h-1zM37 77h1v1h-1zM119 80h1v1h-1zM48 88h1v1h-1zM41 71h1v1h-1zM21 78h1v1h-1zM50 72h1v1h-1zM36 76h1v1h-1zM45 75h1v1h-1zM118 81h1v1h-1zM83 86h1v1h-1zM67 69h1v1h-1zM129 86h1v1h-1zM115 66h1v1h-1zM115 77h1v1h-1zM7 81h1v1h-1zM113 85h1v1h-1zM97 82h1v1h-1zM86 84h1v1h-1zM107 86h1v1h-1zM19 78h1v1h-1zM107 78h1v1h-1zM129 85h1v1h-1zM28 70h1v1h-1zM97 87h1v1h-1zM99 72h1v1h-1zM115 87h1v1h-1zM100 66h1v1h-1zM56 78h1v1h-1zM100 88h1v1h-1zM125 81h1v1h-1zM58 87h1v1h-1zM51 86h1v1h-1zM41 76h1v1h-1zM56 80h1v1h-1zM56 86h1v1h-1zM76 81h1v1h-1zM61 81h1v1h-1zM42 84h1v1h-1zM69 72h1v1h-1zM40 64h1v1h-1zM73 85h1v1h-1zM119 68h1v1h-1zM14 88h1v1h-1zM95 88h1v1h-1zM51 75h1v1h-1zM14 78h1v1h-1zM18 68h1v1h-1zM49 77h1v1h-1zM123 82h1v1h-1zM127 63h1v1h-1zM119 79h1v1h-1zM30 77h1v1h-1zM14 88h1v1h-1zM92 69h1v1h-1zM62 84h1v1h-1zM112 87h1v1h-1zM63 87h1v1h-1zM90 78h1v1h-1zM70 75h1v1h-1zM45 87h1v1h-1zM95 86h1v1h-1zM115 71h1v1h-1zM84 83h1v1h-1zM113 82h1v1h-1zM33 86h1v1h-1zM124 79h1v1h-1zM24 66h1v1h-1zM70 79h1v1h-1zM93 79h1v1h-1zM107 85h1v1h-1zM84 80h1v1h-1zM111 86h1v1h-1zM103 86h1v1h-1zM43 83h1v1h-1zM57 68h1v1h-1zM89 88h1v1h-1zM116 85h1v1h-1zM65 87h1v1h-1zM115 88h1v1h-1zM56 87h1v1h-1zM89 87h1v1h-1zM53 74h1v1h-1zM74 83h1v1h-1zM32 88h1v1h-1zM28 68h1v1h-1zM99 83h1v1h-1zM110 83h1v1h-1zM52 74h1v1h-1zM64 80h1v1h-1zM71 85h1v1h-1zM118 75h1v1h-1zM51 74h1v1h-1zM23 68h1v1h-1zM81 85h1v1h-1zM94 82h1v1h-1zM58 71h1v1h-1zM36 73h1v1h-1zM44 69h1v1h-1zM74 84h1v1h-1zM0 80h1v1h-1zM47 88h1v1h-1zM52 63h1v1h-1zM29 81h1v1h-1zM40 73h1v1h-1zM47 86h1v1h-1zM25 61h1v1h-1zM41 86h1v1h-1zM71 83h1v1h-1zM4 86h1v1h-1zM31 86h1v1h-1zM106 69h1v1h-1zM2 83h1v1h-1zM59 77h1v1h-1zM28 65h1v1h-1zM8 88h1v1h-1zM76 80h1v1h-1zM3 77h1v1h-1zM75 81h1v1h-1zM9 74h1v1h-1zM41 76h1v1h-1zM68 78h1v1h-1zM111 77h1v1h-1zM33 69h1v1h-1zM78 75h1v1h-1zM56 72h1v1h-1zM116 85h1v1h-1zM49 84h1v1h-1zM89 84h1v1h-1zM29 81h1v1h-1zM54 71h1v1h-1zM70 86h1v1h-1zM50 88h1v1h-1zM28 86h1v1h-1zM97 83h1v1h-1zM50 81h1v1h-1zM49 88h1v1h-1zM107 87h1v1h-1zM43 79h1v1h-1zM47 87h1v1h-1zM123 85h1v1h-1zM3 73h1v1h-1zM17 72h1v1h-1zM40 83h1v1h-1zM83 87h1v1h-1zM3 65h1v1h-1zM24 81h1v1h-1zM69 83h1v1h-1zM83 79h1v1h-1zM50 78h1v1h-1zM3 83h1v1h-1zM24 77h1v1h-1zM34 73h1v1h-1zM78 85h1v1h-1zM10 87h1v1h-1zM109 71h1v1h-1zM37 88h1v1h-1zM42 61h1v1h-1zM11 86h1v1h-1zM20 69h1v1h-1zM62 84h1v1h-1zM28 79h1v1h-1zM50 71h1v1h-1zM9 62h1v1h-1zM15 82h1v1h-1zM10 81h1v1h-1zM42 87h1v1h-1zM15 78h1v1h-1zM24 81h1v1h-1zM63 70h1v1h-1zM71 83h1v1h-1zM50 88h1v1h-1zM91 83h1v1h-1zM89 83h1v1h-1zM31 64h1v1h-1zM130 88h1v1h-1zM97 74h1v1h-1zM36 76h1v1h-1zM47 88h1v1h-1zM16 82h1v1h-1zM52 62h1v1h-1zM125 68h1v1h-1zM32 60h1v1h-1zM115 71h1v1h-1zM15 76h1v1h-1zM83 60h1v1h-1zM37 72h1v1h-1zM45 62h1v1h-1zM77 78h1v1h-1zM75 83h1v1h-1zM116 87h1v1h-1zM52 80h1v1h-1zM116 83h1v1h-1zM39 63h1v1h-1zM71 65h1v1h-1zM42 82h1v1h-1zM22 84h1v1h-1zM41 78h1v1h-1zM118 86h1v1h-1zM36 78h1v1h-1zM129 81h1v1h-1zM111 78h1v1h-1zM69 66h1v1h-1zM50 63h1v1h-1zM81 85h1v1h-1zM104 84h1v1h-1zM30 79h1v1h-1zM49 80h1v1h-1zM69 60h1v1h-1zM38 86h1v1h-1zM33 84h1v1h-1zM108 73h1v1h-1zM52 75h1v1h-1zM102 71h1v1h-1zM94 82h1v1h-1zM115 85h1v1h-1zM59 87h1v1h-1zM87 78h1v1h-1zM79 85h1v1h-1zM37 78h1v1h-1zM33 84h1v1h-1zM68 83h1v1h-1zM24 87h1v1h-1zM21 73h1v1h-1zM4 73h1v1h-1zM76 87h1v1h-1zM34 80h1v1h-1zM123 84h1v1h-1zM65 83h1v1h-1zM82 71h1v1h-1zM26 67h1v1h-1zM84 82h1v1h-1zM88 78h1v1h-1zM70 88h1v1h-1zM22 88h1v1h-1zM102 70h1v1h-1zM63 85h1v1h-1zM89 75h1v1h-1zM113 88h1v1h-1zM108 80h1v1h-1zM57 77h1v1h-1zM98 78h1v1h-1zM52 85h1v1h-1zM45 79h1v1h-1zM49 79h1v1h-1zM116 82h1v1h-1zM41 69h1v1h-1zM55 59h1v1h-1zM62 77h1v1h-1zM104 79h1v1h-1zM104 86h1v1h-1zM107 87h1v1h-1zM33 77h1v1h-1zM98 73h1v1h-1zM102 68h1v1h-1zM94 79h1v1h-1zM24 84h1v1h-1zM49 88h1v1h-1zM86 82h1v1h-1zM81 82h1v1h-1zM83 60h1v1h-1zM59 75h1v1h-1zM126 87h1v1h-1zM87 84h1v1h-1zM123 80h1v1h-1zM76 66h1v1h-1zM57 75h1v1h-1zM43 79h1v1h-1zM102 86h1v1h-1zM108 68h1v1h-1zM125 85h1v1h-1zM48 84h1v1h-1zM125 75h1v1h-1zM45 76h1v1h-1zM107 81h1v1h-1zM95 88h1v1h-1zM79 83h1v1h-1zM19 77h1v1h-1zM108 83h1v1h-1zM84 74h1v1h-1zM114 86h1v1h-1zM17 77h1v1h-1zM107 74h1v1h-1zM114 69h1v1h-1zM97 86h1v1h-1zM100 69h1v1h-1zM103 77h1v1h-1zM75 61h1v1h-1zM121 59h1v1h-1zM10 83h1v1h-1zM90 86h1v1h-1zM17 81h1v1h-1zM72 88h1v1h-1zM62 77h1v1h-1zM82 78h1v1h-1zM79 77h1v1h-1zM25 75h1v1h-1zM114 88h1v1h-1zM7 77h1v1h-1zM30 62h1v1h-1zM24 88h1v1h-1zM102 69h1v1h-1zM54 67h1v1h-1zM86 85h1v1h-1zM19 57h1v1h-1zM110 75h1v1h-1zM11 79h1v1h-1zM69 87h1v1h-1zM104 79h1v1h-1zM22 84h1v1h-1zM21 75h1v1h-1zM93 74h1v1h-1zM62 78h1v1h-1zM16 78h1v1h-1zM24 69h1v1h-1zM76 62h1v1h-1zM3 68h1v1h-1z"/><path fill="#e83020" d="M89 53h1v1h-1zM121 53h1v1h-1zM44 34h1v1h-1zM116 56h1v1h-1zM107 48h1v1h-1zM6 43h1v1h-1zM128 53h1v1h-1zM73 51h1v1h-1zM79 46h1v1h-1zM23 51h1v1h-1zM45 41h1v1h-1zM115 52h1v1h-1zM96 54h1v1h-1zM56 57h1v1h-1zM37 49h1v1h-1zM49 54h1v1h-1zM11 40h1v1h-1zM105 38h1v1h-1zM112 55h1v1h-1zM58 55h1v1h-1zM90 41h1v1h-1zM105 54h1v1h-1zM70 49h1v1h-1zM81 51h1v1h-1z"/><path fill="#f05020" d="M7 73h1v1h-1zM14 78h1v1h-1zM16 68h1v1h-1zM2 73h1v1h-1zM128 71h1v1h-1zM36 74h1v1h-1zM118 70h1v1h-1zM121 73h1v1h-1zM116 74h1v1h-1zM81 75h1v1h-1zM72 59h1v1h-1zM29 79h1v1h-1zM33 73h1v1h-1zM30 79h1v1h-1zM95 58h1v1h-1zM50 75h1v1h-1zM71 77h1v1h-1zM1 76h1v1h-1zM23 77h1v1h-1zM43 79h1v1h-1zM47 78h1v1h-1zM90 68h1v1h-1zM41 68h1v1h-1zM52 26h1v1h-1zM86 73h1v1h-1zM117 69h1v1h-1zM69 73h1v1h-1zM110 62h1v1h-1zM70 76h1v1h-1zM60 68h1v1h-1zM11 68h1v1h-1zM95 71h1v1h-1zM41 65h1v1h-1zM39 72h1v1h-1zM46 77h1v1h-1zM15 76h1v1h-1zM39 68h1v1h-1zM32 68h1v1h-1zM19 66h1v1h-1zM43 79h1v1h-1zM103 52h1v1h-1zM92 69h1v1h-1zM96 70h1v1h-1zM114 77h1v1h-1zM72 78h1v1h-1zM93 70h1v1h-1zM111 74h1v1h-1zM69 49h1v1h-1zM28 55h1v1h-1zM111 64h1v1h-1zM61 75h1v1h-1zM118 73h1v1h-1zM66 62h1v1h-1zM126 72h1v1h-1zM39 79h1v1h-1zM22 77h1v1h-1zM89 73h1v1h-1zM110 78h1v1h-1zM79 68h1v1h-1zM3 78h1v1h-1zM57 68h1v1h-1zM28 64h1v1h-1zM62 73h1v1h-1zM96 78h1v1h-1zM55 79h1v1h-1zM17 79h1v1h-1zM58 67h1v1h-1zM64 78h1v1h-1zM126 37h1v1h-1zM95 72h1v1h-1zM5 78h1v1h-1zM5 79h1v1h-1zM104 66h1v1h-1zM82 77h1v1h-1zM129 66h1v1h-1zM61 69h1v1h-1zM129 71h1v1h-1zM9 78h1v1h-1zM80 44h1v1h-1zM83 69h1v1h-1zM111 71h1v1h-1zM52 46h1v1h-1zM68 70h1v1h-1zM89 75h1v1h-1zM64 62h1v1h-1zM21 73h1v1h-1zM48 76h1v1h-1zM88 73h1v1h-1zM8 52h1v1h-1zM78 72h1v1h-1zM126 52h1v1h-1zM13 67h1v1h-1zM8 77h1v1h-1zM60 76h1v1h-1zM11 70h1v1h-1zM58 49h1v1h-1zM125 75h1v1h-1zM25 78h1v1h-1zM36 77h1v1h-1zM56 77h1v1h-1zM100 77h1v1h-1zM0 66h1v1h-1zM74 72h1v1h-1zM63 68h1v1h-1zM94 65h1v1h-1zM97 79h1v1h-1zM14 72h1v1h-1zM102 68h1v1h-1zM81 65h1v1h-1zM115 65h1v1h-1zM129 78h1v1h-1zM50 62h1v1h-1zM83 78h1v1h-1zM4 66h1v1h-1zM88 62h1v1h-1zM103 47h1v1h-1zM93 43h1v1h-1zM92 65h1v1h-1zM12 77h1v1h-1zM82 72h1v1h-1zM24 78h1v1h-1zM117 66h1v1h-1zM37 77h1v1h-1zM80 78h1v1h-1zM65 44h1v1h-1zM77 78h1v1h-1zM47 78h1v1h-1zM2 70h1v1h-1zM11 49h1v1h-1zM109 71h1v1h-1zM119 76h1v1h-1zM39 72h1v1h-1zM8 63h1v1h-1zM75 60h1v1h-1zM29 71h1v1h-1zM15 66h1v1h-1zM50 68h1v1h-1zM35 79h1v1h-1zM123 73h1v1h-1zM5 78h1v1h-1zM127 79h1v1h-1zM39 79h1v1h-1zM0 79h1v1h-1zM47 72h1v1h-1zM27 61h1v1h-1zM95 53h1v1h-1zM49 73h1v1h-1zM70 69h1v1h-1zM47 79h1v1h-1zM30 64h1v1h-1zM110 79h1v1h-1zM70 75h1v1h-1zM125 67h1v1h-1zM57 65h1v1h-1zM80 74h1v1h-1zM100 72h1v1h-1zM87 71h1v1h-1zM61 62h1v1h-1zM105 58h1v1h-1zM22 76h1v1h-1zM30 75h1v1h-1zM27 75h1v1h-1zM123 66h1v1h-1zM52 79h1v1h-1zM62 71h1v1h-1zM93 66h1v1h-1zM95 68h1v1h-1zM76 79h1v1h-1zM92 60h1v1h-1zM18 72h1v1h-1zM58 70h1v1h-1zM100 74h1v1h-1zM56 56h1v1h-1zM77 79h1v1h-1zM85 78h1v1h-1zM21 68h1v1h-1zM104 78h1v1h-1zM71 79h1v1h-1zM40 79h1v1h-1zM92 78h1v1h-1zM97 71h1v1h-1zM67 74h1v1h-1zM1 62h1v1h-1zM89 76h1v1h-1zM93 72h1v1h-1zM14 71h1v1h-1zM41 71h1v1h-1zM9 70h1v1h-1zM70 71h1v1h-1zM86 75h1v1h-1zM66 65h1v1h-1zM53 75h1v1h-1zM127 55h1v1h-1zM36 60h1v1h-1zM126 66h1v1h-1zM99 77h1v1h-1zM26 66h1v1h-1zM25 77h1v1h-1zM61 74h1v1h-1zM114 76h1v1h-1zM14 61h1v1h-1zM7 71h1v1h-1zM127 79h1v1h-1zM51 77h1v1h-1zM120 60h1v1h-1zM59 62h1v1h-1zM84 64h1v1h-1zM117 76h1v1h-1zM60 67h1v1h-1zM122 63h1v1h-1zM38 78h1v1h-1zM53 79h1v1h-1zM16 63h1v1h-1zM80 77h1v1h-1zM73 79h1v1h-1zM103 64h1v1h-1zM65 69h1v1h-1zM11 68h1v1h-1zM9 68h1v1h-1zM90 58h1v1h-1zM27 77h1v1h-1zM75 48h1v1h-1zM96 59h1v1h-1zM41 75h1v1h-1zM14 60h1v1h-1zM24 77h1v1h-1zM16 40h1v1h-1zM125 39h1v1h-1zM15 77h1v1h-1zM26 78h1v1h-1zM0 79h1v1h-1zM58 61h1v1h-1zM20 69h1v1h-1zM36 79h1v1h-1zM98 73h1v1h-1zM41 71h1v1h-1zM55 72h1v1h-1zM130 70h1v1h-1zM60 68h1v1h-1zM10 70h1v1h-1zM99 66h1v1h-1zM122 66h1v1h-1zM35 58h1v1h-1zM0 68h1v1h-1zM45 74h1v1h-1zM5 78h1v1h-1zM102 75h1v1h-1zM99 58h1v1h-1zM71 27h1v1h-1zM108 70h1v1h-1zM122 71h1v1h-1zM125 71h1v1h-1zM119 77h1v1h-1zM35 67h1v1h-1zM96 71h1v1h-1zM103 77h1v1h-1zM49 55h1v1h-1zM26 62h1v1h-1zM75 75h1v1h-1zM59 78h1v1h-1zM112 66h1v1h-1zM19 77h1v1h-1zM25 49h1v1h-1zM72 73h1v1h-1zM76 79h1v1h-1zM31 75h1v1h-1zM107 74h1v1h-1zM113 64h1v1h-1zM23 79h1v1h-1zM3 77h1v1h-1zM73 59h1v1h-1zM27 78h1v1h-1zM71 78h1v1h-1zM4 74h1v1h-1zM28 34h1v1h-1zM93 67h1v1h-1zM36 64h1v1h-1zM114 76h1v1h-1zM66 65h1v1h-1zM61 79h1v1h-1zM51 77h1v1h-1z"/><path fill="#d02030" d="M34 57h1v1h-1zM27 53h1v1h-1zM99 48h1v1h-1zM62 43h1v1h-1zM14 53h1v1h-1zM85 39h1v1h-1zM63 55h1v1h-1zM106 50h1v1h-1zM82 56h1v1h-1zM83 52h1v1h-1zM90 53h1v1h-1zM57 54h1v1h-1zM43 57h1v1h-1zM65 48h1v1h-1zM31 42h1v1h-1zM72 54h1v1h-1zM72 47h1v1h-1zM127 40h1v1h-1zM87 45h1v1h-1zM88 51h1v1h-1zM23 51h1v1h-1z"/></pattern><pattern id="mna" patternUnits="userSpaceOnUse" x="498" y="630" width="127" height="110"><path fill="#2a0c3c" d="M48 49h1v1h-1zM74 21h1v1h-1zM15 27h1v1h-1zM6 44h1v1h-1zM79 13h1v1h-1zM85 26h1v1h-1zM29 12h1v1h-1zM69 39h1v1h-1zM31 45h1v1h-1zM85 42h1v1h-1zM63 49h1v1h-1zM3 36h1v1h-1zM120 34h1v1h-1zM78 41h1v1h-1zM56 41h1v1h-1zM68 14h1v1h-1zM28 35h1v1h-1zM79 13h1v1h-1zM93 42h1v1h-1zM62 21h1v1h-1zM23 45h1v1h-1zM22 44h1v1h-1zM96 45h1v1h-1zM34 46h1v1h-1zM108 44h1v1h-1zM39 34h1v1h-1zM49 45h1v1h-1zM82 25h1v1h-1zM117 25h1v1h-1zM88 46h1v1h-1zM94 25h1v1h-1zM28 34h1v1h-1zM126 43h1v1h-1zM10 24h1v1h-1zM82 33h1v1h-1zM126 45h1v1h-1zM61 40h1v1h-1zM29 25h1v1h-1zM54 34h1v1h-1zM37 45h1v1h-1zM97 12h1v1h-1zM18 48h1v1h-1zM121 22h1v1h-1zM126 34h1v1h-1zM50 19h1v1h-1zM13 26h1v1h-1zM97 31h1v1h-1zM99 26h1v1h-1zM30 46h1v1h-1zM33 8h1v1h-1zM64 35h1v1h-1zM34 33h1v1h-1zM82 44h1v1h-1zM66 40h1v1h-1zM6 28h1v1h-1zM87 45h1v1h-1zM65 49h1v1h-1zM103 20h1v1h-1zM80 31h1v1h-1zM80 40h1v1h-1zM57 28h1v1h-1zM29 32h1v1h-1zM68 33h1v1h-1zM97 25h1v1h-1zM115 45h1v1h-1zM113 9h1v1h-1zM116 26h1v1h-1zM45 34h1v1h-1zM57 12h1v1h-1zM68 44h1v1h-1zM22 47h1v1h-1zM100 32h1v1h-1zM96 7h1v1h-1zM37 49h1v1h-1zM51 20h1v1h-1zM76 29h1v1h-1zM120 39h1v1h-1zM11 46h1v1h-1zM68 44h1v1h-1zM112 49h1v1h-1zM51 46h1v1h-1zM32 37h1v1h-1zM79 24h1v1h-1zM53 35h1v1h-1zM5 17h1v1h-1zM49 17h1v1h-1zM10 34h1v1h-1zM38 28h1v1h-1zM49 49h1v1h-1zM125 35h1v1h-1zM82 45h1v1h-1zM99 33h1v1h-1zM27 44h1v1h-1zM101 24h1v1h-1zM8 20h1v1h-1zM21 33h1v1h-1zM11 44h1v1h-1zM99 29h1v1h-1zM12 39h1v1h-1zM18 27h1v1h-1zM59 13h1v1h-1zM80 47h1v1h-1zM125 34h1v1h-1zM92 44h1v1h-1zM64 32h1v1h-1zM67 47h1v1h-1zM120 41h1v1h-1zM107 32h1v1h-1zM126 18h1v1h-1zM85 46h1v1h-1zM99 22h1v1h-1zM19 36h1v1h-1zM59 22h1v1h-1zM83 20h1v1h-1zM93 38h1v1h-1zM12 40h1v1h-1zM15 39h1v1h-1zM124 40h1v1h-1zM66 7h1v1h-1zM90 17h1v1h-1zM8 40h1v1h-1zM15 46h1v1h-1zM36 16h1v1h-1zM30 11h1v1h-1zM90 48h1v1h-1zM60 47h1v1h-1zM96 38h1v1h-1zM18 40h1v1h-1zM17 47h1v1h-1zM85 18h1v1h-1zM2 42h1v1h-1zM87 24h1v1h-1zM22 28h1v1h-1zM4 32h1v1h-1zM19 30h1v1h-1zM42 46h1v1h-1zM32 44h1v1h-1zM53 49h1v1h-1zM2 37h1v1h-1zM59 44h1v1h-1zM20 18h1v1h-1zM106 48h1v1h-1zM42 46h1v1h-1zM74 47h1v1h-1zM54 44h1v1h-1zM81 38h1v1h-1zM39 39h1v1h-1zM58 12h1v1h-1zM28 23h1v1h-1zM88 42h1v1h-1zM112 49h1v1h-1zM44 46h1v1h-1zM1 31h1v1h-1zM23 38h1v1h-1zM10 40h1v1h-1zM119 33h1v1h-1zM8 30h1v1h-1zM101 42h1v1h-1zM46 27h1v1h-1zM121 10h1v1h-1zM57 30h1v1h-1zM66 37h1v1h-1zM49 18h1v1h-1zM18 47h1v1h-1zM34 48h1v1h-1zM45 45h1v1h-1zM58 14h1v1h-1zM51 37h1v1h-1zM39 45h1v1h-1zM52 42h1v1h-1zM122 14h1v1h-1zM63 40h1v1h-1zM3 45h1v1h-1zM7 16h1v1h-1zM94 12h1v1h-1zM31 44h1v1h-1zM5 36h1v1h-1zM103 42h1v1h-1zM31 46h1v1h-1zM6 46h1v1h-1zM6 44h1v1h-1zM60 28h1v1h-1zM94 40h1v1h-1zM53 35h1v1h-1zM81 45h1v1h-1zM122 27h1v1h-1zM0 36h1v1h-1zM41 17h1v1h-1zM65 41h1v1h-1zM12 32h1v1h-1zM11 27h1v1h-1zM108 30h1v1h-1zM22 21h1v1h-1zM99 36h1v1h-1zM77 45h1v1h-1zM123 43h1v1h-1zM25 16h1v1h-1zM84 36h1v1h-1zM1 40h1v1h-1zM56 25h1v1h-1zM6 33h1v1h-1zM57 8h1v1h-1zM118 25h1v1h-1zM121 44h1v1h-1zM93 41h1v1h-1zM55 46h1v1h-1zM46 34h1v1h-1zM52 18h1v1h-1zM123 29h1v1h-1zM112 49h1v1h-1zM21 47h1v1h-1zM104 19h1v1h-1zM66 34h1v1h-1zM27 39h1v1h-1zM34 45h1v1h-1zM49 35h1v1h-1zM65 45h1v1h-1zM56 37h1v1h-1zM47 37h1v1h-1zM4 40h1v1h-1zM113 28h1v1h-1zM43 37h1v1h-1zM19 35h1v1h-1zM123 47h1v1h-1zM68 29h1v1h-1zM35 48h1v1h-1zM72 48h1v1h-1zM18 42h1v1h-1zM71 25h1v1h-1zM23 14h1v1h-1zM13 28h1v1h-1zM36 49h1v1h-1zM67 38h1v1h-1zM99 29h1v1h-1zM65 29h1v1h-1zM14 49h1v1h-1zM92 31h1v1h-1zM62 18h1v1h-1zM51 39h1v1h-1zM79 17h1v1h-1zM2 34h1v1h-1zM42 17h1v1h-1zM112 49h1v1h-1zM126 47h1v1h-1zM83 30h1v1h-1zM72 38h1v1h-1zM70 41h1v1h-1zM47 10h1v1h-1zM48 7h1v1h-1zM97 25h1v1h-1zM98 46h1v1h-1zM56 47h1v1h-1zM106 49h1v1h-1zM84 47h1v1h-1zM112 42h1v1h-1zM16 30h1v1h-1zM7 43h1v1h-1zM65 27h1v1h-1zM47 39h1v1h-1zM61 42h1v1h-1zM85 28h1v1h-1zM45 24h1v1h-1zM88 13h1v1h-1zM5 33h1v1h-1zM36 30h1v1h-1zM17 8h1v1h-1zM35 45h1v1h-1zM124 18h1v1h-1zM75 40h1v1h-1zM118 36h1v1h-1zM8 39h1v1h-1zM123 30h1v1h-1zM114 25h1v1h-1zM120 22h1v1h-1zM120 43h1v1h-1zM81 32h1v1h-1zM7 42h1v1h-1zM52 2h1v1h-1zM11 45h1v1h-1zM3 23h1v1h-1zM5 15h1v1h-1zM45 23h1v1h-1zM114 38h1v1h-1zM75 23h1v1h-1zM27 40h1v1h-1zM94 48h1v1h-1zM9 34h1v1h-1zM100 31h1v1h-1zM22 25h1v1h-1zM13 39h1v1h-1zM113 29h1v1h-1zM81 36h1v1h-1zM2 46h1v1h-1zM110 46h1v1h-1zM100 35h1v1h-1zM65 26h1v1h-1zM69 36h1v1h-1zM21 27h1v1h-1zM45 12h1v1h-1zM97 29h1v1h-1zM52 33h1v1h-1zM96 27h1v1h-1zM24 15h1v1h-1zM44 19h1v1h-1zM90 22h1v1h-1zM66 35h1v1h-1zM75 31h1v1h-1zM88 41h1v1h-1zM115 37h1v1h-1zM22 35h1v1h-1zM25 49h1v1h-1zM59 22h1v1h-1zM29 34h1v1h-1zM70 48h1v1h-1zM103 37h1v1h-1zM19 11h1v1h-1zM66 36h1v1h-1zM10 26h1v1h-1zM62 33h1v1h-1zM102 24h1v1h-1zM72 41h1v1h-1zM98 36h1v1h-1zM41 19h1v1h-1zM94 44h1v1h-1zM106 18h1v1h-1zM77 46h1v1h-1zM114 40h1v1h-1zM87 48h1v1h-1zM1 38h1v1h-1zM27 29h1v1h-1zM112 34h1v1h-1zM103 42h1v1h-1zM24 4h1v1h-1zM102 38h1v1h-1zM81 23h1v1h-1zM100 39h1v1h-1zM1 31h1v1h-1zM46 5h1v1h-1zM83 33h1v1h-1zM113 43h1v1h-1zM14 43h1v1h-1zM79 32h1v1h-1zM58 16h1v1h-1zM25 28h1v1h-1zM72 41h1v1h-1zM106 36h1v1h-1zM80 42h1v1h-1zM93 33h1v1h-1zM35 34h1v1h-1zM110 17h1v1h-1zM9 47h1v1h-1zM43 44h1v1h-1zM95 31h1v1h-1zM112 29h1v1h-1zM31 43h1v1h-1zM57 47h1v1h-1zM80 47h1v1h-1zM10 39h1v1h-1zM121 38h1v1h-1zM105 29h1v1h-1zM30 45h1v1h-1zM44 25h1v1h-1zM99 14h1v1h-1zM46 37h1v1h-1zM43 23h1v1h-1zM103 44h1v1h-1zM2 16h1v1h-1zM113 38h1v1h-1zM111 45h1v1h-1zM2 16h1v1h-1zM58 47h1v1h-1zM101 32h1v1h-1zM81 33h1v1h-1zM29 30h1v1h-1zM46 33h1v1h-1zM99 49h1v1h-1zM15 47h1v1h-1zM21 31h1v1h-1zM51 47h1v1h-1zM52 27h1v1h-1zM118 17h1v1h-1zM37 42h1v1h-1zM114 21h1v1h-1zM117 24h1v1h-1zM7 48h1v1h-1zM123 36h1v1h-1zM21 42h1v1h-1zM58 48h1v1h-1zM2 23h1v1h-1zM19 10h1v1h-1zM29 17h1v1h-1zM65 26h1v1h-1zM2 33h1v1h-1zM120 43h1v1h-1zM60 36h1v1h-1zM2 44h1v1h-1zM33 48h1v1h-1zM38 29h1v1h-1zM47 45h1v1h-1zM80 45h1v1h-1zM66 28h1v1h-1zM81 40h1v1h-1zM3 5h1v1h-1zM75 37h1v1h-1zM20 43h1v1h-1zM55 17h1v1h-1zM86 40h1v1h-1zM120 41h1v1h-1zM13 40h1v1h-1zM70 42h1v1h-1zM31 24h1v1h-1zM12 34h1v1h-1zM119 35h1v1h-1zM44 34h1v1h-1zM3 33h1v1h-1zM56 38h1v1h-1zM94 42h1v1h-1zM95 42h1v1h-1zM78 24h1v1h-1zM95 25h1v1h-1zM109 34h1v1h-1zM125 29h1v1h-1zM125 36h1v1h-1zM80 45h1v1h-1zM23 42h1v1h-1zM78 38h1v1h-1zM85 40h1v1h-1zM107 35h1v1h-1zM34 34h1v1h-1zM123 26h1v1h-1zM43 7h1v1h-1zM113 36h1v1h-1zM112 32h1v1h-1zM92 46h1v1h-1zM29 30h1v1h-1zM15 48h1v1h-1zM34 31h1v1h-1zM9 6h1v1h-1zM3 39h1v1h-1zM38 27h1v1h-1zM51 22h1v1h-1zM121 13h1v1h-1zM125 46h1v1h-1zM99 38h1v1h-1zM72 13h1v1h-1zM44 11h1v1h-1zM62 33h1v1h-1zM13 32h1v1h-1zM97 41h1v1h-1zM38 32h1v1h-1zM75 40h1v1h-1zM25 48h1v1h-1zM72 46h1v1h-1zM31 49h1v1h-1zM11 40h1v1h-1zM38 18h1v1h-1zM113 44h1v1h-1zM70 43h1v1h-1zM92 43h1v1h-1zM59 37h1v1h-1zM62 9h1v1h-1zM57 20h1v1h-1zM88 29h1v1h-1zM56 5h1v1h-1zM40 42h1v1h-1zM93 47h1v1h-1zM88 3h1v1h-1zM35 33h1v1h-1zM19 44h1v1h-1zM47 40h1v1h-1zM50 38h1v1h-1zM16 23h1v1h-1zM95 26h1v1h-1zM123 25h1v1h-1zM33 22h1v1h-1zM86 24h1v1h-1zM102 10h1v1h-1zM93 17h1v1h-1zM107 13h1v1h-1zM35 45h1v1h-1zM105 34h1v1h-1zM57 37h1v1h-1zM94 35h1v1h-1zM32 38h1v1h-1zM114 22h1v1h-1zM76 19h1v1h-1zM13 21h1v1h-1zM31 43h1v1h-1zM74 39h1v1h-1zM65 11h1v1h-1zM28 33h1v1h-1zM66 29h1v1h-1zM10 44h1v1h-1zM91 27h1v1h-1zM45 27h1v1h-1zM56 33h1v1h-1zM35 25h1v1h-1zM82 14h1v1h-1zM18 48h1v1h-1zM43 17h1v1h-1zM123 19h1v1h-1zM78 24h1v1h-1zM114 44h1v1h-1zM34 41h1v1h-1zM21 31h1v1h-1zM26 19h1v1h-1zM113 27h1v1h-1zM32 39h1v1h-1zM108 41h1v1h-1zM1 33h1v1h-1zM29 41h1v1h-1zM98 31h1v1h-1zM43 38h1v1h-1zM14 38h1v1h-1zM54 29h1v1h-1zM79 48h1v1h-1zM25 40h1v1h-1zM79 29h1v1h-1zM14 22h1v1h-1zM21 23h1v1h-1zM68 32h1v1h-1zM16 28h1v1h-1zM0 15h1v1h-1zM75 26h1v1h-1zM24 36h1v1h-1zM57 40h1v1h-1zM27 40h1v1h-1zM24 39h1v1h-1z"/><path fill="#8a1860" d="M115 90h1v1h-1zM114 87h1v1h-1zM105 106h1v1h-1zM105 107h1v1h-1zM41 90h1v1h-1zM6 88h1v1h-1zM114 85h1v1h-1zM11 94h1v1h-1zM10 94h1v1h-1zM27 93h1v1h-1zM81 88h1v1h-1zM23 83h1v1h-1zM92 90h1v1h-1zM33 90h1v1h-1zM117 90h1v1h-1zM103 100h1v1h-1zM96 101h1v1h-1zM109 96h1v1h-1zM101 87h1v1h-1zM21 89h1v1h-1zM2 91h1v1h-1zM32 95h1v1h-1zM56 86h1v1h-1zM58 94h1v1h-1zM55 95h1v1h-1zM28 85h1v1h-1zM115 88h1v1h-1zM100 84h1v1h-1zM105 87h1v1h-1zM10 94h1v1h-1zM5 90h1v1h-1zM10 96h1v1h-1zM124 97h1v1h-1zM59 83h1v1h-1zM5 107h1v1h-1zM37 94h1v1h-1zM16 91h1v1h-1zM32 85h1v1h-1zM37 83h1v1h-1zM2 96h1v1h-1zM45 95h1v1h-1zM82 91h1v1h-1zM52 101h1v1h-1zM118 91h1v1h-1zM58 91h1v1h-1zM120 85h1v1h-1zM99 84h1v1h-1zM45 88h1v1h-1zM2 87h1v1h-1zM11 104h1v1h-1zM81 101h1v1h-1zM28 89h1v1h-1zM106 93h1v1h-1zM56 84h1v1h-1zM38 87h1v1h-1zM84 84h1v1h-1zM87 95h1v1h-1zM13 83h1v1h-1zM118 98h1v1h-1zM61 92h1v1h-1zM49 95h1v1h-1zM125 90h1v1h-1zM47 95h1v1h-1zM41 97h1v1h-1zM27 84h1v1h-1zM62 104h1v1h-1zM36 88h1v1h-1zM27 87h1v1h-1zM118 93h1v1h-1zM117 103h1v1h-1zM79 103h1v1h-1zM97 100h1v1h-1zM68 83h1v1h-1zM33 94h1v1h-1zM46 85h1v1h-1zM16 100h1v1h-1zM52 83h1v1h-1zM64 88h1v1h-1zM104 93h1v1h-1zM47 90h1v1h-1zM56 85h1v1h-1zM105 83h1v1h-1zM96 88h1v1h-1zM111 92h1v1h-1zM21 93h1v1h-1zM58 90h1v1h-1zM44 83h1v1h-1zM25 85h1v1h-1zM71 101h1v1h-1zM2 106h1v1h-1zM83 109h1v1h-1zM2 86h1v1h-1zM94 98h1v1h-1zM70 99h1v1h-1zM64 89h1v1h-1zM34 93h1v1h-1zM57 90h1v1h-1zM2 95h1v1h-1zM35 89h1v1h-1zM62 90h1v1h-1zM122 83h1v1h-1zM42 109h1v1h-1zM95 97h1v1h-1zM101 93h1v1h-1zM99 85h1v1h-1zM95 91h1v1h-1zM13 92h1v1h-1zM90 98h1v1h-1zM123 96h1v1h-1zM120 83h1v1h-1zM121 99h1v1h-1zM126 83h1v1h-1zM37 85h1v1h-1zM37 93h1v1h-1zM118 84h1v1h-1zM10 92h1v1h-1zM109 88h1v1h-1zM94 86h1v1h-1zM70 86h1v1h-1zM47 95h1v1h-1zM94 84h1v1h-1zM33 91h1v1h-1zM96 89h1v1h-1zM8 93h1v1h-1zM105 87h1v1h-1zM63 89h1v1h-1zM15 86h1v1h-1z"/><path fill="#4a1060" d="M114 72h1v1h-1zM35 53h1v1h-1zM32 70h1v1h-1zM9 58h1v1h-1zM51 56h1v1h-1zM17 80h1v1h-1zM5 74h1v1h-1zM90 76h1v1h-1zM41 80h1v1h-1zM94 73h1v1h-1zM5 61h1v1h-1zM88 51h1v1h-1zM111 73h1v1h-1zM12 61h1v1h-1zM31 60h1v1h-1zM105 53h1v1h-1zM85 57h1v1h-1zM123 74h1v1h-1zM61 70h1v1h-1zM87 68h1v1h-1zM81 55h1v1h-1zM10 64h1v1h-1zM11 80h1v1h-1zM19 68h1v1h-1zM25 52h1v1h-1zM89 61h1v1h-1zM59 76h1v1h-1zM29 75h1v1h-1zM2 78h1v1h-1zM55 76h1v1h-1zM30 80h1v1h-1zM85 51h1v1h-1zM0 63h1v1h-1zM59 71h1v1h-1zM83 66h1v1h-1zM59 68h1v1h-1zM28 71h1v1h-1zM59 72h1v1h-1zM50 80h1v1h-1zM27 52h1v1h-1zM108 78h1v1h-1zM5 78h1v1h-1zM14 73h1v1h-1zM76 64h1v1h-1zM109 72h1v1h-1zM120 75h1v1h-1zM10 69h1v1h-1zM126 71h1v1h-1zM80 56h1v1h-1zM55 51h1v1h-1zM95 74h1v1h-1zM37 53h1v1h-1zM36 71h1v1h-1zM26 78h1v1h-1zM14 52h1v1h-1zM27 59h1v1h-1zM31 69h1v1h-1zM41 64h1v1h-1zM23 53h1v1h-1zM86 53h1v1h-1zM10 53h1v1h-1zM31 61h1v1h-1zM15 79h1v1h-1zM14 78h1v1h-1zM56 51h1v1h-1zM22 80h1v1h-1zM69 65h1v1h-1zM95 58h1v1h-1zM89 53h1v1h-1zM57 58h1v1h-1zM97 80h1v1h-1zM110 65h1v1h-1zM41 62h1v1h-1zM54 66h1v1h-1zM21 81h1v1h-1zM34 72h1v1h-1zM29 78h1v1h-1zM79 71h1v1h-1zM122 57h1v1h-1zM123 65h1v1h-1zM86 58h1v1h-1zM111 53h1v1h-1zM119 75h1v1h-1zM115 81h1v1h-1zM4 76h1v1h-1zM81 77h1v1h-1zM108 70h1v1h-1zM114 62h1v1h-1zM112 82h1v1h-1zM81 58h1v1h-1zM109 71h1v1h-1zM83 58h1v1h-1zM78 76h1v1h-1zM55 62h1v1h-1zM90 55h1v1h-1zM41 60h1v1h-1zM123 53h1v1h-1zM78 62h1v1h-1zM30 61h1v1h-1zM124 68h1v1h-1zM29 69h1v1h-1zM50 54h1v1h-1zM83 66h1v1h-1zM105 70h1v1h-1zM78 55h1v1h-1zM53 52h1v1h-1zM10 69h1v1h-1zM122 69h1v1h-1zM39 50h1v1h-1zM65 81h1v1h-1zM74 78h1v1h-1zM113 76h1v1h-1zM25 77h1v1h-1zM63 81h1v1h-1zM33 65h1v1h-1zM18 67h1v1h-1zM43 58h1v1h-1zM86 69h1v1h-1zM41 72h1v1h-1zM90 74h1v1h-1zM69 74h1v1h-1zM83 75h1v1h-1zM50 82h1v1h-1zM83 80h1v1h-1zM8 64h1v1h-1zM26 78h1v1h-1zM53 65h1v1h-1zM0 59h1v1h-1zM71 61h1v1h-1zM90 57h1v1h-1zM7 58h1v1h-1zM6 73h1v1h-1zM56 66h1v1h-1zM16 50h1v1h-1zM105 64h1v1h-1zM5 59h1v1h-1zM87 80h1v1h-1zM55 68h1v1h-1zM74 75h1v1h-1zM79 71h1v1h-1zM50 70h1v1h-1zM56 53h1v1h-1zM117 57h1v1h-1zM14 64h1v1h-1zM39 54h1v1h-1zM47 61h1v1h-1zM106 74h1v1h-1zM107 72h1v1h-1zM89 69h1v1h-1zM14 67h1v1h-1zM100 70h1v1h-1zM48 75h1v1h-1zM106 50h1v1h-1zM82 78h1v1h-1zM65 61h1v1h-1zM45 80h1v1h-1zM47 53h1v1h-1zM71 77h1v1h-1zM28 65h1v1h-1zM73 69h1v1h-1zM103 79h1v1h-1zM3 80h1v1h-1zM106 70h1v1h-1zM66 58h1v1h-1zM18 54h1v1h-1zM68 79h1v1h-1zM24 60h1v1h-1zM95 66h1v1h-1zM78 54h1v1h-1zM38 82h1v1h-1zM5 75h1v1h-1zM5 63h1v1h-1zM71 72h1v1h-1zM102 50h1v1h-1zM92 68h1v1h-1zM108 78h1v1h-1zM6 68h1v1h-1zM117 67h1v1h-1zM38 78h1v1h-1zM93 67h1v1h-1zM5 55h1v1h-1zM113 59h1v1h-1zM8 66h1v1h-1zM55 69h1v1h-1zM106 69h1v1h-1zM8 53h1v1h-1zM122 54h1v1h-1zM22 82h1v1h-1zM71 60h1v1h-1zM32 56h1v1h-1zM123 58h1v1h-1zM47 64h1v1h-1zM118 62h1v1h-1zM122 64h1v1h-1zM61 73h1v1h-1zM105 72h1v1h-1zM10 71h1v1h-1zM30 64h1v1h-1zM29 74h1v1h-1zM62 62h1v1h-1zM109 61h1v1h-1zM116 73h1v1h-1zM87 57h1v1h-1zM36 55h1v1h-1zM117 64h1v1h-1zM55 63h1v1h-1zM92 63h1v1h-1zM10 50h1v1h-1zM80 60h1v1h-1zM34 69h1v1h-1zM57 75h1v1h-1zM33 77h1v1h-1zM104 74h1v1h-1zM117 66h1v1h-1zM69 60h1v1h-1zM99 66h1v1h-1zM26 56h1v1h-1zM83 68h1v1h-1zM53 81h1v1h-1zM106 69h1v1h-1zM23 80h1v1h-1zM67 62h1v1h-1zM9 61h1v1h-1zM109 58h1v1h-1zM29 52h1v1h-1zM58 74h1v1h-1zM93 53h1v1h-1zM49 63h1v1h-1zM76 74h1v1h-1zM77 52h1v1h-1zM99 69h1v1h-1zM0 59h1v1h-1zM113 74h1v1h-1zM35 60h1v1h-1zM79 78h1v1h-1zM101 67h1v1h-1zM102 62h1v1h-1zM64 57h1v1h-1zM59 62h1v1h-1zM122 50h1v1h-1zM98 77h1v1h-1zM16 74h1v1h-1zM118 74h1v1h-1zM107 70h1v1h-1zM6 63h1v1h-1zM3 79h1v1h-1zM66 74h1v1h-1zM56 58h1v1h-1zM121 61h1v1h-1zM41 50h1v1h-1zM33 67h1v1h-1zM64 68h1v1h-1zM7 72h1v1h-1zM3 77h1v1h-1zM52 69h1v1h-1zM37 54h1v1h-1zM63 65h1v1h-1zM46 82h1v1h-1zM22 82h1v1h-1zM40 74h1v1h-1zM51 51h1v1h-1zM126 60h1v1h-1zM67 63h1v1h-1zM15 69h1v1h-1zM103 79h1v1h-1zM59 75h1v1h-1zM34 64h1v1h-1zM26 64h1v1h-1zM18 74h1v1h-1zM56 60h1v1h-1zM75 60h1v1h-1zM1 70h1v1h-1zM99 63h1v1h-1zM12 68h1v1h-1zM59 53h1v1h-1zM39 70h1v1h-1zM16 52h1v1h-1zM12 55h1v1h-1zM31 62h1v1h-1zM123 61h1v1h-1zM55 54h1v1h-1zM10 65h1v1h-1zM35 80h1v1h-1zM70 70h1v1h-1zM10 58h1v1h-1zM57 79h1v1h-1zM41 70h1v1h-1zM94 51h1v1h-1zM62 74h1v1h-1zM83 68h1v1h-1zM15 68h1v1h-1zM44 64h1v1h-1zM11 71h1v1h-1zM20 51h1v1h-1zM36 54h1v1h-1zM5 64h1v1h-1zM80 60h1v1h-1zM40 64h1v1h-1zM110 75h1v1h-1zM68 65h1v1h-1zM41 67h1v1h-1zM20 66h1v1h-1zM8 57h1v1h-1zM37 69h1v1h-1zM26 80h1v1h-1zM117 68h1v1h-1zM119 53h1v1h-1zM0 57h1v1h-1zM41 69h1v1h-1zM6 82h1v1h-1zM96 66h1v1h-1zM62 72h1v1h-1zM48 59h1v1h-1zM93 54h1v1h-1zM86 71h1v1h-1zM96 60h1v1h-1zM57 79h1v1h-1zM8 60h1v1h-1zM11 50h1v1h-1zM49 57h1v1h-1zM86 66h1v1h-1zM16 57h1v1h-1zM88 71h1v1h-1zM108 76h1v1h-1zM114 59h1v1h-1zM90 74h1v1h-1zM120 69h1v1h-1zM115 67h1v1h-1zM25 62h1v1h-1zM59 74h1v1h-1zM116 52h1v1h-1zM65 65h1v1h-1zM99 53h1v1h-1zM86 70h1v1h-1zM108 56h1v1h-1zM79 51h1v1h-1zM7 64h1v1h-1zM61 59h1v1h-1zM12 73h1v1h-1zM12 60h1v1h-1zM62 77h1v1h-1zM65 58h1v1h-1zM104 55h1v1h-1zM102 56h1v1h-1zM28 71h1v1h-1zM50 61h1v1h-1zM38 55h1v1h-1zM80 80h1v1h-1zM60 64h1v1h-1zM21 78h1v1h-1zM60 71h1v1h-1zM124 50h1v1h-1zM49 60h1v1h-1zM41 53h1v1h-1zM53 66h1v1h-1zM63 69h1v1h-1zM125 55h1v1h-1zM22 52h1v1h-1zM103 71h1v1h-1zM44 72h1v1h-1zM119 53h1v1h-1zM15 52h1v1h-1zM32 54h1v1h-1zM90 63h1v1h-1zM122 75h1v1h-1zM46 62h1v1h-1zM16 59h1v1h-1z"/><path fill="#5a1470" d="M97 65h1v1h-1zM125 74h1v1h-1zM107 75h1v1h-1zM16 64h1v1h-1zM23 57h1v1h-1zM38 54h1v1h-1zM35 63h1v1h-1zM83 58h1v1h-1zM126 70h1v1h-1zM67 56h1v1h-1zM96 57h1v1h-1zM27 64h1v1h-1zM70 65h1v1h-1zM49 71h1v1h-1zM65 62h1v1h-1zM52 74h1v1h-1zM102 60h1v1h-1zM115 59h1v1h-1zM22 56h1v1h-1zM65 54h1v1h-1zM75 61h1v1h-1zM2 73h1v1h-1zM38 53h1v1h-1zM47 61h1v1h-1zM41 82h1v1h-1zM34 65h1v1h-1zM70 76h1v1h-1zM47 69h1v1h-1zM53 70h1v1h-1zM78 52h1v1h-1zM63 56h1v1h-1zM109 79h1v1h-1zM124 82h1v1h-1zM119 78h1v1h-1zM79 77h1v1h-1zM92 66h1v1h-1zM16 64h1v1h-1zM123 81h1v1h-1zM101 56h1v1h-1zM85 63h1v1h-1zM57 56h1v1h-1zM87 68h1v1h-1zM41 52h1v1h-1zM69 54h1v1h-1zM26 71h1v1h-1zM119 79h1v1h-1zM66 55h1v1h-1zM97 67h1v1h-1zM57 70h1v1h-1zM8 69h1v1h-1zM27 58h1v1h-1zM115 66h1v1h-1zM107 65h1v1h-1zM91 55h1v1h-1zM125 64h1v1h-1zM83 69h1v1h-1zM24 64h1v1h-1zM117 52h1v1h-1zM89 54h1v1h-1zM44 66h1v1h-1zM12 61h1v1h-1zM79 50h1v1h-1zM108 79h1v1h-1zM77 81h1v1h-1zM67 63h1v1h-1zM39 79h1v1h-1zM1 74h1v1h-1zM41 76h1v1h-1zM49 67h1v1h-1zM90 57h1v1h-1zM11 50h1v1h-1zM21 78h1v1h-1zM2 70h1v1h-1zM85 63h1v1h-1zM16 80h1v1h-1zM48 55h1v1h-1zM46 68h1v1h-1zM4 72h1v1h-1zM49 69h1v1h-1zM29 76h1v1h-1zM88 70h1v1h-1zM112 68h1v1h-1zM34 60h1v1h-1zM4 59h1v1h-1zM27 66h1v1h-1zM103 77h1v1h-1zM38 76h1v1h-1zM29 68h1v1h-1zM55 63h1v1h-1zM21 51h1v1h-1zM46 67h1v1h-1zM36 58h1v1h-1zM67 62h1v1h-1zM73 63h1v1h-1zM62 77h1v1h-1zM52 53h1v1h-1zM97 53h1v1h-1zM23 51h1v1h-1zM76 63h1v1h-1zM3 66h1v1h-1zM79 66h1v1h-1zM87 55h1v1h-1zM46 52h1v1h-1zM71 69h1v1h-1zM43 72h1v1h-1zM28 50h1v1h-1zM6 81h1v1h-1zM118 65h1v1h-1zM51 74h1v1h-1zM13 63h1v1h-1zM18 63h1v1h-1zM112 67h1v1h-1zM11 59h1v1h-1zM47 70h1v1h-1zM39 74h1v1h-1zM72 72h1v1h-1zM101 75h1v1h-1zM104 77h1v1h-1zM86 61h1v1h-1zM113 52h1v1h-1zM100 63h1v1h-1zM41 82h1v1h-1zM109 75h1v1h-1zM58 64h1v1h-1zM4 64h1v1h-1zM57 78h1v1h-1zM107 51h1v1h-1zM37 69h1v1h-1zM78 63h1v1h-1zM38 77h1v1h-1zM76 71h1v1h-1zM123 61h1v1h-1zM10 71h1v1h-1zM81 75h1v1h-1zM47 76h1v1h-1zM52 61h1v1h-1zM121 82h1v1h-1zM34 78h1v1h-1zM48 68h1v1h-1zM119 72h1v1h-1zM26 57h1v1h-1zM99 63h1v1h-1zM22 72h1v1h-1zM50 70h1v1h-1zM114 72h1v1h-1zM76 63h1v1h-1zM37 64h1v1h-1zM99 73h1v1h-1zM43 73h1v1h-1zM13 65h1v1h-1zM5 51h1v1h-1zM92 74h1v1h-1zM47 65h1v1h-1zM46 63h1v1h-1zM122 67h1v1h-1zM0 57h1v1h-1zM85 51h1v1h-1zM28 70h1v1h-1zM112 68h1v1h-1zM22 80h1v1h-1zM6 51h1v1h-1zM75 64h1v1h-1zM99 56h1v1h-1zM26 50h1v1h-1zM91 66h1v1h-1zM28 76h1v1h-1zM90 56h1v1h-1zM30 56h1v1h-1zM100 74h1v1h-1zM10 72h1v1h-1zM29 82h1v1h-1zM70 64h1v1h-1zM8 80h1v1h-1zM8 50h1v1h-1zM90 77h1v1h-1zM124 57h1v1h-1zM45 73h1v1h-1zM82 51h1v1h-1zM124 60h1v1h-1zM80 78h1v1h-1zM122 63h1v1h-1zM24 56h1v1h-1zM81 62h1v1h-1zM87 75h1v1h-1zM23 67h1v1h-1zM88 75h1v1h-1zM110 69h1v1h-1zM50 72h1v1h-1zM10 60h1v1h-1zM120 55h1v1h-1zM121 57h1v1h-1zM76 60h1v1h-1zM109 65h1v1h-1zM116 73h1v1h-1zM110 58h1v1h-1zM3 80h1v1h-1zM2 59h1v1h-1zM89 81h1v1h-1zM1 50h1v1h-1zM6 64h1v1h-1zM30 59h1v1h-1zM118 67h1v1h-1zM106 63h1v1h-1zM103 70h1v1h-1zM41 60h1v1h-1zM55 61h1v1h-1zM115 69h1v1h-1zM120 67h1v1h-1zM86 71h1v1h-1zM61 57h1v1h-1zM110 57h1v1h-1zM78 75h1v1h-1zM14 55h1v1h-1zM90 69h1v1h-1zM122 57h1v1h-1zM4 66h1v1h-1zM100 58h1v1h-1zM29 62h1v1h-1zM1 64h1v1h-1zM64 69h1v1h-1zM122 57h1v1h-1zM47 51h1v1h-1zM121 58h1v1h-1zM49 69h1v1h-1zM38 63h1v1h-1zM38 62h1v1h-1zM34 72h1v1h-1zM81 60h1v1h-1zM3 64h1v1h-1zM123 50h1v1h-1zM112 60h1v1h-1zM39 81h1v1h-1zM26 71h1v1h-1zM47 56h1v1h-1zM44 54h1v1h-1zM57 54h1v1h-1zM78 80h1v1h-1zM15 50h1v1h-1zM38 77h1v1h-1zM53 61h1v1h-1zM61 68h1v1h-1zM45 57h1v1h-1zM78 62h1v1h-1zM87 65h1v1h-1zM61 56h1v1h-1zM0 63h1v1h-1zM56 55h1v1h-1zM43 60h1v1h-1zM103 67h1v1h-1zM1 62h1v1h-1zM119 64h1v1h-1zM54 60h1v1h-1zM94 55h1v1h-1zM38 65h1v1h-1zM25 79h1v1h-1zM79 57h1v1h-1zM24 69h1v1h-1zM0 52h1v1h-1zM75 75h1v1h-1zM14 61h1v1h-1zM13 79h1v1h-1zM37 62h1v1h-1zM25 54h1v1h-1zM57 60h1v1h-1zM52 73h1v1h-1zM47 60h1v1h-1zM33 52h1v1h-1zM9 65h1v1h-1zM55 54h1v1h-1zM56 69h1v1h-1zM122 58h1v1h-1zM4 67h1v1h-1zM122 63h1v1h-1zM21 57h1v1h-1zM62 81h1v1h-1zM123 75h1v1h-1zM54 81h1v1h-1zM102 78h1v1h-1zM124 58h1v1h-1zM55 72h1v1h-1zM106 62h1v1h-1zM105 65h1v1h-1zM28 53h1v1h-1zM6 67h1v1h-1zM103 62h1v1h-1zM64 72h1v1h-1zM8 80h1v1h-1zM112 75h1v1h-1zM75 58h1v1h-1zM111 74h1v1h-1zM100 50h1v1h-1zM23 50h1v1h-1zM72 50h1v1h-1zM37 73h1v1h-1zM4 80h1v1h-1zM21 67h1v1h-1zM125 71h1v1h-1zM9 53h1v1h-1zM7 61h1v1h-1zM56 52h1v1h-1zM94 50h1v1h-1zM63 51h1v1h-1zM63 59h1v1h-1zM33 68h1v1h-1zM55 58h1v1h-1zM53 59h1v1h-1zM15 67h1v1h-1zM48 53h1v1h-1zM62 51h1v1h-1zM91 80h1v1h-1zM9 76h1v1h-1zM88 66h1v1h-1zM25 76h1v1h-1zM84 73h1v1h-1zM42 79h1v1h-1zM65 72h1v1h-1zM33 82h1v1h-1zM91 73h1v1h-1zM123 62h1v1h-1zM29 66h1v1h-1zM98 74h1v1h-1zM53 61h1v1h-1zM62 69h1v1h-1zM73 75h1v1h-1zM7 77h1v1h-1zM123 74h1v1h-1zM95 65h1v1h-1zM100 66h1v1h-1zM113 55h1v1h-1zM109 70h1v1h-1zM12 68h1v1h-1zM20 61h1v1h-1zM7 60h1v1h-1zM76 81h1v1h-1zM116 58h1v1h-1zM77 70h1v1h-1zM110 58h1v1h-1zM71 67h1v1h-1zM54 74h1v1h-1zM2 52h1v1h-1zM95 58h1v1h-1zM47 59h1v1h-1zM48 51h1v1h-1zM121 73h1v1h-1zM3 61h1v1h-1zM94 74h1v1h-1zM116 74h1v1h-1zM54 69h1v1h-1zM15 80h1v1h-1zM4 52h1v1h-1zM91 52h1v1h-1zM123 63h1v1h-1zM84 81h1v1h-1zM79 58h1v1h-1zM22 82h1v1h-1zM36 76h1v1h-1zM71 53h1v1h-1zM120 72h1v1h-1zM94 61h1v1h-1zM48 66h1v1h-1zM8 53h1v1h-1zM0 75h1v1h-1zM83 60h1v1h-1zM85 61h1v1h-1zM23 56h1v1h-1zM105 52h1v1h-1zM27 53h1v1h-1zM59 75h1v1h-1zM29 74h1v1h-1zM34 76h1v1h-1zM119 73h1v1h-1zM122 60h1v1h-1zM54 62h1v1h-1zM16 54h1v1h-1zM17 74h1v1h-1zM21 71h1v1h-1zM45 77h1v1h-1zM52 68h1v1h-1zM37 61h1v1h-1zM23 67h1v1h-1zM101 60h1v1h-1zM39 56h1v1h-1zM105 53h1v1h-1zM12 77h1v1h-1zM90 65h1v1h-1zM94 74h1v1h-1zM67 55h1v1h-1zM14 72h1v1h-1zM15 58h1v1h-1zM13 60h1v1h-1zM125 71h1v1h-1zM7 77h1v1h-1zM51 71h1v1h-1zM102 67h1v1h-1zM126 59h1v1h-1zM58 50h1v1h-1zM51 66h1v1h-1zM120 61h1v1h-1zM87 56h1v1h-1zM56 57h1v1h-1z"/><path fill="#a01850" d="M84 106h1v1h-1zM56 94h1v1h-1zM88 88h1v1h-1zM111 83h1v1h-1zM123 94h1v1h-1zM15 88h1v1h-1zM115 93h1v1h-1zM125 83h1v1h-1zM122 85h1v1h-1zM90 95h1v1h-1zM85 106h1v1h-1zM79 97h1v1h-1zM104 86h1v1h-1zM57 84h1v1h-1zM83 91h1v1h-1zM59 93h1v1h-1zM101 86h1v1h-1zM36 102h1v1h-1zM67 93h1v1h-1zM61 94h1v1h-1zM22 84h1v1h-1zM106 83h1v1h-1zM94 90h1v1h-1zM105 88h1v1h-1zM0 85h1v1h-1zM29 95h1v1h-1zM68 93h1v1h-1zM84 96h1v1h-1zM100 91h1v1h-1zM100 89h1v1h-1zM38 101h1v1h-1zM8 91h1v1h-1zM13 99h1v1h-1zM102 93h1v1h-1zM2 88h1v1h-1zM104 97h1v1h-1zM48 92h1v1h-1zM120 106h1v1h-1zM105 84h1v1h-1zM58 90h1v1h-1zM36 88h1v1h-1zM58 84h1v1h-1zM85 103h1v1h-1zM103 87h1v1h-1zM39 95h1v1h-1zM41 96h1v1h-1zM116 95h1v1h-1zM116 89h1v1h-1zM23 88h1v1h-1zM51 83h1v1h-1zM20 103h1v1h-1zM1 87h1v1h-1zM121 93h1v1h-1zM67 96h1v1h-1zM81 89h1v1h-1zM88 94h1v1h-1zM80 85h1v1h-1zM4 85h1v1h-1zM43 85h1v1h-1zM3 89h1v1h-1zM86 97h1v1h-1zM69 90h1v1h-1zM90 86h1v1h-1zM59 100h1v1h-1zM82 98h1v1h-1zM68 93h1v1h-1zM24 106h1v1h-1zM13 98h1v1h-1zM24 84h1v1h-1zM105 90h1v1h-1zM53 84h1v1h-1zM50 85h1v1h-1zM39 86h1v1h-1zM12 94h1v1h-1zM65 84h1v1h-1zM43 88h1v1h-1zM116 96h1v1h-1zM90 88h1v1h-1zM97 89h1v1h-1zM44 85h1v1h-1zM85 90h1v1h-1zM44 85h1v1h-1zM43 86h1v1h-1zM2 99h1v1h-1zM6 87h1v1h-1zM21 87h1v1h-1zM15 99h1v1h-1zM35 94h1v1h-1zM66 94h1v1h-1zM56 92h1v1h-1zM95 106h1v1h-1zM49 100h1v1h-1zM18 90h1v1h-1zM99 93h1v1h-1zM56 83h1v1h-1zM24 93h1v1h-1zM76 92h1v1h-1zM78 101h1v1h-1zM41 95h1v1h-1zM62 88h1v1h-1zM22 83h1v1h-1zM61 92h1v1h-1zM122 91h1v1h-1zM91 93h1v1h-1zM7 90h1v1h-1zM105 98h1v1h-1zM89 83h1v1h-1zM39 92h1v1h-1zM95 95h1v1h-1zM7 84h1v1h-1zM57 97h1v1h-1zM36 87h1v1h-1zM26 83h1v1h-1zM15 86h1v1h-1zM81 86h1v1h-1zM31 98h1v1h-1zM78 85h1v1h-1zM32 90h1v1h-1zM57 85h1v1h-1zM95 87h1v1h-1zM56 93h1v1h-1zM90 108h1v1h-1zM92 85h1v1h-1zM98 102h1v1h-1zM67 88h1v1h-1zM13 84h1v1h-1zM96 87h1v1h-1z"/><path fill="#7a1868" d="M4 56h1v1h-1zM92 51h1v1h-1zM84 70h1v1h-1zM55 52h1v1h-1zM87 74h1v1h-1zM48 78h1v1h-1zM99 61h1v1h-1zM75 55h1v1h-1zM25 55h1v1h-1zM83 66h1v1h-1zM96 70h1v1h-1zM69 82h1v1h-1zM98 63h1v1h-1zM24 82h1v1h-1zM65 65h1v1h-1zM35 58h1v1h-1zM51 53h1v1h-1zM44 66h1v1h-1zM30 63h1v1h-1zM44 61h1v1h-1zM63 51h1v1h-1zM116 50h1v1h-1zM14 63h1v1h-1zM76 72h1v1h-1zM91 55h1v1h-1zM73 82h1v1h-1zM6 63h1v1h-1zM76 52h1v1h-1zM122 50h1v1h-1zM13 73h1v1h-1zM104 58h1v1h-1zM88 66h1v1h-1zM42 67h1v1h-1zM69 51h1v1h-1zM66 81h1v1h-1zM10 64h1v1h-1zM55 70h1v1h-1zM84 82h1v1h-1zM114 55h1v1h-1zM102 82h1v1h-1zM109 72h1v1h-1zM24 56h1v1h-1zM105 68h1v1h-1zM22 69h1v1h-1zM107 67h1v1h-1zM125 61h1v1h-1zM26 67h1v1h-1zM36 60h1v1h-1zM36 53h1v1h-1zM77 51h1v1h-1zM63 65h1v1h-1zM37 80h1v1h-1zM5 51h1v1h-1zM38 81h1v1h-1zM121 62h1v1h-1zM63 63h1v1h-1zM24 56h1v1h-1zM114 68h1v1h-1zM111 70h1v1h-1zM78 62h1v1h-1zM24 65h1v1h-1zM3 70h1v1h-1zM8 57h1v1h-1zM101 61h1v1h-1zM52 78h1v1h-1zM82 82h1v1h-1zM108 75h1v1h-1zM57 82h1v1h-1zM120 67h1v1h-1zM30 57h1v1h-1zM46 52h1v1h-1zM57 63h1v1h-1zM120 69h1v1h-1zM38 51h1v1h-1zM63 55h1v1h-1zM115 73h1v1h-1zM115 66h1v1h-1zM41 68h1v1h-1zM55 77h1v1h-1zM28 77h1v1h-1zM114 79h1v1h-1zM7 65h1v1h-1zM125 55h1v1h-1zM90 68h1v1h-1zM21 81h1v1h-1zM27 74h1v1h-1zM29 55h1v1h-1zM53 63h1v1h-1zM122 64h1v1h-1zM48 70h1v1h-1zM20 70h1v1h-1zM89 60h1v1h-1zM104 50h1v1h-1zM95 72h1v1h-1zM70 69h1v1h-1zM6 58h1v1h-1zM92 50h1v1h-1zM59 66h1v1h-1zM122 60h1v1h-1zM43 76h1v1h-1zM33 79h1v1h-1zM22 72h1v1h-1zM35 63h1v1h-1zM75 54h1v1h-1zM91 76h1v1h-1zM44 76h1v1h-1zM126 67h1v1h-1zM84 52h1v1h-1zM19 68h1v1h-1zM54 59h1v1h-1zM92 60h1v1h-1zM87 79h1v1h-1zM76 61h1v1h-1zM18 71h1v1h-1zM21 71h1v1h-1zM65 66h1v1h-1zM67 59h1v1h-1zM93 81h1v1h-1zM27 54h1v1h-1zM19 66h1v1h-1zM111 73h1v1h-1zM102 58h1v1h-1zM83 56h1v1h-1zM30 74h1v1h-1zM26 60h1v1h-1zM71 54h1v1h-1zM36 65h1v1h-1zM72 55h1v1h-1zM113 78h1v1h-1zM51 58h1v1h-1zM62 53h1v1h-1zM24 80h1v1h-1zM101 66h1v1h-1zM38 53h1v1h-1zM68 76h1v1h-1zM116 74h1v1h-1zM55 55h1v1h-1zM86 80h1v1h-1zM20 72h1v1h-1zM49 54h1v1h-1zM80 60h1v1h-1zM57 61h1v1h-1zM95 72h1v1h-1zM23 72h1v1h-1zM1 50h1v1h-1zM16 59h1v1h-1zM123 67h1v1h-1zM34 65h1v1h-1zM28 73h1v1h-1zM60 51h1v1h-1zM50 57h1v1h-1zM45 72h1v1h-1zM7 67h1v1h-1zM94 70h1v1h-1zM73 58h1v1h-1zM56 63h1v1h-1zM34 80h1v1h-1zM24 61h1v1h-1zM12 72h1v1h-1zM13 69h1v1h-1zM102 71h1v1h-1zM74 60h1v1h-1zM19 55h1v1h-1zM110 64h1v1h-1zM40 74h1v1h-1zM27 72h1v1h-1zM86 71h1v1h-1zM112 68h1v1h-1zM82 65h1v1h-1zM67 70h1v1h-1zM52 76h1v1h-1zM26 77h1v1h-1zM91 79h1v1h-1zM45 69h1v1h-1zM114 51h1v1h-1zM32 80h1v1h-1zM118 63h1v1h-1zM57 55h1v1h-1zM69 50h1v1h-1zM92 52h1v1h-1zM40 71h1v1h-1zM55 70h1v1h-1zM12 70h1v1h-1zM107 53h1v1h-1zM101 80h1v1h-1zM54 62h1v1h-1zM57 58h1v1h-1zM50 54h1v1h-1zM123 57h1v1h-1zM109 75h1v1h-1zM6 68h1v1h-1zM22 80h1v1h-1zM43 73h1v1h-1zM110 75h1v1h-1zM29 60h1v1h-1zM103 81h1v1h-1zM83 51h1v1h-1zM32 58h1v1h-1zM47 71h1v1h-1zM69 72h1v1h-1zM69 50h1v1h-1zM6 77h1v1h-1zM78 59h1v1h-1zM64 65h1v1h-1zM79 82h1v1h-1zM33 59h1v1h-1zM75 73h1v1h-1zM61 55h1v1h-1zM123 54h1v1h-1zM124 59h1v1h-1zM59 77h1v1h-1zM111 50h1v1h-1zM126 76h1v1h-1zM80 75h1v1h-1zM53 76h1v1h-1zM24 64h1v1h-1zM71 55h1v1h-1zM18 51h1v1h-1zM74 72h1v1h-1zM90 76h1v1h-1zM4 75h1v1h-1zM79 76h1v1h-1zM45 80h1v1h-1zM15 68h1v1h-1zM113 66h1v1h-1zM49 65h1v1h-1zM15 50h1v1h-1zM117 64h1v1h-1zM96 74h1v1h-1zM79 75h1v1h-1zM125 56h1v1h-1zM63 66h1v1h-1zM83 79h1v1h-1zM52 65h1v1h-1zM114 79h1v1h-1zM99 53h1v1h-1zM74 69h1v1h-1zM69 60h1v1h-1zM43 64h1v1h-1zM41 70h1v1h-1zM4 55h1v1h-1zM17 54h1v1h-1zM121 71h1v1h-1zM1 55h1v1h-1zM90 82h1v1h-1zM82 64h1v1h-1zM29 80h1v1h-1zM17 58h1v1h-1zM28 53h1v1h-1zM111 55h1v1h-1zM113 79h1v1h-1zM76 68h1v1h-1zM102 64h1v1h-1zM93 66h1v1h-1zM103 62h1v1h-1zM113 58h1v1h-1zM27 62h1v1h-1zM4 62h1v1h-1zM77 64h1v1h-1zM122 59h1v1h-1zM6 68h1v1h-1zM17 63h1v1h-1zM6 68h1v1h-1zM18 55h1v1h-1zM17 66h1v1h-1zM28 80h1v1h-1zM32 54h1v1h-1zM58 74h1v1h-1zM22 54h1v1h-1zM89 69h1v1h-1zM122 62h1v1h-1zM83 51h1v1h-1zM85 82h1v1h-1zM119 63h1v1h-1zM50 78h1v1h-1zM62 73h1v1h-1zM126 68h1v1h-1zM121 80h1v1h-1zM22 79h1v1h-1zM120 58h1v1h-1zM11 76h1v1h-1zM1 57h1v1h-1zM115 73h1v1h-1zM126 54h1v1h-1zM103 68h1v1h-1zM108 55h1v1h-1zM106 57h1v1h-1zM28 51h1v1h-1zM100 52h1v1h-1zM67 54h1v1h-1zM37 58h1v1h-1zM48 76h1v1h-1zM21 58h1v1h-1zM108 82h1v1h-1zM63 82h1v1h-1zM82 79h1v1h-1zM5 56h1v1h-1zM22 66h1v1h-1zM41 55h1v1h-1zM16 56h1v1h-1zM43 57h1v1h-1zM70 53h1v1h-1zM53 51h1v1h-1zM17 79h1v1h-1zM68 59h1v1h-1zM103 51h1v1h-1zM41 57h1v1h-1zM60 67h1v1h-1zM125 69h1v1h-1zM68 61h1v1h-1zM81 59h1v1h-1zM7 53h1v1h-1zM92 59h1v1h-1zM8 62h1v1h-1zM120 78h1v1h-1zM117 57h1v1h-1zM7 58h1v1h-1zM99 52h1v1h-1zM124 75h1v1h-1zM5 66h1v1h-1zM47 74h1v1h-1zM118 68h1v1h-1zM43 75h1v1h-1zM34 76h1v1h-1zM68 70h1v1h-1zM41 57h1v1h-1zM52 62h1v1h-1zM5 67h1v1h-1zM58 82h1v1h-1zM119 66h1v1h-1zM57 77h1v1h-1zM22 81h1v1h-1zM65 67h1v1h-1zM110 72h1v1h-1zM123 53h1v1h-1zM31 62h1v1h-1zM122 65h1v1h-1z"/><path fill="#c02040" d="M10 97h1v1h-1zM51 91h1v1h-1zM8 83h1v1h-1zM39 88h1v1h-1zM108 92h1v1h-1zM44 100h1v1h-1zM47 91h1v1h-1zM76 93h1v1h-1zM120 101h1v1h-1zM90 92h1v1h-1zM58 84h1v1h-1zM104 93h1v1h-1zM33 84h1v1h-1zM120 89h1v1h-1zM79 85h1v1h-1zM76 95h1v1h-1zM53 88h1v1h-1zM111 87h1v1h-1zM48 91h1v1h-1zM52 92h1v1h-1zM14 95h1v1h-1zM96 92h1v1h-1zM119 89h1v1h-1zM118 85h1v1h-1zM62 85h1v1h-1zM53 95h1v1h-1zM35 87h1v1h-1zM6 85h1v1h-1zM62 85h1v1h-1zM47 96h1v1h-1zM124 83h1v1h-1zM74 97h1v1h-1zM125 94h1v1h-1zM85 96h1v1h-1zM96 99h1v1h-1zM39 98h1v1h-1zM19 95h1v1h-1zM64 83h1v1h-1zM71 97h1v1h-1zM54 101h1v1h-1zM92 91h1v1h-1zM6 95h1v1h-1zM31 92h1v1h-1zM110 100h1v1h-1zM108 87h1v1h-1zM111 93h1v1h-1zM40 98h1v1h-1zM100 92h1v1h-1zM121 102h1v1h-1zM0 98h1v1h-1zM79 95h1v1h-1zM75 96h1v1h-1zM113 89h1v1h-1zM1 87h1v1h-1zM67 94h1v1h-1zM27 84h1v1h-1zM59 102h1v1h-1zM119 87h1v1h-1zM69 91h1v1h-1zM99 94h1v1h-1zM123 93h1v1h-1zM126 85h1v1h-1zM113 103h1v1h-1zM94 95h1v1h-1zM75 90h1v1h-1zM33 100h1v1h-1zM50 93h1v1h-1zM77 83h1v1h-1zM58 90h1v1h-1zM56 89h1v1h-1zM77 88h1v1h-1zM3 89h1v1h-1zM90 89h1v1h-1zM81 93h1v1h-1zM120 88h1v1h-1zM52 90h1v1h-1zM53 97h1v1h-1zM97 87h1v1h-1zM31 105h1v1h-1zM56 86h1v1h-1zM71 105h1v1h-1zM82 104h1v1h-1zM10 85h1v1h-1zM13 84h1v1h-1zM16 96h1v1h-1zM4 93h1v1h-1zM61 85h1v1h-1zM22 83h1v1h-1zM70 88h1v1h-1zM64 90h1v1h-1zM43 92h1v1h-1zM69 86h1v1h-1zM85 87h1v1h-1zM68 86h1v1h-1zM122 87h1v1h-1zM74 84h1v1h-1zM87 83h1v1h-1zM9 94h1v1h-1zM53 90h1v1h-1zM98 103h1v1h-1zM37 93h1v1h-1zM126 84h1v1h-1zM76 95h1v1h-1zM29 87h1v1h-1zM122 94h1v1h-1zM82 85h1v1h-1zM97 107h1v1h-1zM121 99h1v1h-1z"/><path fill="#3a1050" d="M3 41h1v1h-1zM114 45h1v1h-1zM36 33h1v1h-1zM3 41h1v1h-1zM23 18h1v1h-1zM92 17h1v1h-1zM10 23h1v1h-1zM44 34h1v1h-1zM36 46h1v1h-1zM105 38h1v1h-1zM102 45h1v1h-1zM10 25h1v1h-1zM121 23h1v1h-1zM8 37h1v1h-1zM120 26h1v1h-1zM19 46h1v1h-1zM31 38h1v1h-1zM38 38h1v1h-1zM80 35h1v1h-1zM89 20h1v1h-1zM26 13h1v1h-1zM68 11h1v1h-1zM42 24h1v1h-1zM111 37h1v1h-1zM8 16h1v1h-1zM42 24h1v1h-1zM97 44h1v1h-1zM10 46h1v1h-1zM115 28h1v1h-1zM91 43h1v1h-1zM121 49h1v1h-1zM116 34h1v1h-1zM75 47h1v1h-1zM95 19h1v1h-1zM71 37h1v1h-1zM115 46h1v1h-1zM97 35h1v1h-1zM126 49h1v1h-1zM42 46h1v1h-1zM108 42h1v1h-1zM50 24h1v1h-1zM32 47h1v1h-1zM57 37h1v1h-1zM102 49h1v1h-1zM68 5h1v1h-1zM48 35h1v1h-1zM48 31h1v1h-1zM27 44h1v1h-1zM47 29h1v1h-1zM6 5h1v1h-1zM7 48h1v1h-1zM105 44h1v1h-1zM65 47h1v1h-1zM23 48h1v1h-1zM49 47h1v1h-1zM83 46h1v1h-1zM22 48h1v1h-1zM74 48h1v1h-1zM3 44h1v1h-1zM119 13h1v1h-1zM83 0h1v1h-1zM13 43h1v1h-1zM10 37h1v1h-1zM29 34h1v1h-1zM77 43h1v1h-1zM77 25h1v1h-1zM96 35h1v1h-1zM43 26h1v1h-1zM69 47h1v1h-1zM38 29h1v1h-1zM26 31h1v1h-1zM16 37h1v1h-1zM92 28h1v1h-1zM69 5h1v1h-1zM53 33h1v1h-1zM42 32h1v1h-1zM24 37h1v1h-1zM0 45h1v1h-1zM85 44h1v1h-1zM101 23h1v1h-1zM123 37h1v1h-1zM92 39h1v1h-1zM110 37h1v1h-1zM32 27h1v1h-1zM110 27h1v1h-1zM126 25h1v1h-1zM59 32h1v1h-1zM3 16h1v1h-1zM36 35h1v1h-1zM121 31h1v1h-1zM15 31h1v1h-1zM1 10h1v1h-1zM2 6h1v1h-1zM16 37h1v1h-1zM69 27h1v1h-1zM58 34h1v1h-1zM76 48h1v1h-1zM61 49h1v1h-1zM120 44h1v1h-1zM43 40h1v1h-1zM113 39h1v1h-1zM48 26h1v1h-1zM13 21h1v1h-1zM96 37h1v1h-1zM21 32h1v1h-1zM84 35h1v1h-1zM65 47h1v1h-1zM23 24h1v1h-1zM60 49h1v1h-1zM62 8h1v1h-1zM80 37h1v1h-1zM90 29h1v1h-1zM99 45h1v1h-1zM64 33h1v1h-1zM49 28h1v1h-1zM31 31h1v1h-1zM52 29h1v1h-1zM25 38h1v1h-1zM94 40h1v1h-1zM93 22h1v1h-1zM50 17h1v1h-1zM25 38h1v1h-1zM42 40h1v1h-1zM30 26h1v1h-1zM110 47h1v1h-1zM30 30h1v1h-1zM66 15h1v1h-1zM115 49h1v1h-1zM14 36h1v1h-1zM97 23h1v1h-1zM19 43h1v1h-1zM58 48h1v1h-1zM81 44h1v1h-1zM0 38h1v1h-1zM11 16h1v1h-1zM60 45h1v1h-1zM93 18h1v1h-1zM99 13h1v1h-1zM39 39h1v1h-1zM89 34h1v1h-1zM122 46h1v1h-1zM65 41h1v1h-1zM112 37h1v1h-1zM110 41h1v1h-1zM76 33h1v1h-1zM41 37h1v1h-1zM119 23h1v1h-1zM122 26h1v1h-1zM64 43h1v1h-1zM114 44h1v1h-1zM110 16h1v1h-1zM106 44h1v1h-1zM14 43h1v1h-1zM58 19h1v1h-1zM112 37h1v1h-1zM78 49h1v1h-1zM81 16h1v1h-1zM71 31h1v1h-1zM2 41h1v1h-1zM117 24h1v1h-1zM125 42h1v1h-1zM101 29h1v1h-1zM76 18h1v1h-1zM90 8h1v1h-1zM108 13h1v1h-1zM49 48h1v1h-1zM53 44h1v1h-1zM84 43h1v1h-1zM15 44h1v1h-1zM34 32h1v1h-1zM47 29h1v1h-1zM31 22h1v1h-1zM77 12h1v1h-1zM1 43h1v1h-1zM7 18h1v1h-1zM63 45h1v1h-1zM112 47h1v1h-1zM116 13h1v1h-1zM84 47h1v1h-1zM103 14h1v1h-1zM94 22h1v1h-1zM18 42h1v1h-1zM102 16h1v1h-1zM65 9h1v1h-1zM98 44h1v1h-1zM0 29h1v1h-1zM39 49h1v1h-1zM87 34h1v1h-1zM66 42h1v1h-1zM116 11h1v1h-1zM98 5h1v1h-1zM5 48h1v1h-1zM44 33h1v1h-1zM84 45h1v1h-1zM59 24h1v1h-1zM125 49h1v1h-1zM2 21h1v1h-1zM41 18h1v1h-1zM122 33h1v1h-1zM101 24h1v1h-1zM80 28h1v1h-1zM10 44h1v1h-1zM17 43h1v1h-1zM42 30h1v1h-1zM6 4h1v1h-1zM89 16h1v1h-1zM37 18h1v1h-1zM6 29h1v1h-1zM34 15h1v1h-1zM59 13h1v1h-1zM14 11h1v1h-1zM83 28h1v1h-1zM41 48h1v1h-1zM104 10h1v1h-1zM125 31h1v1h-1zM83 35h1v1h-1zM23 25h1v1h-1zM27 41h1v1h-1zM47 24h1v1h-1zM68 44h1v1h-1zM126 13h1v1h-1zM80 31h1v1h-1zM64 22h1v1h-1zM78 31h1v1h-1zM46 25h1v1h-1zM23 37h1v1h-1zM96 27h1v1h-1zM108 15h1v1h-1zM46 26h1v1h-1zM66 12h1v1h-1zM93 24h1v1h-1zM102 49h1v1h-1zM11 39h1v1h-1zM88 37h1v1h-1zM20 29h1v1h-1zM60 46h1v1h-1zM66 17h1v1h-1zM93 23h1v1h-1zM125 41h1v1h-1zM32 35h1v1h-1zM81 25h1v1h-1z"/></pattern><pattern id="mnb" patternUnits="userSpaceOnUse" x="498" y="799" width="127" height="110"><path fill="#2a0c3c" d="M4 46h1v1h-1zM50 36h1v1h-1zM104 30h1v1h-1zM74 21h1v1h-1zM113 24h1v1h-1zM7 26h1v1h-1zM42 49h1v1h-1zM77 22h1v1h-1zM45 30h1v1h-1zM75 16h1v1h-1zM91 39h1v1h-1zM51 38h1v1h-1zM51 44h1v1h-1zM68 36h1v1h-1zM28 21h1v1h-1zM7 26h1v1h-1zM0 28h1v1h-1zM1 37h1v1h-1zM42 48h1v1h-1zM88 42h1v1h-1zM101 23h1v1h-1zM43 32h1v1h-1zM89 25h1v1h-1zM29 37h1v1h-1zM27 32h1v1h-1zM50 19h1v1h-1zM117 17h1v1h-1zM106 49h1v1h-1zM7 9h1v1h-1zM10 40h1v1h-1zM118 38h1v1h-1zM38 14h1v1h-1zM105 11h1v1h-1zM56 15h1v1h-1zM13 30h1v1h-1zM105 43h1v1h-1zM50 41h1v1h-1zM30 48h1v1h-1zM50 25h1v1h-1zM126 12h1v1h-1zM11 14h1v1h-1zM39 15h1v1h-1zM22 40h1v1h-1zM41 46h1v1h-1zM93 43h1v1h-1zM0 45h1v1h-1zM7 47h1v1h-1zM75 22h1v1h-1zM2 33h1v1h-1zM114 37h1v1h-1zM43 26h1v1h-1zM117 47h1v1h-1zM30 38h1v1h-1zM36 48h1v1h-1zM36 8h1v1h-1zM109 17h1v1h-1zM102 45h1v1h-1zM57 26h1v1h-1zM114 18h1v1h-1zM58 42h1v1h-1zM52 7h1v1h-1zM85 46h1v1h-1zM106 10h1v1h-1zM55 3h1v1h-1zM27 26h1v1h-1zM71 44h1v1h-1zM47 15h1v1h-1zM89 25h1v1h-1zM74 41h1v1h-1zM115 15h1v1h-1zM35 24h1v1h-1zM75 33h1v1h-1zM26 36h1v1h-1zM75 10h1v1h-1zM91 41h1v1h-1zM14 8h1v1h-1zM74 34h1v1h-1zM64 45h1v1h-1zM61 47h1v1h-1zM57 8h1v1h-1zM7 27h1v1h-1zM87 35h1v1h-1zM6 9h1v1h-1zM77 39h1v1h-1zM107 9h1v1h-1zM48 33h1v1h-1zM56 35h1v1h-1zM110 26h1v1h-1zM20 20h1v1h-1zM23 47h1v1h-1zM102 43h1v1h-1zM81 34h1v1h-1zM38 26h1v1h-1zM111 16h1v1h-1zM107 15h1v1h-1zM74 31h1v1h-1zM49 25h1v1h-1zM2 21h1v1h-1zM2 45h1v1h-1zM32 48h1v1h-1zM85 24h1v1h-1zM34 31h1v1h-1zM102 37h1v1h-1zM9 44h1v1h-1zM124 29h1v1h-1zM95 30h1v1h-1zM36 7h1v1h-1zM119 23h1v1h-1zM49 18h1v1h-1zM84 26h1v1h-1zM88 44h1v1h-1zM25 33h1v1h-1zM89 38h1v1h-1zM98 42h1v1h-1zM6 42h1v1h-1zM21 40h1v1h-1zM8 25h1v1h-1zM5 38h1v1h-1zM124 37h1v1h-1zM109 46h1v1h-1zM71 29h1v1h-1zM72 31h1v1h-1zM84 21h1v1h-1zM14 28h1v1h-1zM115 35h1v1h-1zM64 11h1v1h-1zM11 40h1v1h-1zM108 47h1v1h-1zM96 7h1v1h-1zM79 41h1v1h-1zM24 48h1v1h-1zM110 27h1v1h-1zM57 26h1v1h-1zM126 33h1v1h-1zM103 34h1v1h-1zM59 40h1v1h-1zM99 27h1v1h-1zM38 21h1v1h-1zM125 25h1v1h-1zM74 39h1v1h-1zM93 47h1v1h-1zM4 33h1v1h-1zM106 48h1v1h-1zM121 22h1v1h-1zM31 40h1v1h-1zM111 24h1v1h-1zM25 49h1v1h-1zM97 43h1v1h-1zM40 18h1v1h-1zM19 33h1v1h-1zM54 41h1v1h-1zM70 41h1v1h-1zM28 27h1v1h-1zM44 40h1v1h-1zM17 35h1v1h-1zM62 36h1v1h-1zM53 42h1v1h-1zM119 37h1v1h-1zM87 49h1v1h-1zM46 34h1v1h-1zM108 36h1v1h-1zM103 44h1v1h-1zM71 47h1v1h-1zM80 16h1v1h-1zM12 34h1v1h-1zM121 44h1v1h-1zM118 34h1v1h-1zM44 18h1v1h-1zM56 42h1v1h-1zM15 32h1v1h-1zM43 21h1v1h-1zM0 37h1v1h-1zM51 21h1v1h-1zM119 24h1v1h-1zM41 48h1v1h-1zM108 28h1v1h-1zM122 36h1v1h-1zM6 44h1v1h-1zM117 22h1v1h-1zM98 43h1v1h-1zM41 44h1v1h-1zM3 48h1v1h-1zM39 43h1v1h-1zM66 46h1v1h-1zM57 46h1v1h-1zM108 26h1v1h-1zM117 31h1v1h-1zM107 34h1v1h-1zM65 41h1v1h-1zM86 33h1v1h-1zM76 30h1v1h-1zM110 35h1v1h-1zM108 47h1v1h-1zM57 45h1v1h-1zM119 26h1v1h-1zM69 42h1v1h-1zM116 21h1v1h-1zM119 48h1v1h-1zM53 6h1v1h-1zM58 33h1v1h-1zM44 35h1v1h-1zM69 45h1v1h-1zM81 43h1v1h-1zM7 39h1v1h-1zM28 23h1v1h-1zM100 10h1v1h-1zM76 35h1v1h-1zM31 43h1v1h-1zM91 14h1v1h-1zM92 39h1v1h-1zM117 47h1v1h-1zM93 39h1v1h-1zM115 9h1v1h-1zM95 45h1v1h-1zM12 45h1v1h-1zM104 35h1v1h-1zM36 37h1v1h-1zM105 48h1v1h-1zM48 47h1v1h-1zM43 43h1v1h-1zM23 38h1v1h-1zM51 38h1v1h-1zM85 46h1v1h-1zM90 39h1v1h-1zM114 42h1v1h-1zM121 34h1v1h-1zM25 44h1v1h-1zM56 23h1v1h-1zM60 25h1v1h-1zM125 25h1v1h-1zM47 18h1v1h-1zM119 36h1v1h-1zM89 49h1v1h-1zM25 49h1v1h-1zM106 35h1v1h-1zM77 41h1v1h-1zM85 47h1v1h-1zM61 44h1v1h-1zM27 49h1v1h-1zM21 10h1v1h-1zM63 20h1v1h-1zM54 44h1v1h-1zM73 45h1v1h-1zM43 13h1v1h-1zM89 45h1v1h-1zM59 32h1v1h-1zM78 42h1v1h-1zM115 47h1v1h-1zM32 41h1v1h-1zM114 47h1v1h-1zM32 42h1v1h-1zM14 44h1v1h-1zM38 38h1v1h-1zM89 31h1v1h-1zM72 43h1v1h-1zM99 20h1v1h-1zM88 29h1v1h-1zM0 41h1v1h-1zM70 31h1v1h-1zM119 27h1v1h-1zM92 25h1v1h-1zM116 14h1v1h-1zM15 47h1v1h-1zM2 32h1v1h-1zM63 22h1v1h-1zM92 26h1v1h-1zM58 25h1v1h-1zM19 36h1v1h-1zM72 32h1v1h-1zM103 39h1v1h-1zM75 48h1v1h-1zM29 17h1v1h-1zM116 30h1v1h-1zM31 42h1v1h-1zM22 30h1v1h-1zM35 28h1v1h-1zM64 33h1v1h-1zM12 43h1v1h-1zM35 18h1v1h-1zM70 32h1v1h-1zM37 29h1v1h-1zM116 40h1v1h-1zM55 15h1v1h-1zM110 43h1v1h-1zM105 37h1v1h-1zM120 35h1v1h-1zM32 41h1v1h-1zM97 31h1v1h-1zM70 18h1v1h-1zM60 23h1v1h-1zM30 47h1v1h-1zM19 18h1v1h-1zM72 33h1v1h-1zM37 25h1v1h-1zM116 25h1v1h-1zM86 22h1v1h-1zM72 18h1v1h-1zM12 33h1v1h-1zM114 14h1v1h-1zM75 36h1v1h-1zM85 35h1v1h-1zM85 29h1v1h-1zM81 44h1v1h-1zM71 35h1v1h-1zM7 36h1v1h-1zM79 22h1v1h-1zM109 42h1v1h-1zM60 45h1v1h-1zM79 47h1v1h-1zM48 37h1v1h-1zM68 47h1v1h-1zM66 39h1v1h-1zM57 28h1v1h-1zM96 33h1v1h-1zM49 48h1v1h-1zM0 34h1v1h-1zM77 15h1v1h-1zM24 28h1v1h-1zM75 47h1v1h-1zM13 20h1v1h-1zM2 13h1v1h-1zM40 10h1v1h-1zM68 26h1v1h-1zM116 25h1v1h-1zM44 38h1v1h-1zM93 45h1v1h-1zM17 34h1v1h-1zM30 22h1v1h-1zM69 48h1v1h-1zM15 46h1v1h-1zM33 28h1v1h-1zM33 34h1v1h-1zM121 30h1v1h-1zM125 24h1v1h-1zM39 22h1v1h-1zM112 40h1v1h-1zM78 36h1v1h-1zM65 36h1v1h-1zM121 35h1v1h-1zM116 41h1v1h-1zM96 48h1v1h-1zM35 37h1v1h-1zM70 27h1v1h-1zM101 16h1v1h-1zM51 24h1v1h-1zM9 32h1v1h-1zM37 46h1v1h-1zM57 36h1v1h-1zM92 47h1v1h-1zM9 43h1v1h-1zM84 12h1v1h-1zM63 36h1v1h-1zM20 45h1v1h-1zM92 26h1v1h-1zM86 46h1v1h-1zM90 35h1v1h-1zM4 48h1v1h-1zM63 12h1v1h-1zM14 31h1v1h-1zM27 33h1v1h-1zM126 48h1v1h-1zM116 32h1v1h-1zM31 23h1v1h-1zM33 34h1v1h-1zM110 15h1v1h-1zM44 42h1v1h-1zM7 27h1v1h-1zM10 40h1v1h-1zM29 31h1v1h-1zM36 33h1v1h-1zM1 39h1v1h-1zM116 44h1v1h-1zM21 36h1v1h-1zM104 47h1v1h-1zM44 37h1v1h-1zM98 37h1v1h-1zM111 29h1v1h-1zM87 17h1v1h-1zM22 46h1v1h-1zM50 31h1v1h-1zM30 48h1v1h-1zM22 47h1v1h-1zM11 45h1v1h-1zM1 14h1v1h-1zM91 48h1v1h-1zM3 18h1v1h-1zM16 22h1v1h-1zM119 42h1v1h-1zM8 49h1v1h-1zM121 47h1v1h-1zM70 21h1v1h-1zM60 44h1v1h-1zM35 33h1v1h-1zM101 11h1v1h-1zM122 8h1v1h-1zM39 31h1v1h-1zM68 45h1v1h-1zM84 47h1v1h-1zM80 45h1v1h-1zM51 41h1v1h-1zM70 45h1v1h-1zM16 36h1v1h-1zM65 24h1v1h-1zM38 35h1v1h-1zM85 17h1v1h-1zM103 34h1v1h-1zM8 16h1v1h-1zM77 37h1v1h-1zM120 29h1v1h-1zM12 23h1v1h-1zM31 35h1v1h-1zM63 32h1v1h-1zM20 30h1v1h-1zM11 22h1v1h-1zM22 35h1v1h-1zM90 36h1v1h-1zM92 47h1v1h-1zM81 38h1v1h-1zM74 8h1v1h-1zM121 32h1v1h-1zM3 35h1v1h-1zM60 21h1v1h-1zM71 34h1v1h-1zM126 46h1v1h-1zM126 45h1v1h-1zM98 43h1v1h-1zM82 48h1v1h-1zM45 39h1v1h-1zM11 48h1v1h-1zM45 43h1v1h-1zM107 26h1v1h-1zM3 21h1v1h-1zM75 38h1v1h-1zM6 25h1v1h-1zM108 43h1v1h-1zM7 47h1v1h-1zM72 21h1v1h-1zM85 8h1v1h-1zM21 43h1v1h-1zM53 47h1v1h-1zM35 39h1v1h-1zM23 22h1v1h-1zM37 47h1v1h-1zM1 23h1v1h-1zM24 35h1v1h-1zM82 44h1v1h-1zM99 37h1v1h-1zM26 38h1v1h-1zM89 32h1v1h-1zM119 38h1v1h-1zM6 42h1v1h-1zM17 24h1v1h-1zM83 21h1v1h-1zM78 37h1v1h-1zM87 37h1v1h-1zM9 29h1v1h-1zM95 46h1v1h-1zM34 33h1v1h-1zM101 14h1v1h-1zM111 3h1v1h-1zM19 43h1v1h-1zM107 48h1v1h-1zM60 23h1v1h-1zM70 35h1v1h-1zM19 12h1v1h-1zM58 24h1v1h-1zM65 17h1v1h-1zM78 49h1v1h-1zM91 28h1v1h-1zM109 21h1v1h-1zM4 45h1v1h-1zM115 43h1v1h-1zM120 43h1v1h-1zM77 32h1v1h-1zM46 42h1v1h-1zM39 39h1v1h-1zM112 49h1v1h-1zM59 41h1v1h-1z"/><path fill="#4a1060" d="M122 58h1v1h-1zM16 77h1v1h-1zM125 61h1v1h-1zM58 78h1v1h-1zM47 74h1v1h-1zM70 60h1v1h-1zM27 67h1v1h-1zM77 75h1v1h-1zM13 79h1v1h-1zM78 79h1v1h-1zM43 58h1v1h-1zM120 69h1v1h-1zM106 57h1v1h-1zM19 65h1v1h-1zM56 68h1v1h-1zM57 72h1v1h-1zM111 61h1v1h-1zM102 65h1v1h-1zM42 58h1v1h-1zM83 61h1v1h-1zM94 70h1v1h-1zM36 70h1v1h-1zM2 57h1v1h-1zM19 62h1v1h-1zM11 53h1v1h-1zM76 72h1v1h-1zM117 79h1v1h-1zM118 72h1v1h-1zM41 74h1v1h-1zM62 68h1v1h-1zM96 82h1v1h-1zM94 82h1v1h-1zM93 64h1v1h-1zM73 52h1v1h-1zM121 57h1v1h-1zM20 71h1v1h-1zM116 68h1v1h-1zM43 80h1v1h-1zM124 58h1v1h-1zM104 53h1v1h-1zM85 78h1v1h-1zM114 71h1v1h-1zM91 82h1v1h-1zM109 58h1v1h-1zM13 61h1v1h-1zM14 67h1v1h-1zM62 57h1v1h-1zM4 61h1v1h-1zM93 74h1v1h-1zM92 56h1v1h-1zM76 80h1v1h-1zM44 54h1v1h-1zM90 52h1v1h-1zM35 59h1v1h-1zM29 54h1v1h-1zM103 56h1v1h-1zM36 65h1v1h-1zM0 82h1v1h-1zM87 61h1v1h-1zM108 68h1v1h-1zM111 64h1v1h-1zM107 60h1v1h-1zM27 57h1v1h-1zM48 64h1v1h-1zM86 65h1v1h-1zM114 70h1v1h-1zM81 78h1v1h-1zM119 64h1v1h-1zM43 59h1v1h-1zM116 64h1v1h-1zM116 74h1v1h-1zM49 76h1v1h-1zM49 50h1v1h-1zM77 65h1v1h-1zM10 69h1v1h-1zM124 70h1v1h-1zM24 75h1v1h-1zM109 80h1v1h-1zM83 76h1v1h-1zM17 56h1v1h-1zM124 70h1v1h-1zM34 70h1v1h-1zM81 54h1v1h-1zM125 66h1v1h-1zM64 67h1v1h-1zM95 55h1v1h-1zM40 82h1v1h-1zM88 77h1v1h-1zM60 64h1v1h-1zM13 80h1v1h-1zM78 56h1v1h-1zM108 56h1v1h-1zM20 59h1v1h-1zM116 53h1v1h-1zM36 51h1v1h-1zM117 63h1v1h-1zM63 76h1v1h-1zM121 57h1v1h-1zM27 58h1v1h-1zM89 55h1v1h-1zM23 78h1v1h-1zM75 54h1v1h-1zM102 64h1v1h-1zM114 58h1v1h-1zM81 82h1v1h-1zM98 68h1v1h-1zM15 72h1v1h-1zM30 51h1v1h-1zM33 54h1v1h-1zM104 55h1v1h-1zM112 69h1v1h-1zM69 53h1v1h-1zM105 80h1v1h-1zM64 75h1v1h-1zM125 51h1v1h-1zM27 71h1v1h-1zM1 74h1v1h-1zM50 78h1v1h-1zM99 71h1v1h-1zM16 65h1v1h-1zM60 62h1v1h-1zM122 69h1v1h-1zM8 73h1v1h-1zM122 63h1v1h-1zM10 66h1v1h-1zM64 50h1v1h-1zM6 67h1v1h-1zM15 67h1v1h-1zM19 76h1v1h-1zM119 72h1v1h-1zM34 61h1v1h-1zM55 66h1v1h-1zM10 77h1v1h-1zM91 70h1v1h-1zM29 50h1v1h-1zM59 52h1v1h-1zM22 73h1v1h-1zM75 66h1v1h-1zM14 70h1v1h-1zM4 53h1v1h-1zM32 75h1v1h-1zM16 52h1v1h-1zM85 55h1v1h-1zM21 69h1v1h-1zM61 58h1v1h-1zM87 61h1v1h-1zM119 50h1v1h-1zM20 60h1v1h-1zM123 58h1v1h-1zM87 67h1v1h-1zM60 66h1v1h-1zM86 76h1v1h-1zM74 55h1v1h-1zM41 73h1v1h-1zM81 53h1v1h-1zM79 81h1v1h-1zM120 59h1v1h-1zM61 81h1v1h-1zM97 56h1v1h-1zM46 77h1v1h-1zM45 63h1v1h-1zM75 60h1v1h-1zM96 72h1v1h-1zM18 77h1v1h-1zM80 71h1v1h-1zM19 51h1v1h-1zM34 57h1v1h-1zM45 77h1v1h-1zM16 64h1v1h-1zM12 66h1v1h-1zM74 67h1v1h-1zM39 74h1v1h-1zM29 69h1v1h-1zM70 55h1v1h-1zM54 68h1v1h-1zM89 73h1v1h-1zM25 60h1v1h-1zM40 60h1v1h-1zM38 77h1v1h-1zM9 52h1v1h-1zM107 71h1v1h-1zM6 69h1v1h-1zM126 63h1v1h-1zM47 81h1v1h-1zM89 50h1v1h-1zM64 62h1v1h-1zM51 72h1v1h-1zM108 76h1v1h-1zM111 53h1v1h-1zM113 70h1v1h-1zM87 60h1v1h-1zM40 80h1v1h-1zM5 74h1v1h-1zM35 64h1v1h-1zM65 58h1v1h-1zM57 76h1v1h-1zM37 59h1v1h-1zM100 72h1v1h-1zM45 80h1v1h-1zM27 65h1v1h-1zM73 76h1v1h-1zM126 71h1v1h-1zM122 58h1v1h-1zM107 59h1v1h-1zM94 61h1v1h-1zM60 70h1v1h-1zM35 69h1v1h-1zM31 77h1v1h-1zM11 57h1v1h-1zM57 59h1v1h-1zM38 56h1v1h-1zM5 82h1v1h-1zM53 63h1v1h-1zM96 74h1v1h-1zM95 78h1v1h-1zM37 71h1v1h-1zM53 69h1v1h-1zM72 67h1v1h-1zM24 52h1v1h-1zM98 79h1v1h-1zM40 66h1v1h-1zM48 69h1v1h-1zM13 72h1v1h-1zM47 79h1v1h-1zM37 66h1v1h-1zM60 72h1v1h-1zM106 74h1v1h-1zM68 54h1v1h-1zM119 81h1v1h-1zM16 64h1v1h-1zM8 75h1v1h-1zM115 76h1v1h-1zM91 79h1v1h-1zM9 62h1v1h-1zM19 82h1v1h-1zM8 74h1v1h-1zM107 54h1v1h-1zM16 76h1v1h-1zM66 53h1v1h-1zM5 50h1v1h-1zM82 77h1v1h-1zM75 55h1v1h-1zM46 65h1v1h-1zM101 68h1v1h-1zM11 66h1v1h-1zM72 63h1v1h-1zM50 80h1v1h-1zM23 52h1v1h-1zM105 67h1v1h-1zM48 70h1v1h-1zM66 71h1v1h-1zM41 73h1v1h-1zM124 64h1v1h-1zM32 50h1v1h-1zM92 51h1v1h-1zM105 73h1v1h-1zM73 82h1v1h-1zM124 62h1v1h-1zM121 80h1v1h-1zM123 77h1v1h-1zM60 65h1v1h-1zM109 78h1v1h-1zM40 54h1v1h-1zM45 59h1v1h-1zM21 72h1v1h-1zM107 63h1v1h-1zM26 51h1v1h-1zM60 70h1v1h-1zM111 72h1v1h-1zM119 72h1v1h-1zM76 81h1v1h-1zM57 81h1v1h-1zM22 57h1v1h-1zM109 65h1v1h-1zM4 65h1v1h-1zM119 65h1v1h-1zM87 61h1v1h-1zM23 59h1v1h-1zM14 77h1v1h-1zM11 62h1v1h-1zM1 74h1v1h-1zM23 54h1v1h-1zM94 54h1v1h-1zM32 70h1v1h-1zM98 51h1v1h-1zM56 60h1v1h-1zM63 57h1v1h-1zM70 80h1v1h-1zM123 61h1v1h-1zM46 59h1v1h-1zM13 67h1v1h-1zM57 71h1v1h-1zM95 65h1v1h-1zM0 57h1v1h-1zM105 69h1v1h-1zM86 54h1v1h-1zM5 56h1v1h-1zM26 73h1v1h-1zM71 74h1v1h-1zM16 68h1v1h-1zM73 65h1v1h-1zM4 51h1v1h-1zM69 54h1v1h-1zM20 75h1v1h-1zM91 53h1v1h-1zM40 57h1v1h-1zM66 76h1v1h-1zM6 71h1v1h-1zM86 57h1v1h-1zM40 64h1v1h-1zM8 70h1v1h-1zM75 62h1v1h-1zM76 59h1v1h-1zM50 56h1v1h-1zM31 64h1v1h-1zM94 68h1v1h-1zM94 50h1v1h-1zM45 56h1v1h-1zM101 62h1v1h-1zM38 68h1v1h-1zM35 76h1v1h-1zM94 73h1v1h-1zM64 56h1v1h-1zM124 59h1v1h-1zM106 75h1v1h-1zM53 68h1v1h-1zM74 58h1v1h-1zM111 69h1v1h-1zM73 52h1v1h-1zM76 70h1v1h-1zM23 68h1v1h-1zM121 55h1v1h-1zM44 76h1v1h-1zM87 69h1v1h-1zM69 68h1v1h-1zM125 57h1v1h-1zM8 61h1v1h-1zM101 60h1v1h-1zM83 71h1v1h-1zM117 72h1v1h-1zM10 61h1v1h-1zM34 80h1v1h-1zM37 62h1v1h-1zM81 60h1v1h-1zM17 54h1v1h-1zM84 51h1v1h-1zM52 75h1v1h-1zM63 60h1v1h-1zM109 54h1v1h-1zM119 66h1v1h-1zM52 76h1v1h-1zM76 52h1v1h-1zM68 50h1v1h-1zM94 75h1v1h-1zM92 58h1v1h-1zM68 59h1v1h-1zM56 80h1v1h-1zM39 61h1v1h-1zM124 72h1v1h-1zM3 50h1v1h-1zM107 57h1v1h-1zM3 77h1v1h-1zM121 69h1v1h-1zM112 54h1v1h-1zM11 54h1v1h-1zM33 62h1v1h-1zM113 55h1v1h-1zM123 80h1v1h-1zM51 58h1v1h-1zM72 77h1v1h-1zM54 78h1v1h-1zM124 53h1v1h-1zM25 60h1v1h-1zM55 61h1v1h-1zM79 80h1v1h-1zM36 50h1v1h-1zM14 75h1v1h-1zM28 62h1v1h-1zM69 51h1v1h-1zM109 63h1v1h-1zM40 76h1v1h-1zM56 68h1v1h-1zM122 61h1v1h-1zM94 54h1v1h-1zM9 74h1v1h-1zM88 69h1v1h-1zM52 69h1v1h-1zM3 79h1v1h-1zM14 71h1v1h-1zM94 72h1v1h-1zM3 71h1v1h-1zM79 50h1v1h-1zM121 82h1v1h-1zM30 76h1v1h-1z"/><path fill="#7a1868" d="M89 79h1v1h-1zM65 56h1v1h-1zM113 76h1v1h-1zM115 78h1v1h-1zM91 57h1v1h-1zM88 63h1v1h-1zM16 75h1v1h-1zM15 73h1v1h-1zM125 53h1v1h-1zM15 65h1v1h-1zM1 74h1v1h-1zM124 69h1v1h-1zM72 70h1v1h-1zM92 60h1v1h-1zM78 56h1v1h-1zM30 81h1v1h-1zM116 63h1v1h-1zM1 71h1v1h-1zM61 81h1v1h-1zM86 63h1v1h-1zM80 51h1v1h-1zM80 73h1v1h-1zM81 82h1v1h-1zM9 57h1v1h-1zM113 65h1v1h-1zM46 65h1v1h-1zM56 56h1v1h-1zM80 55h1v1h-1zM65 61h1v1h-1zM96 64h1v1h-1zM102 82h1v1h-1zM109 68h1v1h-1zM31 64h1v1h-1zM122 75h1v1h-1zM87 79h1v1h-1zM67 81h1v1h-1zM78 57h1v1h-1zM75 62h1v1h-1zM29 68h1v1h-1zM112 60h1v1h-1zM86 69h1v1h-1zM65 77h1v1h-1zM16 52h1v1h-1zM20 62h1v1h-1zM33 71h1v1h-1zM39 62h1v1h-1zM2 70h1v1h-1zM77 55h1v1h-1zM121 58h1v1h-1zM7 59h1v1h-1zM74 80h1v1h-1zM96 74h1v1h-1zM46 60h1v1h-1zM116 75h1v1h-1zM55 69h1v1h-1zM38 61h1v1h-1zM10 61h1v1h-1zM10 76h1v1h-1zM43 72h1v1h-1zM10 62h1v1h-1zM51 72h1v1h-1zM14 58h1v1h-1zM57 52h1v1h-1zM41 50h1v1h-1zM116 82h1v1h-1zM35 62h1v1h-1zM55 82h1v1h-1zM18 77h1v1h-1zM94 75h1v1h-1zM53 72h1v1h-1zM66 62h1v1h-1zM69 57h1v1h-1zM105 79h1v1h-1zM94 58h1v1h-1zM89 66h1v1h-1zM10 73h1v1h-1zM79 72h1v1h-1zM106 58h1v1h-1zM65 58h1v1h-1zM53 63h1v1h-1zM113 79h1v1h-1zM92 69h1v1h-1zM104 78h1v1h-1zM5 72h1v1h-1zM35 80h1v1h-1zM72 82h1v1h-1zM21 76h1v1h-1zM75 54h1v1h-1zM22 75h1v1h-1zM42 61h1v1h-1zM94 61h1v1h-1zM10 80h1v1h-1zM126 66h1v1h-1zM58 71h1v1h-1zM124 72h1v1h-1zM6 68h1v1h-1zM25 65h1v1h-1zM6 64h1v1h-1zM112 57h1v1h-1zM63 75h1v1h-1zM70 67h1v1h-1zM21 53h1v1h-1zM62 75h1v1h-1zM32 77h1v1h-1zM3 59h1v1h-1zM33 65h1v1h-1zM120 58h1v1h-1zM14 71h1v1h-1zM35 70h1v1h-1zM41 61h1v1h-1zM45 76h1v1h-1zM44 80h1v1h-1zM25 80h1v1h-1zM109 69h1v1h-1zM103 54h1v1h-1zM104 82h1v1h-1zM100 63h1v1h-1zM118 58h1v1h-1zM112 58h1v1h-1zM124 73h1v1h-1zM43 66h1v1h-1zM70 54h1v1h-1zM23 68h1v1h-1zM85 81h1v1h-1zM9 68h1v1h-1zM29 60h1v1h-1zM46 62h1v1h-1zM86 71h1v1h-1zM39 70h1v1h-1zM115 63h1v1h-1zM99 82h1v1h-1zM84 65h1v1h-1zM63 67h1v1h-1zM88 76h1v1h-1zM21 60h1v1h-1zM74 70h1v1h-1zM50 52h1v1h-1zM73 77h1v1h-1zM32 73h1v1h-1zM41 54h1v1h-1zM38 78h1v1h-1zM93 58h1v1h-1zM84 53h1v1h-1zM40 53h1v1h-1zM32 62h1v1h-1zM106 80h1v1h-1zM24 72h1v1h-1zM68 63h1v1h-1zM92 52h1v1h-1zM26 78h1v1h-1zM84 77h1v1h-1zM45 65h1v1h-1zM43 50h1v1h-1zM5 59h1v1h-1zM6 52h1v1h-1zM35 68h1v1h-1zM71 76h1v1h-1zM9 65h1v1h-1zM65 75h1v1h-1zM57 82h1v1h-1zM56 64h1v1h-1zM96 78h1v1h-1zM31 58h1v1h-1zM60 72h1v1h-1zM125 72h1v1h-1zM80 79h1v1h-1zM39 52h1v1h-1zM111 77h1v1h-1zM103 54h1v1h-1zM66 64h1v1h-1zM25 61h1v1h-1zM78 64h1v1h-1zM29 70h1v1h-1zM107 52h1v1h-1zM17 60h1v1h-1zM46 55h1v1h-1zM18 75h1v1h-1zM65 56h1v1h-1zM97 50h1v1h-1zM28 71h1v1h-1zM40 78h1v1h-1zM26 77h1v1h-1zM49 80h1v1h-1zM102 78h1v1h-1zM18 76h1v1h-1zM93 62h1v1h-1zM88 52h1v1h-1zM93 55h1v1h-1zM97 52h1v1h-1zM77 50h1v1h-1zM63 61h1v1h-1zM8 72h1v1h-1zM78 57h1v1h-1zM98 66h1v1h-1zM73 70h1v1h-1zM21 72h1v1h-1zM1 64h1v1h-1zM12 70h1v1h-1zM84 70h1v1h-1zM44 69h1v1h-1zM79 77h1v1h-1zM123 71h1v1h-1zM73 81h1v1h-1zM73 57h1v1h-1zM61 53h1v1h-1zM23 68h1v1h-1zM0 57h1v1h-1zM69 53h1v1h-1zM37 68h1v1h-1zM13 53h1v1h-1zM85 58h1v1h-1zM111 68h1v1h-1zM94 64h1v1h-1zM70 71h1v1h-1zM21 72h1v1h-1zM114 64h1v1h-1zM98 79h1v1h-1zM83 63h1v1h-1zM117 51h1v1h-1zM88 53h1v1h-1zM70 77h1v1h-1zM67 60h1v1h-1zM29 70h1v1h-1zM32 70h1v1h-1zM40 61h1v1h-1zM12 51h1v1h-1zM76 64h1v1h-1zM123 80h1v1h-1zM28 76h1v1h-1zM27 58h1v1h-1zM116 56h1v1h-1zM10 75h1v1h-1zM63 82h1v1h-1zM21 63h1v1h-1zM73 52h1v1h-1zM79 64h1v1h-1zM94 70h1v1h-1zM87 72h1v1h-1zM14 62h1v1h-1zM41 64h1v1h-1zM64 70h1v1h-1zM10 59h1v1h-1zM84 71h1v1h-1zM83 80h1v1h-1zM94 59h1v1h-1zM11 65h1v1h-1zM108 64h1v1h-1zM34 75h1v1h-1zM60 52h1v1h-1zM30 69h1v1h-1zM53 80h1v1h-1zM89 71h1v1h-1zM113 53h1v1h-1zM51 58h1v1h-1zM66 67h1v1h-1zM108 57h1v1h-1zM98 60h1v1h-1zM69 74h1v1h-1zM119 73h1v1h-1zM23 60h1v1h-1zM42 81h1v1h-1zM83 76h1v1h-1zM113 51h1v1h-1zM117 57h1v1h-1zM121 72h1v1h-1zM9 70h1v1h-1zM107 57h1v1h-1zM66 65h1v1h-1zM103 65h1v1h-1zM21 74h1v1h-1zM85 69h1v1h-1zM81 73h1v1h-1zM100 50h1v1h-1zM86 67h1v1h-1zM58 53h1v1h-1zM44 51h1v1h-1zM67 76h1v1h-1zM26 65h1v1h-1zM91 69h1v1h-1zM7 77h1v1h-1zM108 62h1v1h-1zM29 80h1v1h-1zM81 53h1v1h-1zM81 79h1v1h-1zM51 69h1v1h-1zM34 67h1v1h-1zM36 61h1v1h-1zM49 61h1v1h-1zM34 73h1v1h-1zM44 77h1v1h-1zM82 64h1v1h-1zM70 68h1v1h-1zM121 64h1v1h-1zM2 59h1v1h-1zM11 52h1v1h-1zM106 51h1v1h-1zM88 73h1v1h-1zM126 53h1v1h-1zM101 54h1v1h-1zM90 72h1v1h-1zM64 51h1v1h-1zM74 66h1v1h-1zM107 69h1v1h-1zM23 50h1v1h-1zM124 75h1v1h-1zM66 66h1v1h-1zM109 65h1v1h-1zM81 66h1v1h-1zM49 82h1v1h-1zM112 78h1v1h-1zM38 77h1v1h-1zM28 59h1v1h-1zM69 61h1v1h-1zM84 66h1v1h-1zM18 51h1v1h-1zM17 57h1v1h-1zM19 63h1v1h-1zM33 61h1v1h-1zM60 79h1v1h-1zM31 70h1v1h-1zM67 51h1v1h-1zM37 68h1v1h-1zM58 80h1v1h-1zM33 74h1v1h-1zM9 70h1v1h-1zM59 64h1v1h-1zM2 51h1v1h-1zM19 73h1v1h-1zM17 73h1v1h-1zM73 80h1v1h-1zM86 71h1v1h-1zM52 68h1v1h-1zM93 63h1v1h-1zM60 63h1v1h-1zM28 58h1v1h-1zM119 75h1v1h-1zM1 65h1v1h-1zM105 63h1v1h-1zM112 70h1v1h-1zM58 62h1v1h-1zM1 67h1v1h-1zM102 58h1v1h-1zM13 71h1v1h-1zM40 63h1v1h-1zM105 69h1v1h-1zM62 73h1v1h-1zM39 69h1v1h-1zM58 52h1v1h-1zM95 71h1v1h-1zM41 63h1v1h-1zM106 62h1v1h-1zM60 59h1v1h-1zM12 71h1v1h-1zM0 57h1v1h-1zM118 57h1v1h-1zM49 57h1v1h-1zM108 60h1v1h-1zM65 54h1v1h-1zM28 54h1v1h-1zM4 50h1v1h-1zM96 68h1v1h-1zM112 71h1v1h-1zM46 66h1v1h-1zM125 66h1v1h-1zM0 61h1v1h-1zM79 82h1v1h-1zM16 61h1v1h-1zM14 57h1v1h-1zM15 68h1v1h-1zM45 68h1v1h-1zM55 62h1v1h-1zM96 68h1v1h-1zM59 52h1v1h-1zM77 82h1v1h-1zM40 69h1v1h-1zM126 51h1v1h-1zM96 80h1v1h-1zM82 60h1v1h-1zM44 58h1v1h-1zM58 66h1v1h-1zM10 60h1v1h-1zM34 54h1v1h-1zM111 61h1v1h-1zM20 51h1v1h-1zM8 70h1v1h-1zM99 70h1v1h-1zM125 57h1v1h-1zM65 73h1v1h-1zM21 63h1v1h-1zM46 80h1v1h-1zM40 51h1v1h-1zM111 66h1v1h-1zM6 58h1v1h-1zM33 51h1v1h-1zM42 63h1v1h-1zM31 66h1v1h-1zM82 74h1v1h-1zM117 65h1v1h-1zM35 68h1v1h-1zM45 58h1v1h-1zM52 71h1v1h-1zM110 54h1v1h-1zM94 54h1v1h-1zM112 53h1v1h-1zM122 58h1v1h-1zM105 56h1v1h-1zM45 54h1v1h-1zM116 56h1v1h-1zM54 73h1v1h-1z"/><path fill="#5a1470" d="M76 61h1v1h-1zM23 53h1v1h-1zM89 57h1v1h-1zM123 55h1v1h-1zM111 70h1v1h-1zM73 80h1v1h-1zM11 73h1v1h-1zM50 51h1v1h-1zM90 75h1v1h-1zM28 50h1v1h-1zM97 54h1v1h-1zM25 53h1v1h-1zM17 63h1v1h-1zM66 80h1v1h-1zM81 74h1v1h-1zM59 56h1v1h-1zM34 61h1v1h-1zM39 82h1v1h-1zM30 79h1v1h-1zM67 69h1v1h-1zM91 73h1v1h-1zM65 52h1v1h-1zM60 63h1v1h-1zM13 70h1v1h-1zM50 67h1v1h-1zM22 77h1v1h-1zM116 62h1v1h-1zM4 71h1v1h-1zM5 79h1v1h-1zM80 77h1v1h-1zM78 74h1v1h-1zM18 70h1v1h-1zM91 72h1v1h-1zM36 51h1v1h-1zM29 60h1v1h-1zM15 53h1v1h-1zM4 59h1v1h-1zM30 71h1v1h-1zM54 80h1v1h-1zM125 62h1v1h-1zM84 53h1v1h-1zM53 59h1v1h-1zM58 79h1v1h-1zM119 75h1v1h-1zM21 59h1v1h-1zM59 64h1v1h-1zM58 78h1v1h-1zM93 57h1v1h-1zM108 67h1v1h-1zM94 55h1v1h-1zM33 81h1v1h-1zM15 69h1v1h-1zM51 56h1v1h-1zM9 80h1v1h-1zM48 76h1v1h-1zM48 77h1v1h-1zM74 70h1v1h-1zM117 76h1v1h-1zM80 64h1v1h-1zM87 81h1v1h-1zM122 82h1v1h-1zM80 82h1v1h-1zM68 56h1v1h-1zM123 81h1v1h-1zM102 78h1v1h-1zM105 59h1v1h-1zM123 66h1v1h-1zM63 81h1v1h-1zM0 60h1v1h-1zM41 50h1v1h-1zM32 50h1v1h-1zM4 56h1v1h-1zM68 59h1v1h-1zM112 51h1v1h-1zM95 55h1v1h-1zM4 69h1v1h-1zM103 61h1v1h-1zM97 70h1v1h-1zM26 80h1v1h-1zM33 74h1v1h-1zM47 65h1v1h-1zM115 76h1v1h-1zM73 76h1v1h-1zM7 55h1v1h-1zM63 51h1v1h-1zM114 63h1v1h-1zM68 74h1v1h-1zM29 69h1v1h-1zM29 78h1v1h-1zM68 72h1v1h-1zM20 69h1v1h-1zM70 71h1v1h-1zM70 60h1v1h-1zM66 58h1v1h-1zM10 64h1v1h-1zM29 60h1v1h-1zM80 82h1v1h-1zM119 59h1v1h-1zM107 53h1v1h-1zM36 78h1v1h-1zM88 77h1v1h-1zM104 63h1v1h-1zM96 74h1v1h-1zM126 70h1v1h-1zM44 55h1v1h-1zM29 81h1v1h-1zM11 53h1v1h-1zM73 75h1v1h-1zM10 70h1v1h-1zM33 63h1v1h-1zM115 70h1v1h-1zM60 63h1v1h-1zM29 61h1v1h-1zM106 73h1v1h-1zM108 57h1v1h-1zM72 72h1v1h-1zM38 73h1v1h-1zM114 72h1v1h-1zM72 53h1v1h-1zM7 67h1v1h-1zM76 51h1v1h-1zM43 73h1v1h-1zM61 63h1v1h-1zM102 63h1v1h-1zM54 70h1v1h-1zM46 73h1v1h-1zM118 66h1v1h-1zM44 51h1v1h-1zM57 62h1v1h-1zM10 81h1v1h-1zM69 60h1v1h-1zM5 54h1v1h-1zM53 73h1v1h-1zM82 67h1v1h-1zM74 74h1v1h-1zM114 57h1v1h-1zM12 53h1v1h-1zM100 78h1v1h-1zM82 69h1v1h-1zM74 50h1v1h-1zM91 80h1v1h-1zM39 73h1v1h-1zM46 70h1v1h-1zM90 71h1v1h-1zM17 73h1v1h-1zM120 68h1v1h-1zM15 65h1v1h-1zM5 69h1v1h-1zM82 58h1v1h-1zM91 79h1v1h-1zM8 75h1v1h-1zM14 81h1v1h-1zM6 64h1v1h-1zM7 73h1v1h-1zM103 66h1v1h-1zM63 51h1v1h-1zM36 55h1v1h-1zM2 65h1v1h-1zM20 60h1v1h-1zM74 59h1v1h-1zM38 74h1v1h-1zM73 82h1v1h-1zM106 81h1v1h-1zM87 65h1v1h-1zM119 61h1v1h-1zM4 50h1v1h-1zM19 74h1v1h-1zM8 66h1v1h-1zM105 71h1v1h-1zM31 60h1v1h-1zM124 53h1v1h-1zM46 53h1v1h-1zM47 50h1v1h-1zM49 68h1v1h-1zM109 75h1v1h-1zM73 73h1v1h-1zM61 65h1v1h-1zM54 65h1v1h-1zM39 72h1v1h-1zM122 70h1v1h-1zM82 72h1v1h-1zM15 73h1v1h-1zM7 74h1v1h-1zM51 51h1v1h-1zM74 55h1v1h-1zM75 53h1v1h-1zM66 65h1v1h-1zM24 71h1v1h-1zM108 55h1v1h-1zM113 69h1v1h-1zM67 57h1v1h-1zM11 51h1v1h-1zM10 79h1v1h-1zM117 69h1v1h-1zM80 68h1v1h-1zM2 67h1v1h-1zM113 71h1v1h-1zM38 65h1v1h-1zM115 73h1v1h-1zM39 60h1v1h-1zM4 53h1v1h-1zM102 54h1v1h-1zM115 72h1v1h-1zM76 56h1v1h-1zM88 62h1v1h-1zM114 71h1v1h-1zM73 74h1v1h-1zM95 69h1v1h-1zM62 57h1v1h-1zM102 69h1v1h-1zM82 81h1v1h-1zM77 58h1v1h-1zM30 63h1v1h-1zM109 59h1v1h-1zM32 66h1v1h-1zM125 67h1v1h-1zM91 54h1v1h-1zM34 62h1v1h-1zM60 74h1v1h-1zM85 61h1v1h-1zM32 69h1v1h-1zM78 67h1v1h-1zM77 68h1v1h-1zM113 57h1v1h-1zM45 62h1v1h-1zM41 57h1v1h-1zM23 61h1v1h-1zM72 72h1v1h-1zM8 75h1v1h-1zM95 61h1v1h-1zM49 62h1v1h-1zM6 60h1v1h-1zM42 63h1v1h-1zM34 54h1v1h-1zM53 61h1v1h-1zM117 70h1v1h-1zM42 63h1v1h-1zM7 65h1v1h-1zM123 55h1v1h-1zM8 75h1v1h-1zM33 73h1v1h-1zM70 80h1v1h-1zM35 62h1v1h-1zM120 72h1v1h-1zM18 56h1v1h-1zM122 82h1v1h-1zM39 77h1v1h-1zM75 60h1v1h-1zM98 72h1v1h-1zM83 69h1v1h-1zM31 54h1v1h-1zM63 76h1v1h-1zM113 63h1v1h-1zM86 55h1v1h-1zM41 53h1v1h-1zM117 69h1v1h-1zM31 58h1v1h-1zM115 56h1v1h-1zM39 63h1v1h-1zM122 63h1v1h-1zM91 65h1v1h-1zM84 69h1v1h-1zM101 71h1v1h-1zM39 77h1v1h-1zM14 64h1v1h-1zM101 60h1v1h-1zM49 65h1v1h-1zM57 51h1v1h-1zM43 69h1v1h-1zM83 68h1v1h-1zM74 64h1v1h-1zM51 78h1v1h-1zM117 64h1v1h-1zM34 61h1v1h-1zM8 56h1v1h-1zM3 81h1v1h-1zM105 73h1v1h-1zM120 71h1v1h-1zM96 75h1v1h-1zM85 75h1v1h-1zM109 50h1v1h-1zM46 68h1v1h-1zM21 73h1v1h-1zM110 68h1v1h-1zM38 66h1v1h-1zM12 70h1v1h-1zM87 78h1v1h-1zM21 72h1v1h-1zM99 72h1v1h-1zM81 54h1v1h-1zM61 78h1v1h-1zM109 75h1v1h-1zM16 69h1v1h-1zM64 72h1v1h-1zM48 51h1v1h-1zM108 69h1v1h-1zM120 63h1v1h-1zM65 63h1v1h-1zM65 80h1v1h-1zM40 79h1v1h-1zM78 51h1v1h-1zM34 54h1v1h-1zM10 66h1v1h-1zM61 70h1v1h-1zM78 68h1v1h-1zM36 72h1v1h-1zM11 59h1v1h-1zM9 51h1v1h-1zM85 70h1v1h-1zM19 58h1v1h-1zM30 58h1v1h-1zM77 50h1v1h-1zM41 68h1v1h-1zM89 62h1v1h-1zM35 64h1v1h-1zM55 78h1v1h-1zM84 66h1v1h-1zM96 70h1v1h-1zM111 75h1v1h-1zM117 71h1v1h-1zM29 77h1v1h-1zM57 63h1v1h-1zM31 52h1v1h-1zM7 54h1v1h-1zM96 80h1v1h-1zM107 76h1v1h-1zM3 58h1v1h-1zM62 69h1v1h-1zM42 56h1v1h-1zM50 64h1v1h-1zM41 55h1v1h-1zM33 64h1v1h-1zM65 53h1v1h-1zM66 54h1v1h-1zM109 61h1v1h-1zM58 52h1v1h-1zM12 75h1v1h-1zM17 78h1v1h-1zM6 65h1v1h-1zM61 78h1v1h-1zM30 71h1v1h-1zM107 74h1v1h-1zM104 59h1v1h-1zM11 76h1v1h-1zM10 64h1v1h-1zM15 67h1v1h-1zM38 57h1v1h-1zM101 70h1v1h-1zM16 50h1v1h-1zM10 58h1v1h-1zM93 62h1v1h-1zM35 78h1v1h-1zM123 71h1v1h-1zM29 62h1v1h-1zM18 71h1v1h-1zM81 56h1v1h-1zM27 54h1v1h-1zM11 56h1v1h-1zM107 72h1v1h-1zM19 73h1v1h-1zM34 70h1v1h-1zM80 65h1v1h-1zM100 66h1v1h-1zM107 63h1v1h-1zM125 54h1v1h-1z"/><path fill="#8a1860" d="M79 83h1v1h-1zM13 102h1v1h-1zM83 92h1v1h-1zM33 93h1v1h-1zM69 84h1v1h-1zM113 90h1v1h-1zM89 92h1v1h-1zM39 89h1v1h-1zM106 86h1v1h-1zM90 83h1v1h-1zM71 91h1v1h-1zM32 83h1v1h-1zM56 90h1v1h-1zM107 92h1v1h-1zM105 94h1v1h-1zM103 89h1v1h-1zM120 89h1v1h-1zM38 90h1v1h-1zM40 86h1v1h-1zM34 87h1v1h-1zM103 94h1v1h-1zM25 92h1v1h-1zM114 91h1v1h-1zM84 98h1v1h-1zM117 89h1v1h-1zM43 93h1v1h-1zM21 107h1v1h-1zM118 102h1v1h-1zM2 87h1v1h-1zM88 87h1v1h-1zM73 102h1v1h-1zM61 89h1v1h-1zM24 105h1v1h-1zM119 108h1v1h-1zM118 98h1v1h-1zM66 105h1v1h-1zM91 99h1v1h-1zM54 94h1v1h-1zM18 83h1v1h-1zM116 88h1v1h-1zM101 85h1v1h-1zM83 94h1v1h-1zM103 91h1v1h-1zM80 105h1v1h-1zM48 88h1v1h-1zM22 106h1v1h-1zM32 85h1v1h-1zM108 101h1v1h-1zM69 93h1v1h-1zM6 83h1v1h-1zM97 99h1v1h-1zM11 84h1v1h-1zM77 85h1v1h-1zM38 97h1v1h-1zM30 91h1v1h-1zM35 92h1v1h-1zM46 101h1v1h-1zM40 98h1v1h-1zM59 90h1v1h-1zM78 84h1v1h-1zM28 97h1v1h-1zM104 101h1v1h-1zM89 93h1v1h-1zM20 84h1v1h-1zM89 104h1v1h-1zM124 86h1v1h-1zM4 91h1v1h-1zM65 92h1v1h-1zM33 94h1v1h-1zM46 86h1v1h-1zM43 90h1v1h-1zM89 83h1v1h-1zM25 93h1v1h-1zM81 86h1v1h-1zM6 99h1v1h-1zM52 88h1v1h-1zM81 87h1v1h-1zM16 98h1v1h-1zM39 88h1v1h-1zM57 94h1v1h-1zM33 84h1v1h-1zM109 96h1v1h-1zM55 94h1v1h-1zM104 91h1v1h-1zM46 94h1v1h-1zM58 84h1v1h-1zM4 85h1v1h-1zM52 83h1v1h-1zM121 95h1v1h-1zM12 89h1v1h-1zM6 105h1v1h-1zM83 95h1v1h-1zM15 88h1v1h-1zM98 89h1v1h-1zM55 98h1v1h-1zM29 107h1v1h-1zM2 87h1v1h-1zM62 103h1v1h-1zM68 84h1v1h-1zM29 105h1v1h-1zM113 102h1v1h-1zM31 98h1v1h-1zM24 95h1v1h-1zM94 89h1v1h-1zM60 88h1v1h-1zM98 85h1v1h-1zM5 90h1v1h-1zM54 99h1v1h-1zM120 94h1v1h-1zM117 92h1v1h-1zM44 101h1v1h-1zM33 90h1v1h-1zM84 103h1v1h-1zM42 91h1v1h-1zM85 83h1v1h-1zM53 89h1v1h-1zM94 88h1v1h-1z"/><path fill="#3a1050" d="M12 34h1v1h-1zM107 35h1v1h-1zM108 24h1v1h-1zM84 29h1v1h-1zM85 41h1v1h-1zM121 28h1v1h-1zM33 40h1v1h-1zM5 26h1v1h-1zM7 43h1v1h-1zM102 49h1v1h-1zM46 27h1v1h-1zM47 47h1v1h-1zM0 24h1v1h-1zM109 30h1v1h-1zM31 17h1v1h-1zM86 41h1v1h-1zM94 39h1v1h-1zM83 29h1v1h-1zM7 12h1v1h-1zM38 13h1v1h-1zM50 47h1v1h-1zM96 48h1v1h-1zM69 30h1v1h-1zM118 28h1v1h-1zM92 44h1v1h-1zM37 37h1v1h-1zM33 35h1v1h-1zM105 24h1v1h-1zM19 30h1v1h-1zM50 33h1v1h-1zM81 9h1v1h-1zM49 46h1v1h-1zM70 49h1v1h-1zM113 40h1v1h-1zM121 26h1v1h-1zM105 30h1v1h-1zM2 43h1v1h-1zM78 39h1v1h-1zM48 21h1v1h-1zM5 9h1v1h-1zM126 40h1v1h-1zM65 22h1v1h-1zM3 17h1v1h-1zM41 40h1v1h-1zM69 42h1v1h-1zM86 39h1v1h-1zM93 44h1v1h-1zM40 27h1v1h-1zM6 28h1v1h-1zM2 43h1v1h-1zM84 12h1v1h-1zM78 44h1v1h-1zM94 39h1v1h-1zM105 19h1v1h-1zM68 6h1v1h-1zM97 45h1v1h-1zM34 49h1v1h-1zM108 36h1v1h-1zM112 34h1v1h-1zM96 20h1v1h-1zM81 13h1v1h-1zM68 46h1v1h-1zM76 39h1v1h-1zM112 39h1v1h-1zM85 45h1v1h-1zM67 40h1v1h-1zM109 44h1v1h-1zM60 48h1v1h-1zM121 43h1v1h-1zM74 33h1v1h-1zM89 44h1v1h-1zM51 45h1v1h-1zM26 38h1v1h-1zM74 40h1v1h-1zM81 45h1v1h-1zM115 25h1v1h-1zM125 14h1v1h-1zM42 13h1v1h-1zM56 4h1v1h-1zM121 20h1v1h-1zM117 36h1v1h-1zM18 18h1v1h-1zM107 13h1v1h-1zM63 38h1v1h-1zM96 29h1v1h-1zM61 17h1v1h-1zM52 6h1v1h-1zM118 26h1v1h-1zM76 41h1v1h-1zM77 33h1v1h-1zM62 42h1v1h-1zM71 25h1v1h-1zM50 17h1v1h-1zM12 32h1v1h-1zM91 48h1v1h-1zM94 45h1v1h-1zM70 19h1v1h-1zM38 17h1v1h-1zM34 33h1v1h-1zM80 11h1v1h-1zM81 43h1v1h-1zM126 46h1v1h-1zM78 46h1v1h-1zM121 47h1v1h-1zM99 47h1v1h-1zM15 28h1v1h-1zM39 45h1v1h-1zM102 47h1v1h-1zM103 17h1v1h-1zM116 49h1v1h-1zM124 5h1v1h-1zM39 27h1v1h-1zM73 4h1v1h-1zM93 42h1v1h-1zM16 37h1v1h-1zM96 46h1v1h-1zM67 32h1v1h-1zM98 23h1v1h-1zM98 41h1v1h-1zM103 37h1v1h-1zM7 20h1v1h-1zM30 35h1v1h-1zM111 45h1v1h-1zM74 27h1v1h-1zM103 45h1v1h-1zM106 36h1v1h-1zM93 25h1v1h-1zM121 41h1v1h-1zM118 9h1v1h-1zM47 23h1v1h-1zM1 42h1v1h-1zM117 35h1v1h-1zM37 27h1v1h-1zM6 47h1v1h-1zM84 28h1v1h-1zM51 19h1v1h-1zM105 23h1v1h-1zM4 37h1v1h-1zM98 47h1v1h-1zM66 48h1v1h-1zM67 21h1v1h-1zM123 39h1v1h-1zM124 49h1v1h-1zM58 46h1v1h-1zM59 41h1v1h-1zM93 31h1v1h-1zM24 32h1v1h-1zM113 34h1v1h-1zM97 44h1v1h-1zM118 10h1v1h-1zM94 31h1v1h-1zM81 47h1v1h-1zM104 39h1v1h-1zM57 5h1v1h-1zM20 13h1v1h-1zM79 44h1v1h-1zM9 42h1v1h-1zM114 46h1v1h-1zM86 17h1v1h-1zM116 13h1v1h-1zM92 46h1v1h-1zM0 24h1v1h-1zM48 45h1v1h-1zM67 43h1v1h-1zM111 39h1v1h-1zM82 41h1v1h-1zM107 11h1v1h-1zM18 41h1v1h-1zM65 35h1v1h-1zM103 41h1v1h-1zM12 28h1v1h-1zM119 43h1v1h-1zM29 12h1v1h-1zM106 49h1v1h-1zM111 39h1v1h-1zM47 49h1v1h-1zM118 29h1v1h-1zM5 13h1v1h-1zM54 29h1v1h-1zM100 11h1v1h-1zM47 37h1v1h-1zM3 19h1v1h-1zM89 30h1v1h-1zM98 44h1v1h-1zM83 34h1v1h-1zM67 22h1v1h-1zM98 34h1v1h-1zM10 19h1v1h-1zM48 47h1v1h-1zM62 40h1v1h-1zM96 15h1v1h-1zM90 13h1v1h-1zM76 13h1v1h-1zM27 13h1v1h-1zM32 40h1v1h-1zM55 42h1v1h-1zM18 44h1v1h-1zM99 19h1v1h-1zM28 45h1v1h-1zM8 43h1v1h-1zM52 23h1v1h-1zM8 49h1v1h-1zM52 29h1v1h-1zM125 48h1v1h-1zM100 41h1v1h-1zM78 49h1v1h-1zM40 44h1v1h-1zM38 46h1v1h-1zM85 24h1v1h-1zM52 40h1v1h-1zM53 44h1v1h-1zM1 9h1v1h-1zM22 49h1v1h-1zM66 37h1v1h-1zM56 30h1v1h-1zM124 46h1v1h-1zM115 12h1v1h-1zM118 38h1v1h-1zM83 25h1v1h-1zM118 38h1v1h-1zM92 48h1v1h-1zM28 4h1v1h-1zM42 44h1v1h-1zM62 6h1v1h-1zM108 36h1v1h-1zM43 40h1v1h-1zM49 21h1v1h-1zM65 32h1v1h-1zM86 36h1v1h-1zM93 45h1v1h-1zM84 26h1v1h-1zM110 32h1v1h-1zM111 8h1v1h-1zM101 35h1v1h-1zM118 37h1v1h-1zM115 8h1v1h-1zM58 15h1v1h-1zM124 44h1v1h-1zM119 47h1v1h-1zM17 32h1v1h-1zM17 49h1v1h-1zM41 40h1v1h-1zM81 27h1v1h-1zM103 46h1v1h-1zM112 22h1v1h-1zM52 47h1v1h-1zM85 30h1v1h-1zM57 35h1v1h-1zM70 32h1v1h-1zM72 35h1v1h-1zM3 47h1v1h-1zM35 39h1v1h-1zM73 30h1v1h-1zM31 42h1v1h-1zM118 39h1v1h-1z"/><path fill="#c02040" d="M6 86h1v1h-1zM58 83h1v1h-1zM52 89h1v1h-1zM89 103h1v1h-1zM33 89h1v1h-1zM18 94h1v1h-1zM114 103h1v1h-1zM96 103h1v1h-1zM124 92h1v1h-1zM32 85h1v1h-1zM43 108h1v1h-1zM16 95h1v1h-1zM83 98h1v1h-1zM3 88h1v1h-1zM12 105h1v1h-1zM71 86h1v1h-1zM84 94h1v1h-1zM3 99h1v1h-1zM46 94h1v1h-1zM13 89h1v1h-1zM39 83h1v1h-1zM63 92h1v1h-1zM120 101h1v1h-1zM70 93h1v1h-1zM17 105h1v1h-1zM52 83h1v1h-1zM40 91h1v1h-1zM65 93h1v1h-1zM92 90h1v1h-1zM43 88h1v1h-1zM88 89h1v1h-1zM67 95h1v1h-1zM114 86h1v1h-1zM61 83h1v1h-1zM4 92h1v1h-1zM41 91h1v1h-1zM12 101h1v1h-1zM113 86h1v1h-1zM73 100h1v1h-1zM105 88h1v1h-1zM109 83h1v1h-1zM14 95h1v1h-1zM59 85h1v1h-1zM2 89h1v1h-1zM16 85h1v1h-1zM79 89h1v1h-1zM78 92h1v1h-1zM37 90h1v1h-1zM27 94h1v1h-1zM50 99h1v1h-1zM6 87h1v1h-1zM94 97h1v1h-1zM67 99h1v1h-1zM42 89h1v1h-1zM55 85h1v1h-1zM58 88h1v1h-1zM32 89h1v1h-1zM34 86h1v1h-1zM75 88h1v1h-1zM21 101h1v1h-1zM23 92h1v1h-1zM40 93h1v1h-1zM33 101h1v1h-1zM121 87h1v1h-1zM4 94h1v1h-1zM38 94h1v1h-1zM14 83h1v1h-1zM23 88h1v1h-1zM30 92h1v1h-1zM118 84h1v1h-1zM38 88h1v1h-1zM56 84h1v1h-1zM67 83h1v1h-1zM83 94h1v1h-1zM121 88h1v1h-1zM110 88h1v1h-1zM36 96h1v1h-1zM53 83h1v1h-1zM8 101h1v1h-1zM4 94h1v1h-1zM73 92h1v1h-1zM23 83h1v1h-1zM123 89h1v1h-1zM56 91h1v1h-1zM61 89h1v1h-1zM81 86h1v1h-1zM81 88h1v1h-1zM101 89h1v1h-1zM7 87h1v1h-1zM65 87h1v1h-1zM68 85h1v1h-1zM21 89h1v1h-1zM48 98h1v1h-1zM43 99h1v1h-1zM12 85h1v1h-1zM25 88h1v1h-1zM90 93h1v1h-1zM83 83h1v1h-1zM28 91h1v1h-1zM57 89h1v1h-1zM71 101h1v1h-1zM47 83h1v1h-1zM9 92h1v1h-1zM68 103h1v1h-1zM124 89h1v1h-1zM13 86h1v1h-1zM17 95h1v1h-1zM113 89h1v1h-1zM91 85h1v1h-1zM100 95h1v1h-1zM51 95h1v1h-1zM51 88h1v1h-1zM64 89h1v1h-1zM118 98h1v1h-1z"/><path fill="#a01850" d="M13 88h1v1h-1zM38 87h1v1h-1zM96 101h1v1h-1zM5 87h1v1h-1zM64 96h1v1h-1zM109 91h1v1h-1zM72 102h1v1h-1zM64 85h1v1h-1zM37 103h1v1h-1zM40 90h1v1h-1zM55 97h1v1h-1zM102 88h1v1h-1zM64 96h1v1h-1zM25 92h1v1h-1zM73 86h1v1h-1zM69 83h1v1h-1zM126 86h1v1h-1zM36 83h1v1h-1zM102 94h1v1h-1zM55 87h1v1h-1zM124 103h1v1h-1zM48 83h1v1h-1zM106 93h1v1h-1zM59 101h1v1h-1zM77 83h1v1h-1zM104 92h1v1h-1zM14 85h1v1h-1zM117 90h1v1h-1zM5 87h1v1h-1zM83 88h1v1h-1zM9 92h1v1h-1zM67 89h1v1h-1zM4 83h1v1h-1zM70 83h1v1h-1zM95 84h1v1h-1zM80 89h1v1h-1zM119 96h1v1h-1zM12 103h1v1h-1zM17 84h1v1h-1zM45 85h1v1h-1zM70 94h1v1h-1zM28 87h1v1h-1zM75 107h1v1h-1zM42 97h1v1h-1zM104 94h1v1h-1zM38 91h1v1h-1zM104 91h1v1h-1zM10 85h1v1h-1zM78 93h1v1h-1zM47 87h1v1h-1zM24 101h1v1h-1zM119 84h1v1h-1zM79 87h1v1h-1zM47 89h1v1h-1zM42 90h1v1h-1zM43 85h1v1h-1zM13 95h1v1h-1zM86 90h1v1h-1zM116 100h1v1h-1zM43 95h1v1h-1zM86 94h1v1h-1zM110 88h1v1h-1zM103 86h1v1h-1zM52 90h1v1h-1zM78 90h1v1h-1zM56 98h1v1h-1zM77 84h1v1h-1zM16 99h1v1h-1zM121 92h1v1h-1zM82 94h1v1h-1zM121 90h1v1h-1zM29 91h1v1h-1zM54 85h1v1h-1zM50 86h1v1h-1zM13 94h1v1h-1zM62 83h1v1h-1zM64 87h1v1h-1zM96 89h1v1h-1zM93 87h1v1h-1zM0 88h1v1h-1zM37 102h1v1h-1zM106 83h1v1h-1zM3 103h1v1h-1zM43 85h1v1h-1zM61 95h1v1h-1zM94 102h1v1h-1zM123 99h1v1h-1zM110 84h1v1h-1zM12 90h1v1h-1zM68 87h1v1h-1zM47 88h1v1h-1zM81 88h1v1h-1zM14 89h1v1h-1zM94 104h1v1h-1zM104 90h1v1h-1zM106 105h1v1h-1zM125 88h1v1h-1zM7 102h1v1h-1zM5 96h1v1h-1zM106 84h1v1h-1zM6 83h1v1h-1zM97 102h1v1h-1zM33 88h1v1h-1z"/></pattern></defs><rect x="497" y="615" width="1268" height="337" fill="#000"/><path fill="url(#gah0)" d="M810 616h1V783h-1zM812 616h1V783h-1zM817 616h1V783h-1z"/><path fill="url(#gah1)" d="M616 616h2V783h-2zM805 616h1V783h-1zM816 616h1V783h-1z"/><path fill="url(#gah2)" d="M611 616h2V783h-2zM614 616h1V783h-1zM621 616h2V783h-2zM806 616h2V783h-2zM809 616h1V783h-1zM811 616h1V783h-1zM813 616h3V783h-3zM818 616h1V783h-1zM873 616h1V783h-1zM879 616h1V783h-1z"/><path fill="url(#gah3)" d="M498 616h1V783h-1zM608 616h1V783h-1zM610 616h1V783h-1zM613 616h1V783h-1zM615 616h1V783h-1zM618 616h3V783h-3zM802 616h3V783h-3zM808 616h1V783h-1zM874 616h3V783h-3zM878 616h1V783h-1z"/><path fill="url(#gah4)" d="M607 616h1V783h-1zM609 616h1V783h-1zM623 616h1V783h-1zM801 616h1V783h-1zM819 616h1V783h-1zM870 616h3V783h-3zM877 616h1V783h-1zM880 616h1V783h-1z"/><path fill="url(#gah5)" d="M606 616h1V783h-1zM869 616h1V783h-1zM881 616h1V783h-1z"/><path fill="url(#gah6)" d="M499 616h1V783h-1zM800 616h1V783h-1zM820 616h1V783h-1z"/><path fill="url(#gah7)" d="M500 616h1V783h-1zM605 616h1V783h-1zM624 616h1V783h-1z"/><path fill="url(#gah8)" d="M501 616h2V783h-2zM625 616h1V783h-1zM799 616h1V783h-1zM821 616h1V783h-1zM868 616h1V783h-1zM882 616h2V783h-2zM1144 616h1V783h-1z"/><path fill="url(#gah9)" d="M508 616h1V783h-1zM511 616h1V783h-1zM515 616h1V783h-1zM520 616h1V783h-1zM535 616h1V783h-1zM558 616h1V783h-1zM604 616h1V783h-1zM629 616h1V783h-1zM829 616h2V783h-2zM835 616h2V783h-2zM841 616h1V783h-1zM848 616h1V783h-1zM851 616h1V783h-1zM1138 616h1V783h-1zM1140 616h4V783h-4zM1145 616h1V783h-1zM1148 616h1V783h-1zM1150 616h1V783h-1zM1152 616h1V783h-1zM1158 616h2V783h-2zM1163 616h1V783h-1zM1165 616h1V783h-1zM1168 616h1V783h-1zM1174 616h1V783h-1zM1176 616h1V783h-1zM1178 616h1V783h-1zM1180 616h2V783h-2zM1353 616h2V783h-2zM1356 616h1V783h-1zM1358 616h1V783h-1z"/><path fill="url(#gah10)" d="M505 616h3V783h-3zM509 616h1V783h-1zM513 616h2V783h-2zM521 616h3V783h-3zM525 616h2V783h-2zM528 616h1V783h-1zM530 616h1V783h-1zM532 616h3V783h-3zM537 616h1V783h-1zM539 616h1V783h-1zM546 616h1V783h-1zM549 616h1V783h-1zM552 616h4V783h-4zM557 616h1V783h-1zM559 616h1V783h-1zM566 616h1V783h-1zM570 616h3V783h-3zM574 616h1V783h-1zM576 616h3V783h-3zM581 616h1V783h-1zM592 616h2V783h-2zM595 616h2V783h-2zM626 616h2V783h-2zM632 616h1V783h-1zM637 616h1V783h-1zM641 616h4V783h-4zM646 616h1V783h-1zM649 616h1V783h-1zM651 616h1V783h-1zM653 616h3V783h-3zM659 616h1V783h-1zM664 616h1V783h-1zM666 616h1V783h-1zM668 616h1V783h-1zM670 616h1V783h-1zM672 616h2V783h-2zM675 616h1V783h-1zM677 616h1V783h-1zM681 616h1V783h-1zM686 616h1V783h-1zM690 616h1V783h-1zM693 616h2V783h-2zM696 616h3V783h-3zM703 616h1V783h-1zM709 616h2V783h-2zM712 616h1V783h-1zM717 616h1V783h-1zM722 616h1V783h-1zM734 616h1V783h-1zM741 616h3V783h-3zM745 616h1V783h-1zM747 616h2V783h-2zM752 616h1V783h-1zM755 616h2V783h-2zM759 616h1V783h-1zM761 616h2V783h-2zM764 616h1V783h-1zM777 616h2V783h-2zM780 616h1V783h-1zM784 616h1V783h-1zM786 616h1V783h-1zM790 616h1V783h-1zM797 616h2V783h-2zM823 616h4V783h-4zM831 616h1V783h-1zM833 616h2V783h-2zM837 616h1V783h-1zM840 616h1V783h-1zM843 616h2V783h-2zM847 616h1V783h-1zM850 616h1V783h-1zM852 616h2V783h-2zM855 616h1V783h-1zM857 616h2V783h-2zM863 616h1V783h-1zM866 616h2V783h-2zM889 616h4V783h-4zM895 616h3V783h-3zM900 616h1V783h-1zM902 616h2V783h-2zM908 616h2V783h-2zM915 616h1V783h-1zM936 616h1V783h-1zM941 616h1V783h-1zM957 616h1V783h-1zM960 616h1V783h-1zM963 616h1V783h-1zM969 616h1V783h-1zM982 616h1V783h-1zM985 616h1V783h-1zM1002 616h1V783h-1zM1008 616h1V783h-1zM1010 616h1V783h-1zM1015 616h1V783h-1zM1017 616h1V783h-1zM1021 616h1V783h-1zM1023 616h1V783h-1zM1029 616h1V783h-1zM1032 616h1V783h-1zM1038 616h1V783h-1zM1044 616h1V783h-1zM1051 616h1V783h-1zM1062 616h1V783h-1zM1064 616h1V783h-1zM1090 616h1V783h-1zM1133 616h3V783h-3zM1137 616h1V783h-1zM1139 616h1V783h-1zM1146 616h2V783h-2zM1149 616h1V783h-1zM1151 616h1V783h-1zM1153 616h5V783h-5zM1160 616h1V783h-1zM1164 616h1V783h-1zM1166 616h1V783h-1zM1169 616h1V783h-1zM1171 616h2V783h-2zM1177 616h1V783h-1zM1179 616h1V783h-1zM1183 616h1V783h-1zM1348 616h5V783h-5zM1355 616h1V783h-1zM1357 616h1V783h-1zM1360 616h1V783h-1z"/><path fill="url(#gah11)" d="M503 616h2V783h-2zM510 616h1V783h-1zM512 616h1V783h-1zM517 616h3V783h-3zM527 616h1V783h-1zM531 616h1V783h-1zM536 616h1V783h-1zM538 616h1V783h-1zM542 616h4V783h-4zM547 616h2V783h-2zM560 616h1V783h-1zM562 616h4V783h-4zM567 616h3V783h-3zM575 616h1V783h-1zM579 616h2V783h-2zM582 616h2V783h-2zM586 616h1V783h-1zM589 616h1V783h-1zM591 616h1V783h-1zM598 616h1V783h-1zM603 616h1V783h-1zM628 616h1V783h-1zM630 616h1V783h-1zM633 616h2V783h-2zM636 616h1V783h-1zM638 616h1V783h-1zM645 616h1V783h-1zM648 616h1V783h-1zM650 616h1V783h-1zM652 616h1V783h-1zM656 616h3V783h-3zM660 616h1V783h-1zM662 616h2V783h-2zM665 616h1V783h-1zM667 616h1V783h-1zM669 616h1V783h-1zM671 616h1V783h-1zM674 616h1V783h-1zM678 616h2V783h-2zM682 616h3V783h-3zM687 616h3V783h-3zM700 616h3V783h-3zM704 616h5V783h-5zM711 616h1V783h-1zM713 616h1V783h-1zM715 616h2V783h-2zM718 616h3V783h-3zM723 616h3V783h-3zM727 616h4V783h-4zM732 616h2V783h-2zM736 616h2V783h-2zM744 616h1V783h-1zM746 616h1V783h-1zM750 616h2V783h-2zM754 616h1V783h-1zM757 616h2V783h-2zM765 616h2V783h-2zM775 616h2V783h-2zM783 616h1V783h-1zM785 616h1V783h-1zM787 616h1V783h-1zM789 616h1V783h-1zM822 616h1V783h-1zM827 616h2V783h-2zM832 616h1V783h-1zM838 616h2V783h-2zM842 616h1V783h-1zM845 616h2V783h-2zM849 616h1V783h-1zM854 616h1V783h-1zM856 616h1V783h-1zM859 616h4V783h-4zM864 616h2V783h-2zM885 616h4V783h-4zM893 616h2V783h-2zM898 616h2V783h-2zM901 616h1V783h-1zM905 616h1V783h-1zM907 616h1V783h-1zM910 616h2V783h-2zM914 616h1V783h-1zM916 616h5V783h-5zM922 616h1V783h-1zM934 616h1V783h-1zM937 616h1V783h-1zM940 616h1V783h-1zM942 616h1V783h-1zM944 616h3V783h-3zM948 616h1V783h-1zM952 616h2V783h-2zM961 616h1V783h-1zM965 616h1V783h-1zM967 616h2V783h-2zM970 616h1V783h-1zM972 616h1V783h-1zM974 616h1V783h-1zM987 616h3V783h-3zM991 616h1V783h-1zM994 616h2V783h-2zM998 616h3V783h-3zM1004 616h4V783h-4zM1009 616h1V783h-1zM1012 616h3V783h-3zM1016 616h1V783h-1zM1020 616h1V783h-1zM1022 616h1V783h-1zM1024 616h1V783h-1zM1026 616h1V783h-1zM1028 616h1V783h-1zM1030 616h1V783h-1zM1033 616h1V783h-1zM1036 616h1V783h-1zM1039 616h2V783h-2zM1042 616h1V783h-1zM1045 616h1V783h-1zM1049 616h1V783h-1zM1055 616h3V783h-3zM1060 616h1V783h-1zM1063 616h1V783h-1zM1065 616h1V783h-1zM1068 616h3V783h-3zM1072 616h3V783h-3zM1076 616h1V783h-1zM1079 616h1V783h-1zM1081 616h6V783h-6zM1088 616h2V783h-2zM1091 616h1V783h-1zM1093 616h1V783h-1zM1095 616h1V783h-1zM1097 616h1V783h-1zM1100 616h2V783h-2zM1105 616h2V783h-2zM1109 616h1V783h-1zM1115 616h1V783h-1zM1117 616h2V783h-2zM1120 616h2V783h-2zM1123 616h2V783h-2zM1136 616h1V783h-1zM1161 616h2V783h-2zM1167 616h1V783h-1zM1170 616h1V783h-1zM1173 616h1V783h-1zM1175 616h1V783h-1zM1189 616h1V783h-1zM1191 616h1V783h-1zM1194 616h2V783h-2zM1201 616h1V783h-1zM1207 616h1V783h-1zM1213 616h1V783h-1zM1218 616h1V783h-1zM1222 616h1V783h-1zM1224 616h1V783h-1zM1227 616h1V783h-1zM1229 616h1V783h-1zM1232 616h1V783h-1zM1242 616h1V783h-1zM1245 616h2V783h-2zM1248 616h1V783h-1zM1251 616h1V783h-1zM1254 616h1V783h-1zM1256 616h4V783h-4zM1261 616h1V783h-1zM1274 616h1V783h-1zM1279 616h1V783h-1zM1281 616h1V783h-1zM1285 616h2V783h-2zM1290 616h1V783h-1zM1293 616h1V783h-1zM1300 616h1V783h-1zM1305 616h1V783h-1zM1308 616h1V783h-1zM1311 616h1V783h-1zM1320 616h1V783h-1zM1325 616h1V783h-1zM1328 616h2V783h-2zM1332 616h1V783h-1zM1334 616h1V783h-1zM1338 616h1V783h-1zM1344 616h1V783h-1zM1347 616h1V783h-1zM1359 616h1V783h-1zM1361 616h1V783h-1zM1363 616h1V783h-1zM1369 616h1V783h-1zM1375 616h1V783h-1zM1379 616h1V783h-1zM1388 616h1V783h-1zM1391 616h1V783h-1zM1393 616h1V783h-1zM1403 616h1V783h-1zM1410 616h1V783h-1zM1419 616h2V783h-2zM1422 616h1V783h-1zM1425 616h1V783h-1zM1433 616h1V783h-1zM1440 616h1V783h-1zM1442 616h2V783h-2zM1445 616h1V783h-1zM1452 616h1V783h-1zM1459 616h1V783h-1zM1466 616h1V783h-1zM1468 616h1V783h-1zM1479 616h1V783h-1zM1483 616h1V783h-1zM1485 616h2V783h-2zM1506 616h2V783h-2zM1512 616h1V783h-1zM1517 616h1V783h-1zM1519 616h1V783h-1zM1522 616h1V783h-1zM1525 616h1V783h-1zM1530 616h1V783h-1zM1536 616h1V783h-1zM1538 616h1V783h-1zM1550 616h2V783h-2zM1555 616h1V783h-1zM1563 616h1V783h-1zM1566 616h1V783h-1zM1574 616h1V783h-1zM1578 616h1V783h-1zM1582 616h1V783h-1zM1595 616h1V783h-1zM1604 616h1V783h-1zM1614 616h1V783h-1zM1616 616h1V783h-1zM1618 616h1V783h-1zM1620 616h1V783h-1zM1622 616h1V783h-1zM1626 616h1V783h-1zM1630 616h3V783h-3zM1636 616h1V783h-1zM1652 616h1V783h-1zM1664 616h1V783h-1zM1668 616h1V783h-1zM1674 616h1V783h-1zM1683 616h1V783h-1zM1692 616h1V783h-1zM1696 616h1V783h-1zM1700 616h1V783h-1zM1703 616h1V783h-1zM1711 616h1V783h-1zM1717 616h1V783h-1zM1742 616h1V783h-1zM1746 616h2V783h-2zM1750 616h1V783h-1zM1752 616h1V783h-1zM1757 616h1V783h-1z"/><path fill="url(#gah12)" d="M516 616h1V783h-1zM524 616h1V783h-1zM529 616h1V783h-1zM540 616h2V783h-2zM550 616h2V783h-2zM556 616h1V783h-1zM561 616h1V783h-1zM573 616h1V783h-1zM584 616h2V783h-2zM587 616h2V783h-2zM590 616h1V783h-1zM594 616h1V783h-1zM597 616h1V783h-1zM599 616h1V783h-1zM602 616h1V783h-1zM631 616h1V783h-1zM635 616h1V783h-1zM639 616h2V783h-2zM647 616h1V783h-1zM661 616h1V783h-1zM676 616h1V783h-1zM680 616h1V783h-1zM685 616h1V783h-1zM691 616h2V783h-2zM695 616h1V783h-1zM699 616h1V783h-1zM714 616h1V783h-1zM721 616h1V783h-1zM726 616h1V783h-1zM731 616h1V783h-1zM735 616h1V783h-1zM738 616h3V783h-3zM749 616h1V783h-1zM753 616h1V783h-1zM760 616h1V783h-1zM763 616h1V783h-1zM767 616h2V783h-2zM774 616h1V783h-1zM779 616h1V783h-1zM781 616h2V783h-2zM788 616h1V783h-1zM791 616h2V783h-2zM796 616h1V783h-1zM884 616h1V783h-1zM904 616h1V783h-1zM906 616h1V783h-1zM912 616h2V783h-2zM921 616h1V783h-1zM931 616h1V783h-1zM933 616h1V783h-1zM935 616h1V783h-1zM938 616h2V783h-2zM943 616h1V783h-1zM947 616h1V783h-1zM949 616h3V783h-3zM954 616h3V783h-3zM958 616h2V783h-2zM962 616h1V783h-1zM964 616h1V783h-1zM966 616h1V783h-1zM971 616h1V783h-1zM973 616h1V783h-1zM975 616h3V783h-3zM979 616h1V783h-1zM981 616h1V783h-1zM983 616h2V783h-2zM986 616h1V783h-1zM990 616h1V783h-1zM992 616h2V783h-2zM996 616h2V783h-2zM1001 616h1V783h-1zM1003 616h1V783h-1zM1011 616h1V783h-1zM1018 616h2V783h-2zM1025 616h1V783h-1zM1027 616h1V783h-1zM1031 616h1V783h-1zM1034 616h2V783h-2zM1037 616h1V783h-1zM1041 616h1V783h-1zM1043 616h1V783h-1zM1046 616h3V783h-3zM1050 616h1V783h-1zM1053 616h2V783h-2zM1058 616h2V783h-2zM1061 616h1V783h-1zM1066 616h2V783h-2zM1071 616h1V783h-1zM1075 616h1V783h-1zM1077 616h2V783h-2zM1080 616h1V783h-1zM1087 616h1V783h-1zM1092 616h1V783h-1zM1094 616h1V783h-1zM1096 616h1V783h-1zM1098 616h2V783h-2zM1102 616h3V783h-3zM1107 616h2V783h-2zM1110 616h3V783h-3zM1114 616h1V783h-1zM1122 616h1V783h-1zM1125 616h5V783h-5zM1131 616h2V783h-2zM1182 616h1V783h-1zM1184 616h2V783h-2zM1188 616h1V783h-1zM1193 616h1V783h-1zM1196 616h1V783h-1zM1202 616h3V783h-3zM1210 616h2V783h-2zM1214 616h1V783h-1zM1220 616h1V783h-1zM1223 616h1V783h-1zM1228 616h1V783h-1zM1230 616h2V783h-2zM1235 616h6V783h-6zM1243 616h1V783h-1zM1249 616h2V783h-2zM1252 616h2V783h-2zM1255 616h1V783h-1zM1260 616h1V783h-1zM1263 616h2V783h-2zM1266 616h3V783h-3zM1270 616h1V783h-1zM1272 616h1V783h-1zM1275 616h1V783h-1zM1277 616h1V783h-1zM1283 616h2V783h-2zM1288 616h2V783h-2zM1291 616h1V783h-1zM1294 616h4V783h-4zM1301 616h4V783h-4zM1306 616h2V783h-2zM1309 616h2V783h-2zM1312 616h1V783h-1zM1315 616h1V783h-1zM1317 616h2V783h-2zM1321 616h4V783h-4zM1326 616h1V783h-1zM1330 616h1V783h-1zM1335 616h1V783h-1zM1337 616h1V783h-1zM1341 616h1V783h-1zM1343 616h1V783h-1zM1345 616h2V783h-2zM1362 616h1V783h-1zM1364 616h3V783h-3zM1368 616h1V783h-1zM1371 616h1V783h-1zM1374 616h1V783h-1zM1376 616h3V783h-3zM1380 616h2V783h-2zM1386 616h2V783h-2zM1392 616h1V783h-1zM1395 616h1V783h-1zM1399 616h2V783h-2zM1404 616h1V783h-1zM1407 616h2V783h-2zM1411 616h2V783h-2zM1415 616h1V783h-1zM1418 616h1V783h-1zM1423 616h1V783h-1zM1426 616h2V783h-2zM1429 616h2V783h-2zM1435 616h1V783h-1zM1438 616h2V783h-2zM1441 616h1V783h-1zM1446 616h2V783h-2zM1449 616h1V783h-1zM1451 616h1V783h-1zM1453 616h2V783h-2zM1460 616h6V783h-6zM1467 616h1V783h-1zM1470 616h3V783h-3zM1476 616h3V783h-3zM1481 616h1V783h-1zM1484 616h1V783h-1zM1487 616h1V783h-1zM1489 616h2V783h-2zM1493 616h1V783h-1zM1497 616h2V783h-2zM1500 616h3V783h-3zM1504 616h1V783h-1zM1508 616h1V783h-1zM1510 616h1V783h-1zM1513 616h3V783h-3zM1518 616h1V783h-1zM1524 616h1V783h-1zM1528 616h1V783h-1zM1531 616h2V783h-2zM1534 616h2V783h-2zM1540 616h2V783h-2zM1543 616h2V783h-2zM1546 616h2V783h-2zM1549 616h1V783h-1zM1552 616h2V783h-2zM1557 616h2V783h-2zM1560 616h2V783h-2zM1565 616h1V783h-1zM1567 616h1V783h-1zM1570 616h2V783h-2zM1573 616h1V783h-1zM1575 616h2V783h-2zM1579 616h1V783h-1zM1581 616h1V783h-1zM1584 616h1V783h-1zM1586 616h1V783h-1zM1588 616h1V783h-1zM1592 616h3V783h-3zM1600 616h1V783h-1zM1602 616h1V783h-1zM1605 616h2V783h-2zM1608 616h1V783h-1zM1610 616h1V783h-1zM1613 616h1V783h-1zM1617 616h1V783h-1zM1623 616h1V783h-1zM1628 616h1V783h-1zM1634 616h1V783h-1zM1639 616h1V783h-1zM1643 616h1V783h-1zM1645 616h1V783h-1zM1647 616h1V783h-1zM1653 616h3V783h-3zM1657 616h4V783h-4zM1662 616h1V783h-1zM1667 616h1V783h-1zM1671 616h1V783h-1zM1673 616h1V783h-1zM1676 616h2V783h-2zM1681 616h1V783h-1zM1684 616h2V783h-2zM1690 616h2V783h-2zM1693 616h2V783h-2zM1699 616h1V783h-1zM1701 616h2V783h-2zM1705 616h5V783h-5zM1712 616h1V783h-1zM1714 616h3V783h-3zM1718 616h2V783h-2zM1721 616h2V783h-2zM1724 616h3V783h-3zM1728 616h1V783h-1zM1733 616h1V783h-1zM1735 616h3V783h-3zM1741 616h1V783h-1zM1743 616h1V783h-1zM1749 616h1V783h-1zM1751 616h1V783h-1zM1754 616h1V783h-1zM1758 616h1V783h-1zM1761 616h2V783h-2z"/><path fill="url(#gah13)" d="M601 616h1V783h-1zM769 616h1V783h-1zM772 616h2V783h-2zM793 616h1V783h-1zM930 616h1V783h-1zM932 616h1V783h-1zM978 616h1V783h-1zM980 616h1V783h-1zM1052 616h1V783h-1zM1113 616h1V783h-1zM1116 616h1V783h-1zM1119 616h1V783h-1zM1130 616h1V783h-1zM1186 616h2V783h-2zM1190 616h1V783h-1zM1192 616h1V783h-1zM1197 616h4V783h-4zM1205 616h2V783h-2zM1208 616h2V783h-2zM1212 616h1V783h-1zM1215 616h3V783h-3zM1219 616h1V783h-1zM1221 616h1V783h-1zM1225 616h2V783h-2zM1233 616h2V783h-2zM1241 616h1V783h-1zM1244 616h1V783h-1zM1247 616h1V783h-1zM1262 616h1V783h-1zM1265 616h1V783h-1zM1269 616h1V783h-1zM1271 616h1V783h-1zM1273 616h1V783h-1zM1276 616h1V783h-1zM1278 616h1V783h-1zM1280 616h1V783h-1zM1282 616h1V783h-1zM1287 616h1V783h-1zM1292 616h1V783h-1zM1298 616h2V783h-2zM1313 616h2V783h-2zM1316 616h1V783h-1zM1319 616h1V783h-1zM1327 616h1V783h-1zM1331 616h1V783h-1zM1333 616h1V783h-1zM1336 616h1V783h-1zM1339 616h2V783h-2zM1342 616h1V783h-1zM1367 616h1V783h-1zM1370 616h1V783h-1zM1372 616h2V783h-2zM1382 616h4V783h-4zM1389 616h2V783h-2zM1394 616h1V783h-1zM1396 616h3V783h-3zM1401 616h2V783h-2zM1405 616h2V783h-2zM1409 616h1V783h-1zM1413 616h2V783h-2zM1416 616h2V783h-2zM1421 616h1V783h-1zM1424 616h1V783h-1zM1428 616h1V783h-1zM1431 616h2V783h-2zM1434 616h1V783h-1zM1436 616h2V783h-2zM1444 616h1V783h-1zM1448 616h1V783h-1zM1450 616h1V783h-1zM1455 616h4V783h-4zM1469 616h1V783h-1zM1473 616h3V783h-3zM1480 616h1V783h-1zM1482 616h1V783h-1zM1488 616h1V783h-1zM1491 616h2V783h-2zM1494 616h3V783h-3zM1499 616h1V783h-1zM1503 616h1V783h-1zM1505 616h1V783h-1zM1509 616h1V783h-1zM1511 616h1V783h-1zM1516 616h1V783h-1zM1520 616h2V783h-2zM1523 616h1V783h-1zM1526 616h2V783h-2zM1529 616h1V783h-1zM1533 616h1V783h-1zM1537 616h1V783h-1zM1539 616h1V783h-1zM1542 616h1V783h-1zM1545 616h1V783h-1zM1548 616h1V783h-1zM1554 616h1V783h-1zM1556 616h1V783h-1zM1559 616h1V783h-1zM1562 616h1V783h-1zM1564 616h1V783h-1zM1568 616h2V783h-2zM1572 616h1V783h-1zM1577 616h1V783h-1zM1580 616h1V783h-1zM1583 616h1V783h-1zM1585 616h1V783h-1zM1587 616h1V783h-1zM1589 616h3V783h-3zM1596 616h4V783h-4zM1601 616h1V783h-1zM1603 616h1V783h-1zM1607 616h1V783h-1zM1609 616h1V783h-1zM1611 616h2V783h-2zM1615 616h1V783h-1zM1619 616h1V783h-1zM1621 616h1V783h-1zM1624 616h2V783h-2zM1627 616h1V783h-1zM1629 616h1V783h-1zM1633 616h1V783h-1zM1635 616h1V783h-1zM1637 616h2V783h-2zM1640 616h3V783h-3zM1644 616h1V783h-1zM1646 616h1V783h-1zM1648 616h4V783h-4zM1656 616h1V783h-1zM1661 616h1V783h-1zM1663 616h1V783h-1zM1665 616h2V783h-2zM1669 616h2V783h-2zM1672 616h1V783h-1zM1675 616h1V783h-1zM1678 616h3V783h-3zM1682 616h1V783h-1zM1686 616h4V783h-4zM1695 616h1V783h-1zM1697 616h2V783h-2zM1704 616h1V783h-1zM1710 616h1V783h-1zM1713 616h1V783h-1zM1720 616h1V783h-1zM1723 616h1V783h-1zM1727 616h1V783h-1zM1729 616h3V783h-3zM1734 616h1V783h-1zM1738 616h3V783h-3zM1744 616h2V783h-2zM1753 616h1V783h-1zM1755 616h2V783h-2zM1759 616h2V783h-2zM1763 616h2V783h-2z"/><path fill="url(#gah14)" d="M600 616h1V783h-1zM771 616h1V783h-1zM794 616h1V783h-1zM923 616h2V783h-2zM929 616h1V783h-1zM1732 616h1V783h-1zM1748 616h1V783h-1z"/><path fill="url(#gah15)" d="M770 616h1V783h-1zM795 616h1V783h-1zM925 616h1V783h-1z"/><path fill="url(#gah16)" d="M926 616h3V783h-3z"/><path fill="url(#gas2)" d="M875 637h1V783h-1z"/><path fill="url(#gas3)" d="M515 616h1V783h-1zM522 616h1V783h-1zM523 616h1V783h-1zM534 616h1V783h-1zM647 616h1V783h-1zM663 616h1V783h-1zM678 616h1V783h-1zM701 616h1V783h-1zM704 616h1V783h-1zM708 616h1V783h-1zM757 616h1V783h-1zM767 616h1V783h-1zM833 616h1V783h-1zM843 616h1V783h-1zM866 616h1V783h-1zM888 616h1V783h-1zM904 616h1V783h-1zM910 616h1V783h-1zM948 616h1V783h-1zM965 616h1V783h-1zM1088 616h1V783h-1zM1119 616h1V783h-1zM1159 616h1V783h-1zM1160 616h1V783h-1zM1161 616h1V783h-1zM1163 616h1V783h-1zM1180 616h1V783h-1zM1315 616h1V783h-1zM1332 616h1V783h-1zM1358 616h1V783h-1zM1359 616h1V783h-1zM1444 616h1V783h-1z"/><path fill="url(#gas4)" d="M532 616h1V783h-1zM552 616h1V783h-1zM570 616h1V783h-1zM615 616h1V783h-1zM630 616h1V783h-1zM654 616h1V783h-1zM668 616h1V783h-1zM693 616h1V783h-1zM711 616h1V783h-1zM724 616h1V783h-1zM791 616h1V783h-1zM822 616h1V783h-1zM844 616h1V783h-1zM848 616h1V783h-1zM916 616h1V783h-1zM923 616h1V783h-1zM937 616h1V783h-1zM942 616h1V783h-1zM944 616h1V783h-1zM955 616h1V783h-1zM957 616h1V783h-1zM988 616h1V783h-1zM994 616h1V783h-1zM1031 616h1V783h-1zM1035 616h1V783h-1zM1037 616h1V783h-1zM1053 616h1V783h-1zM1059 616h1V783h-1zM1062 616h1V783h-1zM1073 616h1V783h-1zM1077 616h1V783h-1zM1091 616h1V783h-1zM1106 616h1V783h-1zM1109 616h1V783h-1zM1124 616h1V783h-1zM1126 616h1V783h-1zM1136 616h1V783h-1zM1165 616h1V783h-1zM1192 616h1V783h-1zM1197 616h1V783h-1zM1228 616h1V783h-1zM1252 616h1V783h-1zM1259 616h1V783h-1zM1267 616h1V783h-1zM1278 616h1V783h-1zM1282 616h1V783h-1zM1303 616h1V783h-1zM1311 616h1V783h-1zM1313 616h1V783h-1zM1339 616h1V783h-1zM1384 616h1V783h-1zM1397 616h1V783h-1zM1419 616h1V783h-1zM1427 616h1V783h-1zM1440 616h1V783h-1zM1443 616h1V783h-1zM1446 616h1V783h-1zM1468 616h1V783h-1zM1469 616h1V783h-1zM1475 616h1V783h-1zM1484 616h1V783h-1zM1488 616h1V783h-1zM1491 616h1V783h-1zM1499 616h1V783h-1zM1515 616h1V783h-1zM1523 616h1V783h-1zM1545 616h1V783h-1zM1572 616h1V783h-1zM1575 616h1V783h-1zM1585 616h1V783h-1zM1590 616h1V783h-1zM1618 616h1V783h-1zM1623 616h1V783h-1zM1628 616h1V783h-1zM1633 616h1V783h-1zM1697 616h1V783h-1zM1709 616h1V783h-1zM1741 616h1V783h-1z"/><path fill="url(#gas5)" d="M771 616h1V783h-1zM921 616h1V783h-1zM927 616h1V783h-1zM930 616h1V783h-1zM1151 616h1V783h-1zM1185 616h1V783h-1zM1190 616h1V783h-1zM1212 616h1V783h-1zM1239 616h1V783h-1zM1245 616h1V783h-1zM1256 616h1V783h-1zM1329 616h1V783h-1zM1354 616h1V783h-1zM1365 616h1V783h-1zM1394 616h1V783h-1zM1405 616h1V783h-1zM1422 616h1V783h-1zM1458 616h1V783h-1zM1569 616h1V783h-1zM1669 616h1V783h-1zM1671 616h1V783h-1zM1686 616h1V783h-1zM1699 616h1V783h-1zM1707 616h1V783h-1zM1714 616h1V783h-1z"/><path fill="url(#gas6)" d="M504 616h1V783h-1zM513 616h1V783h-1zM521 616h1V783h-1zM524 616h1V783h-1zM543 637h1V783h-1zM545 616h1V783h-1zM555 622h1V783h-1zM567 616h1V783h-1zM579 636h1V783h-1zM595 645h1V783h-1zM646 632h1V783h-1zM671 616h1V783h-1zM680 629h1V783h-1zM683 616h1V783h-1zM684 621h1V783h-1zM687 616h1V783h-1zM694 628h1V783h-1zM705 616h1V783h-1zM721 616h1V783h-1zM730 616h1V783h-1zM731 640h1V783h-1zM743 635h1V783h-1zM744 616h1V783h-1zM750 616h1V783h-1zM754 649h1V783h-1zM759 644h1V783h-1zM760 616h1V783h-1zM800 630h1V783h-1zM838 619h1V783h-1zM857 629h1V783h-1zM898 622h1V783h-1zM900 629h1V783h-1zM903 616h1V783h-1zM935 616h1V783h-1zM962 644h1V783h-1zM970 624h1V783h-1zM982 619h1V783h-1zM1001 645h1V783h-1zM1005 619h1V783h-1zM1052 624h1V783h-1zM1081 616h1V783h-1zM1084 654h1V783h-1zM1107 616h1V783h-1zM1139 616h1V783h-1zM1140 616h1V783h-1zM1142 619h1V783h-1zM1146 616h1V783h-1zM1158 616h1V783h-1zM1164 616h1V783h-1zM1167 621h1V783h-1zM1178 627h1V783h-1zM1182 616h1V783h-1z"/><path fill="url(#gas7)" d="M512 640h1V783h-1zM529 616h1V783h-1zM558 635h1V783h-1zM561 616h1V783h-1zM569 627h1V783h-1zM576 649h1V783h-1zM584 616h1V783h-1zM596 640h1V783h-1zM626 616h1V783h-1zM628 616h1V783h-1zM652 627h1V783h-1zM659 616h1V783h-1zM664 616h1V783h-1zM672 646h1V783h-1zM679 616h1V783h-1zM706 655h1V783h-1zM713 633h1V783h-1zM716 626h1V783h-1zM718 616h1V783h-1zM720 622h1V783h-1zM722 616h1V783h-1zM740 616h1V783h-1zM748 616h1V783h-1zM765 625h1V783h-1zM845 635h1V783h-1zM847 616h1V783h-1zM854 616h1V783h-1zM862 616h1V783h-1zM893 656h1V783h-1zM912 652h1V783h-1zM936 653h1V783h-1zM946 616h1V783h-1zM956 616h1V783h-1zM968 655h1V783h-1zM987 616h1V783h-1zM991 656h1V783h-1zM992 616h1V783h-1zM998 616h1V783h-1zM1006 631h1V783h-1zM1013 616h1V783h-1zM1024 649h1V783h-1zM1025 634h1V783h-1zM1030 621h1V783h-1zM1036 616h1V783h-1zM1048 616h1V783h-1zM1055 618h1V783h-1zM1065 625h1V783h-1zM1068 616h1V783h-1zM1103 645h1V783h-1zM1113 649h1V783h-1zM1116 648h1V783h-1zM1121 616h1V783h-1zM1177 616h1V783h-1zM1179 637h1V783h-1zM1184 616h1V783h-1zM1196 633h1V783h-1zM1220 616h1V783h-1zM1221 616h1V783h-1zM1223 616h1V783h-1zM1233 616h1V783h-1zM1248 645h1V783h-1zM1249 635h1V783h-1zM1255 616h1V783h-1zM1279 616h1V783h-1zM1289 616h1V783h-1zM1290 616h1V783h-1zM1292 616h1V783h-1zM1293 616h1V783h-1zM1296 627h1V783h-1zM1342 627h1V783h-1zM1346 653h1V783h-1zM1348 626h1V783h-1zM1349 616h1V783h-1zM1352 619h1V783h-1zM1360 616h1V783h-1zM1363 616h1V783h-1zM1372 616h1V783h-1zM1376 648h1V783h-1zM1378 616h1V783h-1zM1379 623h1V783h-1zM1380 616h1V783h-1zM1386 617h1V783h-1zM1387 616h1V783h-1zM1395 640h1V783h-1zM1404 650h1V783h-1zM1410 616h1V783h-1zM1413 616h1V783h-1zM1414 626h1V783h-1zM1435 620h1V783h-1zM1445 651h1V783h-1zM1452 634h1V783h-1zM1494 616h1V783h-1zM1519 616h1V783h-1zM1522 629h1V783h-1zM1533 623h1V783h-1zM1552 640h1V783h-1zM1561 616h1V783h-1zM1570 616h1V783h-1zM1577 633h1V783h-1zM1581 630h1V783h-1zM1595 616h1V783h-1zM1597 654h1V783h-1zM1607 633h1V783h-1zM1608 616h1V783h-1zM1635 620h1V783h-1zM1638 616h1V783h-1zM1651 616h1V783h-1zM1652 625h1V783h-1zM1667 618h1V783h-1zM1681 622h1V783h-1zM1693 616h1V783h-1zM1698 634h1V783h-1zM1700 616h1V783h-1zM1726 616h1V783h-1zM1735 616h1V783h-1zM1749 620h1V783h-1z"/><path fill="url(#gas8)" d="M507 616h1V783h-1zM510 616h1V783h-1zM538 616h1V783h-1zM539 616h1V783h-1zM548 616h1V783h-1zM565 652h1V783h-1zM568 635h1V783h-1zM571 633h1V783h-1zM572 642h1V783h-1zM574 618h1V783h-1zM575 616h1V783h-1zM577 616h1V783h-1zM586 616h1V783h-1zM592 616h1V783h-1zM602 616h1V783h-1zM633 616h1V783h-1zM634 616h1V783h-1zM639 616h1V783h-1zM643 616h1V783h-1zM648 635h1V783h-1zM660 616h1V783h-1zM667 618h1V783h-1zM681 616h1V783h-1zM699 616h1V783h-1zM714 616h1V783h-1zM725 642h1V783h-1zM742 616h1V783h-1zM761 619h1V783h-1zM776 616h1V783h-1zM782 621h1V783h-1zM858 643h1V783h-1zM902 616h1V783h-1zM908 646h1V783h-1zM934 616h1V783h-1zM939 616h1V783h-1zM943 616h1V783h-1zM963 616h1V783h-1zM964 616h1V783h-1zM966 616h1V783h-1zM972 616h1V783h-1zM980 640h1V783h-1zM984 616h1V783h-1zM985 616h1V783h-1zM986 644h1V783h-1zM1023 616h1V783h-1zM1040 616h1V783h-1zM1051 616h1V783h-1zM1057 618h1V783h-1zM1069 616h1V783h-1zM1079 647h1V783h-1zM1080 616h1V783h-1zM1094 616h1V783h-1zM1100 616h1V783h-1zM1104 653h1V783h-1zM1120 616h1V783h-1zM1122 616h1V783h-1zM1129 627h1V783h-1zM1202 624h1V783h-1zM1203 616h1V783h-1zM1222 616h1V783h-1zM1236 645h1V783h-1zM1237 616h1V783h-1zM1240 616h1V783h-1zM1244 618h1V783h-1zM1258 653h1V783h-1zM1265 627h1V783h-1zM1273 656h1V783h-1zM1275 652h1V783h-1zM1295 616h1V783h-1zM1327 616h1V783h-1zM1331 616h1V783h-1zM1347 620h1V783h-1zM1361 633h1V783h-1zM1362 616h1V783h-1zM1369 629h1V783h-1zM1374 616h1V783h-1zM1377 651h1V783h-1zM1383 616h1V783h-1zM1389 636h1V783h-1zM1391 616h1V783h-1zM1393 616h1V783h-1zM1396 616h1V783h-1zM1403 616h1V783h-1zM1417 616h1V783h-1zM1418 616h1V783h-1zM1430 616h1V783h-1zM1448 657h1V783h-1zM1454 627h1V783h-1zM1466 616h1V783h-1zM1467 616h1V783h-1zM1479 616h1V783h-1zM1481 616h1V783h-1zM1485 634h1V783h-1zM1486 626h1V783h-1zM1498 640h1V783h-1zM1527 616h1V783h-1zM1528 616h1V783h-1zM1550 627h1V783h-1zM1557 616h1V783h-1zM1560 619h1V783h-1zM1574 654h1V783h-1zM1580 651h1V783h-1zM1584 616h1V783h-1zM1588 641h1V783h-1zM1596 616h1V783h-1zM1598 616h1V783h-1zM1599 616h1V783h-1zM1601 639h1V783h-1zM1612 616h1V783h-1zM1614 647h1V783h-1zM1619 616h1V783h-1zM1627 616h1V783h-1zM1637 616h1V783h-1zM1647 616h1V783h-1zM1655 634h1V783h-1zM1673 616h1V783h-1zM1683 616h1V783h-1zM1684 616h1V783h-1zM1690 630h1V783h-1zM1703 646h1V783h-1zM1708 616h1V783h-1zM1710 622h1V783h-1zM1712 655h1V783h-1zM1717 619h1V783h-1zM1724 655h1V783h-1zM1725 616h1V783h-1zM1736 616h1V783h-1zM1738 616h1V783h-1zM1744 616h1V783h-1zM1760 616h1V783h-1z"/><path fill="url(#gas9)" d="M792 616h1V783h-1zM1085 630h1V783h-1zM1099 616h1V783h-1zM1110 638h1V783h-1zM1125 622h1V783h-1zM1128 616h1V783h-1zM1261 656h1V783h-1zM1262 627h1V783h-1zM1277 616h1V783h-1zM1301 616h1V783h-1zM1334 616h1V783h-1zM1341 616h1V783h-1zM1366 632h1V783h-1zM1382 616h1V783h-1zM1390 616h1V783h-1zM1459 616h1V783h-1zM1464 631h1V783h-1zM1465 616h1V783h-1zM1473 616h1V783h-1zM1516 616h1V783h-1zM1525 616h1V783h-1zM1526 625h1V783h-1zM1536 616h1V783h-1zM1548 629h1V783h-1zM1564 642h1V783h-1zM1592 616h1V783h-1zM1593 616h1V783h-1zM1606 616h1V783h-1zM1609 616h1V783h-1zM1620 628h1V783h-1zM1625 616h1V783h-1zM1626 616h1V783h-1zM1629 657h1V783h-1zM1630 616h1V783h-1zM1648 632h1V783h-1zM1674 616h1V783h-1zM1688 616h1V783h-1zM1696 616h1V783h-1zM1704 617h1V783h-1zM1721 644h1V783h-1zM1723 618h1V783h-1zM1727 627h1V783h-1zM1731 616h1V783h-1zM1734 643h1V783h-1zM1747 616h1V783h-1z"/><path fill="url(#gbh0)" d="M807 785h1V951h-1zM815 785h1V951h-1z"/><path fill="url(#gbh1)" d="M609 785h1V951h-1zM613 785h1V951h-1zM615 785h1V951h-1zM617 785h1V951h-1zM622 785h1V951h-1zM805 785h1V951h-1zM809 785h1V951h-1zM811 785h1V951h-1zM814 785h1V951h-1zM816 785h1V951h-1zM818 785h1V951h-1z"/><path fill="url(#gbh2)" d="M608 785h1V951h-1zM610 785h2V951h-2zM614 785h1V951h-1zM616 785h1V951h-1zM618 785h1V951h-1zM804 785h1V951h-1zM806 785h1V951h-1zM808 785h1V951h-1zM810 785h1V951h-1zM812 785h2V951h-2zM817 785h1V951h-1zM819 785h1V951h-1zM875 785h2V951h-2zM878 785h1V951h-1zM880 785h1V951h-1z"/><path fill="url(#gbh3)" d="M612 785h1V951h-1zM619 785h3V951h-3zM803 785h1V951h-1zM871 785h3V951h-3zM877 785h1V951h-1z"/><path fill="url(#gbh4)" d="M499 785h1V951h-1zM623 785h1V951h-1zM802 785h1V951h-1zM870 785h1V951h-1zM874 785h1V951h-1zM879 785h1V951h-1z"/><path fill="url(#gbh5)" d="M498 785h1V951h-1zM500 785h1V951h-1zM606 785h2V951h-2zM869 785h1V951h-1zM881 785h1V951h-1z"/><path fill="url(#gbh6)" d="M800 785h2V951h-2zM820 785h1V951h-1zM868 785h1V951h-1zM882 785h1V951h-1z"/><path fill="url(#gbh7)" d="M605 785h1V951h-1zM624 785h2V951h-2z"/><path fill="url(#gbh8)" d="M502 785h1V951h-1zM799 785h1V951h-1zM867 785h1V951h-1zM883 785h1V951h-1z"/><path fill="url(#gbh9)" d="M501 785h1V951h-1zM503 785h1V951h-1zM515 785h1V951h-1zM538 785h1V951h-1zM540 785h1V951h-1zM604 785h1V951h-1zM626 785h1V951h-1zM798 785h1V951h-1zM821 785h1V951h-1zM826 785h1V951h-1zM830 785h1V951h-1zM840 785h3V951h-3zM853 785h1V951h-1zM884 785h2V951h-2zM1137 785h1V951h-1zM1140 785h2V951h-2zM1144 785h3V951h-3zM1152 785h1V951h-1zM1156 785h1V951h-1zM1163 785h1V951h-1zM1165 785h1V951h-1zM1167 785h1V951h-1zM1171 785h1V951h-1zM1173 785h1V951h-1zM1176 785h1V951h-1zM1351 785h1V951h-1zM1353 785h1V951h-1zM1355 785h1V951h-1z"/><path fill="url(#gbh10)" d="M505 785h1V951h-1zM507 785h1V951h-1zM509 785h1V951h-1zM518 785h2V951h-2zM528 785h1V951h-1zM530 785h1V951h-1zM534 785h1V951h-1zM537 785h1V951h-1zM544 785h1V951h-1zM547 785h2V951h-2zM550 785h1V951h-1zM553 785h1V951h-1zM556 785h1V951h-1zM558 785h3V951h-3zM564 785h2V951h-2zM567 785h1V951h-1zM569 785h5V951h-5zM577 785h1V951h-1zM579 785h1V951h-1zM593 785h1V951h-1zM598 785h1V951h-1zM627 785h2V951h-2zM632 785h4V951h-4zM637 785h1V951h-1zM640 785h1V951h-1zM643 785h1V951h-1zM645 785h1V951h-1zM647 785h1V951h-1zM651 785h1V951h-1zM653 785h2V951h-2zM657 785h1V951h-1zM660 785h1V951h-1zM664 785h1V951h-1zM667 785h3V951h-3zM675 785h1V951h-1zM681 785h3V951h-3zM685 785h1V951h-1zM688 785h1V951h-1zM694 785h1V951h-1zM699 785h3V951h-3zM708 785h1V951h-1zM715 785h4V951h-4zM720 785h4V951h-4zM725 785h2V951h-2zM729 785h1V951h-1zM731 785h1V951h-1zM735 785h2V951h-2zM739 785h6V951h-6zM747 785h1V951h-1zM751 785h2V951h-2zM758 785h1V951h-1zM762 785h4V951h-4zM776 785h2V951h-2zM783 785h1V951h-1zM822 785h1V951h-1zM824 785h2V951h-2zM827 785h3V951h-3zM831 785h4V951h-4zM837 785h2V951h-2zM844 785h1V951h-1zM847 785h2V951h-2zM850 785h1V951h-1zM852 785h1V951h-1zM854 785h1V951h-1zM856 785h1V951h-1zM859 785h1V951h-1zM862 785h2V951h-2zM866 785h1V951h-1zM886 785h1V951h-1zM890 785h1V951h-1zM893 785h2V951h-2zM896 785h4V951h-4zM901 785h1V951h-1zM904 785h1V951h-1zM910 785h2V951h-2zM915 785h1V951h-1zM917 785h1V951h-1zM937 785h1V951h-1zM941 785h1V951h-1zM943 785h1V951h-1zM948 785h1V951h-1zM951 785h1V951h-1zM954 785h1V951h-1zM961 785h1V951h-1zM965 785h3V951h-3zM973 785h1V951h-1zM983 785h1V951h-1zM986 785h2V951h-2zM993 785h1V951h-1zM1001 785h1V951h-1zM1006 785h1V951h-1zM1019 785h1V951h-1zM1025 785h1V951h-1zM1048 785h1V951h-1zM1053 785h1V951h-1zM1060 785h1V951h-1zM1065 785h3V951h-3zM1075 785h1V951h-1zM1121 785h1V951h-1zM1130 785h1V951h-1zM1133 785h1V951h-1zM1135 785h2V951h-2zM1138 785h2V951h-2zM1143 785h1V951h-1zM1147 785h5V951h-5zM1153 785h1V951h-1zM1155 785h1V951h-1zM1157 785h4V951h-4zM1164 785h1V951h-1zM1168 785h3V951h-3zM1172 785h1V951h-1zM1174 785h2V951h-2zM1177 785h3V951h-3zM1183 785h1V951h-1zM1352 785h1V951h-1zM1354 785h1V951h-1zM1356 785h2V951h-2z"/><path fill="url(#gbh11)" d="M504 785h1V951h-1zM506 785h1V951h-1zM510 785h5V951h-5zM516 785h2V951h-2zM520 785h2V951h-2zM523 785h1V951h-1zM525 785h3V951h-3zM531 785h1V951h-1zM533 785h1V951h-1zM535 785h2V951h-2zM539 785h1V951h-1zM542 785h2V951h-2zM545 785h1V951h-1zM549 785h1V951h-1zM551 785h2V951h-2zM554 785h2V951h-2zM563 785h1V951h-1zM568 785h1V951h-1zM574 785h3V951h-3zM578 785h1V951h-1zM580 785h1V951h-1zM583 785h1V951h-1zM585 785h3V951h-3zM589 785h4V951h-4zM594 785h1V951h-1zM596 785h1V951h-1zM629 785h3V951h-3zM636 785h1V951h-1zM639 785h1V951h-1zM641 785h2V951h-2zM644 785h1V951h-1zM646 785h1V951h-1zM648 785h1V951h-1zM652 785h1V951h-1zM658 785h2V951h-2zM663 785h1V951h-1zM666 785h1V951h-1zM671 785h2V951h-2zM676 785h1V951h-1zM678 785h3V951h-3zM684 785h1V951h-1zM686 785h1V951h-1zM689 785h1V951h-1zM691 785h3V951h-3zM696 785h1V951h-1zM702 785h1V951h-1zM705 785h3V951h-3zM711 785h1V951h-1zM714 785h1V951h-1zM724 785h1V951h-1zM727 785h2V951h-2zM732 785h1V951h-1zM738 785h1V951h-1zM748 785h1V951h-1zM750 785h1V951h-1zM753 785h1V951h-1zM755 785h3V951h-3zM759 785h1V951h-1zM761 785h1V951h-1zM766 785h1V951h-1zM778 785h1V951h-1zM780 785h3V951h-3zM784 785h1V951h-1zM786 785h1V951h-1zM788 785h1V951h-1zM791 785h1V951h-1zM797 785h1V951h-1zM823 785h1V951h-1zM835 785h2V951h-2zM839 785h1V951h-1zM843 785h1V951h-1zM845 785h2V951h-2zM849 785h1V951h-1zM851 785h1V951h-1zM855 785h1V951h-1zM857 785h2V951h-2zM860 785h2V951h-2zM864 785h2V951h-2zM887 785h3V951h-3zM891 785h2V951h-2zM895 785h1V951h-1zM903 785h1V951h-1zM907 785h1V951h-1zM909 785h1V951h-1zM912 785h1V951h-1zM916 785h1V951h-1zM918 785h4V951h-4zM934 785h1V951h-1zM936 785h1V951h-1zM938 785h2V951h-2zM942 785h1V951h-1zM944 785h1V951h-1zM947 785h1V951h-1zM949 785h2V951h-2zM952 785h1V951h-1zM958 785h3V951h-3zM962 785h3V951h-3zM968 785h5V951h-5zM974 785h1V951h-1zM982 785h1V951h-1zM984 785h1V951h-1zM988 785h1V951h-1zM990 785h2V951h-2zM994 785h2V951h-2zM998 785h3V951h-3zM1002 785h1V951h-1zM1005 785h1V951h-1zM1010 785h1V951h-1zM1014 785h1V951h-1zM1017 785h2V951h-2zM1020 785h1V951h-1zM1022 785h2V951h-2zM1026 785h3V951h-3zM1032 785h1V951h-1zM1034 785h1V951h-1zM1038 785h2V951h-2zM1041 785h1V951h-1zM1047 785h1V951h-1zM1055 785h2V951h-2zM1058 785h2V951h-2zM1061 785h4V951h-4zM1071 785h2V951h-2zM1074 785h1V951h-1zM1076 785h1V951h-1zM1078 785h1V951h-1zM1080 785h1V951h-1zM1086 785h1V951h-1zM1090 785h1V951h-1zM1092 785h3V951h-3zM1097 785h8V951h-8zM1110 785h2V951h-2zM1115 785h1V951h-1zM1119 785h2V951h-2zM1124 785h1V951h-1zM1128 785h2V951h-2zM1131 785h1V951h-1zM1134 785h1V951h-1zM1142 785h1V951h-1zM1154 785h1V951h-1zM1161 785h2V951h-2zM1166 785h1V951h-1zM1180 785h2V951h-2zM1185 785h1V951h-1zM1191 785h1V951h-1zM1195 785h2V951h-2zM1207 785h1V951h-1zM1214 785h1V951h-1zM1217 785h1V951h-1zM1222 785h2V951h-2zM1228 785h1V951h-1zM1233 785h1V951h-1zM1244 785h1V951h-1zM1247 785h2V951h-2zM1253 785h1V951h-1zM1256 785h1V951h-1zM1259 785h1V951h-1zM1263 785h1V951h-1zM1265 785h1V951h-1zM1271 785h1V951h-1zM1275 785h2V951h-2zM1279 785h2V951h-2zM1282 785h1V951h-1zM1286 785h1V951h-1zM1289 785h1V951h-1zM1296 785h1V951h-1zM1299 785h2V951h-2zM1303 785h2V951h-2zM1306 785h1V951h-1zM1310 785h1V951h-1zM1312 785h1V951h-1zM1316 785h1V951h-1zM1318 785h3V951h-3zM1325 785h1V951h-1zM1332 785h1V951h-1zM1334 785h1V951h-1zM1336 785h1V951h-1zM1339 785h2V951h-2zM1343 785h3V951h-3zM1349 785h1V951h-1zM1358 785h3V951h-3zM1364 785h1V951h-1zM1367 785h2V951h-2zM1373 785h1V951h-1zM1378 785h1V951h-1zM1380 785h1V951h-1zM1384 785h1V951h-1zM1386 785h1V951h-1zM1393 785h2V951h-2zM1396 785h1V951h-1zM1399 785h1V951h-1zM1401 785h1V951h-1zM1404 785h1V951h-1zM1412 785h1V951h-1zM1415 785h1V951h-1zM1421 785h1V951h-1zM1425 785h1V951h-1zM1429 785h1V951h-1zM1431 785h1V951h-1zM1434 785h1V951h-1zM1441 785h1V951h-1zM1443 785h1V951h-1zM1450 785h1V951h-1zM1453 785h2V951h-2zM1458 785h1V951h-1zM1461 785h1V951h-1zM1465 785h1V951h-1zM1472 785h1V951h-1zM1477 785h1V951h-1zM1479 785h1V951h-1zM1481 785h1V951h-1zM1483 785h1V951h-1zM1487 785h1V951h-1zM1494 785h1V951h-1zM1500 785h1V951h-1zM1506 785h1V951h-1zM1515 785h1V951h-1zM1523 785h1V951h-1zM1533 785h1V951h-1zM1537 785h1V951h-1zM1539 785h2V951h-2zM1543 785h1V951h-1zM1551 785h1V951h-1zM1562 785h1V951h-1zM1573 785h1V951h-1zM1580 785h2V951h-2zM1583 785h1V951h-1zM1585 785h2V951h-2zM1588 785h1V951h-1zM1602 785h1V951h-1zM1604 785h2V951h-2zM1616 785h1V951h-1zM1619 785h1V951h-1zM1623 785h1V951h-1zM1628 785h1V951h-1zM1632 785h1V951h-1zM1643 785h1V951h-1zM1645 785h1V951h-1zM1650 785h1V951h-1zM1659 785h1V951h-1zM1665 785h2V951h-2zM1668 785h2V951h-2zM1673 785h1V951h-1zM1676 785h1V951h-1zM1682 785h1V951h-1zM1685 785h1V951h-1zM1687 785h1V951h-1zM1689 785h1V951h-1zM1696 785h2V951h-2zM1710 785h1V951h-1zM1734 785h1V951h-1zM1739 785h1V951h-1zM1743 785h2V951h-2zM1746 785h1V951h-1zM1763 785h1V951h-1z"/><path fill="url(#gbh12)" d="M508 785h1V951h-1zM522 785h1V951h-1zM524 785h1V951h-1zM529 785h1V951h-1zM532 785h1V951h-1zM541 785h1V951h-1zM546 785h1V951h-1zM557 785h1V951h-1zM561 785h2V951h-2zM566 785h1V951h-1zM581 785h2V951h-2zM584 785h1V951h-1zM588 785h1V951h-1zM595 785h1V951h-1zM597 785h1V951h-1zM599 785h1V951h-1zM602 785h2V951h-2zM638 785h1V951h-1zM649 785h2V951h-2zM655 785h2V951h-2zM661 785h2V951h-2zM665 785h1V951h-1zM670 785h1V951h-1zM673 785h2V951h-2zM677 785h1V951h-1zM687 785h1V951h-1zM690 785h1V951h-1zM695 785h1V951h-1zM697 785h2V951h-2zM703 785h2V951h-2zM709 785h2V951h-2zM712 785h2V951h-2zM719 785h1V951h-1zM730 785h1V951h-1zM733 785h2V951h-2zM737 785h1V951h-1zM745 785h2V951h-2zM749 785h1V951h-1zM754 785h1V951h-1zM760 785h1V951h-1zM767 785h1V951h-1zM769 785h1V951h-1zM773 785h1V951h-1zM775 785h1V951h-1zM779 785h1V951h-1zM785 785h1V951h-1zM787 785h1V951h-1zM789 785h2V951h-2zM796 785h1V951h-1zM900 785h1V951h-1zM902 785h1V951h-1zM905 785h2V951h-2zM908 785h1V951h-1zM913 785h2V951h-2zM923 785h1V951h-1zM932 785h2V951h-2zM935 785h1V951h-1zM940 785h1V951h-1zM945 785h2V951h-2zM953 785h1V951h-1zM955 785h3V951h-3zM975 785h1V951h-1zM979 785h2V951h-2zM985 785h1V951h-1zM989 785h1V951h-1zM992 785h1V951h-1zM996 785h2V951h-2zM1003 785h2V951h-2zM1007 785h3V951h-3zM1011 785h3V951h-3zM1015 785h2V951h-2zM1021 785h1V951h-1zM1024 785h1V951h-1zM1029 785h3V951h-3zM1033 785h1V951h-1zM1036 785h2V951h-2zM1040 785h1V951h-1zM1042 785h5V951h-5zM1049 785h4V951h-4zM1054 785h1V951h-1zM1057 785h1V951h-1zM1068 785h1V951h-1zM1070 785h1V951h-1zM1073 785h1V951h-1zM1077 785h1V951h-1zM1079 785h1V951h-1zM1082 785h2V951h-2zM1085 785h1V951h-1zM1087 785h3V951h-3zM1091 785h1V951h-1zM1095 785h2V951h-2zM1105 785h3V951h-3zM1109 785h1V951h-1zM1112 785h3V951h-3zM1116 785h3V951h-3zM1122 785h2V951h-2zM1125 785h3V951h-3zM1132 785h1V951h-1zM1182 785h1V951h-1zM1184 785h1V951h-1zM1186 785h2V951h-2zM1189 785h1V951h-1zM1192 785h2V951h-2zM1197 785h4V951h-4zM1202 785h1V951h-1zM1206 785h1V951h-1zM1208 785h1V951h-1zM1211 785h1V951h-1zM1215 785h1V951h-1zM1218 785h4V951h-4zM1225 785h3V951h-3zM1229 785h2V951h-2zM1234 785h1V951h-1zM1237 785h4V951h-4zM1246 785h1V951h-1zM1251 785h2V951h-2zM1257 785h1V951h-1zM1260 785h3V951h-3zM1264 785h1V951h-1zM1266 785h2V951h-2zM1274 785h1V951h-1zM1281 785h1V951h-1zM1283 785h1V951h-1zM1295 785h1V951h-1zM1297 785h2V951h-2zM1305 785h1V951h-1zM1308 785h1V951h-1zM1313 785h3V951h-3zM1317 785h1V951h-1zM1322 785h1V951h-1zM1328 785h4V951h-4zM1335 785h1V951h-1zM1337 785h1V951h-1zM1341 785h2V951h-2zM1346 785h3V951h-3zM1350 785h1V951h-1zM1361 785h1V951h-1zM1369 785h4V951h-4zM1374 785h2V951h-2zM1379 785h1V951h-1zM1381 785h2V951h-2zM1385 785h1V951h-1zM1387 785h3V951h-3zM1391 785h2V951h-2zM1395 785h1V951h-1zM1398 785h1V951h-1zM1402 785h2V951h-2zM1406 785h1V951h-1zM1408 785h1V951h-1zM1411 785h1V951h-1zM1413 785h1V951h-1zM1416 785h2V951h-2zM1419 785h1V951h-1zM1422 785h3V951h-3zM1426 785h2V951h-2zM1430 785h1V951h-1zM1437 785h2V951h-2zM1444 785h1V951h-1zM1446 785h4V951h-4zM1451 785h1V951h-1zM1455 785h1V951h-1zM1457 785h1V951h-1zM1459 785h2V951h-2zM1463 785h1V951h-1zM1466 785h2V951h-2zM1473 785h1V951h-1zM1476 785h1V951h-1zM1478 785h1V951h-1zM1480 785h1V951h-1zM1484 785h1V951h-1zM1486 785h1V951h-1zM1488 785h1V951h-1zM1490 785h1V951h-1zM1493 785h1V951h-1zM1496 785h1V951h-1zM1498 785h1V951h-1zM1507 785h5V951h-5zM1516 785h3V951h-3zM1521 785h2V951h-2zM1524 785h2V951h-2zM1529 785h1V951h-1zM1532 785h1V951h-1zM1534 785h1V951h-1zM1536 785h1V951h-1zM1538 785h1V951h-1zM1541 785h2V951h-2zM1544 785h1V951h-1zM1546 785h5V951h-5zM1552 785h1V951h-1zM1554 785h1V951h-1zM1556 785h1V951h-1zM1558 785h2V951h-2zM1561 785h1V951h-1zM1563 785h6V951h-6zM1574 785h1V951h-1zM1576 785h2V951h-2zM1582 785h1V951h-1zM1584 785h1V951h-1zM1590 785h1V951h-1zM1592 785h1V951h-1zM1594 785h2V951h-2zM1598 785h1V951h-1zM1606 785h5V951h-5zM1615 785h1V951h-1zM1621 785h1V951h-1zM1624 785h3V951h-3zM1629 785h1V951h-1zM1631 785h1V951h-1zM1638 785h2V951h-2zM1641 785h2V951h-2zM1644 785h1V951h-1zM1646 785h1V951h-1zM1648 785h2V951h-2zM1651 785h2V951h-2zM1655 785h1V951h-1zM1661 785h1V951h-1zM1664 785h1V951h-1zM1677 785h3V951h-3zM1688 785h1V951h-1zM1690 785h4V951h-4zM1698 785h1V951h-1zM1704 785h1V951h-1zM1709 785h1V951h-1zM1717 785h1V951h-1zM1720 785h4V951h-4zM1725 785h2V951h-2zM1730 785h2V951h-2zM1735 785h2V951h-2zM1741 785h2V951h-2zM1745 785h1V951h-1zM1748 785h2V951h-2zM1751 785h4V951h-4zM1757 785h1V951h-1zM1762 785h1V951h-1zM1764 785h1V951h-1z"/><path fill="url(#gbh13)" d="M768 785h1V951h-1zM770 785h1V951h-1zM774 785h1V951h-1zM792 785h1V951h-1zM922 785h1V951h-1zM930 785h2V951h-2zM976 785h2V951h-2zM981 785h1V951h-1zM1035 785h1V951h-1zM1069 785h1V951h-1zM1081 785h1V951h-1zM1084 785h1V951h-1zM1108 785h1V951h-1zM1188 785h1V951h-1zM1190 785h1V951h-1zM1194 785h1V951h-1zM1201 785h1V951h-1zM1203 785h3V951h-3zM1209 785h2V951h-2zM1212 785h2V951h-2zM1216 785h1V951h-1zM1224 785h1V951h-1zM1231 785h2V951h-2zM1235 785h2V951h-2zM1241 785h3V951h-3zM1245 785h1V951h-1zM1249 785h2V951h-2zM1254 785h2V951h-2zM1258 785h1V951h-1zM1268 785h3V951h-3zM1272 785h2V951h-2zM1277 785h2V951h-2zM1284 785h2V951h-2zM1287 785h2V951h-2zM1290 785h5V951h-5zM1301 785h2V951h-2zM1307 785h1V951h-1zM1309 785h1V951h-1zM1311 785h1V951h-1zM1321 785h1V951h-1zM1323 785h2V951h-2zM1326 785h2V951h-2zM1333 785h1V951h-1zM1338 785h1V951h-1zM1362 785h2V951h-2zM1365 785h2V951h-2zM1376 785h2V951h-2zM1383 785h1V951h-1zM1390 785h1V951h-1zM1397 785h1V951h-1zM1400 785h1V951h-1zM1405 785h1V951h-1zM1407 785h1V951h-1zM1409 785h2V951h-2zM1414 785h1V951h-1zM1418 785h1V951h-1zM1420 785h1V951h-1zM1428 785h1V951h-1zM1432 785h2V951h-2zM1435 785h2V951h-2zM1439 785h2V951h-2zM1442 785h1V951h-1zM1445 785h1V951h-1zM1452 785h1V951h-1zM1456 785h1V951h-1zM1462 785h1V951h-1zM1464 785h1V951h-1zM1468 785h4V951h-4zM1474 785h2V951h-2zM1482 785h1V951h-1zM1485 785h1V951h-1zM1489 785h1V951h-1zM1491 785h2V951h-2zM1495 785h1V951h-1zM1497 785h1V951h-1zM1499 785h1V951h-1zM1501 785h5V951h-5zM1512 785h3V951h-3zM1519 785h2V951h-2zM1526 785h3V951h-3zM1530 785h2V951h-2zM1535 785h1V951h-1zM1545 785h1V951h-1zM1553 785h1V951h-1zM1555 785h1V951h-1zM1557 785h1V951h-1zM1560 785h1V951h-1zM1569 785h4V951h-4zM1575 785h1V951h-1zM1578 785h2V951h-2zM1587 785h1V951h-1zM1589 785h1V951h-1zM1591 785h1V951h-1zM1593 785h1V951h-1zM1596 785h2V951h-2zM1599 785h3V951h-3zM1603 785h1V951h-1zM1611 785h4V951h-4zM1617 785h2V951h-2zM1620 785h1V951h-1zM1622 785h1V951h-1zM1627 785h1V951h-1zM1630 785h1V951h-1zM1633 785h5V951h-5zM1640 785h1V951h-1zM1647 785h1V951h-1zM1653 785h2V951h-2zM1656 785h3V951h-3zM1660 785h1V951h-1zM1662 785h2V951h-2zM1667 785h1V951h-1zM1670 785h3V951h-3zM1674 785h2V951h-2zM1680 785h2V951h-2zM1683 785h2V951h-2zM1686 785h1V951h-1zM1694 785h2V951h-2zM1699 785h5V951h-5zM1705 785h4V951h-4zM1711 785h6V951h-6zM1718 785h2V951h-2zM1724 785h1V951h-1zM1727 785h3V951h-3zM1732 785h2V951h-2zM1737 785h2V951h-2zM1740 785h1V951h-1zM1747 785h1V951h-1zM1750 785h1V951h-1zM1755 785h2V951h-2zM1758 785h2V951h-2zM1761 785h1V951h-1z"/><path fill="url(#gbh14)" d="M600 785h2V951h-2zM771 785h2V951h-2zM793 785h2V951h-2zM925 785h1V951h-1zM929 785h1V951h-1zM978 785h1V951h-1zM1760 785h1V951h-1z"/><path fill="url(#gbh15)" d="M795 785h1V951h-1zM924 785h1V951h-1zM926 785h1V951h-1zM928 785h1V951h-1z"/><path fill="url(#gbh16)" d="M927 785h1V951h-1z"/><path fill="url(#gbs1)" d="M815 785h1V951h-1z"/><path fill="url(#gbs2)" d="M611 785h1V951h-1zM613 785h1V951h-1zM618 808h1V951h-1zM803 785h1V951h-1zM808 785h1V951h-1zM1145 785h1V951h-1z"/><path fill="url(#gbs3)" d="M504 785h1V951h-1zM505 785h1V951h-1zM522 785h1V951h-1zM532 785h1V951h-1zM543 785h1V951h-1zM547 785h1V951h-1zM551 785h1V951h-1zM552 785h1V951h-1zM588 785h1V951h-1zM646 785h1V951h-1zM649 785h1V951h-1zM650 785h1V951h-1zM651 785h1V951h-1zM662 785h1V951h-1zM670 785h1V951h-1zM676 785h1V951h-1zM681 785h1V951h-1zM690 785h1V951h-1zM729 785h1V951h-1zM746 785h1V951h-1zM757 785h1V951h-1zM782 785h1V951h-1zM788 785h1V951h-1zM804 785h1V951h-1zM834 785h1V951h-1zM845 785h1V951h-1zM850 785h1V951h-1zM853 785h1V951h-1zM860 785h1V951h-1zM946 785h1V951h-1zM975 785h1V951h-1zM1000 785h1V951h-1zM1027 785h1V951h-1zM1057 785h1V951h-1zM1078 785h1V951h-1zM1091 785h1V951h-1zM1103 785h1V951h-1zM1110 785h1V951h-1zM1125 785h1V951h-1zM1136 785h1V951h-1zM1138 785h1V951h-1zM1149 785h1V951h-1zM1177 785h1V951h-1zM1304 785h1V951h-1zM1341 785h1V951h-1zM1356 785h1V951h-1zM1457 785h1V951h-1z"/><path fill="url(#gbs4)" d="M556 785h1V951h-1zM563 785h1V951h-1zM602 785h1V951h-1zM634 785h1V951h-1zM638 785h1V951h-1zM648 785h1V951h-1zM684 785h1V951h-1zM694 785h1V951h-1zM696 785h1V951h-1zM702 785h1V951h-1zM704 785h1V951h-1zM713 785h1V951h-1zM728 785h1V951h-1zM732 785h1V951h-1zM760 785h1V951h-1zM789 785h1V951h-1zM833 785h1V951h-1zM838 785h1V951h-1zM847 785h1V951h-1zM887 785h1V951h-1zM894 785h1V951h-1zM910 785h1V951h-1zM922 785h1V951h-1zM934 785h1V951h-1zM950 785h1V951h-1zM968 785h1V951h-1zM990 785h1V951h-1zM993 785h1V951h-1zM1002 785h1V951h-1zM1007 785h1V951h-1zM1012 785h1V951h-1zM1024 785h1V951h-1zM1035 785h1V951h-1zM1036 785h1V951h-1zM1039 785h1V951h-1zM1040 785h1V951h-1zM1046 785h1V951h-1zM1064 785h1V951h-1zM1072 785h1V951h-1zM1082 785h1V951h-1zM1083 785h1V951h-1zM1113 785h1V951h-1zM1127 785h1V951h-1zM1132 785h1V951h-1zM1164 785h1V951h-1zM1199 785h1V951h-1zM1224 785h1V951h-1zM1234 785h1V951h-1zM1235 785h1V951h-1zM1236 785h1V951h-1zM1293 785h1V951h-1zM1295 785h1V951h-1zM1306 785h1V951h-1zM1317 785h1V951h-1zM1330 785h1V951h-1zM1364 785h1V951h-1zM1380 785h1V951h-1zM1388 785h1V951h-1zM1400 785h1V951h-1zM1424 785h1V951h-1zM1436 785h1V951h-1zM1465 785h1V951h-1zM1474 785h1V951h-1zM1479 785h1V951h-1zM1498 785h1V951h-1zM1511 785h1V951h-1zM1519 785h1V951h-1zM1527 785h1V951h-1zM1539 785h1V951h-1zM1551 785h1V951h-1zM1581 785h1V951h-1zM1614 785h1V951h-1zM1616 785h1V951h-1zM1636 785h1V951h-1zM1679 785h1V951h-1zM1686 785h1V951h-1zM1707 785h1V951h-1zM1743 785h1V951h-1zM1748 785h1V951h-1zM1753 785h1V951h-1zM1763 785h1V951h-1z"/><path fill="url(#gbs5)" d="M600 785h1V951h-1zM867 823h1V951h-1zM883 789h1V951h-1zM925 785h1V951h-1zM927 785h1V951h-1zM1208 785h1V951h-1zM1229 785h1V951h-1zM1238 785h1V951h-1zM1303 785h1V951h-1zM1321 785h1V951h-1zM1429 785h1V951h-1zM1439 785h1V951h-1zM1533 785h1V951h-1zM1586 785h1V951h-1zM1625 785h1V951h-1zM1634 785h1V951h-1zM1713 785h1V951h-1z"/><path fill="url(#gbs6)" d="M507 789h1V951h-1zM516 785h1V951h-1zM528 796h1V951h-1zM534 785h1V951h-1zM544 785h1V951h-1zM550 825h1V951h-1zM555 785h1V951h-1zM596 785h1V951h-1zM605 815h1V951h-1zM627 785h1V951h-1zM630 785h1V951h-1zM633 785h1V951h-1zM636 812h1V951h-1zM641 785h1V951h-1zM669 785h1V951h-1zM671 785h1V951h-1zM682 790h1V951h-1zM686 821h1V951h-1zM734 808h1V951h-1zM830 785h1V951h-1zM854 785h1V951h-1zM857 800h1V951h-1zM859 785h1V951h-1zM897 785h1V951h-1zM899 814h1V951h-1zM947 804h1V951h-1zM963 785h1V951h-1zM972 818h1V951h-1zM997 785h1V951h-1zM1008 785h1V951h-1zM1050 820h1V951h-1zM1123 785h1V951h-1zM1160 785h1V951h-1zM1166 785h1V951h-1zM1168 805h1V951h-1z"/><path fill="url(#gbs7)" d="M506 785h1V951h-1zM524 785h1V951h-1zM548 810h1V951h-1zM557 785h1V951h-1zM558 785h1V951h-1zM564 785h1V951h-1zM567 785h1V951h-1zM570 794h1V951h-1zM581 804h1V951h-1zM595 785h1V951h-1zM626 810h1V951h-1zM639 785h1V951h-1zM652 785h1V951h-1zM661 785h1V951h-1zM685 785h1V951h-1zM687 819h1V951h-1zM722 791h1V951h-1zM737 798h1V951h-1zM741 820h1V951h-1zM752 785h1V951h-1zM763 785h1V951h-1zM764 820h1V951h-1zM775 785h1V951h-1zM777 790h1V951h-1zM781 785h1V951h-1zM825 792h1V951h-1zM826 785h1V951h-1zM837 794h1V951h-1zM841 785h1V951h-1zM884 821h1V951h-1zM885 785h1V951h-1zM895 817h1V951h-1zM898 785h1V951h-1zM900 785h1V951h-1zM908 785h1V951h-1zM909 785h1V951h-1zM913 792h1V951h-1zM916 785h1V951h-1zM942 785h1V951h-1zM948 794h1V951h-1zM949 785h1V951h-1zM953 785h1V951h-1zM956 785h1V951h-1zM982 787h1V951h-1zM984 785h1V951h-1zM994 819h1V951h-1zM1011 785h1V951h-1zM1018 785h1V951h-1zM1019 800h1V951h-1zM1020 785h1V951h-1zM1034 785h1V951h-1zM1041 785h1V951h-1zM1048 785h1V951h-1zM1053 785h1V951h-1zM1068 785h1V951h-1zM1079 785h1V951h-1zM1088 786h1V951h-1zM1089 785h1V951h-1zM1099 818h1V951h-1zM1102 798h1V951h-1zM1141 785h1V951h-1zM1162 785h1V951h-1zM1180 825h1V951h-1zM1182 819h1V951h-1zM1183 821h1V951h-1zM1191 798h1V951h-1zM1198 786h1V951h-1zM1207 785h1V951h-1zM1218 785h1V951h-1zM1223 791h1V951h-1zM1232 823h1V951h-1zM1243 785h1V951h-1zM1245 816h1V951h-1zM1254 785h1V951h-1zM1261 785h1V951h-1zM1273 785h1V951h-1zM1278 815h1V951h-1zM1288 785h1V951h-1zM1315 805h1V951h-1zM1323 785h1V951h-1zM1325 785h1V951h-1zM1333 816h1V951h-1zM1335 785h1V951h-1zM1342 795h1V951h-1zM1345 785h1V951h-1zM1373 785h1V951h-1zM1394 825h1V951h-1zM1395 795h1V951h-1zM1398 824h1V951h-1zM1411 785h1V951h-1zM1416 793h1V951h-1zM1423 785h1V951h-1zM1432 798h1V951h-1zM1434 800h1V951h-1zM1438 785h1V951h-1zM1446 785h1V951h-1zM1447 785h1V951h-1zM1449 796h1V951h-1zM1453 818h1V951h-1zM1456 785h1V951h-1zM1466 785h1V951h-1zM1469 785h1V951h-1zM1471 785h1V951h-1zM1502 798h1V951h-1zM1503 785h1V951h-1zM1505 785h1V951h-1zM1506 823h1V951h-1zM1514 814h1V951h-1zM1516 785h1V951h-1zM1517 785h1V951h-1zM1525 785h1V951h-1zM1531 785h1V951h-1zM1563 785h1V951h-1zM1568 785h1V951h-1zM1571 785h1V951h-1zM1575 785h1V951h-1zM1580 785h1V951h-1zM1589 800h1V951h-1zM1609 785h1V951h-1zM1618 785h1V951h-1zM1620 785h1V951h-1zM1637 785h1V951h-1zM1638 785h1V951h-1zM1646 785h1V951h-1zM1656 785h1V951h-1zM1660 800h1V951h-1zM1673 803h1V951h-1zM1697 820h1V951h-1zM1708 810h1V951h-1zM1721 785h1V951h-1zM1723 813h1V951h-1zM1756 785h1V951h-1zM1761 785h1V951h-1z"/><path fill="url(#gbs8)" d="M503 785h1V951h-1zM508 785h1V951h-1zM511 785h1V951h-1zM523 807h1V951h-1zM527 785h1V951h-1zM545 785h1V951h-1zM566 785h1V951h-1zM571 806h1V951h-1zM578 785h1V951h-1zM587 785h1V951h-1zM589 785h1V951h-1zM599 785h1V951h-1zM629 819h1V951h-1zM653 786h1V951h-1zM659 799h1V951h-1zM660 813h1V951h-1zM667 824h1V951h-1zM692 801h1V951h-1zM695 785h1V951h-1zM697 807h1V951h-1zM699 785h1V951h-1zM736 785h1V951h-1zM738 813h1V951h-1zM739 785h1V951h-1zM756 823h1V951h-1zM765 823h1V951h-1zM769 785h1V951h-1zM780 789h1V951h-1zM827 815h1V951h-1zM835 785h1V951h-1zM861 809h1V951h-1zM896 785h1V951h-1zM911 819h1V951h-1zM917 805h1V951h-1zM918 785h1V951h-1zM923 785h1V951h-1zM936 785h1V951h-1zM939 812h1V951h-1zM957 785h1V951h-1zM973 785h1V951h-1zM991 791h1V951h-1zM996 785h1V951h-1zM999 785h1V951h-1zM1016 806h1V951h-1zM1022 785h1V951h-1zM1031 785h1V951h-1zM1049 800h1V951h-1zM1056 819h1V951h-1zM1058 825h1V951h-1zM1081 785h1V951h-1zM1084 785h1V951h-1zM1116 785h1V951h-1zM1133 824h1V951h-1zM1140 785h1V951h-1zM1153 805h1V951h-1zM1178 785h1V951h-1zM1188 785h1V951h-1zM1192 793h1V951h-1zM1195 785h1V951h-1zM1196 818h1V951h-1zM1205 785h1V951h-1zM1209 785h1V951h-1zM1213 785h1V951h-1zM1215 816h1V951h-1zM1226 785h1V951h-1zM1228 785h1V951h-1zM1230 815h1V951h-1zM1249 785h1V951h-1zM1272 824h1V951h-1zM1275 785h1V951h-1zM1280 785h1V951h-1zM1292 785h1V951h-1zM1294 798h1V951h-1zM1296 805h1V951h-1zM1299 785h1V951h-1zM1307 807h1V951h-1zM1309 785h1V951h-1zM1313 785h1V951h-1zM1322 785h1V951h-1zM1328 821h1V951h-1zM1365 785h1V951h-1zM1378 785h1V951h-1zM1383 785h1V951h-1zM1384 785h1V951h-1zM1391 826h1V951h-1zM1402 798h1V951h-1zM1412 785h1V951h-1zM1428 791h1V951h-1zM1433 785h1V951h-1zM1451 795h1V951h-1zM1455 822h1V951h-1zM1459 785h1V951h-1zM1461 806h1V951h-1zM1470 807h1V951h-1zM1488 785h1V951h-1zM1489 785h1V951h-1zM1500 785h1V951h-1zM1504 785h1V951h-1zM1540 796h1V951h-1zM1547 799h1V951h-1zM1555 785h1V951h-1zM1560 785h1V951h-1zM1582 821h1V951h-1zM1587 785h1V951h-1zM1596 785h1V951h-1zM1602 813h1V951h-1zM1607 785h1V951h-1zM1615 820h1V951h-1zM1622 808h1V951h-1zM1641 794h1V951h-1zM1642 785h1V951h-1zM1643 804h1V951h-1zM1665 785h1V951h-1zM1666 785h1V951h-1zM1705 810h1V951h-1zM1716 802h1V951h-1zM1719 793h1V951h-1zM1720 785h1V951h-1zM1724 785h1V951h-1zM1728 785h1V951h-1zM1733 797h1V951h-1zM1739 785h1V951h-1zM1745 785h1V951h-1zM1752 785h1V951h-1zM1764 785h1V951h-1z"/><path fill="url(#gbs9)" d="M601 785h1V951h-1zM770 785h1V951h-1zM793 785h1V951h-1zM794 785h1V951h-1zM929 785h1V951h-1zM1044 785h1V951h-1zM1187 823h1V951h-1zM1193 785h1V951h-1zM1194 812h1V951h-1zM1212 800h1V951h-1zM1227 785h1V951h-1zM1233 824h1V951h-1zM1266 801h1V951h-1zM1269 785h1V951h-1zM1270 785h1V951h-1zM1279 811h1V951h-1zM1283 785h1V951h-1zM1287 785h1V951h-1zM1314 785h1V951h-1zM1319 785h1V951h-1zM1326 785h1V951h-1zM1362 821h1V951h-1zM1367 796h1V951h-1zM1371 785h1V951h-1zM1408 785h1V951h-1zM1414 817h1V951h-1zM1419 785h1V951h-1zM1421 785h1V951h-1zM1422 785h1V951h-1zM1426 785h1V951h-1zM1440 785h1V951h-1zM1452 791h1V951h-1zM1473 810h1V951h-1zM1486 785h1V951h-1zM1512 793h1V951h-1zM1518 785h1V951h-1zM1520 785h1V951h-1zM1521 785h1V951h-1zM1526 785h1V951h-1zM1538 785h1V951h-1zM1544 785h1V951h-1zM1545 785h1V951h-1zM1552 790h1V951h-1zM1553 801h1V951h-1zM1562 785h1V951h-1zM1570 786h1V951h-1zM1572 785h1V951h-1zM1579 785h1V951h-1zM1585 825h1V951h-1zM1591 786h1V951h-1zM1595 790h1V951h-1zM1597 785h1V951h-1zM1612 788h1V951h-1zM1613 785h1V951h-1zM1640 810h1V951h-1zM1671 785h1V951h-1zM1677 790h1V951h-1zM1678 785h1V951h-1zM1689 810h1V951h-1zM1695 821h1V951h-1zM1702 785h1V951h-1zM1703 820h1V951h-1zM1709 785h1V951h-1zM1711 809h1V951h-1zM1725 785h1V951h-1zM1741 808h1V951h-1zM1746 785h1V951h-1z"/><path fill="url(#gbs10)" d="M772 785h1V951h-1zM978 785h1V951h-1z"/><g opacity="0.6"><rect x="625" y="693" width="172" height="90" fill="url(#spa)"/><rect x="821" y="693" width="47" height="90" fill="url(#spa)"/><rect x="882" y="693" width="883" height="90" fill="url(#spa)"/><rect x="504" y="693" width="98" height="90" fill="url(#spa)"/><rect x="625" y="861" width="172" height="90" fill="url(#spb)"/><rect x="821" y="861" width="47" height="90" fill="url(#spb)"/><rect x="882" y="861" width="883" height="90" fill="url(#spb)"/><rect x="504" y="861" width="98" height="90" fill="url(#spb)"/></g><g opacity="0.6"><rect x="504" y="630" width="98" height="110" fill="url(#mna)"/><rect x="625" y="630" width="172" height="110" fill="url(#mna)"/><rect x="821" y="630" width="47" height="110" fill="url(#mna)"/><rect x="882" y="630" width="883" height="110" fill="url(#mna)"/><rect x="504" y="799" width="98" height="110" fill="url(#mnb)"/><rect x="625" y="799" width="172" height="110" fill="url(#mnb)"/><rect x="821" y="799" width="47" height="110" fill="url(#mnb)"/><rect x="882" y="799" width="883" height="110" fill="url(#mnb)"/></g><path d="M498 783.5H1765" stroke="#a0a0a0"/><path d="M498 784.5H1765" stroke="#000"/><path d="M507.5 616V951" stroke="#f0c8c8" stroke-width="1"/><path d="M1131.5 616V952" stroke="#d0d0d0" stroke-width="1" stroke-dasharray="2 3"/></svg><div class="a" style="left:1765px;top:616px;width:75px;height:336px;background:#2a2a2a;border:1px solid #000;border-left:none;border-top:none"></div><div class="a" style="left:1765px;top:783px;width:75px;height:1px;background:#000"></div><div class="t" style="left:1773px;top:617px;color:#b0b0b0">Hz</div><div class="t" style="left:1773px;top:672px;color:#707070">30k</div><div class="t" style="left:1773px;top:707px;color:#707070">20k</div><div class="t" style="left:1773px;top:742px;color:#b0b0b0">10k</div><div class="t" style="left:1773px;top:785px;color:#b0b0b0">Hz</div><div class="t" style="left:1773px;top:840px;color:#707070">30k</div><div class="t" style="left:1773px;top:875px;color:#707070">20k</div><div class="t" style="left:1773px;top:910px;color:#b0b0b0">10k</div><svg class="a" style="left:0;top:0" width="1920" height="960"><path d="M1766 679.5h4M1766 714.5h4M1766 749.5h4M1766 782.5h4M1766 847.5h4M1766 882.5h4M1766 917.5h4M1766 950.5h4" stroke="#a0a0a0"/></svg><div class="pn" style="left:1851px;top:71px;width:69px;height:987px"></div><div class="t" style="left:1863px;top:78px;color:#d0d0d0">Levels</div><div class="a" style="left:1899px;top:75px;width:1px;height:20px;background:#2e2e2e"></div><div class="a" style="left:1857px;top:105px;width:37px;height:949px;background:#262626;border:1px solid #000"></div><div class="a" style="left:1857px;top:114px;width:37px;height:2px;background:#000"></div><div class="a" style="left:1875px;top:105px;width:1px;height:948px;background:#000"></div><div class="a" style="left:1858px;top:467px;width:17px;height:586px;background:#3ff04a"></div><div class="a" style="left:1876px;top:467px;width:17px;height:586px;background:#3ff04a"></div><div class="a" style="left:1876px;top:432px;width:17px;height:35px;background:#f2cc48"></div><div class="a" style="left:1858px;top:384px;width:17px;height:2px;background:#e8e400"></div><div class="a" style="left:1876px;top:356px;width:17px;height:2px;background:#e8e400"></div><div class="t" style="left:1902px;top:109px;color:#a0a0a0;font-size:11px;letter-spacing:-0.6px">0</div><div class="t" style="left:1900px;top:168px;color:#a0a0a0;font-size:11px;letter-spacing:-0.6px">-3</div><div class="t" style="left:1900px;top:226px;color:#a0a0a0;font-size:11px;letter-spacing:-0.6px">-6</div><div class="t" style="left:1900px;top:285px;color:#a0a0a0;font-size:11px;letter-spacing:-0.6px">-9</div><div class="t" style="left:1900px;top:343px;color:#a0a0a0;font-size:11px;letter-spacing:-0.6px">-12</div><div class="t" style="left:1900px;top:402px;color:#a0a0a0;font-size:11px;letter-spacing:-0.6px">-15</div><div class="t" style="left:1900px;top:460px;color:#a0a0a0;font-size:11px;letter-spacing:-0.6px">-18</div><div class="t" style="left:1900px;top:519px;color:#a0a0a0;font-size:11px;letter-spacing:-0.6px">-21</div><div class="t" style="left:1900px;top:577px;color:#a0a0a0;font-size:11px;letter-spacing:-0.6px">-24</div><div class="t" style="left:1900px;top:635px;color:#a0a0a0;font-size:11px;letter-spacing:-0.6px">-27</div><div class="t" style="left:1900px;top:694px;color:#a0a0a0;font-size:11px;letter-spacing:-0.6px">-30</div><div class="t" style="left:1900px;top:752px;color:#a0a0a0;font-size:11px;letter-spacing:-0.6px">-33</div><div class="t" style="left:1900px;top:811px;color:#a0a0a0;font-size:11px;letter-spacing:-0.6px">-36</div><div class="t" style="left:1900px;top:869px;color:#a0a0a0;font-size:11px;letter-spacing:-0.6px">-39</div><div class="t" style="left:1900px;top:928px;color:#a0a0a0;font-size:11px;letter-spacing:-0.6px">-42</div><div class="t" style="left:1900px;top:986px;color:#a0a0a0;font-size:11px;letter-spacing:-0.6px">-45</div><div class="t" style="left:1900px;top:1045px;color:#a0a0a0;font-size:11px;letter-spacing:-0.6px">dB</div><svg class="a" style="left:0;top:0" width="1920" height="1080"><path d="M1894 116.5h5M1894 135.5h3M1894 155.5h3M1894 174.5h5M1894 194.5h3M1894 213.5h3M1894 233.5h5M1894 252.5h3M1894 272.5h3M1894 291.5h5M1894 311.5h3M1894 330.5h3M1894 350.5h5M1894 369.5h3M1894 389.5h3M1894 408.5h5M1894 428.5h3M1894 447.5h3M1894 467.5h5M1894 486.5h3M1894 506.5h3M1894 525.5h5M1894 545.5h3M1894 564.5h3M1894 584.5h5M1894 603.5h3M1894 623.5h3M1894 642.5h5M1894 661.5h3M1894 681.5h3M1894 700.5h5M1894 720.5h3M1894 739.5h3M1894 759.5h5M1894 778.5h3M1894 798.5h3M1894 817.5h5M1894 837.5h3M1894 856.5h3M1894 876.5h5M1894 895.5h3M1894 915.5h3M1894 934.5h5M1894 954.5h3M1894 973.5h3M1894 993.5h5M1894 1012.5h3M1894 1032.5h3M1894 1051.5h5M1894 1071.5h3M1894 1090.5h3" stroke="#a8a8a8"/></svg><div class="pn" style="left:1px;top:964px;width:704px;height:94px"></div><div class="t" style="left:13px;top:971px;color:#d0d0d0">Transport</div><div class="hb" style="left:68px;top:974px"></div><svg class="a" style="left:200px;top:997px" width="300" height="20">
<rect x="13" y="5" width="9" height="9" fill="#b8b8b8"/>
<path d="M42 4L52 10L42 16Z" fill="#20b020"/>
<rect x="73" y="5" width="3" height="10" fill="#c0c0c0"/><rect x="79" y="5" width="3" height="10" fill="#c0c0c0"/>
<rect x="102" y="5" width="2" height="10" fill="#c0c0c0"/><path d="M112 5V15L105 10Z" fill="#c0c0c0"/>
<path d="M132 10L138 5V15Z M138 10L144 5V15Z" fill="#c0c0c0"/>
<path d="M161 5L167 10L161 15Z M167 5L173 10L167 15Z" fill="#c0c0c0"/>
<path d="M193 5L200 10L193 15Z" fill="#c0c0c0"/><rect x="201" y="5" width="2" height="10" fill="#c0c0c0"/>
<circle cx="227.5" cy="10.5" r="5.5" fill="#f03838"/>
<path d="M251 8V15H264V10" fill="none" stroke="#2e8ee8" stroke-width="2"/><path d="M254 11Q255 6 261 6M259 3L263 6L259 9" fill="none" stroke="#2e8ee8" stroke-width="1.8"/>
<path d="M282 10H292M284 6L281 10L284 14M290 6L293 10L290 14M287 5V15" stroke="#555" stroke-width="1.3" fill="none"/>
</svg><div class="pn" style="left:709px;top:964px;width:344px;height:94px"></div><div class="t" style="left:721px;top:971px;color:#d0d0d0">Time</div><div class="hb" style="left:754px;top:974px"></div><div class="t" style="left:792px;top:1009px;font-size:48px;line-height:50px;color:#8e8e8e;letter-spacing:-1.1px">0:05.869</div><div class="pn" style="left:1057px;top:964px;width:243px;height:94px"></div><div class="t" style="left:1069px;top:971px;color:#d0d0d0">Zoom</div><div class="hb" style="left:1106px;top:974px"></div><svg class="a" style="left:1100px;top:990px" width="160" height="60"><path d="M12.5 11V23" stroke="#c4c4c4" stroke-width="1.3"/><path d="M12.5 9l2.5 3h-5zM12.5 25l2.5 -3h-5z" fill="#c4c4c4"/><circle cx="19.5" cy="16.5" r="4.2" fill="none" stroke="#c4c4c4" stroke-width="1.4"/><path d="M22.8 19.8L26.3 23.3" stroke="#c4c4c4" stroke-width="2.2" stroke-linecap="round"/><path d="M17.0 16.5h5" stroke="#c4c4c4" stroke-width="1.3"/><path d="M19.5 14.0v5" stroke="#c4c4c4" stroke-width="1.3"/><path d="M42.5 11V23" stroke="#c4c4c4" stroke-width="1.3"/><path d="M42.5 9l2.5 3h-5zM42.5 25l2.5 -3h-5z" fill="#c4c4c4"/><circle cx="49.5" cy="16.5" r="4.2" fill="none" stroke="#c4c4c4" stroke-width="1.4"/><path d="M52.8 19.8L56.3 23.3" stroke="#c4c4c4" stroke-width="2.2" stroke-linecap="round"/><path d="M47.0 16.5h5" stroke="#c4c4c4" stroke-width="1.3"/><path d="M72 10.5H86" stroke="#555" stroke-width="1.3"/><path d="M70 10.5l3 2.5v-5zM88 10.5l-3 2.5v-5z" fill="#555"/><circle cx="79" cy="17.5" r="4.2" fill="none" stroke="#555" stroke-width="1.4"/><path d="M82.3 20.8L85.8 24.3" stroke="#555" stroke-width="2.2" stroke-linecap="round"/><path d="M76.5 17.5h5" stroke="#555" stroke-width="1.3"/><path d="M102.5 12.5V17L100.5 18.5L102.5 20V24.5" stroke="#c4c4c4" stroke-width="1.3" fill="none"/><circle cx="113" cy="18" r="4.2" fill="none" stroke="#c4c4c4" stroke-width="1.4"/><path d="M116.3 21.3L119.8 24.8" stroke="#c4c4c4" stroke-width="2.2" stroke-linecap="round"/><path d="M131 12.5V17L129 18.5L131 20V24.5M135 12.5V17L137 18.5L135 20V24.5" stroke="#c4c4c4" stroke-width="1.3" fill="none"/><circle cx="142.5" cy="18" r="4.2" fill="none" stroke="#c4c4c4" stroke-width="1.4"/><path d="M145.8 21.3L149.3 24.8" stroke="#c4c4c4" stroke-width="2.2" stroke-linecap="round"/><path d="M41.5 37.5H55" stroke="#c4c4c4" stroke-width="1.3"/><path d="M39.5 37.5l3 2.5v-5zM57 37.5l-3 2.5v-5z" fill="#c4c4c4"/><circle cx="48" cy="44.5" r="4.2" fill="none" stroke="#c4c4c4" stroke-width="1.4"/><path d="M51.3 47.8L54.8 51.3" stroke="#c4c4c4" stroke-width="2.2" stroke-linecap="round"/><path d="M45.5 44.5h5" stroke="#c4c4c4" stroke-width="1.3"/><path d="M48 42.0v5" stroke="#c4c4c4" stroke-width="1.3"/><path d="M78 35l2.5 3h-5zM78 52l2.5 -3h-5zM70 43.5l3 2.5v-5zM86 43.5l-3 2.5v-5z" fill="#555"/><circle cx="78" cy="43.5" r="4.2" fill="none" stroke="#555" stroke-width="1.4"/><path d="M81.3 46.8L84.8 50.3" stroke="#555" stroke-width="2.2" stroke-linecap="round"/><path d="M75.5 43.5h5" stroke="#555" stroke-width="1.3"/><path d="M103.5 39.5V44L105.5 45.5L103.5 47V51.5" stroke="#c4c4c4" stroke-width="1.3" fill="none"/><circle cx="112.5" cy="45" r="4.2" fill="none" stroke="#c4c4c4" stroke-width="1.4"/><path d="M115.8 48.3L119.3 51.8" stroke="#c4c4c4" stroke-width="2.2" stroke-linecap="round"/><path d="M131 37.5h5M131 51.5h5" stroke="#555" stroke-width="1.2"/><path d="M133.5 41V48" stroke="#555" stroke-width="1.3"/><path d="M133.5 39l2.5 3h-5zM133.5 50l2.5 -3h-5z" fill="#555"/><circle cx="140.5" cy="44.5" r="4.2" fill="none" stroke="#555" stroke-width="1.4"/><path d="M143.8 47.8L147.3 51.3" stroke="#555" stroke-width="2.2" stroke-linecap="round"/><path d="M138.0 44.5h5" stroke="#555" stroke-width="1.3"/><path d="M140.5 42.0v5" stroke="#555" stroke-width="1.3"/></svg><div class="pn" style="left:1305px;top:964px;width:541px;height:94px"></div><div class="t" style="left:1316px;top:971px;color:#d0d0d0">Selection/View</div><div class="hb" style="left:1398px;top:974px"></div><div class="t" style="left:1366px;top:996px;color:#a0a0a0">Start</div><div class="t" style="left:1437px;top:996px;color:#a0a0a0">End</div><div class="t" style="left:1508px;top:996px;color:#a0a0a0">Duration</div><div class="t" style="left:1316px;top:1015px;color:#a0a0a0">Selection</div><div class="t" style="left:1316px;top:1036px;color:#a0a0a0">View</div><div class="t blue" style="left:1368px;top:1015px">6:21.583</div><div class="t blue" style="left:1439px;top:1015px">6:21.583</div><div class="t blue" style="left:1510px;top:1015px">0:00.000</div><div class="t blue" style="left:1368px;top:1036px">0:00.000</div><div class="t blue" style="left:1439px;top:1036px">12:43.770</div><div class="t blue" style="left:1510px;top:1036px">12:43.770</div><div class="a" style="left:0;top:1060px;width:1920px;height:20px;background:#2a2a2a"></div><div class="t" style="left:8px;top:1064px;color:#a0a0a0">Playing</div><div class="a" style="left:1352px;top:1062px;width:1px;height:15px;background:#2e2e2e"></div><div class="a" style="left:1402px;top:1062px;width:1px;height:15px;background:#2e2e2e"></div><div class="a" style="left:1501px;top:1062px;width:1px;height:15px;background:#2e2e2e"></div><div class="a" style="left:1647px;top:1062px;width:1px;height:15px;background:#2e2e2e"></div><div class="a" style="left:1716px;top:1062px;width:1px;height:15px;background:#2e2e2e"></div><div class="a" style="left:1785px;top:1062px;width:1px;height:15px;background:#2e2e2e"></div><div class="a" style="left:1871px;top:1062px;width:1px;height:15px;background:#2e2e2e"></div><div class="t" style="left:1510px;top:1064px;color:#a0a0a0">96000 Hz • 24-bit • Stereo</div><div class="t" style="left:1656px;top:1064px;color:#a0a0a0">419,55 MB</div><div class="t" style="left:1732px;top:1064px;color:#a0a0a0">12:43.770</div><div class="t" style="left:1794px;top:1064px;color:#a0a0a0">317,69 GB free</div></body></html>
